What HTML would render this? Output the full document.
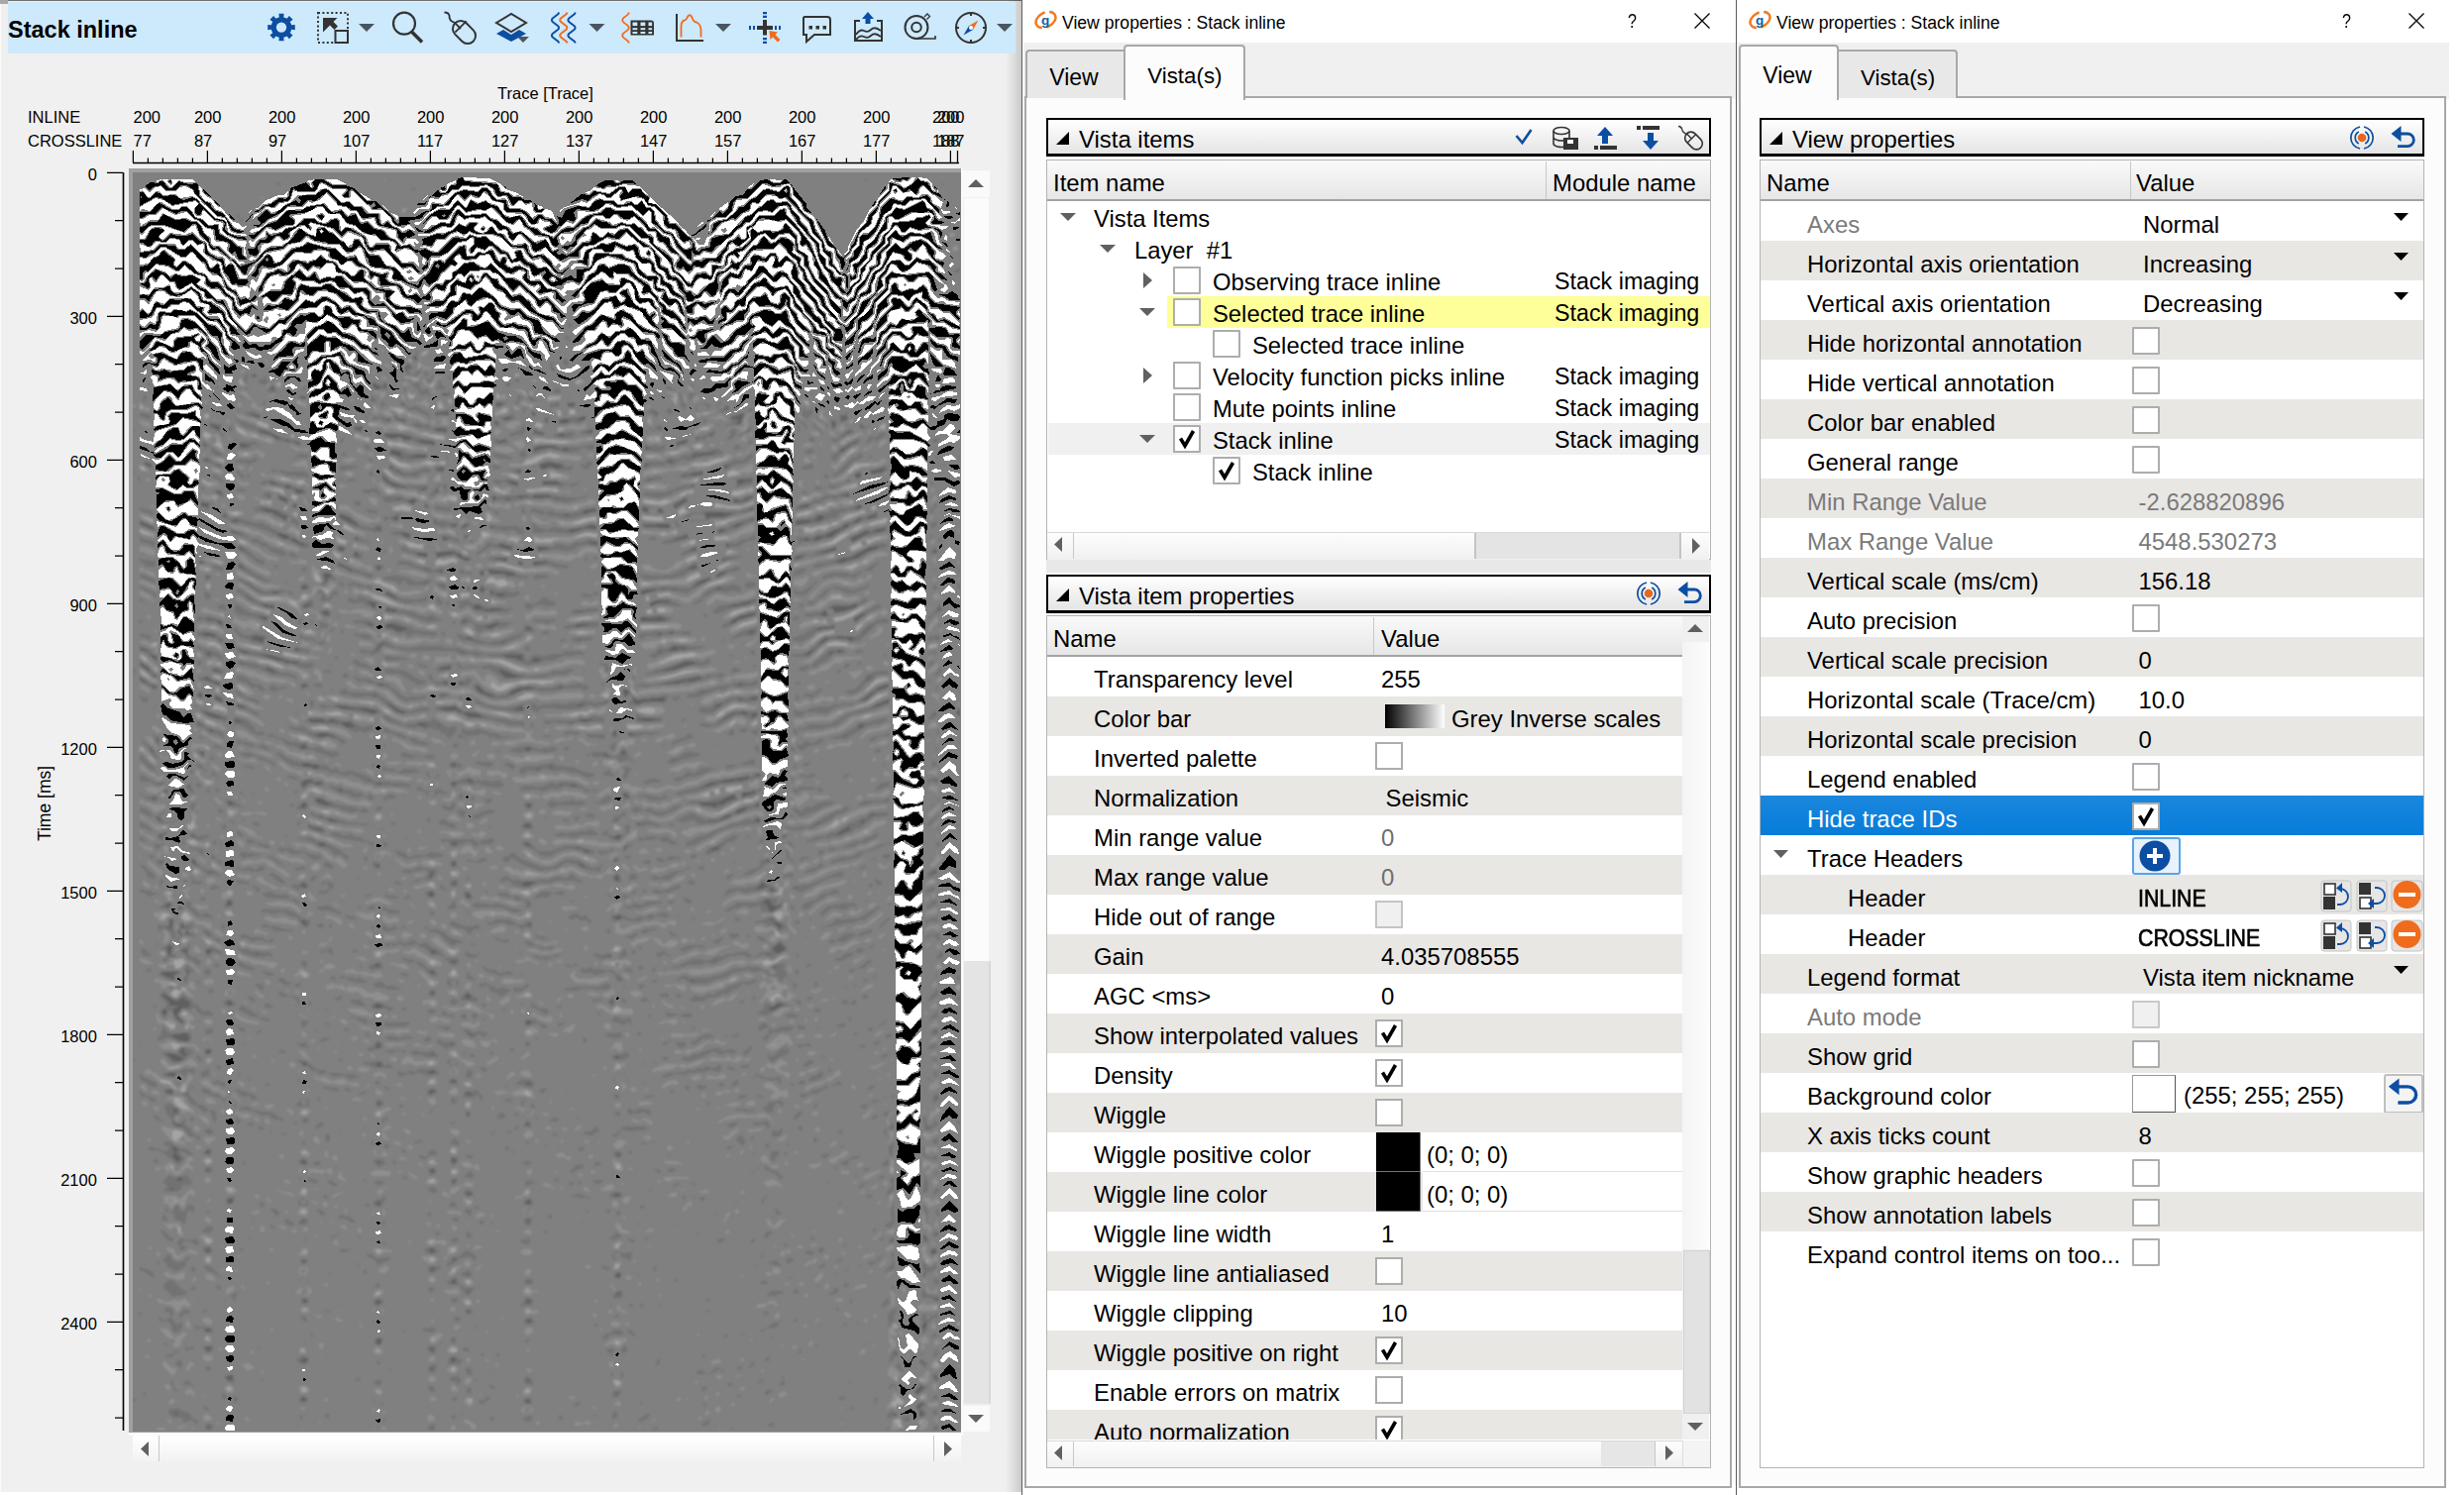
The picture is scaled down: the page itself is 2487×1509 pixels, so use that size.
<!DOCTYPE html>
<html><head><meta charset="utf-8"><title>Stack inline</title>
<style>
html,body{margin:0;padding:0;width:2487px;height:1509px;overflow:hidden;background:#fff}
body{position:relative;font-family:"Liberation Sans",sans-serif}
div{position:absolute;box-sizing:content-box}
.t{white-space:nowrap}
</style></head><body>
<div style="left:1032px;top:0px;width:720px;height:1509px;background:#ffffff"></div>
<svg style="position:absolute;left:1043px;top:10px" width="25" height="20" viewBox="0 0 25 20"><ellipse cx="12.5" cy="10" rx="10.6" ry="7.2" transform="rotate(-28 12.5 10)" fill="none" stroke="#f47a20" stroke-width="2.5" pathLength="100" stroke-dasharray="42 8" stroke-dashoffset="12"/><text x="12.2" y="15.2" font-size="13.5" font-family="Liberation Sans" font-weight="bold" fill="#0c5fa8" text-anchor="middle">g</text></svg>
<div class="t" style="left:1072px;top:13.1px;font-size:17.6px;line-height:20.2px;color:#000;font-weight:normal;">View properties : Stack inline</div>
<div class="t" style="left:1643px;top:10.1px;font-size:20px;line-height:23.0px;color:#000;font-weight:normal;transform:scaleX(0.8);transform-origin:left">?</div>
<svg style="position:absolute;left:1710px;top:13px" width="16" height="16"><path d="M0.5 0.5 L15.5 15.5 M15.5 0.5 L0.5 15.5" stroke="#000" stroke-width="1.3"/></svg>
<div style="left:1033px;top:43px;width:719px;height:57px;background:#f0f0f0"></div>
<div style="left:1034px;top:97px;width:710px;height:1401px;border:2px solid #a8a8a8;background:#fcfcfc"></div>
<div style="left:1035px;top:50px;width:100px;height:47px;border:2px solid #a8a8a8;border-bottom:none;border-right:none;border-radius:4px 0 0 0;background:#e8e8e8"></div>
<div style="left:1134px;top:45px;width:119px;height:54px;border:2px solid #a8a8a8;border-bottom:none;border-radius:4px 4px 0 0;background:#fcfcfc"></div>
<div class="t" style="left:1059.3px;top:65.0px;font-size:23px;line-height:26.4px;color:#000;font-weight:normal;">View</div>
<div class="t" style="left:1158.3px;top:63.5px;font-size:22.3px;line-height:25.6px;color:#000;font-weight:normal;">Vista(s)</div>
<div style="left:1031px;top:0px;width:1px;height:1509px;background:#5a5a5a"></div>
<div style="left:1056px;top:119px;width:667px;height:34px;border:2px solid #000;border-bottom-width:3px;background:linear-gradient(#ffffff,#e4e4e4)"></div>
<svg style="position:absolute;left:1066px;top:133px" width="13" height="13"><path d="M13 0 L13 13 L0 13 Z" fill="#000"/></svg>
<div class="t" style="left:1089px;top:127.4px;font-size:23.9px;line-height:27.5px;color:#000;font-weight:normal;">Vista items</div>
<svg style="position:absolute;left:1528px;top:126px" width="200" height="28" viewBox="0 0 200 28"><path d="M2.5 11 L8.5 18 L17.5 5" fill="none" stroke="#0b4ea2" stroke-width="2.6"/><ellipse cx="48" cy="6" rx="8" ry="3.5" fill="none" stroke="#333" stroke-width="1.6"/><path d="M40 6 V19 A8 3.5 0 0 0 52 22 M40 12.5 A8 3.5 0 0 0 52 15.5 M56 6 V13" fill="none" stroke="#333" stroke-width="1.6"/><rect x="50" y="13" width="15" height="12" fill="#333"/><rect x="54" y="15" width="6" height="4" fill="#fff"/><path d="M92 2 L100 11 H95 V19 H89 V11 H84 Z" fill="#0b4ea2"/><rect x="81" y="21" width="4" height="4" fill="#333"/><rect x="87" y="21" width="17" height="4" fill="#333"/><rect x="124" y="1" width="4" height="4" fill="#333"/><rect x="130" y="1" width="17" height="4" fill="#333"/><path d="M135 8 H141 V16 H146 L138 25 L130 16 H135 Z" fill="#0b4ea2"/><path d="M166 1.5 Q169 1.5 169.5 4 Q170 7 172 8 L175 10" fill="none" stroke="#333" stroke-width="1.4"/><rect x="175.5" y="6" width="12" height="20" rx="6" transform="rotate(-45 181.5 16)" fill="none" stroke="#333" stroke-width="1.6"/><path d="M175.2 18.1 L183.6 9.7 M174.6 9.1 L179.4 13.9" stroke="#333" stroke-width="1.4"/></svg>
<div style="left:1056px;top:161px;width:669px;height:402px;border:1px solid #b4b4b4;background:#fff"></div>
<div style="left:1057px;top:162px;width:669px;height:39px;background:linear-gradient(#fafafa,#e6e6e6);border-bottom:2px solid #a3a3a3"></div>
<div class="t" style="left:1063px;top:171.0px;font-size:23.9px;line-height:27.5px;color:#000;font-weight:normal;">Item name</div>
<div style="left:1560px;top:163px;width:1px;height:38px;background:#c8c8c8"></div>
<div class="t" style="left:1567px;top:171.0px;font-size:23.9px;line-height:27.5px;color:#000;font-weight:normal;">Module name</div>
<svg style="position:absolute;left:1070px;top:215px" width="16" height="8"><path d="M0 0 L16 0 L8.0 8 Z" fill="#606060"/></svg>
<div class="t" style="left:1104px;top:206.9px;font-size:23.8px;line-height:27.4px;color:#000;font-weight:normal;white-space:pre">Vista Items</div>
<svg style="position:absolute;left:1110px;top:247px" width="16" height="8"><path d="M0 0 L16 0 L8.0 8 Z" fill="#606060"/></svg>
<div class="t" style="left:1145px;top:238.9px;font-size:23.8px;line-height:27.4px;color:#000;font-weight:normal;white-space:pre">Layer  #1</div>
<svg style="position:absolute;left:1154px;top:275px" width="9" height="16"><path d="M0 0 L9 8.0 L0 16 Z" fill="#606060"/></svg>
<div style="left:1184px;top:269px;width:24px;height:24px;border:2px solid #adadad;background:#ffffff;border-radius:1px"></div>
<div class="t" style="left:1224px;top:270.9px;font-size:23.8px;line-height:27.4px;color:#000;font-weight:normal;white-space:pre">Observing trace inline</div>
<div class="t" style="left:1569px;top:271.3px;font-size:23.3px;line-height:26.8px;color:#000;font-weight:normal;">Stack imaging</div>
<div style="left:1178px;top:299px;width:548px;height:32px;background:#ffff99"></div>
<svg style="position:absolute;left:1150px;top:311px" width="16" height="8"><path d="M0 0 L16 0 L8.0 8 Z" fill="#606060"/></svg>
<div style="left:1184px;top:301px;width:24px;height:24px;border:2px solid #adadad;background:#ffffff;border-radius:1px"></div>
<div class="t" style="left:1224px;top:302.9px;font-size:23.8px;line-height:27.4px;color:#000;font-weight:normal;white-space:pre">Selected trace inline</div>
<div class="t" style="left:1569px;top:303.3px;font-size:23.3px;line-height:26.8px;color:#000;font-weight:normal;">Stack imaging</div>
<div style="left:1224px;top:333px;width:24px;height:24px;border:2px solid #adadad;background:#ffffff;border-radius:1px"></div>
<div class="t" style="left:1264px;top:334.9px;font-size:23.8px;line-height:27.4px;color:#000;font-weight:normal;white-space:pre">Selected trace inline</div>
<svg style="position:absolute;left:1154px;top:371px" width="9" height="16"><path d="M0 0 L9 8.0 L0 16 Z" fill="#606060"/></svg>
<div style="left:1184px;top:365px;width:24px;height:24px;border:2px solid #adadad;background:#ffffff;border-radius:1px"></div>
<div class="t" style="left:1224px;top:366.9px;font-size:23.8px;line-height:27.4px;color:#000;font-weight:normal;white-space:pre">Velocity function picks inline</div>
<div class="t" style="left:1569px;top:367.3px;font-size:23.3px;line-height:26.8px;color:#000;font-weight:normal;">Stack imaging</div>
<div style="left:1184px;top:397px;width:24px;height:24px;border:2px solid #adadad;background:#ffffff;border-radius:1px"></div>
<div class="t" style="left:1224px;top:398.9px;font-size:23.8px;line-height:27.4px;color:#000;font-weight:normal;white-space:pre">Mute points inline</div>
<div class="t" style="left:1569px;top:399.3px;font-size:23.3px;line-height:26.8px;color:#000;font-weight:normal;">Stack imaging</div>
<div style="left:1058px;top:427px;width:668px;height:32px;background:#f0f0f0"></div>
<svg style="position:absolute;left:1150px;top:439px" width="16" height="8"><path d="M0 0 L16 0 L8.0 8 Z" fill="#606060"/></svg>
<div style="left:1184px;top:429px;width:24px;height:24px;border:2px solid #adadad;background:#ffffff;border-radius:1px"></div>
<svg style="position:absolute;left:1184px;top:429px" width="28" height="28" viewBox="0 0 28 28"><path d="M7.5 13.5 L12 21 L20.5 6" fill="none" stroke="#000" stroke-width="3.6" stroke-linejoin="miter" stroke-linecap="butt"/></svg>
<div class="t" style="left:1224px;top:430.9px;font-size:23.8px;line-height:27.4px;color:#000;font-weight:normal;white-space:pre">Stack inline</div>
<div class="t" style="left:1569px;top:431.3px;font-size:23.3px;line-height:26.8px;color:#000;font-weight:normal;">Stack imaging</div>
<div style="left:1224px;top:461px;width:24px;height:24px;border:2px solid #adadad;background:#ffffff;border-radius:1px"></div>
<svg style="position:absolute;left:1224px;top:461px" width="28" height="28" viewBox="0 0 28 28"><path d="M7.5 13.5 L12 21 L20.5 6" fill="none" stroke="#000" stroke-width="3.6" stroke-linejoin="miter" stroke-linecap="butt"/></svg>
<div class="t" style="left:1264px;top:462.9px;font-size:23.8px;line-height:27.4px;color:#000;font-weight:normal;white-space:pre">Stack inline</div>
<div style="left:1057px;top:537px;width:668px;height:27px;background:linear-gradient(#fdfdfd,#f0f0f0);border-top:1px solid #d8d8d8"></div>
<div style="left:1083px;top:538px;width:1px;height:26px;background:#c8c8c8"></div>
<svg style="position:absolute;left:1064px;top:542px" width="8" height="15"><path d="M8 0 L0 7.5 L8 15 Z" fill="#606060"/></svg>
<div style="left:1488px;top:538px;width:209px;height:26px;background:#e4e4e4;border-left:2px solid #c4c4c4;border-right:2px solid #c4c4c4;box-sizing:border-box"></div>
<svg style="position:absolute;left:1708px;top:543px" width="8" height="16"><path d="M0 0 L8 8.0 L0 16 Z" fill="#606060"/></svg>
<div style="left:1056px;top:565px;width:671px;height:13px;background:#e8e8e8"></div>
<div style="left:1056px;top:580px;width:667px;height:34px;border:2px solid #000;border-bottom-width:3px;background:linear-gradient(#ffffff,#e4e4e4)"></div>
<svg style="position:absolute;left:1066px;top:594px" width="13" height="13"><path d="M13 0 L13 13 L0 13 Z" fill="#000"/></svg>
<div class="t" style="left:1089px;top:588.4px;font-size:23.9px;line-height:27.5px;color:#000;font-weight:normal;">Vista item properties</div>
<svg style="position:absolute;left:0;top:0;overflow:visible" width="1" height="1"><path d="M1662.06 587.97 A11.2 11.2 0 0 0 1662.06 610.03 M1665.94 610.03 A11.2 11.2 0 0 0 1665.94 587.97 M1660.81 593.00 A6.8 6.8 0 0 0 1660.81 605.00 M1667.19 605.00 A6.8 6.8 0 0 0 1667.19 593.00" fill="none" stroke="#0b4ea2" stroke-width="1.7"/><circle cx="1664" cy="599" r="4.3" fill="#e8671e"/><path d="M1703 595 H1710 A6.3 6.3 0 0 1 1710 607.6 H1700" fill="none" stroke="#0b4ea2" stroke-width="2.8"/><path d="M1693.5 595 L1703.5 587 L1703.5 603 Z" fill="#0b4ea2"/></svg>
<div style="left:1056px;top:621px;width:669px;height:859px;border:1px solid #b4b4b4;background:#fff"></div>
<div style="left:1057px;top:622px;width:642px;height:39px;background:linear-gradient(#fafafa,#e6e6e6);border-bottom:2px solid #a3a3a3"></div>
<div class="t" style="left:1063px;top:631.0px;font-size:23.9px;line-height:27.5px;color:#000;font-weight:normal;">Name</div>
<div style="left:1386px;top:623px;width:1px;height:38px;background:#c8c8c8"></div>
<div class="t" style="left:1394px;top:631.0px;font-size:23.9px;line-height:27.5px;color:#000;font-weight:normal;">Value</div>
<div style="left:1057px;top:663px;width:642px;height:790px;overflow:hidden">
<div class="t" style="left:47px;top:8.6px;font-size:23.9px;line-height:27.5px;color:#000">Transparency level</div>
<div class="t" style="left:337px;top:8.6px;font-size:23.9px;line-height:27.5px;color:#000">255</div>
<div style="left:0;top:40px;width:642px;height:40px;background:#e9e7e4"></div>
<div class="t" style="left:47px;top:48.6px;font-size:23.9px;line-height:27.5px;color:#000">Color bar</div>
<div style="left:341px;top:48px;width:60px;height:24px;background:linear-gradient(90deg,#000,#fff)"></div>
<div class="t" style="left:408px;top:48.6px;font-size:23.9px;line-height:27.5px;color:#000">Grey Inverse scales</div>
<div class="t" style="left:47px;top:88.6px;font-size:23.9px;line-height:27.5px;color:#000">Inverted palette</div>
<div style="left:331px;top:86px;width:24px;height:24px;border:2px solid #adadad;background:#fff"></div>
<div style="left:0;top:120px;width:642px;height:40px;background:#e9e7e4"></div>
<div class="t" style="left:47px;top:128.6px;font-size:23.9px;line-height:27.5px;color:#000">Normalization</div>
<div class="t" style="left:341.5px;top:128.6px;font-size:23.9px;line-height:27.5px;color:#000">Seismic</div>
<div class="t" style="left:47px;top:168.6px;font-size:23.9px;line-height:27.5px;color:#000">Min range value</div>
<div class="t" style="left:337px;top:168.6px;font-size:23.9px;line-height:27.5px;color:#6e6e6e">0</div>
<div style="left:0;top:200px;width:642px;height:40px;background:#e9e7e4"></div>
<div class="t" style="left:47px;top:208.6px;font-size:23.9px;line-height:27.5px;color:#000">Max range value</div>
<div class="t" style="left:337px;top:208.6px;font-size:23.9px;line-height:27.5px;color:#6e6e6e">0</div>
<div class="t" style="left:47px;top:248.6px;font-size:23.9px;line-height:27.5px;color:#000">Hide out of range</div>
<div style="left:331px;top:246px;width:24px;height:24px;border:2px solid #c4c4c4;background:#f0f0f0"></div>
<div style="left:0;top:280px;width:642px;height:40px;background:#e9e7e4"></div>
<div class="t" style="left:47px;top:288.6px;font-size:23.9px;line-height:27.5px;color:#000">Gain</div>
<div class="t" style="left:337px;top:288.6px;font-size:23.9px;line-height:27.5px;color:#000">4.035708555</div>
<div class="t" style="left:47px;top:328.6px;font-size:23.9px;line-height:27.5px;color:#000">AGC &lt;ms&gt;</div>
<div class="t" style="left:337px;top:328.6px;font-size:23.9px;line-height:27.5px;color:#000">0</div>
<div style="left:0;top:360px;width:642px;height:40px;background:#e9e7e4"></div>
<div class="t" style="left:47px;top:368.6px;font-size:23.9px;line-height:27.5px;color:#000">Show interpolated values</div>
<div style="left:331px;top:366px;width:24px;height:24px;border:2px solid #adadad;background:#fff"></div>
<svg style="position:absolute;left:331px;top:366px" width="28" height="28" viewBox="0 0 28 28"><path d="M7.5 13.5 L12 21 L20.5 6" fill="none" stroke="#000" stroke-width="3.6"/></svg>
<div class="t" style="left:47px;top:408.6px;font-size:23.9px;line-height:27.5px;color:#000">Density</div>
<div style="left:331px;top:406px;width:24px;height:24px;border:2px solid #adadad;background:#fff"></div>
<svg style="position:absolute;left:331px;top:406px" width="28" height="28" viewBox="0 0 28 28"><path d="M7.5 13.5 L12 21 L20.5 6" fill="none" stroke="#000" stroke-width="3.6"/></svg>
<div style="left:0;top:440px;width:642px;height:40px;background:#e9e7e4"></div>
<div class="t" style="left:47px;top:448.6px;font-size:23.9px;line-height:27.5px;color:#000">Wiggle</div>
<div style="left:331px;top:446px;width:24px;height:24px;border:2px solid #adadad;background:#fff"></div>
<div class="t" style="left:47px;top:488.6px;font-size:23.9px;line-height:27.5px;color:#000">Wiggle positive color</div>
<div style="left:379px;top:480px;width:262px;height:39px;background:#fff;border-bottom:1px solid #e0e0e0"></div>
<div style="left:332px;top:480px;width:44px;height:39px;background:#000;border-right:1px solid #777;border-bottom:1px solid #777"></div>
<div class="t" style="left:383px;top:488.6px;font-size:23.9px;line-height:27.5px;color:#000">(0; 0; 0)</div>
<div style="left:0;top:520px;width:642px;height:40px;background:#e9e7e4"></div>
<div class="t" style="left:47px;top:528.6px;font-size:23.9px;line-height:27.5px;color:#000">Wiggle line color</div>
<div style="left:379px;top:520px;width:262px;height:39px;background:#fff;border-bottom:1px solid #e0e0e0"></div>
<div style="left:332px;top:520px;width:44px;height:39px;background:#000;border-right:1px solid #777;border-bottom:1px solid #777"></div>
<div class="t" style="left:383px;top:528.6px;font-size:23.9px;line-height:27.5px;color:#000">(0; 0; 0)</div>
<div class="t" style="left:47px;top:568.6px;font-size:23.9px;line-height:27.5px;color:#000">Wiggle line width</div>
<div class="t" style="left:337px;top:568.6px;font-size:23.9px;line-height:27.5px;color:#000">1</div>
<div style="left:0;top:600px;width:642px;height:40px;background:#e9e7e4"></div>
<div class="t" style="left:47px;top:608.6px;font-size:23.9px;line-height:27.5px;color:#000">Wiggle line antialiased</div>
<div style="left:331px;top:606px;width:24px;height:24px;border:2px solid #adadad;background:#fff"></div>
<div class="t" style="left:47px;top:648.6px;font-size:23.9px;line-height:27.5px;color:#000">Wiggle clipping</div>
<div class="t" style="left:337px;top:648.6px;font-size:23.9px;line-height:27.5px;color:#000">10</div>
<div style="left:0;top:680px;width:642px;height:40px;background:#e9e7e4"></div>
<div class="t" style="left:47px;top:688.6px;font-size:23.9px;line-height:27.5px;color:#000">Wiggle positive on right</div>
<div style="left:331px;top:686px;width:24px;height:24px;border:2px solid #adadad;background:#fff"></div>
<svg style="position:absolute;left:331px;top:686px" width="28" height="28" viewBox="0 0 28 28"><path d="M7.5 13.5 L12 21 L20.5 6" fill="none" stroke="#000" stroke-width="3.6"/></svg>
<div class="t" style="left:47px;top:728.6px;font-size:23.9px;line-height:27.5px;color:#000">Enable errors on matrix</div>
<div style="left:331px;top:726px;width:24px;height:24px;border:2px solid #adadad;background:#fff"></div>
<div style="left:0;top:760px;width:642px;height:40px;background:#e9e7e4"></div>
<div class="t" style="left:47px;top:768.6px;font-size:23.9px;line-height:27.5px;color:#000">Auto normalization</div>
<div style="left:331px;top:766px;width:24px;height:24px;border:2px solid #adadad;background:#fff"></div>
<svg style="position:absolute;left:331px;top:766px" width="28" height="28" viewBox="0 0 28 28"><path d="M7.5 13.5 L12 21 L20.5 6" fill="none" stroke="#000" stroke-width="3.6"/></svg>
</div>
<div style="left:1698px;top:622px;width:27px;height:831px;background:#f0f0f0"></div>
<div style="left:1698px;top:648px;width:27px;height:613px;background:linear-gradient(90deg,#f4f4f4,#fcfcfc)"></div>
<div style="left:1699px;top:1262px;width:25px;height:163px;background:#e2e2e2;border:1px solid #d2d2d2"></div>
<svg style="position:absolute;left:1703px;top:630px" width="16" height="8"><path d="M0 8 L16 8 L8.0 0 Z" fill="#606060"/></svg>
<svg style="position:absolute;left:1703px;top:1436px" width="16" height="8"><path d="M0 0 L16 0 L8.0 8 Z" fill="#606060"/></svg>
<div style="left:1057px;top:1454px;width:668px;height:26px;background:linear-gradient(#fdfdfd,#f0f0f0);border-top:1px solid #d8d8d8"></div>
<div style="left:1083px;top:1455px;width:1px;height:25px;background:#c8c8c8"></div>
<svg style="position:absolute;left:1064px;top:1459px" width="8" height="15"><path d="M8 0 L0 7.5 L8 15 Z" fill="#606060"/></svg>
<div style="left:1616px;top:1455px;width:54px;height:25px;background:#e6e6e6"></div>
<div style="left:1670px;top:1455px;width:1px;height:25px;background:#c8c8c8"></div>
<svg style="position:absolute;left:1681px;top:1459px" width="8" height="15"><path d="M0 0 L8 7.5 L0 15 Z" fill="#606060"/></svg>
<div style="left:1698px;top:1454px;width:27px;height:26px;background:#f4f4f4;border-left:1px solid #ddd"></div>
<div style="left:1753px;top:0px;width:719px;height:1509px;background:#ffffff"></div>
<svg style="position:absolute;left:1764px;top:10px" width="25" height="20" viewBox="0 0 25 20"><ellipse cx="12.5" cy="10" rx="10.6" ry="7.2" transform="rotate(-28 12.5 10)" fill="none" stroke="#f47a20" stroke-width="2.5" pathLength="100" stroke-dasharray="42 8" stroke-dashoffset="12"/><text x="12.2" y="15.2" font-size="13.5" font-family="Liberation Sans" font-weight="bold" fill="#0c5fa8" text-anchor="middle">g</text></svg>
<div class="t" style="left:1793px;top:13.1px;font-size:17.6px;line-height:20.2px;color:#000;font-weight:normal;">View properties : Stack inline</div>
<div class="t" style="left:2364px;top:10.1px;font-size:20px;line-height:23.0px;color:#000;font-weight:normal;transform:scaleX(0.8);transform-origin:left">?</div>
<svg style="position:absolute;left:2431px;top:13px" width="16" height="16"><path d="M0.5 0.5 L15.5 15.5 M15.5 0.5 L0.5 15.5" stroke="#000" stroke-width="1.3"/></svg>
<div style="left:1754px;top:43px;width:718px;height:57px;background:#f0f0f0"></div>
<div style="left:1755px;top:97px;width:710px;height:1401px;border:2px solid #a8a8a8;background:#fcfcfc"></div>
<div style="left:1755px;top:45px;width:97px;height:54px;border:2px solid #a8a8a8;border-bottom:none;border-radius:4px 4px 0 0;background:#fcfcfc"></div>
<div style="left:1856px;top:50px;width:118px;height:47px;border:2px solid #a8a8a8;border-bottom:none;border-left:none;border-radius:0 4px 0 0;background:#e8e8e8"></div>
<div class="t" style="left:1779.3px;top:62.9px;font-size:23px;line-height:26.4px;color:#000;font-weight:normal;">View</div>
<div class="t" style="left:1878px;top:65.6px;font-size:22.3px;line-height:25.6px;color:#000;font-weight:normal;">Vista(s)</div>
<div style="left:1752px;top:0px;width:1px;height:1509px;background:#5a5a5a"></div>
<div style="left:1776px;top:119px;width:667px;height:34px;border:2px solid #000;border-bottom-width:3px;background:linear-gradient(#ffffff,#e4e4e4)"></div>
<svg style="position:absolute;left:1786px;top:133px" width="13" height="13"><path d="M13 0 L13 13 L0 13 Z" fill="#000"/></svg>
<div class="t" style="left:1809px;top:127.4px;font-size:23.9px;line-height:27.5px;color:#000;font-weight:normal;">View properties</div>
<svg style="position:absolute;left:0;top:0;overflow:visible" width="1" height="1"><path d="M2382.06 127.97 A11.2 11.2 0 0 0 2382.06 150.03 M2385.94 150.03 A11.2 11.2 0 0 0 2385.94 127.97 M2380.81 133.00 A6.8 6.8 0 0 0 2380.81 145.00 M2387.19 145.00 A6.8 6.8 0 0 0 2387.19 133.00" fill="none" stroke="#0b4ea2" stroke-width="1.7"/><circle cx="2384" cy="139" r="4.3" fill="#e8671e"/><path d="M2423 135 H2430 A6.3 6.3 0 0 1 2430 147.6 H2420" fill="none" stroke="#0b4ea2" stroke-width="2.8"/><path d="M2413.5 135 L2423.5 127 L2423.5 143 Z" fill="#0b4ea2"/></svg>
<div style="left:1776px;top:161px;width:669px;height:1319px;border:1px solid #b4b4b4;background:#fff"></div>
<div style="left:1777px;top:162px;width:669px;height:39px;background:linear-gradient(#fafafa,#e6e6e6);border-bottom:2px solid #a3a3a3"></div>
<div class="t" style="left:1783px;top:171.0px;font-size:23.9px;line-height:27.5px;color:#000;font-weight:normal;">Name</div>
<div style="left:2150px;top:163px;width:1px;height:38px;background:#c8c8c8"></div>
<div class="t" style="left:2156px;top:171.0px;font-size:23.9px;line-height:27.5px;color:#000;font-weight:normal;">Value</div>
<div class="t" style="left:1824px;top:212.8px;font-size:23.9px;line-height:27.5px;color:#7a7a7a;font-weight:normal;">Axes</div>
<div class="t" style="left:2163px;top:212.8px;font-size:23.9px;line-height:27.5px;color:#000;font-weight:normal;">Normal</div>
<svg style="position:absolute;left:2416px;top:215px" width="15" height="8"><path d="M0 0 L15 0 L7.5 8 Z" fill="#000"/></svg>
<div style="left:1777px;top:243px;width:669px;height:40px;background:#e9e7e4"></div>
<div class="t" style="left:1824px;top:252.8px;font-size:23.9px;line-height:27.5px;color:#000;font-weight:normal;">Horizontal axis orientation</div>
<div class="t" style="left:2163px;top:252.8px;font-size:23.9px;line-height:27.5px;color:#000;font-weight:normal;">Increasing</div>
<svg style="position:absolute;left:2416px;top:255px" width="15" height="8"><path d="M0 0 L15 0 L7.5 8 Z" fill="#000"/></svg>
<div class="t" style="left:1824px;top:292.8px;font-size:23.9px;line-height:27.5px;color:#000;font-weight:normal;">Vertical axis orientation</div>
<div class="t" style="left:2163px;top:292.8px;font-size:23.9px;line-height:27.5px;color:#000;font-weight:normal;">Decreasing</div>
<svg style="position:absolute;left:2416px;top:295px" width="15" height="8"><path d="M0 0 L15 0 L7.5 8 Z" fill="#000"/></svg>
<div style="left:1777px;top:323px;width:669px;height:40px;background:#e9e7e4"></div>
<div class="t" style="left:1824px;top:332.8px;font-size:23.9px;line-height:27.5px;color:#000;font-weight:normal;">Hide horizontal annotation</div>
<div style="left:2152px;top:330px;width:24px;height:24px;border:2px solid #adadad;background:#ffffff;border-radius:1px"></div>
<div class="t" style="left:1824px;top:372.8px;font-size:23.9px;line-height:27.5px;color:#000;font-weight:normal;">Hide vertical annotation</div>
<div style="left:2152px;top:370px;width:24px;height:24px;border:2px solid #adadad;background:#ffffff;border-radius:1px"></div>
<div style="left:1777px;top:403px;width:669px;height:40px;background:#e9e7e4"></div>
<div class="t" style="left:1824px;top:412.8px;font-size:23.9px;line-height:27.5px;color:#000;font-weight:normal;">Color bar enabled</div>
<div style="left:2152px;top:410px;width:24px;height:24px;border:2px solid #adadad;background:#ffffff;border-radius:1px"></div>
<div class="t" style="left:1824px;top:452.8px;font-size:23.9px;line-height:27.5px;color:#000;font-weight:normal;">General range</div>
<div style="left:2152px;top:450px;width:24px;height:24px;border:2px solid #adadad;background:#ffffff;border-radius:1px"></div>
<div style="left:1777px;top:483px;width:669px;height:40px;background:#e9e7e4"></div>
<div class="t" style="left:1824px;top:492.8px;font-size:23.9px;line-height:27.5px;color:#7a7a7a;font-weight:normal;">Min Range Value</div>
<div class="t" style="left:2158.5px;top:492.8px;font-size:23.9px;line-height:27.5px;color:#7a7a7a;font-weight:normal;">-2.628820896</div>
<div class="t" style="left:1824px;top:532.8px;font-size:23.9px;line-height:27.5px;color:#7a7a7a;font-weight:normal;">Max Range Value</div>
<div class="t" style="left:2158.5px;top:532.8px;font-size:23.9px;line-height:27.5px;color:#7a7a7a;font-weight:normal;">4548.530273</div>
<div style="left:1777px;top:563px;width:669px;height:40px;background:#e9e7e4"></div>
<div class="t" style="left:1824px;top:572.8px;font-size:23.9px;line-height:27.5px;color:#000;font-weight:normal;">Vertical scale (ms/cm)</div>
<div class="t" style="left:2158.5px;top:572.8px;font-size:23.9px;line-height:27.5px;color:#000;font-weight:normal;">156.18</div>
<div class="t" style="left:1824px;top:612.8px;font-size:23.9px;line-height:27.5px;color:#000;font-weight:normal;">Auto precision</div>
<div style="left:2152px;top:610px;width:24px;height:24px;border:2px solid #adadad;background:#ffffff;border-radius:1px"></div>
<div style="left:1777px;top:643px;width:669px;height:40px;background:#e9e7e4"></div>
<div class="t" style="left:1824px;top:652.8px;font-size:23.9px;line-height:27.5px;color:#000;font-weight:normal;">Vertical scale precision</div>
<div class="t" style="left:2158.5px;top:652.8px;font-size:23.9px;line-height:27.5px;color:#000;font-weight:normal;">0</div>
<div class="t" style="left:1824px;top:692.8px;font-size:23.9px;line-height:27.5px;color:#000;font-weight:normal;">Horizontal scale (Trace/cm)</div>
<div class="t" style="left:2158.5px;top:692.8px;font-size:23.9px;line-height:27.5px;color:#000;font-weight:normal;">10.0</div>
<div style="left:1777px;top:723px;width:669px;height:40px;background:#e9e7e4"></div>
<div class="t" style="left:1824px;top:732.8px;font-size:23.9px;line-height:27.5px;color:#000;font-weight:normal;">Horizontal scale precision</div>
<div class="t" style="left:2158.5px;top:732.8px;font-size:23.9px;line-height:27.5px;color:#000;font-weight:normal;">0</div>
<div class="t" style="left:1824px;top:772.8px;font-size:23.9px;line-height:27.5px;color:#000;font-weight:normal;">Legend enabled</div>
<div style="left:2152px;top:770px;width:24px;height:24px;border:2px solid #adadad;background:#ffffff;border-radius:1px"></div>
<div style="left:1777px;top:803px;width:669px;height:40px;background:linear-gradient(#1b87dd,#067cda)"></div>
<div class="t" style="left:1824px;top:812.8px;font-size:23.9px;line-height:27.5px;color:#fff;font-weight:normal;">Hide trace IDs</div>
<div style="left:2152px;top:810px;width:24px;height:24px;border:2px solid #adadad;background:#ffffff;border-radius:1px"></div>
<svg style="position:absolute;left:2152px;top:810px" width="28" height="28" viewBox="0 0 28 28"><path d="M7.5 13.5 L12 21 L20.5 6" fill="none" stroke="#000" stroke-width="3.6" stroke-linejoin="miter" stroke-linecap="butt"/></svg>
<div class="t" style="left:1824px;top:852.8px;font-size:23.9px;line-height:27.5px;color:#000;font-weight:normal;">Trace Headers</div>
<svg style="position:absolute;left:1790px;top:858px" width="15" height="8"><path d="M0 0 L15 0 L7.5 8 Z" fill="#606060"/></svg>
<div style="left:2152px;top:845px;width:45px;height:34px;border:2px solid #5aa3e6;border-radius:3px;background:#e8f2fc"></div>
<svg style="position:absolute;left:2158px;top:847px" width="34" height="34" viewBox="0 0 34 34"><circle cx="17" cy="17" r="15.5" fill="#0b4ea2"/><path d="M17 9 V25 M9 17 H25" stroke="#fff" stroke-width="4"/></svg>
<div style="left:1777px;top:883px;width:669px;height:40px;background:#e9e7e4"></div>
<div class="t" style="left:1865px;top:892.8px;font-size:23.9px;line-height:27.5px;color:#000;font-weight:normal;">Header</div>
<div class="t" style="left:2158px;top:893.3px;font-size:24.5px;line-height:28.2px;color:#000;font-weight:normal;-webkit-text-stroke:0.7px #000;transform:scaleX(0.87);transform-origin:left">INLINE</div>
<svg style="position:absolute;left:2342px;top:888px" width="104" height="34" viewBox="0 0 104 34"><rect x="1" y="1" width="30" height="31" rx="3" fill="#e6e6e6" stroke="#c4c4c4"/><rect x="4" y="4" width="11" height="11" fill="#fff" stroke="#333" stroke-width="1.6"/><rect x="3" y="17" width="12" height="13" fill="#333"/><path d="M20 9 A8 8 0 0 1 20 25 H17" fill="none" stroke="#0b4ea2" stroke-width="1.8"/><path d="M22 3 L16 8.5 L22 13 Z" fill="#0b4ea2"/><rect x="37" y="1" width="30" height="31" rx="3" fill="#e6e6e6" stroke="#c4c4c4"/><rect x="39" y="3" width="12" height="12" fill="#333"/><rect x="40" y="18" width="11" height="11" fill="#fff" stroke="#333" stroke-width="1.6"/><path d="M55 8 H57 A8 8 0 0 1 57 24 H53" fill="none" stroke="#0b4ea2" stroke-width="1.8"/><path d="M54 19 L48 24 L54 29 Z" fill="#0b4ea2"/><rect x="72" y="1" width="31" height="31" rx="3" fill="#e6e6e6" stroke="#c4c4c4"/><circle cx="87.5" cy="15" r="14" fill="#f06c1c"/><rect x="79" y="13" width="17" height="4" fill="#fff"/></svg>
<div class="t" style="left:1865px;top:932.8px;font-size:23.9px;line-height:27.5px;color:#000;font-weight:normal;">Header</div>
<div class="t" style="left:2158px;top:933.3px;font-size:24.5px;line-height:28.2px;color:#000;font-weight:normal;-webkit-text-stroke:0.7px #000;transform:scaleX(0.87);transform-origin:left">CROSSLINE</div>
<svg style="position:absolute;left:2342px;top:928px" width="104" height="34" viewBox="0 0 104 34"><rect x="1" y="1" width="30" height="31" rx="3" fill="#e6e6e6" stroke="#c4c4c4"/><rect x="4" y="4" width="11" height="11" fill="#fff" stroke="#333" stroke-width="1.6"/><rect x="3" y="17" width="12" height="13" fill="#333"/><path d="M20 9 A8 8 0 0 1 20 25 H17" fill="none" stroke="#0b4ea2" stroke-width="1.8"/><path d="M22 3 L16 8.5 L22 13 Z" fill="#0b4ea2"/><rect x="37" y="1" width="30" height="31" rx="3" fill="#e6e6e6" stroke="#c4c4c4"/><rect x="39" y="3" width="12" height="12" fill="#333"/><rect x="40" y="18" width="11" height="11" fill="#fff" stroke="#333" stroke-width="1.6"/><path d="M55 8 H57 A8 8 0 0 1 57 24 H53" fill="none" stroke="#0b4ea2" stroke-width="1.8"/><path d="M54 19 L48 24 L54 29 Z" fill="#0b4ea2"/><rect x="72" y="1" width="31" height="31" rx="3" fill="#e6e6e6" stroke="#c4c4c4"/><circle cx="87.5" cy="15" r="14" fill="#f06c1c"/><rect x="79" y="13" width="17" height="4" fill="#fff"/></svg>
<div style="left:1777px;top:963px;width:669px;height:40px;background:#e9e7e4"></div>
<div class="t" style="left:1824px;top:972.8px;font-size:23.9px;line-height:27.5px;color:#000;font-weight:normal;">Legend format</div>
<div class="t" style="left:2163px;top:972.8px;font-size:23.9px;line-height:27.5px;color:#000;font-weight:normal;">Vista item nickname</div>
<svg style="position:absolute;left:2416px;top:975px" width="15" height="8"><path d="M0 0 L15 0 L7.5 8 Z" fill="#000"/></svg>
<div class="t" style="left:1824px;top:1012.8px;font-size:23.9px;line-height:27.5px;color:#7a7a7a;font-weight:normal;">Auto mode</div>
<div style="left:2152px;top:1010px;width:24px;height:24px;border:2px solid #c8c8c8;background:#f0f0f0;border-radius:1px"></div>
<div style="left:1777px;top:1043px;width:669px;height:40px;background:#e9e7e4"></div>
<div class="t" style="left:1824px;top:1052.8px;font-size:23.9px;line-height:27.5px;color:#000;font-weight:normal;">Show grid</div>
<div style="left:2152px;top:1050px;width:24px;height:24px;border:2px solid #adadad;background:#ffffff;border-radius:1px"></div>
<div class="t" style="left:1824px;top:1092.8px;font-size:23.9px;line-height:27.5px;color:#000;font-weight:normal;">Background color</div>
<div style="left:2152px;top:1085px;width:44px;height:38px;background:#fff;border:1px solid #555;border-top-color:#999;border-left-color:#999;box-sizing:border-box"></div>
<div class="t" style="left:2204px;top:1091.8px;font-size:23.9px;line-height:27.5px;color:#000;font-weight:normal;">(255; 255; 255)</div>
<div style="left:2406px;top:1084px;width:36px;height:36px;border:2px solid #bfbfbf;border-radius:3px;background:#f4f4f4"></div>
<svg style="position:absolute;left:2408px;top:1085px" width="36" height="36" viewBox="0 0 32 32"><path d="M10 10.5 H20 A7.2 7.2 0 0 1 20 24.9 H11" fill="none" stroke="#0b4ea2" stroke-width="3"/><path d="M12 3 L2.5 10.5 L12 18 Z" fill="#0b4ea2"/></svg>
<div style="left:1777px;top:1123px;width:669px;height:40px;background:#e9e7e4"></div>
<div class="t" style="left:1824px;top:1132.8px;font-size:23.9px;line-height:27.5px;color:#000;font-weight:normal;">X axis ticks count</div>
<div class="t" style="left:2158.5px;top:1132.8px;font-size:23.9px;line-height:27.5px;color:#000;font-weight:normal;">8</div>
<div class="t" style="left:1824px;top:1172.8px;font-size:23.9px;line-height:27.5px;color:#000;font-weight:normal;">Show graphic headers</div>
<div style="left:2152px;top:1170px;width:24px;height:24px;border:2px solid #adadad;background:#ffffff;border-radius:1px"></div>
<div style="left:1777px;top:1203px;width:669px;height:40px;background:#e9e7e4"></div>
<div class="t" style="left:1824px;top:1212.8px;font-size:23.9px;line-height:27.5px;color:#000;font-weight:normal;">Show annotation labels</div>
<div style="left:2152px;top:1210px;width:24px;height:24px;border:2px solid #adadad;background:#ffffff;border-radius:1px"></div>
<div class="t" style="left:1824px;top:1252.8px;font-size:23.9px;line-height:27.5px;color:#000;font-weight:normal;">Expand control items on too...</div>
<div style="left:2152px;top:1250px;width:24px;height:24px;border:2px solid #adadad;background:#ffffff;border-radius:1px"></div>
<div style="left:0px;top:0px;width:1031px;height:1506px;background:#f0f0f0"></div>
<div style="left:0px;top:0px;width:1px;height:1506px;background:#fbfbfb"></div>
<div style="left:8px;top:0px;width:1023px;height:1px;background:#707070"></div>
<div style="left:0px;top:0px;width:8px;height:4px;background:#a8a8a8;border-radius:0"></div>
<div style="left:1015px;top:0px;width:16px;height:1506px;background:linear-gradient(90deg,rgba(0,0,0,0),rgba(0,0,0,0.16))"></div>
<div style="left:1031px;top:0px;width:1px;height:1506px;background:#606060"></div>
<div style="left:8px;top:2px;width:1017px;height:52px;background:#cde9fc"></div>
<div class="t" style="left:8px;top:17.1px;font-size:23.5px;line-height:27.0px;color:#000;font-weight:bold;">Stack inline</div>
<svg style="position:absolute;left:0;top:0" width="1031" height="56"><path d="M293.62 23.65 L294.15 25.33 L297.76 25.00 L297.76 30.20 L294.15 29.87 L293.62 31.55 L293.60 31.61 L292.78 33.17 L295.57 35.49 L291.89 39.17 L289.57 36.38 L288.01 37.20 L287.95 37.22 L286.27 37.75 L286.60 41.36 L281.40 41.36 L281.73 37.75 L280.05 37.22 L279.99 37.20 L278.43 36.38 L276.11 39.17 L272.43 35.49 L275.22 33.17 L274.40 31.61 L274.38 31.55 L273.85 29.87 L270.24 30.20 L270.24 25.00 L273.85 25.33 L274.38 23.65 L274.40 23.59 L275.22 22.03 L272.43 19.71 L276.11 16.03 L278.43 18.82 L279.99 18.00 L280.05 17.98 L281.73 17.45 L281.40 13.84 L286.60 13.84 L286.27 17.45 L287.95 17.98 L288.01 18.00 L289.57 18.82 L291.89 16.03 L295.57 19.71 L292.78 22.03 L293.60 23.59 Z M289.2 27.6 A5.2 5.2 0 1 0 278.8 27.6 A5.2 5.2 0 1 0 289.2 27.6 Z" fill="#0b4ea2" fill-rule="evenodd"/><rect x="321" y="13" width="30" height="30" fill="none" stroke="#333" stroke-width="2" stroke-dasharray="2 2.4"/><rect x="338.5" y="31" width="12.5" height="12" fill="#cde9fc" stroke="#333" stroke-width="2"/><path d="M326 18 L340.5 18 L336.5 22 L341 26.5 L337.5 30 L333 25.5 L326 32.5 Z" fill="#333"/><path d="M362 24 H378 L370 32 Z" fill="#4a5560"/><circle cx="408" cy="23.7" r="11" fill="none" stroke="#333" stroke-width="2.2"/><path d="M415.5 32 L426 42.5" stroke="#333" stroke-width="3.6"/><path d="M448.5 12.5 Q453 12.5 453.5 16 Q453.5 20 456 21.5 L460 23.5" fill="none" stroke="#333" stroke-width="1.8"/><rect x="460.5" y="19.5" width="16" height="26" rx="8" transform="rotate(-45 468.5 32.5)" fill="none" stroke="#333" stroke-width="2"/><path d="M459.3 32.7 L470.7 21.3 M459.7 23.7 L465 29" stroke="#333" stroke-width="1.8"/><path d="M501 23 L516 14 L531 23 L516 32 Z" fill="none" stroke="#333" stroke-width="2"/><path d="M501 34 L508 30 L516 35 L524 30 L531 34 L516 42 Z" fill="#0b4ea2"/><path d="M522 37 H534 L528 43 Z" fill="#4a5560"/><path d="M564.10 12.50 L563.92 13.28 L563.41 14.05 L562.62 14.82 L561.61 15.60 L560.50 16.38 L559.39 17.15 L558.38 17.93 L557.59 18.70 L557.08 19.48 L556.90 20.25 L557.08 21.02 L557.59 21.80 L558.38 22.57 L559.39 23.35 L560.50 24.12 L561.61 24.90 L562.62 25.68 L563.41 26.45 L563.92 27.23 L564.10 28.00 L563.92 28.77 L563.41 29.55 L562.62 30.32 L561.61 31.10 L560.50 31.88 L559.39 32.65 L558.38 33.42 L557.59 34.20 L557.08 34.98 L556.90 35.75 L557.08 36.52 L557.59 37.30 L558.38 38.08 L559.39 38.85 L560.50 39.62 L561.61 40.40 L562.62 41.17 L563.41 41.95 L563.92 42.73 L564.10 43.50" fill="none" stroke="#0b4ea2" stroke-width="1.9"/><path d="M572.40 12.50 L572.22 13.28 L571.71 14.05 L570.92 14.82 L569.91 15.60 L568.80 16.38 L567.69 17.15 L566.68 17.93 L565.89 18.70 L565.38 19.48 L565.20 20.25 L565.38 21.02 L565.89 21.80 L566.68 22.57 L567.69 23.35 L568.80 24.12 L569.91 24.90 L570.92 25.68 L571.71 26.45 L572.22 27.23 L572.40 28.00 L572.22 28.77 L571.71 29.55 L570.92 30.32 L569.91 31.10 L568.80 31.88 L567.69 32.65 L566.68 33.42 L565.89 34.20 L565.38 34.98 L565.20 35.75 L565.38 36.52 L565.89 37.30 L566.68 38.08 L567.69 38.85 L568.80 39.62 L569.91 40.40 L570.92 41.17 L571.71 41.95 L572.22 42.73 L572.40 43.50" fill="none" stroke="#f06c1c" stroke-width="1.9"/><path d="M580.60 12.50 L580.42 13.28 L579.91 14.05 L579.12 14.82 L578.11 15.60 L577.00 16.38 L575.89 17.15 L574.88 17.93 L574.09 18.70 L573.58 19.48 L573.40 20.25 L573.58 21.02 L574.09 21.80 L574.88 22.57 L575.89 23.35 L577.00 24.12 L578.11 24.90 L579.12 25.68 L579.91 26.45 L580.42 27.23 L580.60 28.00 L580.42 28.77 L579.91 29.55 L579.12 30.32 L578.11 31.10 L577.00 31.88 L575.89 32.65 L574.88 33.42 L574.09 34.20 L573.58 34.98 L573.40 35.75 L573.58 36.52 L574.09 37.30 L574.88 38.08 L575.89 38.85 L577.00 39.62 L578.11 40.40 L579.12 41.17 L579.91 41.95 L580.42 42.73 L580.60 43.50" fill="none" stroke="#0b4ea2" stroke-width="1.9"/><path d="M594.5 24 H610.5 L602.5 32 Z" fill="#4a5560"/><path d="M634.80 12.50 L634.64 13.28 L634.17 14.05 L633.44 14.82 L632.52 15.60 L631.50 16.38 L630.48 17.15 L629.56 17.93 L628.83 18.70 L628.36 19.48 L628.20 20.25 L628.36 21.02 L628.83 21.80 L629.56 22.57 L630.48 23.35 L631.50 24.12 L632.52 24.90 L633.44 25.68 L634.17 26.45 L634.64 27.23 L634.80 28.00 L634.64 28.77 L634.17 29.55 L633.44 30.32 L632.52 31.10 L631.50 31.88 L630.48 32.65 L629.56 33.42 L628.83 34.20 L628.36 34.98 L628.20 35.75 L628.36 36.52 L628.83 37.30 L629.56 38.08 L630.48 38.85 L631.50 39.62 L632.52 40.40 L633.44 41.17 L634.17 41.95 L634.64 42.73 L634.80 43.50" fill="none" stroke="#f06c1c" stroke-width="1.8"/><path d="M636.5 20.5 H657 Q660 20.5 660 23.5 V35.5 H636.5 Z" fill="#333"/><rect x="638.5" y="22.5" width="4.8" height="3.6" fill="#cde9fc"/><rect x="638.5" y="28.2" width="4.8" height="2.0" fill="#cde9fc"/><rect x="638.5" y="32.0" width="4.8" height="2.0" fill="#cde9fc"/><rect x="646.5" y="22.5" width="4.8" height="3.6" fill="#cde9fc"/><rect x="646.5" y="28.2" width="4.8" height="2.0" fill="#cde9fc"/><rect x="646.5" y="32.0" width="4.8" height="2.0" fill="#cde9fc"/><rect x="654.5" y="22.5" width="3.6" height="3.6" fill="#cde9fc"/><rect x="654.5" y="28.2" width="3.6" height="2.0" fill="#cde9fc"/><rect x="654.5" y="32.0" width="3.6" height="2.0" fill="#cde9fc"/><path d="M683 14 V41 H710" fill="none" stroke="#333" stroke-width="2"/><path d="M687.5 37.5 V26 Q688 21 691 20.5 Q693 20 694 17 Q695.5 14.5 697 15.5 Q698.5 17 699 19 Q700 22 703 22.5 Q707 24 707.5 30 V37.5" fill="none" stroke="#f06c1c" stroke-width="1.8"/><path d="M722 24 H738 L730 32 Z" fill="#4a5560"/><path d="M772 20 V35.5 M764 28 H780" stroke="#333" stroke-width="4"/><path d="M772 12 V14.2 M772 15.8 V18 M772 38 V40.2 M772 41.8 V44 M756 28 H758 M760 28 H762 M782 28 H784 M786 28 H788" stroke="#0b4ea2" stroke-width="4"/><path d="M776.5 31 L785 32.5 L782.5 35 L787.5 40 L785 42.5 L780 37.5 L777.5 40 Z" fill="#f06c1c"/><path d="M812 17 H835 Q838 17 838 20 V35 H822 L814 42 V35 H811 V18 Z" fill="none" stroke="#333" stroke-width="2"/><path d="M816.5 27.8 H820 M823.5 27.8 H827 M830.5 27.8 H834" stroke="#333" stroke-width="3.6"/><path d="M868 21 H863 V41 H890 V21 H885" fill="none" stroke="#333" stroke-width="2"/><path d="M864 35 Q868 29 872 31 Q876 33 879 30 Q883 26 889 31 M864 40 Q868 35 872 37 Q876 39 879 36 Q883 32 889 37" fill="none" stroke="#333" stroke-width="1.8"/><path d="M876 12 L882 19 H878.5 V24 H873.5 V19 H870 Z" fill="#0b4ea2"/><circle cx="925" cy="27.5" r="11.5" fill="none" stroke="#333" stroke-width="2"/><circle cx="925" cy="27.5" r="4.8" fill="none" stroke="#333" stroke-width="2"/><path d="M925 39 H944 V36" fill="none" stroke="#333" stroke-width="1.6"/><path d="M933 17 L936 14 L938.5 16.5 L935.5 19.5" fill="none" stroke="#333" stroke-width="1.3"/><circle cx="980" cy="28" r="15" fill="none" stroke="#333" stroke-width="2"/><path d="M980 13 V16 M980 40 V43 M965 28 H968 M992 28 H995" stroke="#333" stroke-width="2"/><path d="M987.5 20.5 L982 30 L978 26 Z" fill="#f06c1c"/><path d="M972.5 35.5 L978 26 L982 30 Z" fill="#0b4ea2"/><circle cx="980" cy="28" r="2" fill="#fff"/><path d="M1006 24 H1022 L1014 32 Z" fill="#4a5560"/></svg>
<div class="t" style="left:502px;top:85.1px;font-size:16.5px;line-height:19.0px;color:#000;font-weight:normal;">Trace [Trace]</div>
<div class="t" style="left:28px;top:109.1px;font-size:16.5px;line-height:19.0px;color:#000;font-weight:normal;">INLINE</div>
<div class="t" style="left:28px;top:133.1px;font-size:16.5px;line-height:19.0px;color:#000;font-weight:normal;">CROSSLINE</div>
<div class="t" style="left:134.5px;top:109.1px;font-size:16.5px;line-height:19.0px;color:#000;font-weight:normal;">200</div>
<div class="t" style="left:134.5px;top:133.1px;font-size:16.5px;line-height:19.0px;color:#000;font-weight:normal;">77</div>
<div class="t" style="left:195.9px;top:109.1px;font-size:16.5px;line-height:19.0px;color:#000;font-weight:normal;">200</div>
<div class="t" style="left:195.9px;top:133.1px;font-size:16.5px;line-height:19.0px;color:#000;font-weight:normal;">87</div>
<div class="t" style="left:270.9px;top:109.1px;font-size:16.5px;line-height:19.0px;color:#000;font-weight:normal;">200</div>
<div class="t" style="left:270.9px;top:133.1px;font-size:16.5px;line-height:19.0px;color:#000;font-weight:normal;">97</div>
<div class="t" style="left:345.9px;top:109.1px;font-size:16.5px;line-height:19.0px;color:#000;font-weight:normal;">200</div>
<div class="t" style="left:345.9px;top:133.1px;font-size:16.5px;line-height:19.0px;color:#000;font-weight:normal;">107</div>
<div class="t" style="left:420.9px;top:109.1px;font-size:16.5px;line-height:19.0px;color:#000;font-weight:normal;">200</div>
<div class="t" style="left:420.9px;top:133.1px;font-size:16.5px;line-height:19.0px;color:#000;font-weight:normal;">117</div>
<div class="t" style="left:495.9px;top:109.1px;font-size:16.5px;line-height:19.0px;color:#000;font-weight:normal;">200</div>
<div class="t" style="left:495.9px;top:133.1px;font-size:16.5px;line-height:19.0px;color:#000;font-weight:normal;">127</div>
<div class="t" style="left:570.9px;top:109.1px;font-size:16.5px;line-height:19.0px;color:#000;font-weight:normal;">200</div>
<div class="t" style="left:570.9px;top:133.1px;font-size:16.5px;line-height:19.0px;color:#000;font-weight:normal;">137</div>
<div class="t" style="left:645.9px;top:109.1px;font-size:16.5px;line-height:19.0px;color:#000;font-weight:normal;">200</div>
<div class="t" style="left:645.9px;top:133.1px;font-size:16.5px;line-height:19.0px;color:#000;font-weight:normal;">147</div>
<div class="t" style="left:720.9px;top:109.1px;font-size:16.5px;line-height:19.0px;color:#000;font-weight:normal;">200</div>
<div class="t" style="left:720.9px;top:133.1px;font-size:16.5px;line-height:19.0px;color:#000;font-weight:normal;">157</div>
<div class="t" style="left:795.9px;top:109.1px;font-size:16.5px;line-height:19.0px;color:#000;font-weight:normal;">200</div>
<div class="t" style="left:795.9px;top:133.1px;font-size:16.5px;line-height:19.0px;color:#000;font-weight:normal;">167</div>
<div class="t" style="left:870.9px;top:109.1px;font-size:16.5px;line-height:19.0px;color:#000;font-weight:normal;">200</div>
<div class="t" style="left:870.9px;top:133.1px;font-size:16.5px;line-height:19.0px;color:#000;font-weight:normal;">177</div>
<div class="t" style="left:945.9px;top:109.1px;font-size:16.5px;line-height:19.0px;color:#000;font-weight:normal;">200</div>
<div class="t" style="left:945.9px;top:133.1px;font-size:16.5px;line-height:19.0px;color:#000;font-weight:normal;">187</div>
<div class="t" style="left:941px;top:109.1px;font-size:16.5px;line-height:19.0px;color:#000;font-weight:normal;">200</div>
<div class="t" style="left:941px;top:133.1px;font-size:16.5px;line-height:19.0px;color:#000;font-weight:normal;">188</div>
<svg style="position:absolute;left:0;top:0" width="1031" height="1506"><path d="M134 164.5 H968" stroke="#000" stroke-width="1.6"/><path d="M134.4 152 V164 M149.4 159.5 V164 M164.4 159.5 V164 M179.4 159.5 V164 M194.4 159.5 V164 M209.4 152 V164 M224.4 159.5 V164 M239.4 159.5 V164 M254.4 159.5 V164 M269.4 159.5 V164 M284.4 152 V164 M299.4 159.5 V164 M314.4 159.5 V164 M329.4 159.5 V164 M344.4 159.5 V164 M359.4 152 V164 M374.4 159.5 V164 M389.4 159.5 V164 M404.4 159.5 V164 M419.4 159.5 V164 M434.4 152 V164 M449.4 159.5 V164 M464.4 159.5 V164 M479.4 159.5 V164 M494.4 159.5 V164 M509.4 152 V164 M524.4 159.5 V164 M539.4 159.5 V164 M554.4 159.5 V164 M569.4 159.5 V164 M584.4 152 V164 M599.4 159.5 V164 M614.4 159.5 V164 M629.4 159.5 V164 M644.4 159.5 V164 M659.4 152 V164 M674.4 159.5 V164 M689.4 159.5 V164 M704.4 159.5 V164 M719.4 159.5 V164 M734.4 152 V164 M749.4 159.5 V164 M764.4 159.5 V164 M779.4 159.5 V164 M794.4 159.5 V164 M809.4 152 V164 M824.4 159.5 V164 M839.4 159.5 V164 M854.4 159.5 V164 M869.4 159.5 V164 M884.4 152 V164 M899.4 159.5 V164 M914.4 159.5 V164 M929.4 159.5 V164 M944.4 159.5 V164 M959.4 152 V164 M966.5 152 V164" stroke="#000" stroke-width="1.25"/><path d="M124.5 174 V1444" stroke="#000" stroke-width="1.6"/><path d="M108 174.4 H124 M116 222.7 H124 M116 271.1 H124 M108 319.4 H124 M116 367.7 H124 M116 416.0 H124 M108 464.4 H124 M116 512.7 H124 M116 561.0 H124 M108 609.4 H124 M116 657.7 H124 M116 706.0 H124 M108 754.4 H124 M116 802.7 H124 M116 851.0 H124 M108 899.3 H124 M116 947.7 H124 M116 996.0 H124 M108 1044.3 H124 M116 1092.7 H124 M116 1141.0 H124 M108 1189.3 H124 M116 1237.7 H124 M116 1286.0 H124 M108 1334.3 H124 M116 1382.7 H124 M116 1431.0 H124" stroke="#000" stroke-width="1.25"/></svg>
<div class="t" style="left:88.8px;top:167.0px;font-size:16.5px;line-height:19.0px;color:#000;font-weight:normal;">0</div>
<div class="t" style="left:70.4px;top:312.0px;font-size:16.5px;line-height:19.0px;color:#000;font-weight:normal;">300</div>
<div class="t" style="left:70.4px;top:457.0px;font-size:16.5px;line-height:19.0px;color:#000;font-weight:normal;">600</div>
<div class="t" style="left:70.4px;top:602.0px;font-size:16.5px;line-height:19.0px;color:#000;font-weight:normal;">900</div>
<div class="t" style="left:61.2px;top:747.0px;font-size:16.5px;line-height:19.0px;color:#000;font-weight:normal;">1200</div>
<div class="t" style="left:61.2px;top:892.0px;font-size:16.5px;line-height:19.0px;color:#000;font-weight:normal;">1500</div>
<div class="t" style="left:61.2px;top:1037.0px;font-size:16.5px;line-height:19.0px;color:#000;font-weight:normal;">1800</div>
<div class="t" style="left:61.2px;top:1182.0px;font-size:16.5px;line-height:19.0px;color:#000;font-weight:normal;">2100</div>
<div class="t" style="left:61.2px;top:1327.0px;font-size:16.5px;line-height:19.0px;color:#000;font-weight:normal;">2400</div>
<div class="t" style="left:5px;top:801px;font-size:17.5px;line-height:20px;transform:rotate(-90deg);transform-origin:center;width:80px;text-align:center">Time [ms]</div>
<div style="left:130px;top:170px;width:842px;height:1279px;background:#fafafa"></div>
<div style="left:130px;top:170px;width:840px;height:1276px;background:#a0a0a0"></div>
<svg style="position:absolute;left:134px;top:174px" width="836" height="1271" viewBox="0 0 836 1271" shape-rendering="crispEdges"><rect width="836" height="1271" fill="#808080"/><defs><filter id="soft" x="0" y="0" width="100%" height="100%"><feGaussianBlur stdDeviation="1.3"/></filter></defs><g filter="url(#soft)"><path fill="#727272" fill-rule="evenodd" d="M607 1269l-2 -2l-3 3zM530 1266l-4 1l-2 3l6 -2zM807 1266l2 4l4 0l0 -5zM764 1265l-5 5l4 0zM298 1266l1 4l6 0l0 -6l-4 0zM73 1265l1 5l7 -1l0 -5l-5 -1zM641 1263l1 3l3 0l2 -2l0 -2zM583 1258l-9 5l0 2l5 0l3 -3zM254 1257l-1 5l2 -2zM361 1256l-1 2l3 2l2 -2l-1 -2zM785 1261l-1 -6l-8 2l3 4zM429 1255l2 4l4 -1l-2 -3zM394 1257l0 2l4 2l3 0l2 -3l0 -2l-2 -1zM169 1255l0 3l2 1l1 -4zM463 1255l3 1l2 -2zM327 1255l-5 0l0 3l4 0zM522 1253l-4 0l-4 4l-3 0l-1 3l3 1l8 -4zM192 1256l6 1l1 -3l-4 -1zM332 1252l-1 1l2 1l1 -1zM835 1251l0 4l-2 1l2 1zM489 1251l-3 0l-2 3l0 5l5 -2zM771 1252l-6 -2l-5 5l4 4l2 -3l5 0zM807 1250l1 4l6 0l-2 -1l0 -4zM36 1249l1 5l4 3l8 0l2 2l-1 3l9 -3l5 4l2 -1l0 -2l-6 -2l-3 -6l-5 -1l-6 -4zM723 1247l1 2l4 -1l-2 -2zM71 1245l1 4l5 0l-2 -3zM574 1244l5 1l1 -2l-4 -1zM798 1241l-5 1l-3 5l4 3l0 7l7 -2l-1 -5l-4 -2l1 -2l3 1l0 -4zM452 1241l-6 1l-1 3l3 1zM512 1240l0 3l3 -1zM394 1240l2 3l7 0l0 -4l-2 -2l-5 0zM2 1237l-2 0l0 4l3 -2zM322 1237l1 3l5 -1l-2 -3zM243 1237l0 5l2 2l8 -1l-1 -5l-1 6l-6 0l-1 -7l6 -1zM750 1235l-2 8l2 0l2 -5zM713 1236l0 3l6 -1l-1 -3zM361 1237l-3 -2l-4 4l-4 0l-1 3l4 2l3 -4l4 -1zM169 1235l-1 6l7 1l2 -3l-1 -3zM608 1236l5 0l2 -2l-4 0zM102 1234l0 8l4 -2l0 -3zM813 1233l-5 2l-1 3l7 1l-2 -1zM91 1233l-1 2l3 5l1 -6zM14 1232l-2 -1l-2 3l3 1zM638 1234l3 0l5 -5l2 0l-8 0l-2 2zM492 1229l-7 1l-1 6l6 0l3 -5zM338 1227l-2 5l5 1l1 -6zM574 1229l2 1l4 -4l-5 0zM298 1225l1 5l6 1l-1 -6zM357 1223l5 5l3 -1l0 -2zM803 1225l-5 0l-4 -3l0 4l-5 6l3 2l9 -6zM764 1223l-1 7l4 -5l5 4l-2 -2l0 -4zM599 1224l3 1l4 -1l1 -2l-5 0zM723 1220l0 2l3 -1zM38 1220l4 10l6 2l-7 -6l0 -5zM51 1222l1 2l7 0l2 2l2 -1l-4 -2l-3 -4zM637 1218l-5 1l-2 3l6 -2zM346 1218l0 2l3 -1zM251 1219l-6 0l-2 3l2 2l4 0l2 -2zM223 1218l3 2l4 -1l0 -2zM131 1217l-1 3l2 0zM657 1215l-2 0l1 4l-4 6l6 -1zM397 1215l-3 7l10 2l-1 -6zM320 1216l0 3l8 4l3 -3l-1 -4l-2 -1zM177 1215l1 6l-2 2l-3 0l5 -1zM835 1213l0 7l-5 1l4 2zM93 1214l0 3l3 4l7 1l-1 -8zM362 1212l3 1l-1 -2zM493 1210l0 6l-3 1l5 0l0 -4zM485 1210l-2 2l0 3l2 1zM814 1209l-3 3l-4 1l0 5l2 2l7 -1l-4 -1l0 -6zM597 1208l-8 -1l-7 5l-4 0l-4 -3l-3 0l-3 4l15 0l8 -4l5 1zM338 1206l-2 2l1 5l6 1l-2 -7zM260 1206l-1 4l2 -1zM609 1208l3 1l3 -3l2 0l-5 -1zM73 1205l2 5l4 -1l-1 -4zM307 1204l-3 -1l-5 2l-1 6l7 1zM771 1203l0 3l6 5l2 -2l-3 -1l-1 -6zM628 1200l-3 1l-1 3l-5 4l7 -3zM247 1199l-1 3l4 2l0 -3zM45 1199l-2 4l4 3l3 0l0 -6zM532 1197l-2 1l-3 7l5 -3zM318 1203l11 0l5 -4l-5 -1l-2 -3l-6 0l-2 2zM165 1198l4 5l5 0l4 -3l0 -4l-7 -1zM643 1194l-4 3l-1 3l4 0zM575 1193l-1 2l3 1l1 -2zM368 1192l-1 3l3 1l0 -4zM351 1192l0 2l2 1l3 -2zM195 1192l-1 2l2 1zM797 1190l-2 2l1 6l-2 2l3 5l4 2l1 -6l-4 -1l-2 -3l0 -3l2 -1zM471 1190l-1 1l2 1l1 -1zM48 1190l-5 -1l-3 4l-8 0l3 3l5 0l3 -5zM770 1188l-4 3l-3 10l3 -1l4 -5l2 1l0 -5zM676 1189l-1 -1l-6 5l6 -2zM812 1187l-4 6l0 3l7 -4l-3 -1zM480 1187l-2 2l7 8l-1 -6l3 -3l3 0zM332 1187l2 3l6 0l-2 -4zM126 1186l0 2l2 1l0 -2zM498 1184l-2 0l-4 5l2 1l0 5l0 -2l5 -3zM71 1185l1 4l3 2l3 0l3 -3l0 -4zM690 1182l0 4l2 -1l0 -2zM52 1182l2 8l3 -2l4 0l0 -4l-3 2l-4 0zM740 1182l-2 -1l-1 2zM31 1182l1 2l3 0l-1 -3zM314 1180l-4 1l-4 4l-7 -1l-2 2l0 3l4 3l4 0l1 -6zM174 1180l-3 1l2 1zM396 1178l1 3l3 -1l0 -2zM643 1176l1 2l3 -1zM322 1176l-2 2l0 3l6 1l0 -6zM246 1176l-2 2l0 5l6 1l3 -6l-2 -2zM596 1174l1 2l4 -1l-1 -2zM618 1172l-2 0l-1 2l1 1zM180 1172l-1 3l3 0l0 -2zM810 1170l-4 5l1 2l6 -3l-3 -2zM500 1168l-1 2l7 5l1 -1l-4 -6zM496 1171l-4 -3l-7 0l-3 4l-5 0l-4 5l5 1l4 -5l12 1zM273 1168l0 2l2 1l1 -1zM292 1167l2 3l9 1l3 -3l-1 -2zM348 1165l-2 0l-1 2l2 0zM696 1163l-4 1l3 1zM717 1162l0 2l4 0l0 -2zM466 1162l0 3l2 0l1 -2zM62 1161l0 3l3 5l5 -3l3 5l8 0l0 -3l-2 -2l-15 -1zM730 1160l1 2l2 0l-1 -2zM656 1159l-2 0l-1 2l-6 0l-8 6l-8 2l5 1l4 -3l8 -1zM671 1157l-4 1l0 2l3 0zM243 1157l-1 3l2 4zM395 1158l0 3l2 2l7 -1l1 -2l-2 -4l-6 0zM324 1156l1 4l6 -1l0 -2l-3 -2zM169 1155l4 5l3 -1l-1 -4zM834 1153l0 3l-2 1l3 1zM486 1154l0 2l5 -1l-1 -2zM812 1151l-4 3l-11 -2l0 4l-2 1l2 3l0 3l-2 1l2 1l0 8l5 -5l0 -5l6 -7l6 1l-2 -1zM802 1153l3 3l-2 2l-3 -2zM8 1150l-3 3l1 2l3 -4zM642 1150l-5 0l-1 2l4 2zM580 1148l-1 2l3 1l0 -3zM193 1148l1 2l6 1l-2 -2zM69 1149l2 2l4 -1l0 -2zM58 1150l-3 -2l-4 0l-4 5l0 3l1 1l4 -5l4 0zM335 1148l2 5l6 -2l-1 -4zM772 1146l-7 3l-3 4l1 12l2 -1l0 -3l4 -2l-1 -6l3 -2zM710 1146l-1 2l3 1l1 -2zM33 1146l-1 3l5 2l2 4l-7 4l-6 -4l0 4l12 2l2 8l2 2l3 0l5 -5l0 -4l-2 -1l-4 2l-5 -7l2 -3l-1 -6zM531 1142l1 4l1 -3zM510 1144l6 1l-3 -3zM499 1144l6 2l0 -3l-2 -1zM208 1143l3 1l0 -2zM483 1141l-3 3l3 0zM726 1137l-2 1l0 3l2 0zM579 1137l1 3l3 -1l0 -2zM243 1139l0 4l3 1l5 -1l2 -3l-2 -3l-5 0zM94 1137l-2 3l1 2zM391 1143l1 2l5 -2l6 1l1 -6l-2 -2l-6 0l-2 5zM321 1137l0 2l3 2l4 -1l0 -3l-2 -1zM169 1137l2 5l5 0l2 -2l0 -2l-3 -2zM762 1135l-7 10l3 0l6 -4zM129 1134l3 1l0 -2zM105 1130l-9 5l5 0l1 5l4 -9zM657 1129l-13 0l-4 5l9 0l2 -2l6 -1zM493 1128l-6 2l-3 5l2 2l5 0l4 -4zM673 1129l-4 -2l-4 4l7 0zM713 1126l-4 0l-7 8l9 -3zM303 1125l-3 0l-2 2l2 4l5 -3zM798 1124l0 4l-2 1l0 7l9 0l4 4l5 0l-1 -6l-11 -1l-3 -3zM60 1124l-1 4l3 0l2 -3zM768 1123l-4 3l2 0l3 3zM83 1124l2 3l4 1l0 -2l-3 -3zM694 1122l-5 3l-4 0l7 0l2 -1zM717 1125l3 0l4 -3l-5 -1zM250 1122l-3 -1l-4 4l6 0zM641 1120l-4 -2l-5 4l9 0zM31 1125l9 10l12 -2l3 -3l-5 -2l-9 -9l-3 -1l-4 1zM545 1118l2 2l3 -1l-1 -2zM395 1119l1 3l8 0l0 -3l-2 -2l-5 0zM813 1116l-5 2l0 4l6 0zM177 1116l-1 6l2 -3zM316 1120l4 3l10 0l6 10l4 0l2 -4l5 -4l7 0l-6 -1l-5 2l-7 0l-7 -4l-1 -5l-2 -2zM174 1115l-4 0l-2 2l1 5l0 -6zM661 1115l2 2l5 -2zM509 1112l1 2l2 0l-1 -2zM708 1113l4 -2l-4 0zM198 1110l-1 3l2 1zM493 1110l-5 0l-2 2l0 4l7 0zM343 1114l-2 -5l-2 -1l-9 4l6 3zM233 1108l0 4l3 0l1 -3zM717 1108l4 1l3 -2zM58 1106l2 4l4 0l-2 -5zM7 1105l0 4l5 1l9 6l1 -3l-5 -5zM526 1104l-1 4l3 1l1 -3zM473 1104l1 2l5 2l3 -3zM735 1103l-2 0l-1 2l2 0zM630 1103l-4 2l3 1zM311 1104l-11 0l-2 1l0 4l2 2l4 0l7 -5zM71 1104l3 4l8 3l5 4l1 -1l-10 -10zM225 1104l3 0l1 -2l-3 0zM700 1102l-2 -1l-7 5l4 0zM28 1100l-3 0l-1 2l2 1zM796 1114l4 1l3 -5l3 0l3 -3l4 -1l-2 -1l0 -4l-5 4l-3 0l-6 -6l1 13zM641 1100l3 2l11 2l-6 -6zM717 1097l-5 0l-3 3l6 -1zM171 1096l-2 2l0 3l6 1l2 -3l-1 -2zM659 1096l1 6l7 -3l0 -2l-3 -2zM757 1093l-2 0l-5 6l-5 0l-4 2l2 2l3 0l9 -6zM236 1092l1 3l7 2l3 6l13 -6l-1 -2l-12 1l-7 -4zM30 1099l4 2l1 4l4 1l2 3l4 0l9 -5l-1 -4l5 -5l-4 0l-2 4l-6 1l-5 -1l-3 -6l-3 -1zM637 1092l-2 -1l-1 4l2 0zM768 1090l-2 1l1 9l-9 11l8 -3l3 -3zM484 1092l0 4l2 2l9 -3l6 3l2 -2l1 -6l-8 1l-7 -2zM486 1091l6 -1l1 6l-5 1l-2 -2zM678 1091l7 2l3 -4l-8 -1zM347 1095l-2 -3l-8 -4l-5 3l-3 4l-6 -1l-5 7l-1 4l10 -5l3 -4l11 -2l3 4l2 0zM209 1090l9 -1l1 -2l-10 0zM107 1088l5 1l-1 -3l-3 0zM811 1085l-7 3l2 5l7 -3l-2 -1zM743 1085l-2 0l-2 3zM697 1085l-3 0l-3 4l3 2l4 -4zM294 1087l2 3l4 2l5 0l4 -2l0 -2l-5 -3l-7 0zM71 1086l0 3l2 2l5 0l2 -2l-1 -5l-5 0zM720 1081l-2 1l0 2l2 0zM654 1080l5 4l3 -1zM253 1077l0 6l2 -2zM625 1076l-1 4l3 0l1 -4zM516 1078l4 0l1 -2l-4 0zM498 1076l6 4l3 0l-1 -3zM389 1078l7 4l5 -1l0 -3l-2 -2zM244 1076l-2 1l1 4zM176 1077l-2 -1l-1 3l2 0zM44 1081l3 3l0 4l4 0l2 -2l0 -2l-5 -2l4 -4l8 2l4 3l3 -1l-1 -4l-3 -2l-5 2l-10 -2zM768 1075l-4 1l-1 5l5 -1zM598 1076l-6 0l-3 3l4 2zM327 1075l-5 1l-1 2l2 3l6 -3zM758 1074l-2 1l-1 4l3 -2zM689 1075l-4 -1l-3 3l5 0zM227 1074l1 2l3 -1zM119 1074l-4 1l2 1zM569 1071l2 3l1 -2zM798 1070l0 10l5 0l1 -2zM494 1074l-6 -4l-8 7l8 0zM210 1071l-2 -1l-2 2l-5 1l-2 4zM637 1074l2 2l5 -5l6 -1l-10 -1zM336 1071l1 4l6 0l-4 -6zM310 1070l-3 -1l-3 3l4 1l2 -1zM812 1068l-4 2l0 4l6 -1l-2 -1zM413 1069l2 2l4 -1l-3 -2zM27 1067l8 11l6 1l1 -6l-2 2l-3 0l-4 -6zM751 1065l-4 2l0 3l3 -1zM70 1068l1 2l7 1l3 -4l0 -3l-6 0zM548 1062l-2 1l1 2zM137 1063l7 4l0 -2l-4 -3zM512 1061l-2 -1l-1 2zM362 1059l-1 2l3 1l0 -2zM452 1058l1 2l4 1zM348 1061l6 1l1 -3l-4 -1zM252 1057l0 7l2 -1l0 -4zM123 1057l-3 2l2 1zM152 1058l6 5l3 0l2 -2l-7 -5zM397 1055l-2 2l0 4l2 2l4 0l3 -7zM321 1056l5 3l3 -1l0 -2l-2 -1zM166 1060l2 2l6 0l3 -2l0 -3l-6 -2zM647 1054l-2 0l1 3zM418 1052l2 4l3 -1l0 -3zM31 1052l-2 4l2 2l4 0l-1 -4zM205 1055l11 2l5 3l8 -1l-4 0l-6 -5l-6 0l-3 -3l-3 4zM589 1050l1 3l1 -2zM301 1049l-4 2l2 3l2 -1zM492 1048l-4 1l1 5l3 -3zM456 1048l2 2l3 -1l-4 -2zM182 1048l5 1l3 4l3 0l1 -2l-2 -3l-3 -1zM78 1048l-2 -1l-1 3l2 0zM648 1046l2 6l5 0l-5 -6zM482 1046l-6 3l4 1l2 -1zM810 1048l1 5l7 -1l-5 -1l0 -6zM139 1046l1 3l5 5l2 0l1 -5l-4 -3zM350 1044l-4 0l-3 3l-7 -1l-1 3l4 3l1 3l3 -8l5 -1zM512 1043l1 3l4 0l-1 -3zM798 1042l0 6l3 3l0 8l3 2l-2 -3l1 -9l-3 -6zM62 1050l0 -5l-2 -3l-4 0l-4 7l-3 0l-3 -6l-3 0l-1 3l-3 3l-2 0l-5 -6l2 6l5 1l3 3l0 4l5 1l4 4l2 -1l2 -12l3 -2l3 4zM234 1040l1 4l4 0l0 -2zM713 1039l0 3l2 0l1 -3zM131 1039l-3 2l0 3l4 0l1 -2zM768 1038l-3 11l2 10l-4 1l-5 4l5 1l6 -3zM611 1039l-2 -1l-1 2zM394 1039l0 2l4 2l4 0l2 -2l-1 -5l-6 0zM325 1036l-4 5l-3 1l2 2l8 0l-4 -5zM227 1036l3 1l-1 -2zM177 1039l-2 -3l-3 -1l-4 2l-2 4l3 2l6 0l2 -1zM169 1037l6 -1l1 5l-6 1zM572 1035l1 3l5 -1l0 -2l-2 -1zM94 1035l0 6l8 0l1 -7zM641 1033l-7 4l1 4l2 0l0 -3zM565 1033l1 2l2 0l-1 -2zM558 1033l-3 0l0 5l2 -1zM747 1032l-4 0l-4 3l5 0zM255 1032l-3 4l-7 1l-2 2l0 3l3 2l5 0l5 -10zM192 1032l2 4l3 -1l-2 -3zM442 1032l2 2l19 2l-12 -5zM481 1032l1 3l10 0l2 -2l0 -3l-9 -1zM334 1029l0 2l3 3l8 -1l-1 -3l-4 -3l-4 0zM521 1025l1 3l4 1zM817 1027l-3 0l-2 -3l-4 4l0 4zM298 1025l1 3l3 2l3 0l2 -2l-3 -4zM553 1021l-3 -1l-6 3l0 2zM699 1020l5 1l-2 -2zM562 1021l6 1l-1 -3zM438 1020l2 2l4 0l2 -3zM448 1019l2 2l3 -1l-1 -2zM749 1017l-13 4l-5 4l4 0l3 -3zM396 1018l1 5l11 -3l-5 -1l-2 -2zM243 1020l3 2l4 0l5 -3l-9 -2zM195 1018l7 5l6 0l-8 -6zM475 1017l-8 0l-2 1l0 2l5 1l3 -1zM233 1016l1 3l3 -1zM426 1015l-1 3l5 1l-1 -4zM327 1015l-6 1l1 6l4 -1l2 -5zM170 1015l-2 0l1 4zM768 1014l-4 2l2 8l-4 3l-2 7l8 -6zM170 1021l6 1l4 -4l3 2l4 0l0 -2l-10 -4l1 6l-2 2zM272 1014l1 2l5 0l-2 -3zM759 1012l-5 1l-3 3l5 0l3 -2zM732 1012l-2 -1l-1 3zM60 1019l-4 -4l0 -4l-9 3l-6 0l-4 -2l-7 6l5 6l-4 3l-3 0l6 2l11 0l3 -2l3 -6l6 2zM798 1010l1 6l-2 14l3 0l3 -2l0 -10zM489 1009l-5 1l1 6l0 -6zM627 1008l-4 2l3 1zM345 1013l-3 -4l-3 -1l-6 6l9 1zM811 1007l-2 4l4 1zM738 1008l3 0l4 -3l-6 0zM540 1006l0 3l9 -1l-1 -2l-4 -1zM526 1005l5 6l2 -2l-1 -2zM298 1006l1 6l7 -1l0 -4l-2 -2zM632 1004l-2 0l-1 2l2 0zM72 1005l0 3l2 2l7 -1l-1 -4l-2 -1zM711 1003l-3 1l0 3l3 -2zM637 1004l3 4l7 2l7 6l2 -2l-7 -6l-5 -1l-5 -4zM208 1004l-3 0l0 2zM456 1002l-8 0l-8 7l4 1l3 -3l8 -2zM473 1000l-4 -1l-3 2l0 2l5 -1zM393 999l0 2l6 1l3 -2l-1 -2zM262 999l1 2l4 0l-3 -3zM182 999l0 2l3 2l5 -2l-2 -3zM113 998l-3 2l1 2l3 -2zM763 998l-2 -2l-5 5l0 2l5 0l2 -2zM243 998l0 2l6 4l7 -4l-5 -4l-5 0zM20 998l2 2l6 -1l-5 -3zM167 999l1 2l6 2l3 -2l-1 -5l-6 -1zM321 994l-1 4l2 4l5 -1l2 -7zM735 992l-9 2l-4 3l-7 2l-1 2l7 2l3 -6l9 -2zM538 991l3 3l3 -2zM336 991l2 4l5 1l1 -3zM706 989l-11 3l-2 2l6 1zM652 988l-8 0l0 8l2 3l2 -1l0 -3l5 -4zM485 990l0 2l3 3l6 -1l0 -3l-3 -3l-4 0zM382 988l2 4l1 -3zM659 987l-1 5l3 0zM502 987l-2 3l4 1l0 -3zM307 990l-3 -3l-4 0l-3 6l-8 -1l0 2l6 3l4 -5l7 0zM631 986l-4 4l-4 1l4 1zM270 988l9 3l-6 -5zM80 988l-3 -3l-2 0l-5 6l9 1zM449 987l4 1l3 -2l-2 -2l-3 0zM598 985l5 1l3 -3l-5 0zM427 984l4 1l-3 -2zM375 984l0 2l5 1l-1 -4zM719 983l-2 -1l-2 1l0 2zM418 982l-2 0l-1 2l2 1zM660 980l1 4l1 -2zM643 980l-3 0l-2 5l3 0zM254 980l0 3l-2 2l6 0l1 -3zM768 979l-5 4l0 8l4 3zM397 979l0 2l4 0l0 -2zM527 980l0 -2l-5 2l-10 -1l2 2zM171 978l1 4l3 -1l-1 -3zM16 984l1 3l9 0l16 11l3 4l3 -1l4 -5l0 -2l-4 -3l1 -3l8 4l5 0l-7 -6l-7 -1l-11 -7l-6 1l0 2l6 3l-1 3l-6 1l-4 -3zM284 978l1 2l8 -1l-2 -2zM243 977l-3 2l0 2l3 2zM798 975l-1 18l6 3l9 1l0 -5l-8 2l-5 -3zM320 979l2 2l6 1l2 -2l-3 -4l-3 -1zM813 974l-6 3l1 4l7 0l-3 -1zM688 974l-1 3l1 2l2 0l1 -4zM627 973l-2 0l-2 4l3 0zM613 972l-4 3l0 2l7 5l3 -2l-2 -6zM269 972l3 3l3 0zM423 970l2 3l4 -1l-2 -2zM196 970l-2 2l1 7l2 0l2 -3l0 -3zM149 970l2 2l4 0l-1 -2zM377 970l5 0l1 -2l-4 0zM365 969l-2 -1l-1 3l2 0zM209 968l-1 2l2 2zM718 968l-4 -1l-3 3l3 1zM139 967l-1 1l2 1l1 -1zM656 965l-2 0l-2 3l-7 -1l0 6l8 0l3 -5zM72 966l0 2l3 3l7 -1l0 -2l-4 -3zM672 963l-1 2l4 3l1 -5zM483 972l2 2l4 -1l5 -7l6 2l22 -2l-6 -3l-21 0l-8 8zM471 966l-4 -3l-4 5l-5 0l-5 3l11 1l3 -3l4 -1zM390 963l-3 0l-2 3l5 -1zM232 964l3 1l-1 -2zM125 964l2 2l6 0l-3 -3zM193 960l-3 -1l-4 2l-2 5l1 1l2 -3l5 -1zM115 960l1 2l6 0l-1 -3zM768 958l-4 6l-6 3l0 3l4 5l-2 -7l2 -2l6 0zM612 959l-7 0l-6 3l3 2l4 0zM320 959l1 2l3 0l1 -3zM166 959l-2 -1l-1 3l2 0zM830 958l5 5l0 -6zM643 965l-1 -6l-2 -2l-7 2l-9 0l4 3l9 -1l4 4zM398 956l-4 7l8 1l0 -5zM430 955l-4 -1l-7 4l8 0l3 -1zM177 954l-6 1l-1 2l3 3l2 0l3 -3zM104 954l1 6l4 -1l-1 -3zM62 955l-2 -1l-4 3l5 1zM448 953l1 3l1 -2zM407 953l-1 2l3 1l1 -1zM257 953l-6 4l1 5l1 -4l5 -2zM798 952l1 15l6 0l5 -5l5 -1l-3 -1l-1 -5l-4 7l-4 0l-2 -2l0 -6zM752 952l-3 -1l-4 5l5 -1zM20 952l2 3l9 4l-6 -6l-4 -2zM385 950l1 2l4 0l-1 -3zM376 952l-2 -3l-3 0l-5 5l6 1l4 -1zM677 948l-5 0l-5 5l0 3l2 0zM484 949l6 4l2 -1l0 -4zM764 947l-6 2l0 3l2 1l4 -4zM336 947l0 6l4 1l1 -5zM303 947l-2 -1l-1 3l2 0zM607 947l20 1l1 -2l-19 -1zM499 945l1 6l17 -2l6 3l-1 -6l-11 -1l-5 3l-4 -3zM270 941l-1 3l3 0l1 -2zM101 943l4 0l4 3l11 1l11 5l5 -1l7 5l9 1l0 -2l-4 -1l-6 -5l-19 -2l-8 -4l-9 1l-3 -5zM31 942l4 10l4 4l1 6l11 3l6 8l5 0l4 4l2 0l0 -4l-6 -2l-3 -3l0 -3l-6 -3l0 -8l-6 6l-3 0l-2 -2l-1 -5l6 -3l0 -3l-3 -3l-3 -1l-3 -4zM691 938l-5 5l1 1l3 0zM582 938l-3 1l1 3l3 -2zM407 944l-4 -6l-1 5l-5 0zM657 942l-2 -5l-13 1l-2 4l-5 3l6 4l5 0l2 -8l2 -2l6 4zM400 936l-6 0l-3 3l4 3l0 -5zM253 937l-7 -1l-1 7l5 0l3 -3zM756 935l-9 2l-6 4l-6 0l0 2l4 3l5 -7l5 0zM373 936l4 2l7 -1l-1 -2zM165 941l1 2l9 0l3 -1l0 -5l-2 -2l-6 0zM170 936l5 -1l1 6l-5 1zM323 934l-2 1l0 4l4 2l3 -5zM186 934l0 3l3 1l1 -3zM758 934l4 -1l-3 -1zM769 931l-2 0l-2 3l3 0zM620 931l-5 0l-6 3l6 1l5 -2zM515 932l3 2l8 -1l0 -2zM629 930l0 2l8 3l-1 -2zM485 931l2 4l5 -1l-3 -4zM812 928l-5 5l1 7l8 -6l-4 -1zM227 929l2 2l8 -1l-3 -2zM835 927l0 5l-3 1l3 1zM333 934l11 0l3 -3l2 0l1 5l3 -1l0 -3l-3 -2l-1 -3l-14 0zM7 927l1 6l5 0l7 5l4 0l-1 -3l-9 -3zM541 927l3 2l2 -1l0 -2zM435 926l3 1l0 -2zM104 925l1 3l6 5l5 -1l4 4l3 0l2 -2l-3 -3zM69 925l1 4l17 5l6 6l0 -4l4 -2l-6 1l-6 -5l-5 0l-2 -3l-4 -2zM410 928l3 2l6 -5l-6 -1zM307 925l-8 0l-2 2l0 4l3 1l5 -2l2 -2zM212 926l9 3l-2 -4l-4 -1zM30 925l3 6l8 0l0 -4l-2 -2zM254 923l0 2l6 2l-1 -3zM191 923l0 2l7 0l2 2l9 1l-2 -4zM49 930l6 4l3 6l8 3l5 6l6 -2l2 2l2 8l2 2l1 -1l0 -8l-3 -4l-4 1l-5 -5l-5 -1l-8 -7l-3 -7l3 -3l4 1l-2 -3l-2 0l-5 7zM750 922l-2 -1l-5 2l-1 3l3 0zM569 924l4 2l4 -1l3 -3l-10 -1zM558 921l-1 3l4 3l2 -4zM376 921l1 2l3 -1zM665 919l-1 3l3 0l1 -2zM597 920l-3 -1l-4 3l5 1zM515 918l1 2l3 -1zM135 918l-1 4l4 0l0 -2zM716 919l-4 -2l-4 4l-9 1l-4 3l-8 1l-6 4l-7 0l-1 3l5 1l6 -4l6 0l14 -8l11 -1zM244 920l3 1l3 -3l-4 -1zM679 918l-5 -2l-3 4l5 1zM612 917l-2 -1l-5 3l-1 3l1 1l6 -3zM81 918l1 2l5 0l3 3l4 -1l-1 -5l-2 2l-5 -3zM386 920l16 4l3 -1l0 -4l-3 -3l-9 -1zM320 915l-1 5l7 1l2 -2l-1 -4zM169 914l-3 1l2 5zM805 914l-3 0l0 2l2 0zM115 913l2 4l3 0zM486 911l-1 5l-2 2l6 0l-3 -1zM623 916l8 -4l4 3l10 2l4 -1l7 7l-2 -3l0 -7l-2 -1l-5 2l-8 0l-9 -4zM7 910l1 7l6 2l3 4l8 0l0 -2l-3 -3l-8 -4l-3 0zM107 909l-2 2l1 1l2 -1zM698 909l-3 -1l-7 4l-3 0l-3 3l0 2l5 0l8 -3zM493 908l-5 2l4 0zM808 908l0 4l8 1l-4 -1l1 -5zM495 907l3 4l1 6l2 1zM337 906l-1 7l5 1l3 -7zM310 910l-5 -5l-16 0l-4 3l-6 -2l-3 3l-9 -2l2 6l10 -3l5 1l1 -2l7 0l5 3zM63 907l-2 -2l-10 0l-3 2l-17 2l-1 2l2 2l8 0l2 2l1 5l3 1l2 -2l-4 0l-2 -2l0 -6l2 -2l4 0l4 4l0 3l1 -6l2 -2l8 1zM762 904l-5 3l4 -1zM77 904l-6 4l-3 0l2 5l7 -1zM706 904l-3 0l-2 4l3 0zM349 904l4 3l9 -1l-3 0l-5 -3zM599 903l5 3l6 -1l-8 -3zM612 904l9 0l2 -3l-8 0zM594 903l-2 -2l-6 3l-7 -2l-3 2l-6 0l-3 2l-7 0l-4 2l-16 1l-8 4l5 1l11 -4l9 1l3 -2l17 -1l6 -2l8 2l3 -2zM85 901l-1 3l4 2l1 -4zM514 899l1 2l2 -1zM526 897l-1 1l2 2l1 -1zM232 898l2 3l5 0l5 3l17 0l3 2l-3 -5l-3 -1l-3 2l-4 -5zM688 897l-4 -1l-6 3l-2 3l2 1l7 -2zM316 898l5 4l5 0l2 -2l-1 -4l-1 6l-6 -1l0 -5l5 -1l-5 0zM0 895l0 2l4 -1zM210 894l-3 2l2 2l3 -1zM164 894l7 8l6 1l4 4l4 0l4 3l8 -1l6 4l10 -2l6 4l12 -2l-10 -3l-23 -1l-5 -3l-6 0l-12 -9l-8 -1zM812 898l-1 -5l-6 3zM534 893l1 3l8 -1l-3 -2zM699 892l-2 -1l-3 3l4 0zM64 891l0 3l3 3l3 0l0 -3zM763 889l-4 1l-6 5l-6 1l11 -2l4 -2zM340 890l0 3l6 0l-1 -3zM501 889l-5 -1l-2 2l-7 0l-5 3l5 3l6 0l6 -2l2 -2zM361 888l-1 2l3 1l1 -3zM334 888l-1 2l2 1l1 -2zM280 887l4 5l5 -2l8 3l13 0l-8 -7l-4 2l-7 0l-4 -2zM255 886l0 2l7 1l4 -2l5 0l3 2l2 -1l-1 -2zM146 888l7 1l2 -2l-7 -1zM611 886l-10 -1l-5 2l-4 -3l-5 0l-12 3l-4 3l-5 0l-4 3l-7 0l-3 3l10 1l16 -5l6 -4l4 0l6 3l5 -3l7 2zM381 884l0 3l3 1l1 -4zM72 885l0 4l2 2l6 -2l-1 -5zM62 888l-9 -5l-3 0l-3 2l-2 4l-15 -1l-1 2l3 1l6 7l7 1l7 -3l7 -7zM662 884l-4 -2l-7 5l-4 5l-3 0l-4 -3l2 7l2 2l3 0l5 -5l7 -2l4 -4zM659 883l1 3l-2 1l-1 -2zM729 882l9 2l1 -1l-1 -2zM625 881l-10 8l3 2l3 -1l4 -6zM834 880l-1 4l2 1zM209 881l3 1l-1 -2zM109 880l4 2l-1 -2zM811 879l-7 3l-1 3l9 -1zM685 882l-1 -3l-15 2l3 3l5 -2zM7 879l-1 2l2 1zM397 877l-1 5l5 0l0 -4zM252 880l-2 -3l-4 0l-4 6l-4 0l-2 2l3 2l13 -3zM177 884l-2 -7l-4 2l-7 -1l4 4zM755 876l-7 2l-1 2l4 1zM535 879l0 2l2 0l3 -3l5 -1l7 6l4 0l2 -2l0 -3l-12 0l-3 -2zM307 876l0 2l8 6l11 -2l0 -4l-2 -1l-10 1l-5 -3zM409 873l-2 1l0 2l2 -1zM189 878l12 -3l-8 -2l-3 2zM301 873l-5 0l-3 3l5 2l3 -2zM255 872l0 2l4 2l26 -1l-6 -3l-5 0l-4 2l-5 -2zM451 871l3 3l1 4l4 -1l-1 -3l-3 0zM587 871l-9 -1l-15 8l1 2l4 0l8 -6l9 -1zM767 869l-6 1l-2 4l6 -1zM612 871l-2 -2l-3 2l-12 1l1 1l3 -2l4 0l4 2zM233 869l1 2l6 1l-2 -3zM731 869l-2 -1l-3 3l5 0zM494 871l-1 -3l-17 2l1 2l9 2l6 0zM510 867l-1 4l3 0l1 -2l-1 -2zM329 866l5 1l8 7l4 -1l3 -4l3 3l4 0l3 -3l2 0l-9 -1l-2 -2l-4 2l-3 0l-5 -3zM131 866l-2 -1l-5 4l2 1zM812 864l-5 2l-2 4l3 1l6 -2l-2 -1zM213 864l1 3l4 0l-1 -3zM185 864l-2 3l2 0zM73 865l0 5l5 0l3 -3l-1 -3zM742 864l0 3l5 -1l0 -2l-2 -1zM689 863l2 2l5 0zM568 862l-6 2l4 1l2 -1zM24 874l2 3l11 -4l11 5l8 0l3 -3l0 -5l-2 -2l-20 1l-7 -7l-1 7zM306 862l10 4l5 -1l-1 -3zM670 861l2 4l9 0l-5 -4zM720 859l-10 1l0 2l6 1l3 -1zM631 862l0 4l4 0l4 -3l4 2l-2 5l-6 4l1 2l4 0l5 -8l17 -1l6 -3l-3 -2l-11 0l-5 3l-4 0l-3 -2l-2 -4l-5 0zM105 859l-1 3l3 2l1 3l3 1l3 -2l-1 -2l-7 -1zM436 858l-6 1l-1 3l6 -1zM280 858l-26 0l0 4l20 0l4 -1zM194 857l0 2l5 3l0 -2zM171 856l-2 5l5 2l3 -5l-2 -2zM762 855l-3 1l-2 3l-4 1l-1 2l4 -1zM395 858l2 4l11 -3l7 5l4 -1l-3 -3l-7 -1l-4 -4l-8 0zM66 855l1 4l1 -2zM726 853l-2 0l-2 3l3 0zM352 853l3 4l1 -2zM483 855l2 3l7 1l3 2l5 -3l4 2l-1 -5l-2 -2l-7 3l-3 -3l-4 -1zM218 852l2 2l4 0l10 5l6 -1l2 3l0 -4l-3 1l-5 -4zM520 850l1 3l3 -2zM657 850l3 3l9 0l5 -2l-10 -2zM331 851l1 3l7 1l-3 -2l0 -4l-3 0zM835 848l0 4l-2 1l2 1zM537 848l2 4l6 0l5 -2l7 3l5 0l3 -2l-2 -3l-9 2zM469 848l0 2l3 2l0 -3zM343 848l0 7l6 -3l-1 -2zM310 848l4 3l11 2l-2 -3l-4 0l-5 -3zM813 845l-11 11l13 -4l-3 -1zM377 844l-4 1l-1 2l2 0zM297 845l2 4l8 -1l-2 -3zM194 844l0 2l3 0l0 -2zM695 844l-6 0l-2 3l6 1zM270 844l2 2l4 0l0 -2l-2 -1zM427 842l0 2l6 -1l0 -2zM107 843l1 3l12 6l7 1l8 4l3 -1l0 -2l-9 -1l-18 -12zM24 841l-3 0l1 4zM352 839l1 3l4 0l-3 -3zM131 840l4 3l14 -1l-7 0l-5 -3zM241 840l0 4l14 0l4 3l4 -2l-1 -2l-12 -5l-5 0zM665 841l-12 -4l-7 4l-7 -3l-2 2l0 4l-7 5l9 2l16 -9zM394 837l-2 2l1 3zM613 839l4 -1l1 -2l-4 0zM396 843l9 0l12 7l4 -3l-4 -3l-6 0l-5 -3l-4 -5l1 6zM178 836l0 5l2 0l1 -3zM716 837l0 2l12 1l2 -2l0 -3l-2 0l-3 4l-2 0l-4 -4zM669 838l4 2l3 -2l-6 -3zM90 838l4 4l10 -1l-1 -3l-4 -3l-5 0zM462 835l2 2l10 -1l-1 -2zM219 835l2 4l13 3l2 -1l-7 -6zM521 835l-5 -2l-5 4l-4 0l13 0zM686 833l-3 -1l-4 4l6 -1zM624 834l4 1l1 -2l-3 -1zM212 832l-4 -1l-2 3l-2 -1l-1 2l6 1zM114 831l6 6l4 0l-2 -4zM735 832l2 2l5 0l0 -4l-5 0zM834 829l0 4l-2 1l3 2zM499 838l-7 -9l-2 0l4 2l0 5l-2 2l-6 0l-1 -6l-6 5l4 5l5 -4zM548 829l2 4l4 0l-2 -4zM541 833l0 -3l-3 -2l-9 3zM349 835l-11 -8l-6 4l-2 5l-7 -2l-3 2l0 2l2 2l3 0l5 -4l18 1zM146 829l5 3l9 0l6 4l1 5l3 2l-2 -1l0 -7l-3 -3l-9 -1l-6 -4zM26 831l8 8l0 3l-6 4l1 5l2 2l3 0l2 -6l2 -1l3 3l2 7l7 4l2 -1l0 -3l-4 -2l-2 -3l1 -4l3 -3l8 2l3 -3l2 0l2 4l6 4l10 0l0 -2l-4 -3l-6 1l-5 -6l-6 -3l0 -3l-4 -1l-4 -4l-2 0l-4 5l-8 -2l-5 -6l-3 0zM300 825l-2 6l7 1l1 -6zM813 824l-7 6l-4 7l11 -6zM76 825l1 4l5 -2l-1 -3zM37 822l1 3l2 -1l0 -2zM719 821l0 2l3 -1zM494 821l4 3l-1 -3zM510 822l3 2l5 -4l-8 0zM727 821l5 -1l-3 -1zM482 819l-5 0l-7 3l-25 0l-9 2l0 2l12 0l4 -2l27 1l3 -2zM400 819l-4 1l-3 3l-9 0l-1 2l2 2l7 0l3 -3l4 -1zM124 819l0 2l5 4l3 0l0 -3l-3 -3zM348 820l3 3l6 -3l6 8l3 0l4 3l4 0l7 -5l-1 -2l-9 -1l-3 2l-4 -4l-6 -1l-2 -2zM692 818l-3 -1l-2 4l4 0zM242 818l3 5l9 0l4 2l16 0l-8 -2l-2 -2l-9 0l-4 -4zM522 818l4 0l5 -3l-6 0zM163 819l1 3l11 1l-6 -1l0 -6l6 -1l-5 0l-3 4zM64 815l0 2l4 3l0 -3zM742 814l-3 0l-2 3l3 0zM630 815l-1 -1l-7 3l-6 0l-14 4l-5 4l-7 2l-4 3l-5 -1l-5 3l-10 -1l-4 4l2 2l11 0l6 -4l10 -1l4 -3l6 0l3 -3l8 -3l3 -4l8 1l5 -2zM317 815l0 3l3 4l7 0l2 -3l-1 -4zM321 816l5 -1l1 6l-5 1zM146 814l2 3l7 4l5 -2l0 -2l-5 0l-3 -4zM208 812l1 2l6 -1l4 3l8 2l12 0l-10 -5l-4 1l-13 -3zM199 812l1 3l5 1l-1 -5zM751 811l-3 -1l-2 2l2 1zM389 809l4 2l0 -2zM269 808l1 2l8 2l2 -1l-5 -3zM812 807l-2 2l0 3l2 0zM337 807l0 7l9 2zM26 810l10 5l6 1l1 -6l5 -2l-2 -2l-18 0zM834 805l0 5l-3 2l4 5zM129 805l7 6l7 0l0 -2zM671 803l-3 3l2 4l2 -3zM525 803l-1 3l3 0l1 -2zM493 805l7 1l3 2l2 -1l-4 -4zM78 803l-6 2l0 4l2 2l5 -2zM12 804l3 3l5 -1l-3 -2zM452 803l1 5l9 0l4 2l8 -1l5 -3l8 4l2 6l6 1l-2 -5l-9 -7l-19 -1l-3 -2l-5 2zM509 802l2 3l5 -1l-3 -3zM351 801l7 6l12 4l17 -2l-8 -3l-8 2l-8 -4l-3 1l-6 -4zM57 801l-3 0l-2 2l2 7l-2 2l0 6l-3 1l3 0l3 -3l2 -7l2 -2l3 0zM227 800l2 2l3 0l-1 -2zM680 799l0 3l5 -1l-2 -2zM671 822l-9 -9l-5 -10l2 -5l-5 0l-10 4l6 5l-2 3l-3 0l-5 -4l-10 -4l-23 1l-12 6l-16 4l-17 0l-3 -2l-4 0l-6 3l1 2l6 -2l5 4l4 1l14 0l12 -5l7 -1l8 -5l16 -3l3 2l11 -1l6 5l9 1l2 5l2 0l3 -5l3 0l5 6l2 6zM450 801l-2 -3l-5 3l-5 -2l-1 3zM82 800l0 2l5 0l0 -2l-3 -2zM253 803l-3 -6l-4 0l-9 5l4 3zM170 796l0 4l6 3l0 -5l-2 -2zM107 796l-1 5l14 5l4 -2zM747 796l-4 -1l-12 9l-7 0l-1 3l4 0l4 -3l7 -1zM260 792l10 1l8 5l7 -1l4 4l5 2l7 8l6 0l1 -2l-3 -5l-7 0l-7 -7l-7 -1l-2 -2zM432 790l-4 -1l-6 3l-11 0l-3 -2l-4 1l2 2l12 2zM465 789l1 3l6 2l11 -1l0 -4l-4 -1l-6 2l-5 -2zM390 788l1 2l2 -1zM728 788l-3 -1l-8 3l-3 3l-5 0l-2 2l8 1l11 -5zM669 787l2 5l2 -2zM335 790l5 3l5 0l6 -6l-5 3l-10 -3zM817 786l-4 3l-2 6l8 -4l-2 -1zM528 788l0 2l3 3l6 -4l3 2l5 -1l-5 0l-4 -4zM508 786l-3 -1l-2 4l4 0zM497 784l-5 4l-1 6l9 -4zM227 785l-3 -1l-4 3l6 0zM8 784l1 5l2 2l9 0l-8 -7zM730 788l5 0l3 -3l-2 -2l-5 0zM189 786l0 2l7 -2l7 7l-2 -10zM73 783l0 6l2 2l2 0l4 -4l9 3l-1 -4l-10 -4zM510 782l0 2l5 -1l-1 -2zM105 783l5 5l14 4l19 -1l-6 -4l-18 -1l-3 -2l-6 0l-4 -3zM749 780l-5 1l-1 2l4 0zM578 780l-18 0l-7 3l-1 3l5 1l11 -5l8 1zM47 786l2 0l1 3l2 -1l3 6l6 2l3 4l2 0l3 -3l-1 -2l-2 0l-3 -3l-4 0l-3 -3l2 -10zM38 779l-3 0l-3 3l-4 1l5 2l2 3l0 4l-5 2l1 3l3 0l1 -3l3 -2l5 0l0 -3l-2 1l-2 -2l2 -6zM341 778l2 3l2 -1l-1 -2zM22 779l4 2l-1 -3zM394 776l5 5l7 0l6 3l11 0l3 -2l-4 -1l-5 2l-9 -2l-7 -5zM242 776l-3 1l2 3zM255 778l0 4l5 -2l4 1l3 -2l4 0l2 2l14 -2l3 3l5 1l6 7l8 0l6 3l6 7l5 0l3 -3l-1 -4l-11 0l-10 -9l-6 -2l-5 -5l-8 2l-3 -4l-4 0l-4 3l-4 0l-3 -2l-6 2zM597 773l-2 -1l-6 2l-5 4l7 0zM364 774l12 4l4 -2l-1 -2l-6 1l-6 -3zM661 785l-1 -4l-7 -6l-5 5l-3 0l-9 -8l-4 -1l-2 1l3 4l6 0l5 4l0 5l-3 2l-6 0l-7 4l-3 0l-5 -4l-9 0l-5 2l-7 0l-2 2l-7 0l-8 4l-17 -1l-13 6l-17 4l21 -2l4 -2l12 0l7 -2l8 1l16 -8l14 -1l3 2l11 0l5 -2l10 3l3 -3zM620 770l0 2l2 1l1 -2zM406 770l1 2l5 2l10 -1zM107 771l3 2l5 0l4 3l9 -1l6 2l8 0l0 -3l-7 1l-5 -3l-11 0l-6 -3l-4 0zM817 774l-3 -1l0 -5l-14 2l0 4l8 -4l4 5zM612 768l-9 0l-1 3l2 2l4 0l4 -2zM511 768l-4 -1l-3 3l-8 1l8 3zM540 767l4 4l7 0l-9 -5zM746 764l-3 0l-11 5l-11 -1l-7 3l-4 4l-6 -1l-2 4l5 0l3 -2l8 1l12 -7l6 1l3 -2l7 -1zM70 765l5 6l6 1l2 3l6 3l0 -4l-7 -2l-3 -5l-6 -3zM529 765l-2 -2l-11 1l-3 2l0 2l5 0l5 -3zM482 763l-3 1l-2 3l5 1zM293 762l8 5l8 1l8 9l6 4l5 -3l5 0l0 -2l-14 -4l-3 -4l-8 -4l-10 0l-2 -3zM276 762l-3 -2l-2 3zM597 759l-6 2l-2 3zM242 759l-1 4l3 2zM129 760l1 2l7 0l7 4l18 0l-1 -2l-8 0l-7 -3l-8 0l-3 -2zM252 758l0 7l4 2l12 -3l-3 -3l-8 2zM199 758l-1 4l3 1l0 -4zM185 759l3 4l3 0l2 -3l-1 -2zM92 757l-3 3l2 4l2 -1zM318 757l3 3l7 3l5 0l6 6l2 0l3 -5l4 0l2 -2l-2 -3l-5 2l-8 0l-11 -5zM668 756l1 3l5 -1l-3 -3zM358 757l1 3l15 -3l6 3l8 0l5 4l3 -2l7 1l1 -5l-2 -2l-4 0l-4 3l-6 0l-8 -5l-13 0l-4 3zM684 753l-1 2l2 1l1 -2zM25 760l1 8l4 -5l3 0l6 5l0 3l6 4l5 -5l14 1l-1 -2l-5 -1l-2 -3l5 -5l-1 -2l-8 2l-3 -4l0 2l-2 1l1 4l-5 4l-2 -1l0 -13l-5 1l0 6zM42 768l5 -1l1 5l-5 1zM48 764l5 -1l1 5l-5 1zM765 752l-3 0l-8 9l0 2zM628 756l0 2l7 -1l6 3l5 0l7 6l4 -2l4 1l-4 -8l-6 0l-5 -5l-5 0l-3 2zM625 752l-4 2l3 0zM606 755l5 1l3 -2l-5 -2zM815 757l-3 -1l0 -5l-12 4l0 4l3 -3zM564 752l2 3l2 -1l0 -2zM214 750l2 3l10 2l-4 -4zM551 748l-1 3l2 0zM439 753l3 1l6 -2l4 3l6 0l3 3l3 -2l-4 -2l-2 -4l-7 1l-3 -3l-6 1zM541 749l-6 -2l-7 3l-6 -1l-5 3l-6 -1l-6 3l-14 -6l-4 2l-3 -1l-1 3l1 3l3 1l8 -3l7 3l10 0l5 -3l6 1l5 -3l11 1l2 -1zM339 746l-2 0l0 3l2 -1zM301 745l-2 2l1 2l4 1l1 -3zM130 744l1 4l4 -2l4 2l6 0l4 -2l11 5l5 0l8 11l3 0l3 -3l0 -3l-2 -2l-6 -1l-8 -6l-7 -3zM756 741l-3 0l-21 12l-22 1l-6 5l-8 3l-2 4l5 -4l6 0l2 -2l8 0l3 -2l9 0l6 -3l5 0zM253 740l-1 5l3 0l4 3l10 0l0 -3l-11 -1zM226 740l2 3l3 0l-1 -2zM184 741l5 4l8 0l13 4l1 -1l-13 -8zM664 739l0 4l4 2l0 -2zM245 739l-7 2l-1 3l7 0zM766 737l-4 2l4 1zM731 738l-14 0l-17 3l-8 8l5 1l8 -7l15 1l4 -3l6 0zM343 740l1 2l28 0l13 5l8 -1l-1 -2l-9 -1l-14 -5l-7 1l-17 -2zM26 743l7 0l3 2l0 -4l5 -1l-2 -1l0 -2l-7 0zM535 738l-2 -2l-13 0l-5 3l-10 -1l-2 3l-7 -1l0 2l6 2l3 -2l6 1l12 -4zM538 738l8 0l1 -2l-5 -1zM324 735l-6 7l1 2l8 -1l-1 -6zM209 735l1 2l2 0l-1 -2zM46 741l0 3l4 0l2 -2l4 1l9 8l12 1l3 2l2 -1l-7 -6l-6 2l-11 -8l1 -4l-5 -2l0 7zM812 734l-4 1l-8 7l3 1l4 -3l6 0l-2 -1zM738 737l6 -3l-4 0zM447 734l-7 2l3 1zM92 740l1 2l8 -1l1 -6l-6 -1zM660 734l-6 2l-3 4l-2 -1l2 -6l-15 0l-3 3l-5 1l-18 0l-5 4l-4 1l-3 4l5 0l4 -3l4 0l6 -3l7 2l9 -2l2 6l10 1l10 -6l1 -5zM555 732l0 2l4 4l3 0l2 -2l-1 -2zM72 731l-3 1l-1 3l6 0zM281 731l-3 -1l-6 3l6 0zM44 730l-2 0l-1 2l2 0zM254 729l1 2l5 2l8 0l0 -2zM477 728l6 4l0 -3zM241 728l-6 1l-1 2l7 -1zM766 728l0 -2l-3 1zM366 727l6 4l11 1l5 3l6 -1l3 4l-1 4l6 0l0 -7l-7 -1l-7 -4l-6 1l-5 -4zM334 726l0 5l2 2l5 1l2 -2l-3 -6zM131 727l1 4l11 2l15 0l10 6l0 -4l-8 -2l-5 -4l-10 0l-5 -3zM510 726l-4 -1l-5 5l-7 -1l1 5zM437 727l-5 -2l-4 2l-15 -1l-7 4l-1 4l6 -2l7 0l5 -4l10 2zM354 725l2 2l5 -1zM295 726l1 4l3 2l7 -1l0 -3l-4 -3zM714 725l-6 -1l-6 3l-7 1l-6 6l-9 3l-6 4l5 3l3 -1l6 -6l9 -4l4 -4l11 -1zM514 726l3 1l2 -2l-4 -1zM7 724l1 3l3 0l6 4l10 -4l-7 0l-3 -2zM809 720l-8 4l-1 4l9 -3zM78 722l0 2l10 -1l-3 -3l-4 0zM553 720l-2 -1l-15 6l-11 -1l-1 2l4 2l13 -1l6 -3l4 0zM310 719l0 3l8 4l-5 -6zM747 719l-3 -1l-2 3l3 1zM199 716l-6 0l-3 2l1 3l3 -4l2 0l2 4l-2 4l-8 0l1 3l7 0l2 -4l5 -2l0 -2zM178 722l-1 -4l-3 -2l-4 0l-3 3l-7 0l2 3l4 2zM264 715l2 4l5 0l-1 -3zM560 716l1 3l7 0l-1 -3l-5 -2zM322 714l-2 3l1 4l5 0l3 -3l0 -2l-2 -2zM105 714l0 3l13 2l8 7l3 -1l-3 -4l-6 -1l-5 -4zM29 714l-2 1l0 3l3 4l-1 -5l4 -1zM749 713l1 5l2 2l4 -1l0 -3zM54 713l-4 3l4 0zM223 713l5 1l1 -2zM649 724l-5 -5l-7 -1l0 -5l2 -2l-6 7l-6 3l-25 2l-3 2l-1 4l-6 4l18 -8l7 2l12 -1l11 -3l2 3l5 1l2 -1zM56 711l4 1l0 4l-4 1l10 2l5 -2l-1 -2l-6 1l-5 -6zM454 715l-7 -3l-3 -3l-3 0l-3 3l-11 -1l-10 3l-18 1l-16 -1l-6 -4l-6 3l1 3l8 -1l3 4l12 3l4 0l11 -5l12 0l5 -2l18 0l8 2zM339 709l-3 6l4 -1zM187 710l-6 0l-2 5l2 1zM608 708l-3 0l-6 3l-1 2l3 1zM501 710l0 5l9 -2l-2 -5l-4 0zM489 708l-5 3l2 5l5 1l2 -1l0 -3l-2 -5zM667 708l-4 -1l-6 2l0 4l4 -2l5 1zM136 710l5 0l3 4l7 4l3 -1l-4 -5l-9 -5l-2 0zM719 707l-6 -1l-31 13l-15 1l-2 3l9 4l30 -15l11 -1zM811 702l-8 4l-2 6l6 -1l5 -3zM564 702l-5 0l-3 2l-11 2l-13 6l-5 -2l-3 0l-2 2l4 2l15 0l10 -7zM308 704l-19 -3l-7 3l-10 0l-1 2l8 2l7 -3l9 -1l4 3l-4 6l-9 1l-7 3l-1 2l5 -3l6 0l3 -2l9 0l3 -2zM162 702l3 3l10 -2l-1 -2zM577 701l-3 -1l-6 3l8 1zM105 700l0 3l4 2l18 1l7 -2l-2 -4l-3 0l-5 4l-4 -2l-12 1zM835 699l0 4l-2 2l-3 0l5 6zM8 699l0 2l6 5l1 6l8 1l-2 -5l-6 -4l-3 -5zM740 698l-10 7l9 -3zM699 699l-4 -2l-5 4l-10 3l-2 4l9 -2zM242 696l1 5l2 2l5 0l0 -6zM193 696l0 5l7 2l3 -3l-6 -4zM606 695l1 2l4 -1zM513 695l5 3l3 0l2 -2l-1 -2zM320 695l1 6l7 0l-1 -7zM23 694l2 4l5 2l1 -6zM256 693l8 8l0 -2zM751 692l-3 0l-5 4zM647 696l-4 0l-1 -4l-4 2l-5 0l0 5l-2 3l-7 1l-8 6l-2 0l3 1l9 -2l5 -5l3 0l4 -5l6 -2l3 2zM358 693l-5 -1l-7 4l-8 -3l-1 3l13 1l4 -2l3 1zM491 693l-3 -2l-5 5l6 0l2 -1zM234 691l-1 3l4 1l1 -3zM60 691l-1 6l3 3l6 1l7 8l8 0l5 2l0 -2l-6 -4l-9 -2l-5 -3zM683 691l-8 0l-2 4l1 1l4 -3l4 0zM553 691l-12 -1l-4 4l-4 -2l-4 0l-1 2l3 2l5 0l3 -2l13 -1zM497 690l1 3l5 -1l-1 -2zM136 690l1 2l6 2l2 3l11 4l-14 -10zM16 689l1 3l4 1l0 -3zM755 691l7 2l3 -2l0 -3l-6 0zM570 689l-5 -1l-4 4l6 0zM372 693l3 3l3 0l4 -4l2 0l10 7l17 6l16 -2l10 -6l10 1l3 3l8 3l14 2l0 -5l5 -4l-4 1l-2 3l-8 1l-13 -8l-12 -1l-15 8l-11 0l-21 -9l-6 -5l-3 0l-3 3l-5 1zM74 692l9 1l7 6l0 -4l-4 -1l-6 -7l-1 5zM108 687l0 3l3 2l21 -3l-21 -3zM264 684l2 4l10 5l13 -1l5 -2l8 2l12 -2l-1 -2l-12 -2l-5 3l-11 0l-6 3l-6 -6zM659 683l2 10l7 4l0 -2l-5 -3l-2 -7zM145 682l5 4l6 -1l4 3l8 0l4 -2l10 8l9 -1l0 -2l-3 -2l-8 -1l-7 -3l-8 0l-6 -3zM57 680l0 3l7 1l7 6l0 -4l2 -2l3 0l-16 -2zM505 678l-7 0l-3 4l0 4l2 0l3 -5l4 -1zM253 676l1 5l3 -1l0 -3zM90 676l-2 1l2 5zM392 677l2 3l10 3l5 5l5 2l8 0l9 -5l9 -2l13 2l5 3l6 0l4 -3l4 4l16 -5l-6 -1l-2 2l-13 0l-16 -5l-16 0l-13 5l-11 0l-4 -1l-2 -4l-6 -5l-4 0zM814 674l-3 3l1 4l5 -2l-3 -1zM765 674l-4 4l-5 0l-17 8l-5 0l-9 5l-8 0l-11 3l-4 4l29 -6l9 -6l3 0l22 -9zM660 675l3 5l5 1l-5 -6zM81 674l0 4l2 1l2 -3zM115 673l0 3l2 2l4 -1l13 5l5 0l-4 -4l-10 -1l-5 -4zM309 673l4 3l5 -1l3 6l5 0l11 -5l4 0l3 4l3 0l2 -2l14 0l2 -3l-2 -3l-11 2l-3 3l-6 -4zM50 672l0 7l4 -1l-3 -2l0 -2l4 -2zM510 675l21 -2l4 3l5 0l5 3l4 -1l0 -2l-6 -2l-3 -4l-6 0l-2 2l-3 0l-2 -2l-8 0l-3 2l-5 -1zM275 670l0 2l4 2zM165 670l3 3l11 2l10 6l7 1l8 7l7 0l4 5l3 -1l-1 -4l-3 0l-3 -4l-18 -9l-7 -1l-6 -4l-9 1zM7 670l0 4l4 2l3 -1zM637 669l0 2l-5 4l1 2l8 0l-5 -1zM612 671l-6 -2l-16 10l-9 3l-4 6l5 1l4 -3l4 0l10 -10l6 0zM627 668l-10 3l3 1zM753 668l-4 -1l-3 3l-5 1l-6 4l-4 0l-17 7l-11 0l-3 3l-7 -1l-2 4l4 1l5 -4l7 0l7 -3l13 -1l7 -4l5 0l12 -6zM665 667l-10 2l1 4l2 0l4 -5zM155 667l-1 3l2 0zM58 667l0 4l10 3l9 -3l-1 -3l-10 2l-4 -3zM197 667l7 4l35 6l4 5l0 -6l-8 -1l-5 -4l-5 0l-4 -3l-9 1l-6 -3zM33 666l-8 2l0 3l5 5l0 2l-8 0l-1 2l3 3l2 0l4 -5l3 0l-3 -2l0 -7l5 -1zM105 665l0 3l2 2l5 1l-4 -6zM813 660l-2 5l3 -2zM359 660l0 2l3 0l0 -2zM502 658l-7 2l2 2l0 4l-2 2l-15 1l-1 -7l-6 7l-3 0l-2 -3l-6 -3l-4 2l-16 1l-4 2l-4 -2l-10 2l4 2l21 1l4 -2l26 0l3 4l8 2l4 -3l3 -5l4 -1zM252 658l0 5l-6 1l7 0zM834 657l-1 2l2 2zM538 658l9 3l-2 -4zM244 657l-2 2l2 3zM177 657l1 6l12 4l5 -1l-4 -5l-8 -1zM94 657l-5 4l1 2l4 0zM392 659l0 2l3 2l9 0l0 -4l-3 -3l-6 0zM259 657l2 2l6 -1l-5 -2zM507 656l2 4l15 -1l7 2l3 -2l-13 -4zM171 655l-6 1l0 2l3 3l0 -4zM120 656l2 3l6 1l-1 -4zM7 655l0 5l14 6l-5 -6zM97 654l-1 1l6 1l0 5l1 -6zM432 653l2 2l7 1l-3 -3zM309 655l1 4l3 -1l9 4l4 -1l0 -3l-7 -1l-5 -4zM109 654l4 1l-2 -2zM634 652l-5 -1l-4 3l-5 -1l-10 4l-4 0l-16 7l-3 0l-8 5l-4 0l-16 7l-1 4l9 -1l24 -13l17 -6l25 -3zM415 652l5 1l-3 -2zM300 651l-3 1l0 4l3 -1zM445 654l4 0l3 -4l-5 0zM664 647l0 4l3 0zM467 649l-6 -2l-6 3l10 2zM498 646l-3 0l-5 4l-7 -3l4 3l-4 4l0 2l7 0l1 -3l7 -5zM179 647l2 3l12 3l8 4l38 2l-2 -2l-21 -1l-10 -4l-12 -1l-4 -3l-5 1l-4 -3zM814 645l-2 4l-11 9l1 2l2 0l10 -11zM764 646l-19 0l-6 5l-3 0l-8 5l-3 0l-16 10l-4 0l-6 4l-8 0l-8 4l-8 1l10 1l12 -4l16 -1l12 -5l5 -5l4 1l14 -11l12 -1zM833 644l0 2l2 1l0 -2zM366 645l-5 -2l-8 2l-5 3l-4 0l0 4l-4 2l10 -2l6 -4l7 -1zM327 644l1 3l7 5l0 -5l4 -1l-8 -3zM84 643l5 4l3 0l-2 -4zM7 641l0 4l10 5l3 0l7 7l17 -1l-1 -2l-10 2l-4 -3l-1 -4l5 -4l0 -2l-6 5l-6 2l-6 -7zM724 641l-4 -1l-5 4l-6 1l-27 15l-19 1l-5 -2l0 3l8 2l9 0l4 -2l6 1l19 -9l5 -5l11 -3zM244 644l7 0l1 -2l-1 -2l-4 0zM554 638l-6 1l-10 6l-10 0l-6 -3l-7 2l-4 -3l-5 -1l-2 4l1 2l10 -1l7 1l6 3l6 0l15 -6zM809 637l-2 0l-1 3zM326 639l-1 -3l-2 0l-4 4l-7 -1l-1 2l8 4l6 -2zM63 636l-2 0l-3 3l1 5l3 -1zM632 635l-7 4l-5 0l-9 3l-5 4l-17 7l-10 0l-7 -2l-6 -4l-4 0l-13 7l5 2l12 -2l4 4l17 -1l12 -4l9 -5l7 -1l7 -4l11 -2zM404 636l-9 0l0 4l4 3l4 -1zM177 640l0 -3l-3 -2l-4 1l-4 5l-2 0l-3 -4l-4 1l2 2l4 0l3 3l9 0zM712 633l-4 2l-9 0l-8 2l-7 4l-3 -1l-7 5l-6 -4l-2 3l7 6l3 0l16 -6l6 -4l6 -1zM93 633l1 4l3 3l11 0l2 2l3 -1l-12 -7zM353 633l6 4l4 -3l0 -2zM764 631l-9 3l-16 0l-9 5l9 0l8 -3l14 0l3 -1zM182 631l3 6l7 3l15 1l5 3l8 2l7 -1l7 2l4 -2l-3 -3l-7 1l-3 -2l-20 -3l-5 -3l-4 0l-5 -4zM813 630l-2 4l4 1l-2 -1zM483 630l-5 0l-7 5l-12 1l-7 -2l-5 1l-3 -2l-14 3l-8 -2l-3 2l-1 3l3 2l4 0l3 -2l25 0l7 -3l17 1l6 -3zM272 631l3 1l-2 -2zM345 632l-3 -3l0 4l-2 1l4 0zM510 629l1 2l5 -1l7 4l8 0l9 -3l-2 -3l-2 0l-3 3l-16 -3zM266 630l-3 -2l-4 0l-6 3l-1 2l3 1l2 -2l7 0zM335 627l-4 0l-2 2l0 3l4 1l0 -5zM123 628l-2 -1l-1 2zM7 626l1 3l12 6l3 0l3 -3l-1 -3l-14 1zM493 627l3 2l-1 6l3 -3l5 1l-2 -6l-4 -2zM108 625l1 3l3 0l-1 -3zM162 625l1 2l4 -1l0 -2zM74 623l1 3l3 -1l0 -2zM635 623l-3 -1l-2 2l-4 -1l-4 2l-12 1l5 1l-1 5l-5 0l-1 -5l-30 8l-12 -1l-10 3l13 0l8 4l15 1l17 -9l18 -4l3 -3l3 0zM37 622l-6 1l-2 2l6 2zM85 621l-2 3l3 2l2 -3zM666 621l0 4l2 2l3 0l2 -3l4 -1l13 0l4 3l3 -2l-2 -3l-7 1l-2 -2l-13 0l-2 3zM286 621l2 3l5 0l5 6l7 0l3 -3l10 0l-1 -2l-3 0l-4 -3l-5 2l-11 0l-4 -4zM298 625l6 -1l1 5l-6 1zM196 619l13 8l6 0l8 4l12 -1l5 4l4 -2l-3 -4l-7 1l-4 -3l-6 0l-4 -3l-5 0l-5 -3zM764 615l-9 1l-7 7l3 1l13 -5zM470 622l-8 2l-16 -8l-12 -1l-5 2l-7 -1l-10 4l-16 -1l-5 2l1 3l17 -1l5 2l8 -3l5 1l8 -3l18 2l4 3l10 0zM65 615l-1 5l4 2l1 -4zM59 615l-4 5l1 4l4 3l3 -2l-4 -3zM515 617l3 1l4 -2l8 0l5 -3l-12 -1l-7 3zM802 613l0 3l6 -1l5 2l0 -6l-6 0zM320 615l2 6l4 0l3 -4l17 1l2 -3l3 4l18 2l6 -2l-6 -6l-6 2l-8 -2l-3 2l-3 -2l-4 1l-4 -3l-5 0l-7 3zM664 610l0 4l3 0l0 -2zM155 609l3 3l9 1l2 2l1 7l4 0l5 -5l7 2l8 0l-3 -5l-7 0l-3 -2l-6 0l-5 2l-6 -4l-8 -2zM7 608l0 5l3 2l7 0l7 4l5 0l4 -3l-1 -2l-3 2l-6 0l-11 -7zM689 607l-4 0l-3 2l-7 -1l-3 2l11 1l6 -2zM724 606l-6 2l-3 3l4 0zM635 608l-6 -2l-4 3l-6 -1l-9 3l-26 3l-12 6l-20 5l-6 3l7 1l4 -2l10 -1l28 -9l5 1l7 -2l8 0l18 -6zM296 605l2 6l2 1l7 0l2 -2l-1 -4l-3 -2zM299 605l6 -1l2 2l0 5l-7 1zM75 610l7 -1l4 2l0 -2l-6 -5l0 5zM475 606l0 2l2 1l7 0l1 2l1 -2l-6 -6zM62 603l-3 0l-3 3l2 0l1 3zM590 601l-15 0l-9 6l-3 -2l-4 0l-4 5l-10 1l3 4l3 0l7 -4l13 -2zM503 601l-8 -1l2 4l-2 6l1 4l3 -4l0 -3l4 -3zM252 604l15 1l3 2l21 -1l-6 -4l-11 0l-3 2l-5 0l-3 -2l-7 0l-3 -3zM112 598l0 2l12 3l-2 -3zM755 597l2 2l5 -1zM668 597l-1 4l2 1l1 -3zM390 602l1 5l4 0l4 -3l11 1l6 -3l9 3l9 -2l8 3l6 0l11 5l6 -1l2 -3l-12 -2l-12 -5l-14 -1l-5 -3l-16 3l-11 0zM373 597l2 2l3 0l4 4l4 -1l-1 -4l-4 -2zM244 596l-3 2l2 4zM65 596l-2 2l3 3l6 2l1 6l0 -5l5 -1l-5 0l-4 -5zM684 595l-7 1l-3 3l6 0l4 -2zM344 595l4 3l12 2l4 -1l1 -2l-5 -2zM319 597l2 4l9 0l3 -3l-7 -3l-4 0zM811 594l-5 2l1 4l6 -1l-2 -1zM628 593l-2 -1l-15 6l-12 0l-1 2l5 2l8 -4l15 0l2 -1zM693 592l3 1l0 -2zM7 588l0 5l11 10l5 1l2 3l2 0l-4 -3l0 -3l-11 -9l-1 -3zM74 592l9 1l-4 -6l0 4zM108 586l1 2l6 2l9 -1l5 4l6 1l9 6l0 -2l-4 -4l-21 -8zM572 586l-13 -1l-9 5l-7 1l-5 5l7 1l9 -4l18 -4zM270 586l0 2l4 3l19 -1l5 2l7 0l-2 -4l-12 1l-9 -1l-7 -3zM145 585l0 2l4 4l12 8l18 2l5 2l14 1l1 3l5 -1l9 3l4 0l3 -2l3 3l5 1l8 5l5 0l4 3l36 1l0 -2l-7 -2l-29 -1l-11 -7l-14 -4l-11 1l-4 -4l-6 2l-1 -3l-4 -2l-31 -4l-9 -4l-4 -4zM366 583l2 2l5 -2zM65 583l1 3l6 5l0 -5l2 -1zM755 582l-4 0l-3 4l7 -1zM508 597l-7 -7l-2 -5l-4 -4l-6 8l-6 0l-6 -4l-12 0l-3 2l-6 0l3 2l3 -1l4 2l21 1l5 4l9 -3zM435 580l1 4l4 -1l0 -3zM812 579l-2 2l0 3l3 -2zM664 579l1 5l5 1zM632 578l-6 3l6 6zM378 583l11 3l17 -2l10 2l12 -2l1 -2l-4 -2l-16 2l-10 -4zM351 578l-2 3l2 -1zM592 577l-3 1l2 1zM533 579l7 -1l-4 -1zM81 578l1 3l10 1l0 -2l-3 1l-3 -3zM323 577l0 4l6 -1l-1 -4zM253 576l1 7l1 -4zM487 575l-7 5l4 4l3 -3zM833 574l0 3l2 2l0 -4zM105 573l0 4l5 -1l9 4l6 -1l9 4l6 0l-8 -5l-8 1l-2 -2zM7 573l8 7l7 10l5 3l-6 -11l-10 -8zM698 573l-5 -1l-8 5l-4 -3l-3 0l-3 4l-4 -1l-1 4l6 3l4 -4l14 -3zM66 570l6 3l-4 -4zM406 569l14 1l3 -2zM565 569l-2 -2l-3 0l-3 4l-4 0l-8 4l-2 3l22 -7zM20 567l4 9l3 3l0 -11l-3 1zM456 567l4 4l17 1l0 -3l-2 -2zM803 565l-1 4l2 -2zM764 565l-11 4l-8 1l-4 4l6 0l9 -5l8 0zM434 566l3 3l5 -3l5 2l4 -1l-2 -2l-10 -1zM483 568l2 3l10 -2l14 1l8 -3l6 2l3 -2l5 0l1 -2l-32 0l-1 4l-9 0l-3 -6l-3 2zM607 562l-4 1l-3 4l2 2l5 -1zM813 561l-2 6l3 -1zM611 562l3 4l8 -3l5 5l4 -1l1 -6l-4 2l-6 0l-3 -2zM328 568l1 3l4 0l3 2l3 -1l-5 -1l-3 -3l1 -1l7 2l14 -2l6 1l0 3l4 -1l6 2l20 -3l-16 0l-6 -3l-5 0l-14 -5l-4 2l-7 0l-5 -2l0 6zM254 560l-1 5l10 2l11 5l4 0l3 3l8 3l10 0l-3 -3l-7 -1l-4 -3l-7 0l-8 -5l-7 -1zM156 558l2 3l4 2l12 2l4 3l9 3l11 -1l8 3l5 4l5 -1l-2 -3l-12 -6l-8 -2l-11 1l-6 -2l-4 -5l-9 1zM402 555l0 6l3 -3zM62 558l10 3l5 5l8 1l6 4l1 -1l0 -3l-2 -2l-15 -5l-10 -7l0 4zM764 552l-8 -1l-15 4l-7 0l-7 6l-11 6l-14 5l18 0l21 -13l6 -2l7 0zM555 551l-1 3l3 0l1 -2zM173 555l37 3l14 7l6 -1l5 2l4 -3l3 1l0 -6l-11 2l-12 -7l-5 1l-12 -3l-8 1l-4 -2l-11 0zM476 550l-13 -1l-4 2l-9 0l-4 2l-30 0l-3 3l7 1l4 -2l20 2l4 -2l28 0zM252 548l1 3l4 3l25 7l7 -1l7 2l6 -2l2 3l4 -1l4 5l4 0l3 5l7 -6l1 -7l-5 0l-3 2l-16 -10l-3 3l-11 0l-4 2l-12 1l-16 -8zM508 547l0 8l24 0l3 -3l-2 -2l-15 0zM163 545l2 3l2 0l-2 -3zM631 544l-24 0l-7 3l-13 10l-13 -1l-2 1l0 2l10 1l9 -2l18 -10l6 0l8 4l3 0l5 -3zM68 541l0 2l9 7l13 3l3 3l0 -3l2 -2l6 0l2 2l-1 6l2 -2l6 1l15 10l9 0l2 2l5 0l9 3l5 5l10 2l4 3l14 0l4 3l6 1l8 4l7 -3l-3 -3l-10 -1l-6 -4l-10 1l-5 -5l-14 -1l-20 -8l-6 1l-3 -4l-7 1l-1 -4l-8 -8l-9 -3l-8 1zM833 540l0 4l-3 1l5 5l0 -8zM812 539l-10 13l5 0l7 -5l-4 -1l0 -5zM304 542l14 3l8 -1l2 2l7 2l3 3l22 1l21 6l11 0l3 2l0 -5l-2 -1l-10 0l-9 -3l-7 0l-12 -3l-10 -4l-10 0l-10 -6l-18 1zM187 538l3 3l12 -1l38 7l10 -1l-1 -3l-4 -2l-6 0l-4 -2l-14 0l-7 -2l-11 0l-2 2l-10 -2zM63 537l0 3l2 0l0 -2zM105 536l1 5l10 2l8 5l4 0l-1 -3l-7 -2l-7 -5zM25 536l-5 5l0 3l2 -4l3 -2zM176 533l3 2l0 5l4 -1l0 -4l-2 -2zM345 531l1 5l15 5l27 4l12 -1l-4 0l-2 -2l0 -4l2 -2l6 0l0 7l3 0l2 2l3 -1l2 -3l32 1l12 -2l3 -2l9 1l12 -3l0 -3l-15 2l-10 -2l-6 2l-8 0l-3 2l-11 -1l-19 2l-4 -3l-7 0l-14 5l-10 0l-15 -2zM764 530l-20 10l-22 6l-18 11l-20 0l-9 5l-3 -1l-1 3l-4 -3l0 5l3 2l2 -5l3 1l5 -2l15 0l16 -4l13 -10l26 -6l14 -6zM631 528l-6 0l-3 2l-12 -1l-10 2l-4 3l-7 1l-6 5l-9 0l-3 2l0 2l2 2l12 0l11 -8l11 -5l15 2l9 -2zM552 528l-9 2l4 4l5 -3zM334 528l-6 2l4 3l0 -4zM670 527l-2 4l3 3l2 -4zM83 527l0 4l-2 1l10 4l0 -5zM309 526l0 4l11 -1l-3 -3zM7 526l1 6l3 3l4 0l1 -5l-6 0zM67 524l-2 2l0 3l5 2l0 -6zM832 524l3 3l0 -4zM198 523l5 1l-2 -2zM103 524l3 4l7 2l4 3l10 3l1 -1l-2 -3l-10 -2l-12 -8zM697 522l-3 -1l-7 5l-9 0l-2 3l5 0l4 2zM494 522l3 8l2 0l1 -3l4 2l0 4l-3 1l-1 4l-2 0l12 0l5 -2l15 -1l7 1l4 -6l-2 -2l-31 3l-5 -4l-2 -4l-6 -2zM208 524l2 3l6 0l9 3l13 -1l10 2l16 13l7 3l31 -4l-5 -3l-6 0l-11 4l-9 -2l-26 -17l-26 0l-5 -4zM812 518l-2 3l6 3l-3 -2zM137 523l7 1l3 -2l9 -1l-2 -2l-8 1l-3 -2l-4 0zM763 516l-5 0l-6 3l-22 16l-22 2l-3 2l-12 0l-9 2l-5 3l-8 0l-3 -2l-1 3l2 4l6 0l5 -4l21 1l7 -5l8 -3l9 0l6 -3l8 -1l13 -10l10 -3zM343 518l5 7l14 6l15 0l18 -8l30 1l11 -3l14 0l6 2l4 -1l0 -3l-2 -2l-10 -1l-10 2l-8 -1l-7 3l-32 -1l-10 4l-5 4l-8 1l-15 -7l-5 -5zM181 518l8 2l3 -1l-1 -3l-8 0zM169 516l1 6l9 -3l-4 -4zM667 516l8 1l-4 -3zM473 515l1 4l4 -1l-3 -1l0 -3zM631 512l-7 3l-10 -1l-7 1l-3 2l-11 1l-8 3l-11 1l-7 4l-7 0l-1 4l11 0l20 -8l6 1l9 -5l5 2l14 -1l7 -2zM806 511l-3 1l0 5zM342 511l-4 -1l-4 3l-5 0l0 5l9 0l4 -4zM503 509l5 4l-2 -5zM222 509l5 5l8 0l4 2l5 0l5 3l10 1l9 10l8 4l20 -3l0 -3l-21 2l-18 -14l-13 -2l-5 -3l-10 0l-5 -3zM66 510l2 3l9 1l11 5l0 -5l-6 -1l-6 -5zM7 508l0 5l10 6l4 4l4 -2l0 -3l-7 -2zM104 510l2 3l9 3l5 4l5 0l4 4l5 -1l-3 -5l-10 -2l-5 -5l-9 -4zM599 506l-6 -1l-4 2l-9 0l-3 2l-9 -1l-45 9l-10 -1l-4 2l-1 3l3 -2l8 1l5 -2l36 -2l15 -3l10 -4l9 1zM219 508l-5 -3l-3 5l5 0zM763 503l-11 0l-12 4l-3 6l-9 9l-10 1l6 4l9 -3l6 -8l6 -3l6 -6l12 0zM711 502l1 3l3 -1l0 -2zM454 503l3 1l-1 -2zM192 503l1 3l3 -3l4 5l0 -3l-3 -3zM254 501l1 5l14 0l18 11l7 0l4 -5l2 0l7 5l11 1l0 -5l-13 1l-2 -2l-1 -6l-2 0l-2 6l-3 1l-8 -2l-8 -6l-7 -3zM0 501l1 5l2 -1l0 -3zM603 504l4 1l6 -2l1 -2l-8 -1zM79 501l0 2l4 2l7 1l2 -2l-1 -2l-7 -2zM815 499l-6 10l4 -1l4 -5zM626 497l0 2l5 -1zM197 497l4 2l-1 -2zM717 500l4 0l5 -3l-6 -1zM306 501l0 2l2 1l32 -4l11 0l4 2l4 -1l17 11l17 -2l22 0l11 -3l11 0l8 -4l-1 -2l-5 0l-5 2l-9 0l-5 3l-20 2l-14 -2l-13 -6l-13 -3l-11 2l-10 -1l-5 2l-6 -5l-19 3zM321 497l7 -1l1 5l-7 1zM731 495l1 2l3 0l0 -3zM287 494l0 2l3 3l8 1l-1 -3l-4 0zM810 493l-6 1l-1 6zM107 493l0 4l20 4l14 6l16 1l9 4l-1 -4l-8 -3l-7 0l-12 -6l-8 0l-5 -3zM7 493l1 6l8 5l5 6l4 0l0 -3l-2 0l-7 -8zM220 493l8 6l9 1l4 3l0 -4l-3 0l-3 -3l-5 -1l-4 -3zM65 492l0 5l4 0l1 -3zM584 492l-3 -1l-5 3l-16 -2l-25 9l-7 1l-5 3l-7 1l4 2l5 -2l18 -2l18 -6l14 0l7 -2zM473 490l-1 6l5 3l0 5l2 1l1 -9l-5 0l-2 -2zM254 489l0 2l3 2l20 -1l-1 -2l-20 -2zM203 489l0 2l4 0l0 -3zM761 486l-2 0l-1 3l2 0zM602 486l2 3l3 -1zM803 484l0 3l4 -2l4 1l0 -3zM622 483l2 3l5 2l-2 -6zM740 483l-8 -1l-4 2l-8 0l-3 -3l-13 0l-20 17l-10 1l-3 3l6 2l7 -5l5 1l5 -5l5 -1l9 -8l10 0l3 -2l14 1zM105 483l10 4l13 1l23 6l3 2l7 0l13 5l6 -1l4 -3l-1 -2l-13 0l-3 -2l-9 -1l-8 -3l-18 -4l-13 -1l-13 -4zM161 483l18 2l-1 -3l-13 -3l-1 3zM7 478l0 5l6 2l12 10l-1 -8l-4 -1l-2 -4zM521 489l6 2l3 -3l9 -3l33 -4l8 -3l-36 -1l-4 3l-9 0l-5 5l-4 1zM400 477l-4 2l0 4l5 -1zM65 476l0 5l6 2l3 6l2 1l7 -2l8 5l0 -3l-4 -5l-7 -3l-9 -1zM228 482l2 3l8 0l4 2l7 -3l3 -6l25 5l47 0l8 4l10 -1l3 2l13 -1l4 2l12 0l25 8l10 -1l8 -3l7 0l11 -5l21 -1l-3 -4l-17 0l-3 3l-11 0l-4 2l-14 -1l-6 6l-2 -2l-1 -6l-14 -1l-8 2l-15 0l-13 -3l-5 1l-12 -4l-13 0l-3 -2l-21 0l-12 2l-13 -1l-11 -6l-8 2l-2 5l-4 3zM596 471l-1 2l2 1l1 -2zM431 474l5 -1l2 -2l-7 0zM441 471l5 3l19 -2l-3 -3l-13 0zM24 468l-2 2l1 1zM803 468l0 6l4 -2l7 0l0 -5zM169 466l-1 5l3 -1l4 2l6 0l8 5l5 -1l-1 -4l-6 3l-3 -4l-11 -2zM7 466l0 3l5 0l3 2l4 -1l-3 -3zM223 465l2 3l9 3l8 0l-2 -3l-6 -2l-6 1l-2 -2zM312 464l-1 2l4 2l1 -3zM411 464l2 2l9 0l-4 -3zM65 464l0 4l18 2l6 5l3 -3l-9 -7l-8 -2zM564 465l-3 -2l-12 1l-4 -2l-8 2l-9 -1l-7 2l-8 0l-2 1l-1 4l4 1l5 -3l13 1l4 -2l13 -1l14 1zM209 462l2 3l3 0l-2 -3zM630 459l-14 4l-11 6l-2 3l13 -4l10 0l4 -4zM205 460l-3 -1l-5 5l4 0l2 -4l2 2zM103 459l-1 4l7 7l4 0l8 4l11 2l0 -5l5 -1l-8 -4l-18 1zM406 462l-6 -5l-4 0l-2 6l-4 3l-21 7l-13 1l-18 -6l-11 -2l0 2l6 5l7 0l8 3l25 1l19 -8l2 -5l12 0zM708 456l-5 2l-15 1l-9 6l-9 4l-4 0l0 4l9 1l8 -4l6 -6l10 -3l9 0zM815 455l-2 3l3 1zM470 454l-16 0l-19 4l-2 2l6 1l14 -2l17 0zM253 455l2 1l0 5l6 1l7 4l7 -1l3 4l6 -3l21 2l2 -2l-1 -2l-21 -2l-4 -3l-14 -5zM184 461l4 1l3 -2l4 0l3 -3l-6 -3l-4 0l1 6zM322 454l1 2l3 -1l0 -2zM179 459l3 -6l4 0l-8 -1l2 2zM7 452l-1 3l3 1l1 -3zM221 452l3 3l6 0l13 5l1 -5l-5 -3zM762 450l-11 1l-3 3l-7 3l-11 11l-31 1l-17 14l-7 3l-9 0l-1 3l17 0l10 -10l12 -8l17 1l3 2l9 -1l10 -10l4 -2l4 -6l12 0zM405 451l1 3l8 0l3 2l10 -3l-2 -2zM330 454l0 2l2 1l9 -3l5 5l0 3l3 3l5 -3l8 0l5 -3l6 1l11 -5l-18 -2l-7 3l-12 0l-4 -2l-4 -5l-6 1zM171 451l-2 -2l0 4l-5 1l5 2l0 -3zM666 450l0 2l6 -1l0 -3l-4 0zM545 450l-12 -3l-20 1l-1 6l26 0zM205 447l2 3l3 0zM65 447l0 6l7 -1l4 2l7 0l8 5l0 -5l2 -1l-16 -5l-7 1zM576 446l0 2l2 1l3 -2zM630 444l-2 -1l-15 4l-17 9l-2 3l4 1l15 -8l17 -5zM189 443l0 2l6 4l5 -2l0 -2l-4 -4zM442 444l3 2l25 -3l1 -3l-26 1zM756 437l-4 -1l-27 15l3 0l1 4l14 -11l10 -4zM513 435l-2 1l1 4zM103 435l0 6l-2 1l5 5l15 1l14 6l0 -4l3 -1l-8 -3l-10 -1zM94 442l-1 -7l-9 3l3 3zM815 434l-6 10l-6 4l0 5l6 -7l10 -5l-4 -1zM321 433l-4 0l-2 2l4 4l0 -5zM326 433l4 2l-1 5l4 0l4 -3l3 0l4 5l9 2l25 0l6 -4l-2 -1l-4 2l-4 -2l-16 0l-9 -4l-7 0l-3 -3zM519 434l3 1l0 4l8 -3l31 3l-5 -1l-14 -7l-12 0l-7 3zM182 431l-11 5l0 4l11 -1zM742 430l-4 0l-5 4l-8 2l-18 0l-13 8l-14 1l-2 1l0 2l26 0l5 -3l9 -1l11 -4l5 -4l6 -2zM700 441l7 -1l1 5l-2 2l-5 0zM629 429l-6 3l-9 1l-4 2l-18 2l-8 7l6 2l15 -6l16 -3l8 -3zM427 434l-7 -2l-2 -3l-3 0l-10 7l-7 -1l-2 1l0 2l2 3l3 0l5 -4l5 -1l5 2l7 0l4 -2zM7 429l0 4l5 2zM307 428l-1 6l4 3l3 -3zM216 431l1 2l5 2l10 -1l4 4l3 0l8 5l26 2l24 9l16 -1l-11 -7l-6 2l-7 -1l-8 -4l-11 -1l-13 -4l-3 5l-7 0l-2 -2l0 -5l5 -1l-19 -7l-3 0l-3 3l-3 0l-2 -2zM72 424l1 6l3 1l3 -3l0 -3zM470 423l-4 0l-3 3l-8 -1l-4 3l12 1l2 -3l5 1zM252 426l5 1l8 5l11 3l23 -2l-2 -1l1 -7l-4 4l-8 2l-15 -1l-14 -8l-2 4zM186 425l0 3l3 -4l2 1l-2 8l11 -1l3 -6l4 2l0 -5l-4 -1l-5 7l-3 0l-4 -7l-3 0zM105 419l0 5l4 1l8 7l18 8l5 0l3 2l0 -6l7 0l14 8l-13 -8l-13 0l-10 -2zM349 423l6 4l7 0l8 3l14 -1l7 -3l-1 -4l-6 2l-7 -2l-9 1l-3 -2l-8 -1l-4 -3l-2 0l0 4zM354 422l6 -1l1 5l-6 1zM338 417l0 5l2 0l0 -4zM7 417l0 3l12 5l3 4l2 0l0 -4zM614 419l-6 -3l-19 2l-12 6l-3 6l-9 5l2 1l7 -2l2 -5l4 -1l7 -5l14 1l5 -2l6 2l2 -2zM814 420l-3 -1l0 -4l-4 3l0 2l2 1zM745 415l-18 7l-9 -3l-10 -1l-10 4l-11 11l-3 0l-5 3l-6 0l-2 2l4 1l4 -3l7 0l5 -5l5 -2l9 -9l7 1l9 4l8 0l14 -7zM169 417l1 5l8 -1l0 -4l-2 -2l-5 0zM306 415l3 4l7 2l0 -5l-7 -2zM216 415l2 3l6 -2l5 3l7 0l6 3l-1 -5l-6 0l-11 -3zM833 413l0 4l-2 1l4 4l0 -6zM618 415l1 5l10 -2l0 -4l-7 -1zM692 412l-4 1l-5 6l-4 1l-3 3l-6 0l-3 -2l0 4l8 2l5 -1zM208 412l1 5l3 1l2 -2zM155 412l-1 1l2 1l1 -1zM106 409l1 3l23 14l17 0l5 -2l4 0l3 2l3 -1l-1 -2l-7 0l-3 -2l-18 2l-9 -4l-6 -5zM584 412l-2 -4l-13 5l-7 6l-26 -1l-24 3l1 6l17 -5l14 0l15 3l22 -13zM253 408l1 3l11 2l4 4l4 -5l2 0l3 5l17 0l7 -4l-1 -2l-15 2l-8 -4l-11 -2zM403 408l4 3l12 -2l0 -2l-3 -1l-9 0zM72 407l1 4l2 1l5 -3l-2 -3zM7 406l1 3l15 6l0 -4l-12 -5zM184 416l10 1l4 -6l7 1l0 -2l-7 -6l-6 0l-1 2l2 7l-4 3zM681 400l-7 0l-6 2l-1 6l3 -2l7 -1zM350 402l1 5l7 0l-4 -1l0 -4l5 -1l1 5l12 0l6 3l20 1l2 -2l-11 -2l-5 -3l-8 -2l-19 -1zM328 405l8 0l6 2l0 -4l-8 0l-2 -3l-2 0l0 4zM834 399l0 2l-2 1l3 2zM810 399l-1 4l2 0zM613 400l-2 -2l-3 0l-3 2l-10 2l-7 4l1 4l12 -6l10 -2zM178 399l-7 0l-1 3l3 1zM244 398l1 3l3 2l5 -4l0 -3l-8 0zM144 396l-1 2l3 2l1 -3zM80 397l2 3l9 3l0 -4l-9 -3zM573 401l-4 -2l0 -4l2 -1l-3 0l-24 12l-18 1l-10 -1l-4 -2l0 3l4 4l28 -1l12 -3l7 -5zM755 393l-3 0l-15 9l-12 4l-6 -2l-13 0l-9 3l-2 3l10 -1l4 -2l9 2l6 -1l4 2l10 -8l7 0zM207 393l-1 5l3 0l11 6l9 1l9 4l5 -1l0 -2l-17 -5zM107 393l-1 6l21 12l7 2l9 -1l-7 -1l-14 -7zM389 392l-1 4l6 1l0 -4zM267 394l0 2l8 0l24 8l20 1l-6 -1l0 -4l3 -1l-14 2l-3 -2l-12 -2l-8 -4l-9 -1zM404 393l0 4l17 -1l7 3l12 1l0 -2l-3 -2l-6 0l-14 -5zM67 391l0 4l7 0l-1 -2zM7 389l0 3l7 6l9 0l0 -6l-12 -1zM464 388l1 2l4 1l0 -3zM459 388l-3 1l0 4l4 -2zM359 391l19 2l0 -3l2 -1l-19 -1zM616 387l-19 1l-2 1l-1 5l6 -3l7 0zM222 381l2 1l0 4l-4 1l7 3l3 0l2 -2l0 -3zM254 379l-1 6l2 -2zM270 378l1 4l13 3l5 3l8 1l1 -5l8 0l1 5l17 -3l10 6l4 1l4 -2l0 -2l-8 -1l-4 -4l-7 -3l-27 3l-15 -2l-7 -4zM713 381l-2 0l-2 -4l-3 2l-17 4l-3 3l-12 -1l-6 2l0 5l8 -2l4 -3l15 -1zM574 382l-4 0l-2 -5l-16 8l3 2l10 -4zM205 379l2 3l6 2l0 -4l4 -1l-7 -2l-4 0zM811 376l-6 7l2 3l7 -3l-4 -2zM107 376l-1 5l8 4l13 10l6 1l0 -3l-2 -2l-7 -2l-9 -9zM762 375l-7 -1l-8 2l-25 12l-4 0l-19 6l-6 0l-5 2l-2 3l6 0l13 -4l11 0l18 -5l10 -7l18 -5zM343 385l5 1l14 -8l21 4l0 -4l5 -1l-10 -1l-3 -2l-12 1l-2 -2l-3 0l-4 6l-8 6zM469 372l-8 -2l-8 3l-6 0l-7 4l-8 -2l-5 0l-4 3l-16 -1l2 2l0 4l16 -2l14 1l5 -1l9 -5l16 1zM343 370l-3 1l1 3l3 -1zM520 369l0 2l9 0l-3 -3zM7 368l0 5l10 2l5 3l0 -6l-8 -1zM815 367l-2 6l3 -1zM221 371l18 3l0 -2l-6 -1l-8 -4l-1 3zM306 367l6 0l1 5l7 -1l10 3l-1 -4l-15 -4zM809 366l-4 0l-1 4zM334 373l5 -6l3 -1l-8 -1zM628 364l-2 3l-6 3l-5 0l-6 4l-17 0l6 0l1 5l12 -1l9 -6l8 -1zM564 369l-4 -1l0 -4l-26 9l1 2l6 0zM259 363l3 3l8 0l10 5l0 -6l8 0l-18 -3zM99 360l0 4l19 6l3 4l5 0l5 4l5 0l4 6l7 1l2 2l7 -1l8 3l3 -1l-5 -4l-7 1l-4 -4l-13 -3l-3 -4l-6 -1l-3 -3l-7 0l-8 -6zM761 357l-16 4l-6 0l-18 9l4 0l2 4l10 -6l24 -6zM400 355l4 2l-1 6l2 1l17 -1l21 2l12 -4l13 0l0 -6l-7 0l-8 3l-15 2l-13 -2l-7 3l-9 -3l-4 -3zM358 359l17 3l10 -1l5 4l8 -1l-4 -2l0 -5l-3 3l-3 -3l-19 0l-8 -2l0 3zM514 354l1 5l31 0l-4 -1l0 -4zM341 356l-2 -2l-4 0l-6 6l5 1zM812 353l-7 1l0 4l6 0zM831 352l4 4l0 -2zM544 353l4 0l1 5l6 -2l-5 0l-1 -5zM7 351l1 6l12 5l3 -1l-2 -4zM300 349l4 1l0 4l-2 1l9 3l8 -1l3 2l4 0l3 -5l-12 0l-2 -2l-7 0l-4 -3zM627 348l-22 7l-5 4l-8 0l-2 1l1 5l9 -2l2 -2l8 -1l10 -6l7 -2zM340 347l-4 1l3 1zM281 345l-13 -1l-9 4l-5 -1l-1 4l2 1l4 -3l3 3l6 0l1 -7zM208 344l1 6l15 8l20 5l6 0l2 -2l-1 -5l-5 0l-4 3l-7 -1l-5 -2l-11 -9l-6 -3zM751 342l-13 6l-5 0l-4 3l-10 3l-5 4l-16 7l-6 0l-6 3l-18 0l4 2l0 5l-4 2l4 -1l3 -3l16 0l7 -3l8 -1l20 -13l9 -4l18 -4l-2 -1zM88 347l9 4l3 3l8 0l16 4l14 5l14 8l4 0l15 8l7 0l0 -5l-8 -1l-11 -7l-11 -3l-17 -9l-7 0l-17 -5l-10 0l-5 -8l0 5zM233 339l5 5l8 0l2 -2zM356 339l6 2l5 5l3 0l-1 -4l-6 -1l-3 -3zM7 338l1 4l8 2l5 3l0 -5zM627 337l-14 5l-38 0l-4 2l-5 -1l-13 6l10 -2l1 -2l14 0l0 6l-14 0l-1 3l3 -2l11 0l8 -3l11 0l15 -5l6 0l10 -3zM514 337l0 6l7 2l18 -1l-4 -1l0 -4l-5 0l-1 6l-8 0l-1 -6l8 -1zM392 344l14 -1l7 3l4 -2l4 3l7 0l5 2l11 0l19 -5l5 0l-1 -6l-9 1l-13 5l-18 0l-4 -3l-7 2l-3 -2l-10 -2l-2 4l-5 0l-1 -5l3 -1l-5 1zM122 338l2 4l15 2l5 4l5 1l6 4l7 1l5 4l1 -5l-8 -6l-12 -6l-17 -4zM155 348l5 -1l1 5l-5 1zM304 339l2 2l15 1l0 -5l4 -1l-4 0l-3 2l-12 -2zM738 338l-2 0l-1 -3l-13 4l-17 1l-4 4l-10 1l-6 4l-16 2l-1 6l24 -3l6 -3l4 0l2 -2l5 0l3 -2l2 -4l5 0l3 -2l9 0zM811 333l-2 2l0 3l-4 2l0 4l3 -1l0 -3l4 -3zM294 333l1 5l-3 1l7 0l1 -2zM163 333l0 3l-4 1l6 3l1 -5zM69 332l0 6l3 0l5 3l0 -6l7 0zM223 332l1 4l6 1l0 -5zM180 329l-3 1l1 2l0 -2zM559 327l-16 9l4 1l0 4l10 -7l6 -2l-4 -1zM627 325l-8 2l-5 3l-8 -1l0 5l8 0l7 -2l6 -4zM147 325l0 4l-2 1l5 1l6 4l0 -4l3 -1zM362 324l1 9l5 -2l13 1l16 -3l23 0l7 3l12 1l19 -5l0 -2l-5 2l-13 0l-18 -2l-4 -2l-9 0l-5 2l-9 -1l-25 2l-7 -1zM727 328l-4 -1l0 -4l-9 1l-2 2l-13 0l-6 4l-5 0l-2 3l-14 3l-3 2l0 3l12 -2l7 -5l6 0l3 -3l6 -2l7 1l2 -2zM131 325l2 3l6 1l0 -4l3 -1l-7 -1zM670 323l11 1l-1 -2zM79 321l12 7l1 -1l-2 -6zM232 320l0 2l3 2l9 -1l9 6l1 4l20 -1l10 4l1 -4l5 0l-5 -3l-9 1l-5 -3l-20 0l-4 -8zM105 322l7 0l4 -2l-10 -1zM688 320l4 1l8 -3l-11 -1zM69 317l0 4l3 0l0 -3zM567 315l-15 2l-15 6l-22 0l0 3l15 3l12 -3l4 -3l11 -4l10 -1zM321 314l-13 1l-8 10l0 2l3 0l3 -3l14 -2l-4 -2l0 -4l2 -2zM308 317l6 -1l1 5l-2 2l-4 0zM409 311l4 0l1 5l15 0l3 2l4 -2l9 1l4 -2l3 -4l-3 2l-10 2l-11 -4zM129 312l1 3l7 -1l3 2l11 1l4 3l5 0l6 5l7 0l2 -2l-2 -4l-6 0l-9 -4l-6 0l-13 -5zM806 309l-1 7l5 -2l-4 -1zM364 310l0 4l7 1l2 -2l3 0l5 3l8 1l0 -5l-10 -3l-5 2zM727 312l-3 0l-1 -4l-5 5l-9 3l-6 -1l-1 3l6 1l9 -5zM208 308l0 3l15 1l4 -2l-6 -1l-6 2zM626 307l-27 3l9 0l2 2l-1 6l-9 0l9 0l17 -4zM536 309l-4 -2l-12 1l-4 2l0 3zM698 305l-1 2l3 3l2 -3l-1 -2zM7 305l-2 3l2 6zM81 304l0 5l5 1l5 5l-1 -6zM252 303l-1 4l2 5l8 5l7 2l18 0l2 3l10 -1l0 -5l-25 0l-12 -4zM73 302l-3 0l1 5l0 -4zM735 301l-8 4l3 1l0 4l5 -2zM576 306l-1 -5l-21 3l-4 4l-3 -2l-3 1l16 1zM0 301l1 4l1 -3zM242 300l-4 4l0 2l6 0l-2 -2zM105 300l0 4l5 4l6 0l4 -3l-3 0l-4 3zM379 300l9 4l4 0l1 -5zM140 299l1 3l6 0l9 4l18 1l4 2l-1 -5l-4 -2l-18 0l-4 -2l-5 1zM304 300l2 2l5 1l3 -1l0 -4l2 -1l-10 0zM761 296l-11 4l-11 0l5 0l1 5l10 -1l6 -3zM363 296l0 2l3 2l6 -1l-1 -2l-6 -2zM227 296l-18 0l0 5l11 -1l4 -2l3 1zM687 295l-3 -1l-9 4l0 2l9 0l3 -3zM257 298l9 6l9 3l12 0l4 -4l10 0l-1 -4l-7 0l-11 4l-8 0l-10 -5l-4 -4l0 3zM813 292l0 3l4 0l3 2l0 -3l-5 1zM465 294l-3 -2l-4 0l-1 5l-3 -3l-3 2l7 4zM403 297l2 2l0 4l4 -1l-4 -1l1 -5l5 0l1 5l9 -3l9 3l11 0l4 -3l-1 -2l-6 1l-5 -4l-7 0l-6 -2zM12 291l-1 4l9 4l-1 -5zM237 289l2 3l4 0l-1 -3zM126 289l-3 -1l-3 2l-15 0l-1 3l7 0l6 2l9 -4zM70 289l0 3l10 2l9 5l1 -4l-8 -2l-6 -5zM809 287l3 3l2 -2zM316 286l0 3l2 1l0 -4zM835 285l-2 1l2 6zM745 284l-2 5l2 0l1 -2zM177 285l-9 -1l-9 7l6 -3l12 0zM737 285l-3 -2l-3 3l-7 3l-14 15l-4 0l0 2l3 1l7 -4l12 -12l3 0l6 -4zM364 283l1 5l18 2l0 -2l-4 -2zM209 286l5 0l2 -2l-4 -1zM626 282l-10 8l-8 0l-8 4l-7 1l4 1l0 5l9 -5l13 -3l7 -5zM678 281l1 3l5 0l4 -2l-3 -3zM596 282l-2 0l-3 -3l-5 0l-7 3l-14 0l-3 3l-4 0l-8 4l-9 -1l-5 4l-19 0l-1 7l9 -3l11 0l2 -2l8 1l8 -5l6 1l7 -1l3 -2l24 -3zM257 284l8 2l6 4l9 1l17 -3l0 -4l-20 0l-7 -4l-9 -1l-1 4zM692 278l0 2l4 3zM402 285l-4 0l-2 -2l0 -5l-1 3l-5 3l0 3l5 1l3 -3zM606 280l9 -1l-3 -4l-3 0zM465 274l-13 3l-22 0l-5 -2l-16 0l-5 2l0 7l17 -5l17 4l11 -1l5 -5l6 3l5 0zM232 274l3 5l5 2l0 -5zM538 273l-5 4l-5 -2l-8 1l-3 -2l0 7l15 1l2 -2l5 -1l-2 -1zM71 271l1 9l3 -3l2 0l2 2l0 4l6 3l6 0l-3 -4l-2 0zM735 270l-4 -1l-17 9l-4 6l-5 1l1 6l4 0l4 -7l2 0l11 -9l5 -1zM625 269l-3 2l0 4l4 -3zM560 269l-13 3l2 1l0 5l4 -3l7 -1zM816 268l-8 1l-1 3l1 1zM364 268l1 6l14 0l-1 -6l-7 2zM214 269l-4 -1l-2 8zM101 270l4 0l3 3l0 5l-2 1l11 0l5 -4l8 1l-7 -4l-13 0l-7 -4zM681 269l4 3l4 -1l0 -2l-4 -2zM761 265l-1 -2l-6 0l-4 4l-6 -1l-5 8l4 -1l5 -4l3 2zM253 267l7 2l10 -1l4 3l8 0l7 3l16 2l0 -5l-17 -3l-9 -4l-25 -1zM19 263l-1 3l-4 0l5 1zM447 264l-5 -2l-17 2l0 3l16 1zM589 261l-2 -1l-12 6l-7 1l1 5l4 -3l5 2l1 -4l7 0zM518 260l0 3l4 0zM0 260l1 3l1 -2zM608 259l-5 1l-1 2l2 3l-5 3l2 2l5 -1l0 -2l4 -3zM464 259l-7 1l-7 4l14 0zM241 259l-1 5l-4 1l5 0zM726 258l-11 6l-4 5l-7 -1l1 2l5 3l4 -5l3 0l3 -3l7 -2zM402 264l13 2l0 -4l-7 -1l-3 -3l0 3zM223 260l8 3l0 -5l4 -1l-11 -1zM95 257l3 2l1 5l2 -6l-1 -2zM671 255l0 8l2 -2l0 -4zM625 255l-6 7l-7 2l0 3l3 -3l7 -2l3 -4zM534 255l-6 1l-1 5l-6 -4l-1 1l6 4l2 -2l5 1zM702 254l-2 0l0 3l2 -1zM396 254l-3 2l-2 4l-7 3l-4 0l0 3l3 1l4 -2l6 0l3 -2zM733 255l2 5l11 -4l-9 1l-1 -4zM686 253l1 4l6 3l5 8l-3 -8zM592 253l-2 1l1 3zM282 253l0 2l7 3l12 1l3 3l13 1l0 -5l2 -1l-18 1l-3 -3l-5 0l-5 -3zM77 252l1 6l-4 1l5 -1l8 4l4 5l3 -2l-3 0l-3 -4l0 -5l3 -1zM710 250l-6 0l2 10l2 -1l3 -6zM573 249l3 1l0 4l4 -3l-2 -2zM365 249l0 7l5 0l1 -4zM671 248l0 2l6 5l3 5l1 -2l-2 -4zM414 252l6 2l-1 -5l6 -1l-9 -1l0 4zM104 247l1 4l6 5l9 4l4 0l5 4l11 2l5 5l16 2l8 3l0 -4l-25 -7l-12 -6l-7 -1l-3 -3l-13 -4zM457 246l-27 3l0 5l9 0l4 -2l8 1l6 -3zM239 250l7 0l2 -2l6 4l6 0l1 -4l-7 0l-1 -2l-6 1l-4 -2l0 4zM264 244l0 4l2 3l5 0l4 3l2 -3l3 1l-6 -4l-5 0zM618 244l-4 -1l-11 4l-1 2l5 3l-7 2l-2 4l5 -3l10 0zM386 248l-2 -2l0 -3l-6 3l-7 1l0 2l4 2l8 -1zM7 243l0 3l11 4l0 -6zM724 241l-4 1l-2 3l-6 -2l2 2l-1 5l2 3l8 -4l-2 -2l0 -4zM403 241l0 2l-3 1l2 0l4 4l0 -3l2 -1zM238 241l0 3l-2 2l-4 0l5 3l0 -4l3 -1zM622 239l0 2l3 0l0 -2zM519 243l0 2l1 -2l2 0l6 4l3 -2l0 -2l-6 -4l-3 0zM105 241l5 0l8 5l9 3l1 -4l2 -1l-6 -1l-2 -2l-10 1l-6 -3zM399 238l-5 0l0 5l2 0l0 -4zM322 245l-4 -2l1 -5l-4 3l-10 1l1 5l3 -2zM168 237l1 2l2 0zM676 237l1 3l-2 5l3 3l3 0l3 -3l2 0l7 7l5 0l-4 -1l-3 -4l-3 0l-2 -2l0 -7l-6 3l-3 -5zM538 240l1 3l7 1l-3 -3l0 -5l-2 3zM76 236l-2 4l2 0zM602 237l-3 -3l-3 5l-5 0l0 2l5 1l6 -3zM568 241l2 0l-1 -5l2 -2l9 1l0 6l-2 0l3 -1l0 -4l4 -2l-13 -1l-4 2zM216 234l4 1l1 -2l3 0zM439 232l0 5l7 0l1 -5zM430 232l-9 1l0 6l2 -2l7 0zM270 231l0 4l4 1l4 4l8 0l10 5l4 4l3 0l-3 0l-1 -6l-12 -7l-9 1l-4 -5zM253 231l-3 1l1 5l4 -2zM596 230l-7 5l0 2l3 -1zM134 230l-4 4l1 1l3 -1zM411 229l1 4l1 -3zM379 229l-2 3l-10 -1l-1 7l12 -5zM760 228l-2 6l2 0zM399 228l3 3l5 0l2 -2l-5 0l-4 -4zM394 227l-5 -2l-3 9l3 0l0 -3zM241 225l0 5l-2 1l8 1l-4 -7zM167 227l2 2l6 0l0 -3l-7 -1zM106 224l3 4l3 0zM11 224l0 4l-2 2l3 3l1 -5l3 -1zM551 223l2 6l0 7l3 3l0 5l3 -9l-4 -3l-1 -8zM689 222l-4 1l0 4l0 -2zM320 219l-3 4l-5 0l0 3l1 -1l5 2l3 -3zM274 217l-1 4l2 2l1 -4zM108 218l0 2l3 -2l6 1l-1 -2zM537 217l2 2l9 2l-1 -2l-6 -3zM426 216l2 2l-3 1l-1 4l8 0l0 -4zM174 216l-5 4l5 0zM86 215l-2 2l3 2zM136 219l1 3l13 -1l-4 0l-3 -3l-1 -4zM580 211l-3 2l2 0zM243 211l-1 5l2 3l13 0l-1 -8l-5 3l-4 0zM16 211l-1 2l3 4zM309 210l0 4l-3 5l8 0l2 -2l-5 -3l0 -4zM278 210l2 0l3 6l5 3l3 6l6 -1l2 2l0 4l1 -6l-2 -6l-6 2l-2 -3l0 -5l-6 1zM272 209l0 2l4 -1zM559 208l2 5l8 8l-2 2l-6 0l0 5l2 3l2 -5l4 -3l0 -3l-2 -1l0 -3l-8 -6zM390 209l-2 -1l-8 6l-7 0l6 2l6 -5l3 0l1 4zM135 208l-2 -2l-3 3l-3 0l0 4l7 1l2 -2zM320 204l-2 2l0 3l2 0zM108 204l-1 3l-3 1l2 0zM807 203l0 4l2 -3zM119 204l1 3l6 0l-2 -4zM116 202l-2 1l-2 6l2 3l2 0zM295 201l-1 3l3 3l0 4l4 1l3 -6l-3 -1l0 -3l0 7l-2 1l-2 -2l1 -6zM255 198l0 4l0 -2l2 -1zM379 195l2 0l1 3l2 -1l0 -2zM421 192l1 7l3 3l-2 -7l2 -3zM277 191l0 3l-3 3l2 3l0 4l10 2l5 -5l0 -2l-6 3l-1 2l-4 0l-1 -5l4 -1zM432 192l2 0l2 3l5 -1l-3 -2l0 -4l-2 0l0 2zM296 186l2 0l3 3l0 -3zM437 182l3 0l1 2l-1 -2zM286 180l-1 5l-4 2l6 4l0 -7l2 -3zM436 165l0 3l3 1l2 3l0 -4l-3 -3zM442 149l-3 3l1 5l5 -3l-4 -2zM835 95l-1 2l-5 2l2 3l4 -2zM579 44l-4 3l2 0zM104 44l7 7l0 -3l-4 -2l1 -4zM283 15l-1 3l3 0l0 -2zM817 11l0 2l3 -1zM145 11l1 2l5 -1l-4 -2zM739 6l0 2l3 -1z"/><path fill="#5e5e5e" fill-rule="evenodd" d="M76 1265l-1 2l2 1l1 -2zM768 1253l1 2l2 0l0 -2zM41 1252l2 2l3 0l-3 -3zM797 1242l-4 1l-2 4l3 3l0 6l5 -2l-5 -5l1 -4l3 -1zM396 1240l1 2l4 0l-1 -4zM171 1236l-1 4l3 1l2 -3zM490 1232l-2 0l-1 2l2 0zM795 1224l-6 7l2 2l3 -1l4 -5zM398 1218l0 3l2 1l1 -3zM809 1215l2 4l3 0l-2 -1l0 -4zM95 1215l0 3l4 2l2 -4l-2 -2zM303 1206l-2 0l-1 3l2 1zM794 1199l6 6l-4 -7zM322 1196l-1 4l4 1l1 -4zM176 1197l-5 0l-1 4l5 0zM769 1190l0 2l3 3l0 -3zM301 1186l-1 3l4 1l0 -2zM75 1185l-2 2l3 3l3 -3zM322 1179l3 1l0 -2zM250 1177l-4 1l0 4l2 1l3 -2zM74 1167l0 3l5 0l-1 -3zM801 1161l-2 0l-2 4l0 5l4 -6zM399 1157l-1 4l4 0l1 -2zM338 1148l-1 2l3 1l0 -2zM245 1139l0 3l5 0l-1 -4zM398 1137l-1 4l4 1l1 -3zM172 1137l0 3l2 1l2 -2zM813 1135l-4 2l4 1zM492 1130l-2 0l-2 4l2 0zM339 1128l-1 3l2 -2zM398 1119l1 2l2 -1zM325 1117l-3 1l0 3l2 1l2 -1zM492 1111l-3 0l-2 3l2 2l3 -1zM340 1112l-2 -1l-1 2zM798 1109l0 3l-2 2l2 0l1 -2zM304 1105l-2 0l-2 4l4 0zM171 1098l0 2l2 1l1 -3zM323 1096l0 2l2 1l1 -3zM811 1087l-4 1l-1 3l2 1l3 -2zM298 1088l3 3l4 -2l-3 -3zM73 1087l2 3l3 -1l0 -3zM768 1076l-2 1l0 2l2 0zM798 1073l0 3l3 2l0 -2zM812 1069l-2 4l3 0zM171 1058l1 2l2 -1zM398 1057l0 3l2 0l1 -3zM247 1039l-1 3l3 1l1 -2l-1 -2zM397 1038l0 3l5 0l-1 -4zM100 1035l-4 1l0 4l2 1l3 -2zM486 1031l0 2l2 1l4 -1l-1 -3zM336 1030l2 3l4 -1l-1 -3zM38 1027l6 -1l-5 -1zM325 1016l-3 2l1 2l2 0zM767 1015l-1 2l2 2zM50 1015l-2 -1l-5 3l4 1l3 -1zM301 1006l-1 3l4 1l0 -3zM75 1006l0 2l3 -1zM247 998l0 2l2 1l1 -3zM171 997l-1 3l4 1l1 -3zM322 995l0 4l3 1l2 -4zM488 990l1 3l3 0l-1 -3zM75 987l-2 3l4 1l1 -3zM40 983l2 6l-2 5l5 4l3 -1l1 -2l-6 -5l3 -4zM812 976l-2 2l1 2zM75 968l3 1l-1 -2zM800 964l4 1l-3 -2zM398 959l-1 2l2 1l1 -2zM41 959l3 4l6 0l0 -2l-6 0zM337 949l0 2l2 1l0 -3zM41 944l0 5l4 0l1 -2zM249 938l-2 1l1 3l2 -2zM488 931l-1 2l2 1zM812 930l-2 5l4 -1l-2 -1zM336 931l5 1l1 -2l-4 -2zM34 926l0 3l7 1l-2 -4zM305 926l-5 0l-1 4l3 0zM396 919l1 2l5 0l-1 -3zM322 916l0 3l4 -1l-1 -2zM33 911l9 2l2 -4l3 0l-10 0zM299 907l1 3l5 -1l-1 -3zM247 898l-1 4l4 1l1 -4zM171 899l1 2l4 0l-3 -3zM491 893l-3 -1l-2 2l3 1zM300 890l4 1l-1 -2zM33 889l8 8l7 0l3 -3l-9 -4zM77 885l-3 1l0 3l2 1l3 -3zM49 884l-1 5l5 3l1 -2l-3 -3l1 -3zM324 880l-2 -1l-1 2zM249 878l-3 1l0 5l4 -1zM57 875l-1 -5l-2 -1l-16 2l8 5l9 1zM338 868l2 3l4 0zM812 865l-3 2l1 2l2 -1zM639 861l-2 -1l-2 2zM397 860l4 0l2 -3l-5 -1zM335 850l-1 2l2 1zM32 845l-2 1l0 2l3 4l1 -5zM658 840l-7 -1l-4 3l-5 1l0 2l4 1zM244 840l0 3l2 1l6 -1l0 -2l-4 -2zM94 838l3 3l4 -1l-4 -4zM485 834l-3 4l1 1l2 -1zM834 831l-1 3l2 1zM335 831l1 3l5 0l0 -3l-2 -2zM31 829l-1 2l7 7l1 3l8 0l-2 3l-3 0l0 4l2 5l5 5l3 0l-6 -6l0 -2l5 -7l7 0l1 -5l-8 -5l-6 4zM302 826l-1 4l3 0l0 -3zM563 815l1 2l6 -1zM490 813l0 2l2 1l0 -2zM54 813l-2 1l0 2zM29 809l13 6l0 -2l-3 -3l8 -1l-2 -2l-15 0zM299 806l2 3l3 0l0 -3zM54 805l1 6l1 -5zM646 803l6 -1l-5 -1zM244 802l5 0l0 -3l-3 0zM588 796l-1 -1l-2 2zM321 796l1 2l4 0l1 -2zM483 792l0 -2l-6 1zM639 789l4 1l-2 -2zM122 789l5 1l-1 -2zM817 787l-2 4l2 0zM301 784l0 4l4 1l1 -3zM79 784l-5 1l1 4l3 -1l2 -3zM50 784l-2 2l4 0l5 7l-2 -2l0 -5l-2 -2zM36 780l-3 3l2 2l1 5l7 2l0 -2l-3 1l-2 -2l2 -8zM653 778l-7 5l0 2l4 3l3 0l6 -4zM322 776l1 2l2 -1zM41 770l2 3l3 0l-3 0l-1 -4zM74 767l3 3l0 -2zM45 767l3 1l0 3l2 -2l7 0l-3 -4l-1 4l-4 0l-1 -4zM399 758l-1 1l3 2l1 -2zM49 757l0 6l4 0zM170 755l3 5l3 -1l-2 -4zM641 754l3 1l9 9l2 -2l-1 -4l-7 -1l-2 -4zM41 754l-3 0l-1 8l-8 0l10 2zM486 751l1 3l4 0l2 -2l-1 -2zM46 741l0 3l2 0l1 -2zM39 737l-7 3l4 3zM100 736l-3 -1l-2 2l0 3l4 0zM636 737l1 2l1 -1l3 2l1 6l4 0l8 -5l0 -2l-3 2l-4 0l-3 -3l0 -3l-5 -1zM337 727l0 5l2 1l2 -2l-2 -4zM299 726l-1 3l2 2l3 0l1 -3l-2 -2zM644 722l-1 3l4 1l1 -1zM171 717l-1 4l5 1l0 -3zM642 719l-4 0l-1 -3l-9 8l7 -1zM392 718l2 2l6 0l7 -4l-10 0zM325 716l-2 0l1 4l2 -2zM54 714l-4 2l4 0zM490 709l-4 2l2 4l3 -1zM303 705l-2 1l-2 6l3 -1zM75 706l5 1l-2 -2zM811 704l-7 5l7 -2zM245 699l1 2l3 0l-1 -3zM450 697l2 3l4 1l-2 -3zM323 696l-1 3l3 2l1 -5zM26 696l4 1l1 -2zM643 696l-1 -3l-6 2zM489 693l-2 0l-1 2l2 0zM60 693l0 4l3 2l0 -4zM444 682l9 1l4 3l4 0l-2 -2l-7 -1l-3 -2zM592 680l-7 2l-3 3l8 -1zM499 680l-2 0l-1 3zM396 677l2 3l3 0l-1 -3zM322 676l1 4l4 -2l0 -2zM186 677l4 3l5 0l-2 -3zM486 671l1 2l5 0l1 -3l-5 -1zM660 668l-3 1l-1 3zM58 668l0 2l6 1zM33 667l-6 2l0 2l3 3l0 -5l4 -1zM724 660l-14 8l2 1l10 -4l2 -2zM177 659l0 2l15 4l-2 -3l-9 -1zM510 657l1 2l2 -1zM396 658l0 3l6 0l-1 -3zM695 656l-3 0l-5 4zM739 654l-3 0l-2 3l3 0zM486 654l3 1l0 -2zM627 655l6 1l0 -3l-3 -1zM197 653l1 2l9 0l-7 -3zM25 651l0 3l3 1l0 -2zM188 650l3 2l1 -1zM743 651l7 -3l-5 0zM605 648l-4 0l-10 6l-20 1l19 0l11 -4zM622 641l-5 0l-7 3l-3 3l5 0zM397 638l2 3l2 0l1 -2l-1 -2zM171 637l-1 4l4 1l1 -5zM632 636l-5 4l5 0zM97 634l-1 4l4 1l1 -3zM185 633l0 2l10 4l6 -1l-12 -6zM20 631l0 2l3 0l0 -2zM611 632l-3 -1l0 -3l-7 2l-11 6l-20 0l6 3l7 0l4 2l4 -3l5 0l4 -3zM495 627l1 4l5 0l-3 -4zM628 624l-5 2l-6 0l-2 1l0 3l7 -1l3 -2l2 1zM31 624l4 3l0 -3zM207 623l2 2l3 -1l-3 -2zM441 618l3 2l4 0l-1 -2zM430 619l5 -1l-3 -1zM246 616l1 2l8 -1zM58 616l-3 4l1 4zM31 616l-5 2l3 0zM323 615l-1 3l3 1l1 -3zM171 616l1 4l5 -4l5 0l4 2l5 -1l-1 -2l-7 1l-4 -3l-6 1zM811 612l-1 2l2 1zM343 616l0 -2l-3 -2l-4 2zM236 613l4 1l-3 -2zM622 610l-24 3l-7 3l-8 0l-11 6l21 -6l28 -3zM629 609l2 1l4 -2l-5 -1zM406 602l3 1l2 -2zM419 599l2 2l3 0l-1 -2zM322 597l1 3l3 -1l-1 -2zM171 597l1 3l8 0l3 2l5 -1l-1 -3l-7 0l-4 -2zM548 593l-2 -1l-1 2zM474 587l2 2l6 1l-4 -3zM68 584l-1 1l5 4l0 -3zM496 583l-3 1l1 4l3 -1zM665 581l0 2l3 1zM17 581l1 3l3 2l0 -2zM396 581l1 3l5 -1l-1 -3zM168 579l4 3l3 -1l-1 -4zM25 570l-1 4l3 3zM721 567l-4 2l2 1zM500 566l0 2l7 0l-3 -2zM182 567l6 3l11 -1l7 2l-4 -3l-8 -2zM488 563l-3 2l0 4l3 -2zM76 562l3 3l4 0l-4 -3zM738 558l-4 -1l-2 4l3 0zM308 557l1 2l3 0zM285 558l12 1l1 -2l-9 -1zM65 555l0 2l7 2zM440 555l2 1l3 -2zM449 554l9 1l7 -3l8 0l-22 0zM178 552l0 2l2 1l29 0l7 5l8 0l-4 -5l-11 0l-8 -3l-4 2l-3 0l-2 -2zM102 552l1 3l9 0l-6 -3zM509 551l0 2l1 -1l7 2l14 -1l-6 -2zM631 546l-4 0l-3 2l-7 -4l-12 2l-13 9l17 -9l13 1l3 3l4 -1zM72 544l2 3l10 4l7 0l2 2l3 -2l-5 0l-2 -2zM810 543l-1 4l3 0l-2 -1zM833 542l0 2l-3 1l5 4l0 -5zM308 541l7 2l12 0l2 2l4 0l7 5l12 0l0 -2l-5 -2l-14 -1l-8 -6zM395 543l-1 -5l-7 3l-8 1zM205 538l2 2l7 2l14 0l14 4l5 -1l-2 -2l-8 -2l-11 0zM105 537l1 3l8 1l-4 -3zM595 536l-5 1l-6 6l10 -5zM455 536l-9 2l6 1zM257 536l9 8l6 2l4 -1l-9 -3l-8 -6zM480 533l-6 3l6 -1zM764 532l-13 5l-6 4l18 -6zM610 531l3 2l5 -1zM622 532l9 0l0 -2l-7 0zM505 530l0 4l4 3l8 -3l18 0l2 -2l-2 -2l-26 3zM83 528l0 4l8 3l-1 -4zM317 528l-4 -1l-4 2zM241 528l5 1l0 -2zM67 526l-1 3l4 1l0 -4zM572 526l6 -2l-4 0zM495 522l0 4l3 4l0 -3l4 -2l-4 -3zM429 521l3 0l2 -2l-4 0zM408 521l-7 -2l-10 1l-8 3l-4 4l4 0l11 -5zM346 519l0 2l3 3l11 5l6 0l-10 -4l-8 -7zM763 517l-8 2l-21 15l7 -2l10 -9l12 -4zM171 517l0 3l4 -1l0 -2zM610 518l9 -1l-6 -1zM247 516l3 2l4 0l-3 -2zM329 514l0 3l6 0zM311 515l7 2l0 -3zM7 510l1 3l9 4l4 4l4 -2l-6 -1zM574 511l-2 -2l-39 8l18 -1l7 -3l6 1zM71 511l17 7l0 -3l-9 -2l-5 -4zM746 509l-4 0l-1 4zM21 507l0 2l4 -1zM368 502l9 8l18 -1l-10 -2l-12 -5zM81 502l3 2l6 0l-7 -3zM480 500l-2 1l1 3zM133 501l8 4l5 0l-9 -5zM321 498l-11 2l0 2l11 -1zM691 495l-3 3l2 0zM7 495l1 3l9 6l0 -2l-3 -3zM107 494l2 2l4 0zM567 494l-11 0l-10 5l-17 5l17 -2l21 -6zM403 494l6 0l3 -3l-7 -1zM18 487l2 3l5 2l-1 -4zM372 487l6 3l8 0l6 3l2 -1l-1 -5zM701 486l3 1l3 -3l-4 0zM78 484l-3 1l1 3l3 -2zM329 483l3 2l5 0zM709 483l5 2l2 -1l-1 -2zM534 483l-2 -1l-1 3zM106 482l6 3l13 1l22 7l5 0l3 2l13 1l-3 -2l-5 0l-22 -7l-17 -1l-6 -3zM689 480l-11 7l5 0zM163 483l7 -1l-6 -2zM7 479l0 2l8 3l-1 -2zM540 483l7 0l5 -2l4 1l5 -2l-16 -2zM255 475l-3 -1l-6 6l0 3l6 -7zM376 473l-7 2l5 0zM448 471l2 2l4 -1zM89 471l1 3l1 -2zM334 470l12 3l-7 -4zM814 468l-3 3l3 0zM691 478l13 -8l15 0l6 3l5 -3l-16 -2l-15 2l-5 3zM119 470l2 2l4 0l7 3l0 -4l3 -1l-12 -2zM526 466l7 1l1 -2zM70 467l13 2l0 -2l-5 -2l-7 0zM538 465l7 1l1 -2zM627 463l-2 -1l-5 3l5 1zM397 459l0 3l6 0l-3 -3zM745 458l-9 8l2 0zM708 457l-6 2l-8 0l-5 3l19 -2zM446 459l12 -1l3 -2l-10 0l-4 1zM373 456l-6 -1l-14 4l10 1l6 -4zM255 457l0 3l6 0l6 3l10 -1l2 2l-3 -4l-16 -5zM237 455l1 2l5 1l-2 -3zM336 451l-3 2l1 2l3 -2zM170 452l-1 -1l0 2l-3 1l3 1zM75 450l1 2l7 0l8 6l-1 -5zM303 449l-2 0l-2 3zM539 451l-7 -3l-7 2l-12 -1l-1 4l23 0zM127 448l8 5l1 -4zM685 446l-3 1l2 1zM740 445l-3 0l-10 6l2 1l0 2zM630 444l-15 3l-10 5l-2 3l4 0l3 -3l15 -4zM703 447l-3 -1l0 -4l-6 4l2 2zM456 442l-10 2l6 0zM191 443l1 3l6 1l-1 -4zM255 442l8 2l5 -1l-3 -2l-6 0l-2 -2zM815 437l-3 6l5 -2l-2 -1zM732 436l-5 0l-3 2l-17 0l-4 2l4 0l1 4l9 -1l12 -4zM344 438l1 3l8 0l4 2l16 -1l-3 -2l-17 1l-1 -3l-4 -2zM129 436l6 3l7 1l0 -3zM180 435l-1 -1l-2 2l-3 0l-2 3l4 0zM238 433l1 3l6 4l1 -5zM522 438l10 -4l11 0l-3 -2l-10 0l-7 2zM629 431l-18 5l-5 0l-5 3l20 -3l5 -3l3 0zM114 426l3 4l6 3zM256 423l-1 3l12 5l-1 -2zM140 425l5 0l2 -2l-4 0zM361 422l0 4l4 -1l5 3l6 -1l-1 -2l-10 0zM513 426l22 -6l12 2l1 -1l-29 0l-6 2zM588 421l12 -1l-10 -1zM338 419l0 3l2 0l0 -2zM351 418l-1 4l2 0l2 3l0 -3l2 -1zM171 417l1 4l4 -1l-1 -3zM310 416l6 3l0 -2zM114 414l11 8l6 2zM294 415l4 -2l-3 0zM583 409l-12 4l-5 6l17 -8zM75 407l0 3l2 0l0 -3zM237 406l3 2l-1 -2zM200 406l-5 -2l-2 1l1 8l-3 3l4 -2l3 -6l3 0zM599 403l-6 1l-4 3l0 2l9 -4zM354 402l-3 1l0 4l3 -1zM358 401l2 1l0 3l16 0l2 2l8 0l-2 -3zM834 400l-1 2l2 1zM313 404l0 -4l-6 2zM294 400l4 2l1 -1zM247 397l-1 3l3 1l2 -3zM569 396l-4 1l-5 4l10 -1zM107 395l0 3l6 3zM207 394l0 2l13 6l3 0zM389 393l0 2l5 1l0 -2zM404 396l12 -1l2 -2l-14 0zM67 392l0 2l2 1l3 -1zM595 392l9 -3l-9 1zM362 390l16 2l0 -2l-2 -1zM676 387l-8 1l0 3l7 -2zM285 384l5 3l7 1l0 -3l-2 -1zM306 384l1 4l19 -3l2 3l8 4l4 -1l-1 -2l-6 0l-4 -4l-3 0l-2 -2zM224 383l-1 4l5 1l-1 -4zM810 380l-2 3l1 1l3 -1zM710 378l-18 6l7 0l11 -3zM569 378l-9 5l9 -2zM408 378l1 4l11 -2l-2 -2zM207 378l1 3l5 2l1 -4zM107 378l0 2l6 2l-2 -3zM753 377l-9 1l-20 11l-6 0l-10 4l7 1l11 -4l4 0l11 -7l9 -3zM599 375l0 3l2 0l1 -2zM368 377l15 4l0 -3l-11 -3zM457 373l12 3l0 -3zM160 370l1 2l12 5l0 -2l-6 -2l-3 -3zM676 370l3 2l4 -1l-2 -2zM313 368l0 3l8 -1zM224 368l0 2l4 1zM335 369l4 -2l-3 0zM560 365l-5 3l-7 1l-2 2l14 -2zM271 364l1 2l7 3l1 -4zM145 365l8 5l5 0l-1 -3l-9 -3zM99 361l1 3l10 2zM597 360l-6 1l0 3l6 -2zM761 359l-10 1l-6 3l-5 -1l-17 8l2 0l1 3l19 -10l10 0zM247 358l-1 3l3 1l1 -4zM468 357l-7 -1l-6 3l-12 1l-5 2l6 1l13 -4l11 1zM361 356l0 3l3 -1zM723 355l-3 0l-5 4l-7 2l-10 6l-8 0l-4 4l6 0l6 -3l7 0l9 -7l8 -3zM514 356l5 2l23 1l0 -4zM339 356l-4 -1l-3 4zM327 354l-6 2l4 2zM618 353l-11 3l-1 2l4 0zM549 352l-2 1l2 1l0 3l2 -1l-2 -1zM7 352l0 3l16 6l-2 -3zM304 350l0 4l3 0zM100 351l1 2l6 -1l-1 -2zM737 350l-4 -1l-7 5l4 0zM627 349l-4 3l4 -1zM263 349l1 2l4 0l0 -4l-3 0zM699 349l-4 -3l-3 0l-3 5l-18 0l-2 1l0 3l13 -1l2 -2l10 0zM208 346l0 2l19 9l0 -2l-8 -6l-7 -3zM432 346l10 1l-4 -2zM751 343l-3 3l-6 1l-1 2l3 1l7 -3zM560 347l3 0l1 -2l14 0l1 5l3 -2l13 0l13 -4l-26 -1l-8 2l-10 0zM92 343l0 3l-2 1l3 1l1 -1zM530 340l0 3l7 1l-2 -1l0 -3zM468 340l-12 1l-2 3l3 1l7 -3l4 0zM130 340l6 3l5 0l14 8l1 -4l-5 -1l-7 -5l-12 -2zM627 338l-6 3l6 -1zM514 338l0 3l6 2l0 -4zM735 335l-5 2l-1 2l3 1l4 -2zM683 335l-8 1l-3 3l8 -1zM295 335l0 3l3 -1zM163 334l-1 3l3 2l0 -3zM69 333l0 4l4 0l3 2l1 -4l4 0zM288 332l-3 -2l-9 1l6 4l2 0l1 -3zM559 329l-13 7l1 3l12 -7zM266 331l6 -1l-5 -1zM375 329l3 2l4 -2zM626 327l-6 1l-4 3l-10 -1l0 3l12 -1zM368 329l-3 -2l-2 1l0 3zM387 327l4 2l11 -2l4 2l18 -1l6 2l-2 -2l-5 0l-3 -2zM147 326l1 4l8 3l0 -3zM135 327l4 1l0 -2zM723 324l-9 2l9 1zM84 321l1 2l6 3l-2 -4zM163 319l3 5l6 -1l0 -2zM308 318l-2 4l-4 3l6 -3zM296 319l-3 -1l-3 3l5 0zM310 316l4 0l2 5l0 -5zM152 316l3 3l5 0l-3 -3zM567 315l-6 2l6 0zM414 312l0 3l19 0l-6 -3zM138 313l4 2l6 0l-8 -3zM378 311l5 4l6 1l0 -3zM626 310l-16 0l0 6l9 -4l6 0zM521 311l4 -1l-3 -1zM253 307l0 3l3 3l8 4l14 1l-18 -5zM555 305l0 2l3 0l-1 -2zM283 304l1 2l2 -1zM734 303l-5 2l1 4l5 -2zM575 302l-12 2l0 2l12 -1zM388 301l1 2l3 0l0 -2zM265 300l7 5l5 0l-6 -1l-4 -4zM761 298l-16 3l0 3l10 -1zM306 299l1 2l7 0l0 -3zM258 298l5 2l-2 -4zM602 295l-5 1l0 3l2 0zM84 295l5 2l-2 -2zM521 295l-4 -2l-1 5zM409 296l2 0l1 3l5 0l3 -2l8 2l6 -1l-2 -3l-8 -2l-8 0zM12 292l1 3l7 3l-1 -3zM539 291l3 3l3 -2l-1 -2zM70 290l7 2l-2 -3zM278 288l18 0l1 -3l-11 0zM83 282l1 2l5 1zM589 281l-7 2l-15 1l-4 4l3 0l2 -2l16 -1zM260 280l0 4l12 4l-2 -6zM517 276l0 4l7 -1l-5 -1zM462 277l3 1l0 -2zM405 278l0 4l7 -3l8 -1l12 1l3 2l6 -1l-3 -2l-6 1l-7 -3l-14 0zM108 277l8 0l1 -2l-9 -1zM71 273l1 5l0 -2l2 -1zM162 272l7 3l0 -3zM732 271l-9 3l-4 4l-4 1l-1 3l2 0l10 -8l5 -1zM560 270l-11 3l0 3l3 -2l7 -1zM378 271l-4 -1l-8 2l4 1zM287 270l5 3l13 2l0 -2l-4 -2zM153 270l2 2l5 -1zM814 269l-6 2l2 1zM571 267l-2 1l0 3zM429 265l1 2l7 -1l-2 -2zM254 264l0 2l6 2l6 0l2 -2l7 4l4 0l3 -2l-12 -4zM586 263l-5 3l4 0zM726 260l-6 2l0 2l4 -1zM127 260l3 3l8 1l7 5l6 0l-13 -7zM623 259l-5 4l3 -1zM464 259l-7 4l7 0zM405 259l0 4l10 2l0 -2l-7 -1zM304 260l13 2l0 -3l-10 -1zM99 258l-2 0l1 4zM532 256l-2 2l3 2zM224 256l0 4l7 1l1 -4l-3 -1l-2 2zM733 255l3 3l6 -1l-5 0l-1 -3zM287 254l1 2l3 0zM78 257l2 -1l5 4l3 0l0 -4l2 -1l-4 1l-8 -2zM708 251l-2 0l0 7l3 -3zM365 251l0 3l3 1l1 -2zM430 253l7 0l5 -3l-7 -1l-5 2zM416 248l0 3l3 1l0 -2zM260 249l-2 -1l-1 3l2 0zM373 248l2 2l7 -1l-1 -2zM457 246l-7 2l-1 3l8 -2zM265 246l2 4l8 2l-1 -2l-5 -1zM720 244l-2 4l-3 -3l1 6l5 -2zM118 244l10 4l0 -3zM617 244l-3 -1l-2 2l-7 1l-1 3l5 0l2 2l-2 3l-3 0l7 0zM527 241l-1 1l3 3l1 -2zM403 241l0 3l3 3l1 -3zM541 241l3 2l-1 -3zM318 240l-3 2l-7 0l-2 1l0 3l2 -2l11 1zM622 239l0 2l3 -1zM599 236l-1 4l4 -1zM579 235l2 1l0 4l1 -5zM439 233l0 3l7 0l0 -3zM430 233l-2 1l2 2zM367 236l4 0l3 -3l-7 0zM270 233l4 2l-1 -2zM400 227l2 3l5 -1l-4 0zM241 227l-1 4l3 0zM169 226l1 2l5 0l-2 -2zM312 223l0 2l6 0l-2 -2zM141 215l-2 4l4 1zM381 213l-7 1l5 1zM256 213l-4 3l4 1zM243 212l-1 4l4 3l3 0l1 -2zM16 212l0 2l2 1zM135 210l-3 3l-2 -1l4 1zM121 204l0 2l2 1l1 -3zM422 196l0 2l3 3l0 -2zM278 193l-3 3l1 7l2 -7l4 2zM437 188l1 6l1 -1zM284 186l-1 2l3 3l1 -4z"/><path fill="#8f8f8f" fill-rule="evenodd" d="M168 1269l4 1l-1 -2zM10 1269l3 1l0 -2zM591 1267l-1 1l2 1l1 -1zM60 1267l2 3l0 -3zM24 1267l1 3l9 0l-2 -3zM510 1268l4 -1l-3 -1zM243 1268l1 2l1 -4l6 0l1 4l4 0l-2 -4l-9 0zM43 1266l2 2l4 0l7 -3zM325 1264l-3 1l-1 5l5 -1zM719 1263l-2 -1l-3 2zM489 1262l-4 3l1 4l4 -5zM407 1261l1 3l3 -1l0 -2zM85 1261l0 3l2 0l0 -3zM463 1262l-4 -2l-6 2l-6 -1l-1 4l5 0l4 -2l7 1zM186 1261l4 1l-1 -2zM334 1259l0 2l2 2l3 0l5 7l2 -1l1 -4l-9 -6zM801 1258l-6 0l-3 4l3 1l-1 7l7 -2l2 -6zM766 1270l4 -2l2 2l1 -3l4 0l2 -2l-1 1l-2 -2l0 -4l-2 -2l-7 1zM528 1259l-1 -1l-7 6zM35 1258l0 3l4 2l0 -3zM812 1256l-3 2l2 4l2 0zM575 1256l-3 0l-3 3l3 0zM113 1257l1 3l3 0l0 -3zM297 1256l1 4l2 1l5 -2l-1 -4l-5 -1zM71 1255l1 5l9 -1l-5 -6zM513 1251l-3 1l2 1zM582 1250l-3 0l-2 4l4 0zM253 1248l-1 6l3 -2zM244 1247l-2 2l1 4zM714 1246l0 2l3 -1zM589 1246l-2 3l3 3l2 0l2 -6zM464 1246l0 2l4 0l-1 -2zM392 1250l2 2l8 0l2 -3l-3 -3l-7 0zM395 1247l6 -1l1 5l-6 1zM170 1246l-1 2l4 2l1 -3zM57 1244l-2 0l-1 2zM605 1242l-1 3l3 1l1 -3zM487 1241l-1 3l5 1l2 -2l-2 -3zM43 1239l-4 -1l-3 3l1 2l4 0zM648 1237l-3 0l-3 5l3 -1zM557 1238l4 1l0 -2zM549 1240l6 -2l-4 -1l-2 1zM194 1237l-1 3l3 1l2 -3zM336 1237l-1 5l4 3l4 0l1 -8zM575 1236l3 2l4 -1l-1 -2zM440 1236l1 2l6 -1l-2 -2zM299 1236l2 4l6 -1l-2 -3zM70 1235l1 2l2 -1zM390 1234l-2 -1l-1 3l2 0zM794 1235l1 4l6 0l2 2l0 5l10 0l0 -5l-8 1l-3 -2l-1 -8zM350 1232l-1 1l2 1l1 -1zM768 1231l-2 8l-6 9l7 -1l3 3l0 -6l6 0l3 -4l-3 -1l-6 -8zM652 1232l0 3l2 2l5 -3l4 0l-5 -3zM593 1232l-3 -1l-2 3l3 1zM54 1229l-1 3l2 2l3 -3l1 3l3 1l1 -3l-5 -4zM244 1228l0 3l2 2l4 1l2 -2l-1 -4zM618 1227l-3 -1l-4 2l5 1zM393 1230l2 4l7 -1l1 -5l-6 -2zM135 1226l-1 2l2 2zM168 1225l1 7l9 0l0 -4l-3 -3zM321 1225l2 6l6 -2l-5 -5zM93 1226l0 3l4 3l6 -2l-1 -3l-4 -3l-3 0zM46 1224l-1 2l3 1zM32 1224l0 2l5 4l1 -4l-2 -2zM808 1223l-1 3l2 4l6 1l-4 -1l1 -7zM567 1222l6 -1l-5 -1zM484 1220l3 6l4 0l3 -2l0 -3l-3 -2l-5 -1zM336 1217l-1 6l6 -1l1 -3l-2 -2zM501 1215l-1 2l2 1zM298 1217l2 4l6 -1l-1 -4l-5 -1zM589 1215l1 3l5 -1l0 -2l-2 -1zM616 1214l-6 0l-1 2zM536 1212l-1 4l2 0zM804 1210l-4 0l-1 4l-2 2l-3 0l-1 4l3 2l5 0l2 -2zM634 1209l0 2l3 0l0 -2zM128 1210l3 3l1 -2l-1 -2zM396 1209l6 3l0 -6zM765 1205l-3 5l0 4l9 7l1 -5l3 -2l-8 -9zM171 1205l6 1l0 6l1 -6zM831 1204l4 3l0 -3zM329 1209l-5 -5l-7 4l3 4l5 0zM794 1202l0 3l-4 1l4 0zM367 1202l-1 3l2 1l1 -3zM109 1203l7 6l6 -2l0 -2l-5 -3zM62 1202l-5 -1l-4 8l5 0l0 -4l4 0zM480 1201l1 4l4 2l0 -7zM31 1199l-1 6l11 10l4 -7l-7 -2zM818 1204l-4 0l-2 -2l0 -4l-5 3l-1 5l2 2l4 0zM594 1201l-3 -3l-7 2l0 3zM356 1198l0 2l3 0l0 -2zM675 1197l0 2l4 0zM613 1198l1 2l4 -1l-1 -2zM497 1197l5 5l0 -2zM337 1196l0 5l3 1l1 -5zM298 1196l2 5l6 -3l-3 -3zM784 1194l-3 1l1 2zM70 1194l3 6l8 -1l-1 -5zM17 1194l-4 0l0 3l4 -1zM741 1188l-5 0l-3 5l5 0zM120 1188l-1 4l4 1zM400 1187l-3 1l1 3l3 -2zM243 1188l0 3l3 2l4 0l2 -2l-1 -4l-5 -1zM169 1186l-1 6l7 0l0 -5zM90 1186l-5 3l5 0zM317 1188l2 4l9 -1l0 -4l-2 -2l-5 0zM665 1187l2 1l4 -4l-4 0zM744 1184l3 1l2 -2zM654 1183l-1 1l2 1l1 -1zM189 1181l-1 6l3 1l2 -4l-2 -3zM686 1179l-4 3l1 3l3 -2zM622 1178l2 1l2 -2zM475 1184l10 -1l6 3l5 -6l3 -1l-2 -2l-11 0zM17 1177l-2 1l0 3l3 -1zM813 1176l-4 5l0 4l8 -4l-4 -1zM801 1174l-4 1l-3 4l2 2l0 7l4 -1l-3 -4l1 -1l6 0zM74 1174l-2 2l0 3l5 2l2 -2l0 -4zM570 1172l0 3l2 0l0 -2zM313 1173l-4 -1l-8 3l-2 2l1 4l4 1zM357 1169l-1 2l3 2zM139 1167l0 3l2 0l1 -3zM27 1167l9 10l5 0l2 2l0 2l-2 1l0 4l7 -1l1 -7l6 -6l-5 -1l-4 4l-4 1l-7 -9zM474 1167l-1 -1l-2 3l2 0zM403 1166l-4 0l-3 2l0 4l2 2l6 -3zM251 1166l2 2l-1 5l2 -4zM324 1166l1 2l2 0l5 -4l-7 0zM676 1164l3 2l2 -1l-2 -2zM228 1163l1 2l3 0l-1 -3zM810 1161l-4 2l0 3l2 2l4 -2l-2 -1zM769 1161l-6 8l0 10l3 6l-4 5l0 3l2 -4l6 -4l0 -6l-2 0l-4 -5l2 -1l3 3l2 -4l4 0l1 4l1 -1l0 -5l-3 0l-1 2l-5 -1l2 -4l3 0zM496 1162l2 2l4 -1l-2 -2zM833 1160l0 2l-2 1l4 2l0 -5zM482 1164l6 1l3 -1l2 -3l-8 -1l-3 2zM301 1158l0 2l3 1l0 -3zM54 1158l0 8l4 1l0 -6zM791 1157l-1 1l2 3l2 0zM739 1157l-1 2l1 2l2 0l1 -2zM688 1158l1 2l3 -1l0 -2zM69 1157l4 5l5 1l2 -2l0 -2l-4 -3zM372 1155l-1 2l2 2l1 -3zM205 1155l1 5l7 0zM183 1153l4 3l7 -1zM750 1152l-2 1l0 3l2 0zM465 1152l-1 2l3 2l2 -3zM653 1152l-3 -1l-3 6l3 0l3 -3zM718 1151l0 2l4 3l4 -2l-6 -4zM485 1149l-3 -1l-2 1l1 3zM834 1146l0 3l-2 1l3 1zM395 1149l1 4l14 -2l-1 -3l-4 1l-5 -3l-4 1zM242 1148l1 5l0 -5l2 -2l5 0l2 2l0 6l2 -5l-3 -3l-6 0zM321 1145l-1 4l5 1l1 -4zM169 1147l2 4l7 0l0 -5l-7 -1zM488 1147l8 4l5 -1l-8 -2l-2 -2l0 -3l-2 0zM793 1144l1 5l18 0l0 -7l-11 1l-4 -3l0 3zM651 1143l-4 -4l-4 0l-4 3l-7 0l-3 2l0 2l7 0l7 -4l3 0l3 3zM469 1138l-2 0l-1 3l3 -1zM755 1137l-2 1l1 2zM708 1139l7 1l2 -1l0 -2l-8 0zM349 1137l-2 1l0 3l3 -1zM334 1137l-1 2l3 5l7 -1l-3 -6zM60 1136l1 4l1 -1zM303 1135l-2 2l1 3l2 -1zM682 1132l-3 0l-2 3l4 0zM532 1132l-2 1l0 2l2 1zM17 1132l0 3l5 0l5 7l4 -1l3 2l4 0l5 4l1 3l2 0l4 -6l7 1l2 -2l-4 -3l0 -2l-3 -1l-5 2l-6 -1l-4 2l-5 0l-2 -2l-6 -1zM765 1129l-1 2l2 3l0 9l-4 5l7 -5l0 -10l3 -1l-3 0zM253 1130l-2 -2l-3 0l-5 3l0 4l7 -1zM312 1129l8 3l9 0l0 -3l-2 -2zM7 1127l1 3l1 -1zM394 1128l0 3l3 2l4 0l3 -3l5 0l0 -2l-5 1l-5 -4l-2 0zM164 1132l6 0l1 -7l6 1l0 6l-5 1l4 1l6 -5l-5 -4l-6 0l-5 3zM777 1124l-1 2l3 6l1 -4zM102 1124l-7 1l-1 7l5 -1l3 -4zM801 1123l0 6l2 2l9 0l0 -6l-5 5l-2 0zM110 1123l-1 2l4 4l-1 -5zM742 1123l-4 -1l-7 2l-8 7l7 -4l8 -1zM703 1123l-3 -1l-2 5l4 0zM672 1123l4 1l2 -3l-5 0zM482 1123l0 2l3 3l5 -1l-6 -1l1 -5zM192 1122l2 2l3 -1l0 -2zM658 1120l1 3l6 0zM510 1120l0 3l2 1l1 -2l-1 -2zM488 1119l5 1l0 5l1 -5zM135 1119l0 3l2 1l0 -3zM798 1118l0 3l3 0l1 -2zM529 1117l-1 2l3 1l1 -3zM332 1118l5 5l5 0l2 -3l-4 -3zM61 1115l-1 4l4 0l0 -3zM300 1114l-2 2l1 4l5 1l2 -3l-1 -3zM616 1113l-2 0l-1 2l2 0zM498 1114l0 3l2 1l4 -2l-2 -2zM73 1113l2 5l9 1l-3 -5l-4 -2zM697 1111l-3 0l-7 7l2 2l3 -1l4 -4zM30 1111l5 4l7 1l3 2l7 -1l1 -5l-2 -2l-8 3l-5 0l-3 -3zM808 1113l6 1l-2 -1l0 -4zM768 1109l-7 5l1 3l1 -3l3 -3l2 0zM743 1108l0 2l2 1l3 -2zM402 1107l-6 1l-1 4l6 1zM654 1109l-3 -3l-5 0l0 4l-3 1l-3 -2l-1 4l3 1l2 -2l9 0zM104 1106l0 5l2 -2zM169 1105l-2 6l4 2l5 0l1 -6l-2 -2zM169 1107l6 -1l1 5l-6 1zM91 1105l-2 2l2 4zM707 1106l4 0l1 -2l-4 0zM259 1105l-5 -1l-7 5l3 2l4 0l3 -2zM457 1106l4 0l3 -2l-7 -1zM352 1103l-7 4l2 2l5 -4zM235 1101l3 3l0 -2zM493 1100l-7 1l-1 7l6 -1zM341 1101l-3 -3l-6 5l-9 2l-6 9l9 -2l1 -4l6 -6l3 3l4 0zM761 1097l-6 5l-2 4l7 -4zM691 1097l-2 -1l-4 3l-3 0l-3 4l-3 1l3 1l4 -4l6 0zM507 1096l-2 5l3 -1zM292 1094l0 2l7 5l5 0l4 -3l-4 -4zM74 1094l-2 2l0 3l2 2l5 0l1 -5l-2 -2zM106 1093l0 2l4 0zM699 1092l-2 4l5 1l1 -3zM749 1091l-1 -1l-3 2l-5 0l-5 4l3 1l6 -3l4 0zM715 1090l1 2l3 0l0 -2zM24 1090l0 3l3 1l1 -4zM665 1088l-10 1l-2 4l2 1l4 -4l4 1zM392 1088l0 3l2 2l6 0l4 -3l-1 -2l-5 -2zM243 1086l0 3l5 4l7 -3l7 0l0 -2zM177 1088l-2 -2l-4 0l-4 7l8 0l2 -2zM138 1086l1 3l4 -1l-1 -2zM329 1084l-9 0l-2 2l0 7l-6 4l4 0l3 -5l7 -1zM34 1084l0 3l7 5l0 3l3 2l5 -1l2 -3l6 -3l4 2l3 0l2 -2l-9 -3l-3 3l-9 4l-3 -4l0 -3zM16 1084l-1 2l3 1l1 -2zM796 1085l1 10l5 7l3 0l3 -3l5 -1l-1 -5l-5 4l-7 -6l1 -6l-2 -2zM735 1083l-2 0l-1 3l3 -1zM669 1085l6 1l3 -2l-6 -1zM646 1084l4 1l-2 -2zM518 1084l4 1l1 -2zM344 1088l7 -2l2 -2l-7 -1zM91 1083l-2 1l1 3zM768 1082l-4 1l-5 4l4 3l2 -3l3 0zM337 1082l0 2l2 1l1 -2zM691 1081l-9 2l6 1zM495 1080l-5 -1l-4 2l-2 5l6 1zM808 1078l-1 5l5 0l-3 -1zM280 1078l-3 1l2 2l2 -2zM203 1079l0 3l4 1l0 -3l-2 -2zM296 1079l1 3l4 1l7 -2l6 2l3 -1l0 -2l-3 -2l-7 0l-4 -2l-3 0zM715 1074l-3 5l1 2l3 -4zM68 1074l6 8l4 0l3 -2l0 -3l-2 -2l-7 -2zM664 1071l2 3l2 0l-2 -3zM187 1071l-4 3l3 0zM755 1069l-4 5l-4 1l1 3l8 -8zM686 1068l0 2l4 0zM598 1069l0 2l5 -1l-1 -2zM395 1068l0 3l7 1l1 -2l-2 -3zM369 1067l-2 1l0 2l2 0zM167 1068l-4 -1l-4 2l4 1zM769 1066l-9 3l0 2l8 1zM525 1066l-6 1l-1 3l7 -1zM228 1065l-2 3l2 2l3 0l0 -4zM173 1065l-1 3l4 1l1 -4zM120 1064l-1 1l2 1l1 -1zM322 1063l1 5l2 0l3 -3zM148 1063l1 3l6 1l-2 -3zM130 1063l-2 6l5 0l0 -3zM209 1063l0 2l7 2l-1 -4zM336 1062l3 1l0 -2zM309 1061l-3 2l1 2l3 -1zM31 1061l7 6l3 -3l2 0l2 3l0 4l2 2l11 0l-6 0l-2 -2l-2 -8l-3 -2zM487 1060l1 6l6 5l8 0l0 -2l-8 -2l-2 -5zM300 1059l-3 1l1 4l3 -2zM189 1059l1 3l1 -2zM200 1058l-1 3l2 0zM813 1056l-4 6l1 3l5 -2l-3 -1zM639 1056l2 7l6 3l5 -1l5 -7l4 -1l-7 0l-8 7l-3 -6zM75 1054l-2 1l0 3l3 3l3 -2l0 -2zM493 1055l5 1l-2 -3zM797 1052l1 15l3 -2l2 2l0 5l4 -7l-8 -5l0 -6zM362 1052l-1 2l2 1l1 -2zM602 1050l-4 2l1 2l-4 5l3 0l5 -8zM355 1052l-2 -2l-3 0l-3 2l-1 3l8 -1zM316 1048l3 3l7 0l6 2l-1 -4zM154 1048l-1 2l3 1l1 -2zM119 1050l2 2l8 -2l-3 -2zM711 1049l1 2l6 0l-1 -4l-4 0zM254 1047l-2 0l1 7l2 -3zM611 1046l-3 1l0 3l2 1l2 -2zM248 1046l-5 1l-1 5l2 2l-1 -6l2 -2zM214 1046l0 3l2 1l1 -3zM27 1046l1 2l2 -1zM394 1046l1 6l7 0l2 -2l0 -3l-3 -2zM395 1047l2 -2l4 0l2 2l0 4l-7 1zM167 1048l0 4l7 1l3 -2l0 -3l-3 -3l-3 0zM207 1043l-3 0l0 4zM835 1041l0 -2l-4 1zM564 1039l-3 0l-6 6l1 4l2 -1l2 -5l5 -1zM193 1039l-2 3l4 2l2 -2l-2 -3zM486 1038l-2 1l0 3l2 3l4 -1l0 -5zM181 1038l0 2l6 1l-1 -2zM754 1037l-2 2l1 3l2 -2zM302 1037l-2 0l-1 2l2 1zM333 1036l4 7l3 0l3 -4l0 -2zM134 1035l3 4l3 0l-3 -4zM77 1035l-2 2l1 3l2 -3zM818 1039l-5 0l-1 -5l-3 4l-3 0l-2 -3l-6 0l0 4l3 1l3 5zM502 1034l-5 0l-3 4l1 2l4 1l4 -6zM123 1032l2 4l3 -2l-2 -2zM768 1031l-4 2l0 7l-2 5l3 -3zM540 1034l8 0l2 -4l-7 0zM216 1030l-4 -1l-10 3l-1 2l3 0l7 -4zM615 1028l-1 3l3 0l1 -2zM572 1028l1 2l9 0l-1 -3zM143 1027l20 7l0 -2l-4 -2zM742 1026l-10 5l4 0zM553 1028l5 -1l-3 -1zM402 1027l-4 -1l-3 2l-2 5l-10 2l4 1l5 -1l2 -2l6 0zM63 1030l-3 -4l-3 1l-9 9l-2 0l-3 -3l-13 0l2 3l-1 4l4 1l3 3l0 2l6 -6l3 1l3 4l2 0l3 -12l3 -2l4 4zM36 1037l2 -1l1 2l-2 1zM187 1025l-2 0l-1 2l2 0zM170 1025l-2 7l6 1l2 -2l1 -5zM428 1025l8 1l-3 -2zM259 1025l-4 -1l-2 2l-6 1l0 4l3 1l4 -6zM455 1025l1 3l6 1l-4 -4l0 -2zM93 1024l1 5l4 2l6 -1l1 -2l-3 -4zM486 1026l-1 -5l-7 1l-3 3l-4 0l4 3l6 0zM496 1020l-2 0l1 4zM414 1020l0 2l3 2l9 1l-8 -5zM727 1021l3 0l1 -2l-3 0zM344 1020l-8 -1l-4 4l-10 2l-3 7l-4 -3l-2 0l-1 3l7 3l1 -4l5 0l7 -8l11 1zM762 1020l-2 -2l-4 3l-9 2l-2 3l5 0l3 -5l4 0l4 4zM533 1017l-3 0l0 3zM153 1017l1 3l5 1l0 -3zM636 1020l6 4l9 -2l5 4l-2 -5l-8 -5l-8 2zM811 1015l-4 2l2 6l5 -3l-3 -1zM296 1018l0 2l2 1l9 0l1 -2l-3 -4l-6 0zM73 1014l0 6l6 -1l-1 -5zM562 1014l-25 0l-2 2l6 3l5 -3l15 0zM451 1010l-1 3l3 1l1 -3zM278 1009l6 7l5 -1zM209 1009l-2 6l8 4l1 -1l-5 -4l0 -4zM462 1008l1 3l4 -1l-1 -2zM425 1008l0 2l3 0l-1 -2zM756 1008l-2 -1l-15 5l-3 4l5 0zM715 1007l0 4l7 0l2 -2zM268 1007l1 3l2 -2zM240 1010l0 2l2 1l16 0l2 -2l0 -3l-15 -1zM397 1007l1 4l4 2l1 -7zM321 1006l0 6l5 0l3 -3l-1 -4zM201 1008l-2 -3l-4 2l-17 -1l-1 6l4 -3l10 2l3 -3l2 0l2 3l3 0zM170 1005l-3 1l2 5zM507 1004l-9 2l5 1zM695 1000l-14 2l4 3l5 0l5 -3zM288 1000l2 3l3 0l-3 -3zM737 999l-5 1l-1 4l3 0l3 -3zM658 999l0 3l3 1l0 -4zM536 998l2 3l18 0l-8 -3zM332 999l0 3l5 3l6 -1l3 3l4 0l-1 -6l-5 2l-5 -4zM798 997l0 9l4 -4l3 1l0 3l-4 2l1 4l2 1l1 -5l4 -4l4 0l-1 -5l-2 2l-3 0l-4 -3zM484 997l2 9l8 2l1 -3l-2 -5zM766 996l-3 14l5 2l0 -16zM580 995l-2 2l3 1zM298 998l1 4l9 0l-4 -7zM70 997l3 4l3 1l5 -3l-1 -4l-8 0zM61 996l-2 -2l-3 0l-2 5l-9 11l-3 -3l0 -5l-4 -3l-7 5l-7 0l-2 3l4 0l5 -3l3 4l0 2l-3 3l3 -1l3 -5l5 5l4 0l7 -7l4 0l5 5l-2 -6l-4 -3l2 -4l3 2zM267 994l5 3l4 0l-2 -3zM634 994l0 4l8 3l5 4l5 0l0 -3l-8 0l-5 -10l-3 0zM203 992l-2 2l3 4l2 0l1 -3l-2 -3zM603 991l-3 0l-1 2l2 2zM461 991l-1 4l3 1l2 -3zM149 991l-1 4l4 1l0 -4zM427 991l1 3l7 0l4 3l4 -1l-1 -3l-4 1l-5 -5zM723 989l-5 -1l-6 5l-8 2l-2 4l6 1l4 -4l8 -3zM668 988l-1 2l3 1l1 -2zM617 987l-3 0l-1 3l2 1zM243 987l2 6l11 0l3 -2l-4 -1l-3 -3l0 5l-6 1l-1 -6l5 -1zM196 986l-2 2l0 4l3 4zM169 987l1 5l7 1l3 -2l-6 -5zM800 986l1 4l3 0l1 -4l3 3l6 0l-2 -1l0 -4l-11 0zM322 984l-2 2l0 4l7 1l1 -4l-3 -3zM626 983l-3 0l-2 2l3 1zM538 985l3 2l4 -1l0 -2l-3 -2zM64 982l0 4l6 -1l-1 -2zM277 982l2 4l4 0l-2 -4zM124 981l-3 2l2 0zM559 979l1 2l2 0l0 -2zM711 978l-4 0l-4 5l4 0l3 -2zM263 978l2 3l6 1l-1 -3zM454 979l7 0l-2 -2l-3 0zM432 977l-1 2l3 1l1 -3zM336 977l1 2l5 1l-1 -2zM499 979l-6 -3l-6 3l-2 4l2 2l5 0zM471 976l-1 3l2 1zM407 976l-1 3l2 1l1 -3zM15 976l1 2l3 0l-2 -3zM72 974l2 7l3 0l2 -3l4 -2l0 -2zM184 973l-2 2l1 3l4 3l2 -1l-2 -6zM660 972l-4 1l-5 4l-10 0l14 1l5 -4zM515 973l0 2l6 1l2 -2l-1 -2zM237 972l-3 -2l-4 3zM768 968l-4 1l1 6l-7 7l8 -5l2 -4zM395 970l0 4l2 1l7 -2l0 -3l-3 -3l-3 0zM172 967l-4 2l1 3l3 0zM320 966l2 5l6 1l2 -2l-2 -4zM812 965l-4 5l-10 -1l0 4l3 2l1 3l5 -6l6 -1zM620 966l2 3l14 -2l0 -2zM613 966l-2 -1l-8 4l-2 4l-5 -1l0 3l4 2zM273 965l2 4l5 2l1 -1l-1 -3zM687 965l3 3l4 0l0 -2l-3 -2zM432 965l3 2l4 -1l-1 -2zM417 966l4 0l3 -2l-7 -1zM28 964l6 8l9 8l5 0l4 2l2 -4l7 0l-1 -2l-3 0l-7 -9l-14 -2l-4 -2zM50 973l4 2l-1 4l-5 -1l0 -3zM454 963l-2 -1l-5 2l-1 2l2 1zM256 962l-4 5l0 8l7 2l-5 -5l-1 -4l2 -2l8 -2zM63 961l-1 5l2 2l3 0l1 -3zM677 955l-3 1l2 1zM655 955l-3 3l-6 1l0 2l4 -3l3 0zM502 958l10 1l2 -2l3 0l4 4l4 0l-1 -3l-6 -3l-3 0l-2 3l-7 -3zM133 956l2 4l4 0l-3 -5zM231 955l4 2l1 -1l-2 -2zM122 954l3 4l3 -1l-2 -3zM189 953l-3 1l2 1zM44 953l-1 2l1 2l2 0l1 -4zM645 954l-8 -4l-5 0l-3 2l-21 -1l-8 2l-10 6l2 1l5 -3l16 -3l27 0l5 3zM292 950l-1 1l3 2l0 -2zM413 949l2 3l7 -1zM271 950l2 2l3 0l-2 -3zM685 951l6 1l1 -4l-5 0zM798 950l4 -3l-4 0zM767 947l-6 8l0 6l3 -1l-2 -6l4 -3zM104 947l0 4l3 0l5 4l8 -1l-4 -4l-8 0zM748 945l-4 1l-4 5l-3 0l-1 4l4 0zM652 945l-1 4l3 1l1 -3zM180 949l-2 -3l-5 -1l-4 2l-1 4l7 1zM153 946l4 1l3 5l2 -1l0 -3l-4 -3zM592 944l-2 0l-1 2l2 0zM568 944l3 4l1 -3zM444 944l-2 0l0 3l2 -1zM261 946l-2 -2l-4 0l-2 2l-7 1l-2 2l0 4l6 1l5 -6zM92 944l-3 4l3 4zM384 944l6 1l8 8l4 -1l3 -3l-2 -3l0 5l-6 1l-2 -2l0 -4l5 -1l-7 0l-4 -2zM365 944l-2 -1l-1 3l2 0zM194 943l1 3l1 -1zM20 943l3 4l3 0l0 -4zM812 941l-2 5l-2 2l-3 0l-1 9l13 -11l-4 0zM668 943l3 1l2 -2l-4 -1zM757 941l4 1l-2 -2zM132 942l3 3l8 -1l-2 -4zM615 940l-9 -1l-10 3l11 1zM486 940l2 4l3 0l2 -3l-1 -2zM119 940l1 2l9 -1l-4 -2zM511 938l0 3l2 1l13 -2l-4 -2zM618 940l4 2l5 0l2 -4l-6 -1zM421 937l-1 2l3 1l0 -3zM337 937l-3 5l4 3l3 0l1 -7zM9 938l2 4l5 0l-4 -5zM734 935l3 1l-1 -2zM686 934l-8 4l-1 2l8 -2zM297 936l4 5l3 0l2 -2l0 -3l-3 -2zM220 935l3 2l11 0l-7 -3zM73 934l2 6l9 0l0 -2l-6 -4zM268 933l3 3l7 0zM32 936l7 0l3 5l7 5l1 3l7 -1l7 3l8 8l4 2l1 -1l-1 -6l-12 -3l-4 -6l-6 -5l-3 -7l-13 0zM291 932l-2 1l0 2l2 -1zM743 931l0 2l4 -1l0 -2zM572 931l3 3l3 -1l0 -3zM604 929l-2 -2l-13 1l-1 3l4 1l3 -3zM101 927l0 4l-2 2l3 0l6 6l1 -1l-6 -6zM245 926l1 5l7 0l-4 -5zM19 927l1 3l7 1l-2 -4zM514 926l4 1l2 -2zM406 935l-2 -6l-3 -3l-9 -1l-9 4l-12 -2l-6 1l2 3l14 -2l5 3l9 0zM612 924l-2 0l-3 4l3 1l2 -2zM319 928l0 2l6 1l3 -1l0 -5l-5 -1zM168 926l0 6l0 -6l2 -2l6 0l1 7l1 -5l-2 -2l-6 0zM501 925l3 3l5 -1l-2 -4zM119 924l0 2l6 1l-3 -3zM725 921l2 4l3 0l-2 -4zM236 923l4 -1l-3 -1zM7 921l0 2l4 4l4 0l-3 -6zM491 919l3 2l0 7l4 -5l-4 -4zM266 920l1 2l5 1l-2 -4zM637 920l0 3l2 2l8 1l0 4l-4 3l1 2l6 0l5 -3l4 2l3 -1l-1 -7l-7 1l-9 -8l-4 -1zM333 918l0 2l3 3l7 0l-1 -5zM106 917l1 4l4 2l2 -1l-1 -3zM551 918l-5 -2l-5 1l-6 4l-1 3l2 1l3 -3l7 -2l4 1zM68 917l2 4l7 2l4 4l7 1l4 4l2 0l-1 -6l-3 1l-5 -4l-4 0l-5 -7zM814 915l-10 7l0 4l5 0l6 -3l-2 -2zM755 914l-4 2l3 1zM307 916l-3 -2l-4 1l-3 3l0 3l8 0l2 -2zM183 912l0 2l14 6l5 -1l5 2l11 -1l7 3l4 -1l-3 -3l-8 0l-6 -4l-11 2l-7 -4l-7 1zM574 914l-3 -3l-7 2l-1 2l4 2zM760 912l4 0l1 -2l-3 0zM599 911l-4 -1l-6 3l-8 -2l-3 4l18 0l3 -2zM468 910l-3 0l-1 3zM347 910l0 3l5 0l-2 -3zM619 910l-2 -1l-3 2l3 1zM81 909l0 2l2 1l1 -2zM243 909l1 4l6 -2l5 3l1 -1l-1 -3l-5 -2zM391 909l1 2l5 2l4 0l3 -2l-5 -4l-5 0zM385 908l-2 -1l-7 7l3 1l3 -3l4 0zM715 907l-4 -1l-5 7l-3 0l-5 4l-17 5l-4 3l4 1l7 -4l7 -1l5 -4l5 0l3 -4l6 -2zM169 905l-2 1l1 4zM11 908l3 3l3 -1l5 3l6 7l8 1l6 5l10 2l2 -2l2 -8l4 -3l0 -3l-4 -1l-1 6l-4 2l-5 7l-5 -5l-2 -5l-10 -1l-6 -6l-4 -1l-3 -3zM319 905l1 6l8 0l0 -6zM320 905l6 -1l1 6l-6 1zM227 904l0 2l3 2l9 -1l-1 -2l-6 -2zM695 902l-14 4l-2 2l-4 0l-3 2l0 2l4 0l4 -4l7 0zM476 902l-2 3l4 1l0 -3zM216 903l2 3l4 -1l-2 -3zM807 901l0 2l6 2l-1 -5zM762 898l-7 1l-5 3l-6 0l0 2l5 1zM497 899l-4 1l-5 -2l-3 9l6 -1l6 -5zM158 899l1 4l5 0l0 -2l-3 -3zM663 913l0 -3l-2 -2l-6 0l-3 -3l3 -4l6 0l-1 -3l-5 -2l-3 0l-5 5l-7 -2l-2 4l-3 0l-2 2l1 3l3 0l2 -6l3 2l5 0l3 4l6 2l4 4zM669 895l1 2l2 0l0 -2zM140 895l0 3l2 1l0 -3zM27 897l8 9l11 -1l7 -4l14 2l-8 -8l-9 5l-10 2l-4 -1l-4 -6l-3 0zM708 895l-3 -1l-1 3zM768 893l-4 4l3 0zM258 894l6 4l3 -3l-1 -2zM81 894l-7 0l0 6l5 -1zM369 892l-13 7l4 2l3 -3l2 0l4 -4zM271 899l1 2l8 -2l6 3l9 -2l2 2l11 -1l-1 -3l-3 -2l-19 1l-6 -5l-5 2zM624 894l-9 1l-4 -4l-5 5l-4 -3l-3 0l-2 2l-12 -2l-4 3l-7 0l-13 5l-8 -1l-3 2l-2 -2l-10 0l-13 5l-1 3l21 -3l5 -3l4 2l14 -2l10 -5l26 0l6 2l4 -3l8 1zM121 894l7 -2l-6 -1zM252 889l0 5l-6 1l7 -1zM243 889l-4 2l3 3l2 0zM226 889l4 3l3 -1l-1 -2zM401 889l-3 -1l-3 4l-3 1l0 2l2 1l7 -5zM834 887l-1 5l2 1zM805 889l0 2l7 0l-1 -4zM747 888l2 2l4 -1l-1 -2zM681 891l6 0l3 -3l-7 -1l-2 1zM204 887l-1 2l3 1l0 -2zM319 888l1 4l9 2l9 8l8 -1l-2 -3l-13 -3l-5 -9l-4 0zM167 887l5 6l8 3l-7 -9zM307 884l3 3l0 -2zM761 884l-2 -1l-3 3l3 0zM187 883l2 4l0 -4zM512 882l-1 2l2 5l1 -2l-2 -2zM283 880l1 2l6 0l5 2l9 -2l-1 -2l-9 3l-6 -4zM255 879l3 4l6 -2l12 0l-1 -2zM494 878l-7 0l-3 6l-4 3l2 0l2 -3l3 0l3 3l2 0l2 -2zM25 881l7 4l6 0l6 2l4 -5l14 0l3 5l3 1l-2 -5l-4 -3l-15 0l-5 -3l-6 0l-5 3zM601 877l-7 1l-4 -3l-4 3l-6 -1l-14 8l-5 0l-4 2l-10 -1l-1 2l3 2l6 -2l6 2l3 -3l8 -1l8 -7l11 0l5 2zM368 878l0 -2l-2 -1l-5 2l-11 0l4 6l5 0l3 -6zM331 877l3 4l12 3l-1 -6l-7 -3l-5 0zM233 875l0 3l6 1l-1 -2zM181 875l-1 3l3 1l1 -3zM530 874l3 1l3 -2zM114 874l5 1l-1 -2zM71 874l1 5l1 -4l6 0l1 6l0 -7zM812 872l-5 2l-3 4l8 -1zM227 873l-3 -1l-4 2l1 2l6 -1zM688 871l0 2l8 0l0 -2l-3 -1zM669 871l2 3l8 -1l-3 -3zM666 879l-4 -8l-8 -1l-16 12l1 2l7 2l6 -2l8 -6l5 5zM651 876l2 -1l1 2l-2 1zM418 869l7 3l4 0l0 -3zM711 869l-2 -1l-6 4l4 0zM571 868l-8 2l-19 -1l-2 2l3 2l22 -1zM500 868l-3 1l1 4l4 -2zM307 869l1 2l7 2l10 0l-1 -4zM170 867l1 6l5 -2l-2 -3zM758 866l-7 2l-4 4l6 -1zM286 868l8 2l3 -1l2 -3l-5 2l-6 -2zM573 867l14 -2l-12 0zM253 866l0 4l2 -2l9 0l3 2l6 -2l8 0l-2 -3zM411 867l-7 -4l-7 2l-2 3l2 4l5 0l3 -3zM23 862l-2 2l1 2l2 -2zM227 861l6 4l7 0l2 3l0 -4zM447 860l-3 0l-11 7l10 1zM645 859l1 3l3 -1l-1 -2zM475 860l3 5l3 0l2 -2l-2 -4zM835 857l0 3l-3 1l2 1zM554 857l2 2l3 -1zM350 858l-2 -1l-3 3l-3 0l-2 -2l-8 0l-1 2l3 2l11 2l5 -3zM815 861l-3 -1l-1 -4l-9 8zM678 855l-1 1l3 2l1 -3zM662 856l2 3l3 0l0 -3zM550 857l-2 -2l-12 1l-6 3l3 1l2 -2l3 0l9 3zM209 855l0 2l5 3l4 -1l-5 -4zM72 855l0 3l2 2l5 0l2 -2l-3 -3zM689 853l-2 2l4 2l1 -3zM631 854l0 2l10 0l-6 -3zM299 855l2 3l4 0l2 -2l4 0l2 2l8 0l-3 -3l-9 -1l-3 -2l-5 1zM201 852l1 2l4 -1zM292 852l3 1l-1 -2zM260 853l6 1l1 -3l-4 -1zM184 851l4 1l-1 -2zM434 850l-2 -1l-1 4l2 0zM254 849l0 5l3 -1zM23 850l3 9l5 0l7 7l5 -1l0 -5l2 -1l-4 -1l-3 -4l-3 2l-5 0l-3 -2l-2 -5zM104 847l-1 5l6 4l8 3l11 1l-3 -3l-7 -1l-11 -5zM799 846l0 4l2 0l1 -2zM51 846l-3 4l7 7l-2 4l0 5l5 -2l4 1l1 -4l-4 0l-2 -2l0 -3l4 0l1 -3l-9 -7zM392 845l0 2l3 3l1 -5l6 0l2 2l-1 5l3 -1l5 4l8 3l5 -1l-1 -5l-9 1l-5 -2l-7 -6zM384 845l-3 2l0 3l4 -2zM169 848l0 3l3 2l3 0l4 -3l-1 -5l-6 0l6 1l0 4l-2 2l-5 0l-1 -5zM128 845l4 4l5 -1zM93 850l1 -5l-6 1zM668 843l0 3l6 0l-1 -2zM663 845l-2 -2l-5 1l-9 5l-2 3l8 0l4 -5zM215 844l6 4l9 3l7 0l5 3l1 -7l-5 2l-3 -3l-6 -2zM553 842l1 2l5 -1zM573 841l1 3l3 -1l0 -2zM119 841l5 3l-1 -2zM527 840l-2 0l-1 3l2 0zM467 841l1 2l6 1l4 4l2 -1l2 3l24 0l-2 -6l-9 0l-5 -3l-3 0l-5 5l-4 -4l-6 -2zM688 839l-7 2l0 2l4 0zM312 841l11 6l6 -2l12 0l10 3l6 0l5 6l3 -1l0 -2l-13 -5l-11 -8l-4 1l-4 4l-16 0l-2 -2zM158 838l3 1l-1 -2zM533 837l5 5l9 2l-3 -4l-4 0l-5 -4zM111 836l5 3l-2 -3zM407 835l5 5l3 0l-1 -2zM292 836l1 4l5 -1l4 3l5 -1l0 -3l-3 -3zM813 834l-8 8l1 2l7 -1l-2 -2l0 -6zM703 834l-4 0l-8 4l10 -2zM710 832l-5 2l4 1zM381 833l-2 -1l-9 5l-1 2l5 1l6 -3zM357 831l0 5l4 1l0 -3zM266 832l2 4l4 0l2 -2l-4 -3zM611 829l-6 1l-4 5l-5 -2l-6 2l-5 4l-3 -1l3 3l2 0l11 -5l7 0zM445 830l-4 -1l-4 3l-7 1l-4 4l3 0l7 -5l7 1l2 -1zM471 829l-10 -1l-10 2l7 -1l5 2l6 0zM403 830l-2 -3l-4 0l-6 4l-4 0l-1 2l17 0zM502 827l0 2l6 4l6 -3l0 -2l-6 -2zM162 826l4 2l2 3l0 -5zM123 827l5 6l5 0l0 -2l-4 -1l-4 -4zM623 826l-3 0l0 2zM318 826l1 4l9 1l0 -3l-3 -3zM154 825l2 2l4 -1zM95 824l-3 7l9 1l2 -3l0 -4zM95 825l6 -1l1 5l-2 2l-4 0zM697 824l-2 -1l-6 3l-5 -1l-1 2l7 1zM488 828l-3 -1l0 -5l-2 4l-10 4l6 3zM145 821l1 2l2 -1zM287 820l1 2l2 0l0 -2zM748 819l-6 1l-9 7l13 -4zM536 820l1 2l10 -1l9 6l3 -4l-2 -3zM195 821l0 3l2 1l8 -2l15 5l6 -1l4 2l3 4l8 0l3 3l12 0l4 -3l-12 -6l-9 1l-9 -5l-12 -2l-3 3l-4 -5l-3 2l-8 -2zM833 818l0 3l-4 1l6 5l0 -7zM336 818l-1 6l6 0l1 -6zM811 816l-5 4l1 3l5 -2zM268 815l2 3l4 -1l-1 -2zM133 815l3 5l3 -1l0 -3zM371 817l4 2l19 -1l2 -3l-22 -1zM72 815l0 4l2 1l6 -1l2 -2l-2 -3zM20 815l2 2l5 1l2 2l0 4l4 -1l3 -3l6 1l1 3l-6 4l4 5l4 0l5 -6l2 0l4 5l5 0l1 -2l-3 0l-3 -3l-1 -4l1 -1l5 3l3 0l-4 -9l-2 1l-3 6l-5 -2l-1 5l-5 0l-1 -5l4 -1l-4 -2l-19 -4zM630 839l4 -1l5 -5l5 5l3 0l3 -4l6 2l8 0l1 -3l4 -2l0 -2l-4 1l-5 -10l-7 0l-5 -7l-5 0l4 2l-2 4l-5 1l-2 -4l-5 3l-1 3l3 2l4 -4l1 6l-3 6zM657 824l3 0l2 2l-2 8l-2 0l-3 -3l0 -5zM646 820l4 2l-2 4l-5 -1l0 -2zM727 812l-3 -1l-2 3l4 0zM519 811l-3 0l-3 3l-5 0l3 2l6 -2zM634 810l3 3l2 -1l-2 -3zM627 810l-8 -1l-4 3l-8 -1l-11 6l-4 0l-11 5l-18 0l0 2l3 3l10 1l3 -2l15 -3l5 -4l9 -2l7 -5l9 1zM494 809l5 6l3 0l-1 -5zM349 809l0 3l2 1l6 -1l4 4l4 -1l-1 -3l-6 0l-5 -3zM703 806l-1 1l2 1l1 -1zM644 806l1 2l2 -1zM441 810l1 3l6 5l22 1l11 -5l-1 -3l-4 2l-25 1l-5 -3l1 -5l-2 0zM287 806l10 9l1 5l2 2l5 0l4 -5l-11 -4l-7 -7zM106 805l-1 5l15 2l-1 -2zM5 805l2 2l0 3l1 -2zM213 806l1 2l17 1l3 2l6 0l4 2l9 -1l-3 -5l-11 2l-4 -2l-8 0l-5 -3zM163 810l0 2l2 1l2 -3l5 3l5 0l2 -3l-1 -2l-8 -4l-2 0l-2 4zM154 804l-4 0l-1 2l3 2zM741 807l6 -1l2 -2l-5 -1zM324 803l-5 5l0 3l2 1l6 0l2 -2l-3 -6zM708 804l3 0l3 -3l-5 0zM369 801l1 2l3 0zM664 799l-2 3l0 4l3 2zM817 802l-3 -1l0 -3l-4 3l0 3l4 0zM338 798l-1 3l4 3l0 -6zM258 798l16 6l5 0l-5 -5zM206 802l-8 -4l-4 2l-2 5l-4 0l0 2l3 1l2 -4l7 0zM466 797l0 3l3 0l0 -2zM534 798l3 1l2 -2l-3 -1zM525 797l3 1l-1 -2zM503 800l0 -2l-3 -3l-24 1l-2 2l1 2l9 1l4 3l5 -1l2 -4zM486 798l5 -1l1 5l-5 1zM345 797l5 -1l-3 -1zM192 796l-2 -1l-1 3l2 0zM434 794l-17 6l4 1l5 -4l6 1zM79 794l-4 0l-2 5l4 1l2 -2zM7 793l0 3l5 3l8 0l-1 -2zM385 797l6 1l8 -3l8 4l4 0l-9 -4l-3 -3l-2 0l-3 3l-7 0zM223 792l10 4l3 -1l-2 -3zM68 809l0 -2l-9 -9l-5 -2l-3 -4l-4 2l-7 0l-4 5l-10 0l1 3l5 2l2 -4l8 0l1 4l5 0l4 -5l4 -1zM741 790l-13 5l-2 3l4 0zM82 791l0 2l6 1l-2 -3zM662 792l-2 -3l-3 0l-11 7l-5 -2l-7 0l-11 3l-4 0l-2 -2l-13 1l-8 4l-13 3l-28 2l-3 2l-11 0l-4 2l-6 -2l-1 3l21 -1l4 -2l5 0l5 3l17 -1l12 -3l13 -7l9 1l4 -2l13 1l6 4l17 -9l6 0zM106 793l7 3l4 0l5 3l5 0l12 4l5 -1l3 -4l-23 -3l-13 -4l-4 -3zM33 788l-3 -2l-3 1l0 3l5 1zM171 789l4 0l2 -2l-5 -2zM398 786l18 3l16 -3l3 -2l-7 0l-6 3l-10 0l-6 -3l-8 0zM270 784l-27 2l1 7l6 0l6 -6l7 1l6 -2zM760 783l-6 3l6 -1zM272 786l4 3l8 0l4 3l6 1l6 8l10 0l3 -2l-5 -4l-5 -1l-19 -11l-5 3zM47 783l-4 0l0 3l1 1zM389 781l-2 0l-4 4zM602 780l-21 5l-4 3l-11 -2l-9 5l-6 1l-8 5l6 0l5 -3l18 -5l14 1l10 -7l5 -1zM494 781l-7 -1l-5 6l8 1l3 -2zM457 780l-2 5l4 0l0 -3zM233 780l1 3l4 0l-3 -3zM63 780l-2 6l7 3l1 -3zM636 779l-1 3l2 2l3 0l1 -4zM814 778l-3 2l0 3l2 2l4 -2l-3 -2zM807 778l-6 0l-1 5zM681 778l-2 -1l-1 2zM604 779l7 1l5 3l6 -1l-1 -4l-7 1l-2 -3l-4 0zM107 776l1 4l3 2l6 -1l3 2l10 1l15 -1l-2 -2l-25 -2l-5 -3zM405 775l3 3l5 0l3 2l11 -2l2 -2l-4 0l-3 2l-9 0zM7 774l0 4l4 1l0 -2zM746 773l-4 0l-6 4l-8 -2l-11 6l-12 1l-2 2l0 4l4 0l5 -4l8 1l7 -5l8 -3l9 0zM553 777l4 1l3 -2l7 0l0 -2l-7 1l-2 -2l-3 0zM575 772l-1 3l3 0l1 -2zM502 777l3 5l4 -4l8 -1l5 -4l2 0l7 7l9 2l6 0l5 -5l-4 -2l-6 0l-4 4l-2 0l-3 -5l-9 -2l-8 0l-8 3l-1 2zM301 773l0 2l4 4l9 5l4 5l4 2l5 -1l3 -4l-1 -3l-6 1l-8 -4l-8 -8zM47 776l3 0l2 4l3 -4l4 -2l-8 -2zM201 772l-2 -1l0 3l-3 4l-7 0l-2 3l6 0l8 -6zM155 773l5 1l2 -2l-4 -1zM69 771l6 9l7 0l8 5l0 -4l-18 -10zM254 775l6 0l5 -2l1 -2l-12 -1zM28 770l-4 3l2 0zM584 769l0 2l3 -1zM355 770l3 1l1 -2zM347 769l1 2l3 -1zM760 769l-2 -1l-6 3l0 2l3 0zM297 771l-4 -3l-5 4l7 1zM271 772l5 1l8 -4l-10 -2l-3 2zM706 767l-7 0l-5 5l0 3l5 -1zM410 766l2 2l4 -1zM393 769l3 4l7 0l-2 -7l-4 0zM234 767l2 3l6 3l0 -5l-4 -2zM385 766l1 2l4 0l-3 -3zM170 765l2 4l3 -2l-2 -2zM31 765l-1 2l3 1l-2 10l5 -1l0 -3l2 -1l-2 -2l0 -3l-3 -3zM319 764l4 6l11 1l-3 -4l-6 -3zM122 765l0 2l2 1l7 0l3 2l4 -1l-12 -5zM82 764l3 5l6 3l0 -4l-2 0l-4 -4zM601 763l-7 2l-1 3l4 0zM61 765l2 2l3 0l-2 -4zM720 763l-1 -1l-7 2l0 2l2 1zM437 762l0 3l2 0l0 -2zM683 763l5 1l1 -3l-4 0zM626 764l4 3l9 0l6 -3l3 3l0 2l-6 4l3 4l2 0l4 -4l8 1l3 -3l-2 -3l-7 1l-7 -7l-4 0l-3 2l-4 -3l-5 0zM451 762l5 4l4 -1l0 -3l-2 -1zM377 763l-3 -2l-4 0l-8 4l-1 3l12 -1l4 -2zM814 759l-8 1l-6 3l0 4l5 -3l10 1zM311 759l1 4l5 1l0 -2l-3 -3zM45 759l-2 1l1 4l2 -2zM217 759l2 3l6 1l-5 -5zM549 757l-3 -2l-3 0l-5 3l-5 0l-3 -2l-14 1l-3 2l-9 1l-8 4l-5 -2l1 -4l-8 1l3 2l0 7l6 1l7 -1l5 -4l6 -1l5 -3l14 -1l4 3l3 0l4 -3l6 1l2 -1zM420 755l0 2l2 1l1 -3zM277 756l1 2l3 0l3 -3zM340 755l-2 -1l-1 2zM300 755l0 2l4 3l3 -2l-3 -4zM598 752l-10 5l-13 0l-1 2l10 1l13 -6zM132 753l9 4l15 1l10 3l0 -4l-2 -2l-4 0l-6 -3l-13 1l-3 -2l-4 0zM193 752l9 2l6 5l4 -1l-2 -4l-14 -5zM88 749l-2 0l0 3l2 -1zM253 748l-1 7l5 3l10 -1l2 -2l-3 -3l-9 1zM758 747l-4 0l-3 4l-6 3l-5 5l-12 2l-1 3l13 -2l12 -8zM717 748l-11 -1l-8 9l10 -5l6 0zM319 750l3 3l5 -1l0 -3l-2 -2l-3 0zM678 748l-4 -2l-2 2l0 3l3 0zM223 746l9 7l12 2l0 -8l-7 2zM579 747l3 1l2 -3l-4 0zM343 747l0 3l2 2l6 2l3 -1l2 -3l7 2l4 -2l14 1l9 4l13 -3l0 -4l-2 -2l-4 0l-5 5l-9 -1l-6 -4l-25 -1zM183 748l-6 -3l0 5l-4 1l4 0zM21 747l0 2l6 7l5 0l4 -5l5 0l8 2l3 4l9 -2l5 4l4 0l7 4l3 0l0 -3l-3 -3l-13 -2l-10 -10l-3 1l-3 6l-6 0l-9 -6zM609 748l11 1l2 -3l-3 -2l-4 0l-5 2zM91 747l5 4l7 0l-4 -7l-6 1zM737 744l-2 -1l-4 3l-6 -1l-5 4l8 1l8 -4zM812 742l-12 5l0 3l12 -2zM563 742l-1 1l4 3l1 -3zM532 743l-9 -1l-10 5l-4 -1l-2 2l11 0l12 -3zM538 743l3 2l4 -1l-2 -3l-3 0zM63 738l0 3l4 3l10 -2l-2 -2l-7 0zM752 737l-9 2l-1 4l4 -1zM633 751l13 -1l5 5l3 0l5 -5l2 0l2 2l-1 9l3 5l5 3l0 -2l-7 -7l1 -6l-1 -6l-2 -2l-1 -9l-3 1l-1 6l-5 1l-6 4l-9 0zM495 737l-10 1l-7 6l1 3l6 -5l2 1l-2 3l4 1zM278 737l6 6l1 -1l-2 -3zM432 736l2 9l15 -2l-1 -2l-14 0zM201 736l3 4l7 2zM133 737l6 3l20 1l10 7l1 -4l4 0l-4 0l-9 -6l-9 -2zM297 737l2 4l8 2l-3 -7l-5 -1zM497 736l4 2l2 -3l-3 -1zM330 736l0 2l3 0l5 4l2 -1l0 -2l-7 -5zM20 735l7 3l-2 -4zM715 733l-11 -1l-14 8l-4 5l-2 0l-3 3l4 1l4 -5l10 -7l5 0zM233 736l2 2l14 -2l7 3l7 0l-6 -4l-9 -3l-3 0l-8 4zM766 731l-3 0l-2 4l4 0zM506 734l22 0l4 -2l-5 -2l-9 0l-6 3l-5 -1zM456 730l0 2l3 0l-1 -2zM351 731l1 3l19 1l12 5l10 -1l-11 -4l-9 0l-6 -4l-5 2l-8 -3zM723 729l-2 4l4 1l2 -4zM210 729l0 2l5 0l-2 -2zM549 729l-8 0l-3 3l5 1zM810 727l-6 5l-4 0l0 4l5 -4l5 0zM663 727l0 3l3 5l3 -4zM746 727l-3 -1l-3 3l4 0zM177 726l1 7l-2 1l9 2l0 -3zM752 727l4 -2l-3 0zM115 725l1 5l5 -1l0 -2zM31 727l0 2l3 2l2 4l8 -1l-6 -2l3 -6l-8 -1zM326 724l-3 0l-2 2l0 6l3 0l2 -2zM273 725l1 2l3 -1l-2 -2zM102 725l-6 -1l-6 4l0 6l11 -4zM69 723l-1 4l4 0l0 -3zM257 723l4 3l4 -1l-5 -3zM762 721l4 1l-1 -2zM56 719l0 3l-2 2l-4 0l0 2l3 1l0 5l5 1l-4 -7l3 -3zM513 719l-9 -1l-9 5l-4 -4l-5 0l-7 6l5 1l0 -5l2 -2l5 0l2 3l0 4l9 0l4 -5zM447 723l0 -2l-3 -2l-8 1l-3 -2l-6 0l-4 2l-13 0l-9 4l-23 -1l-4 -3l-7 0l3 3l8 0l6 5l7 0l6 3l4 0l3 -4l3 0l6 -4l10 -2l14 1l4 2zM334 719l3 4l5 -1l0 -4l-2 -1zM353 717l1 3l3 -1l0 -2zM306 719l-2 -3l-4 0l-11 4l-4 0l-3 3l7 0l5 -2l12 2zM663 715l-8 0l3 1l-1 6l-5 0l-1 -5l-4 2l5 5l-2 4l-6 1l-5 -3l-17 4l-12 -1l-15 9l0 3l12 -7l21 0l5 -3l16 -1l7 1l0 -7l3 -3l3 1zM727 714l2 3l1 -3zM721 714l-32 8l-4 4l-6 2l-2 2l0 3l11 -3l10 -7l16 -3l6 -3zM10 714l0 4l2 3l4 1l4 -2l3 3l3 0l-1 -3l-6 0zM811 717l-3 -4l-7 3l-1 4zM74 713l2 6l7 -3l7 1l-1 -2l-3 1l-6 -4zM272 711l0 2l2 1l3 -2zM558 710l-7 1l-8 6l-7 0l-3 2l-12 -2l-2 2l20 2l7 -4l9 -2zM308 710l0 3l4 2l0 -4zM124 713l3 4l10 3l4 3l16 1l3 5l3 0l4 3l0 -4l-13 -6l-4 1l-14 -6l-4 -3l-2 -4zM562 708l3 3l3 -1l-1 -2zM494 708l2 4l1 -2zM283 711l9 -1l2 -2l-7 0zM247 707l-1 2l4 1l0 -3zM201 711l-5 -4l-6 7l4 -2l7 1zM175 708l-5 0l-3 2l-1 4l8 -1zM106 707l0 4l9 2l5 -1l-2 -3l-8 0zM741 706l-3 0l-2 5l4 0zM639 705l-17 8l-14 1l-6 4l14 1l5 -2l8 0l10 -8zM320 705l1 6l6 0l3 -2l0 -3l-2 -1zM602 704l-3 -1l-4 4l4 0zM70 709l-2 -4l-5 -3l-3 6l-6 0l-4 -2l0 4l2 1l0 2l4 -5l4 0l2 2zM617 700l-8 3l4 0zM486 708l-3 -3l0 -5l-8 9l-13 1l-18 -9l-10 1l-7 4l-5 0l-4 2l-10 -1l-7 -3l-6 0l-3 2l-3 -2l-4 0l-4 -3l-5 0l-2 2l0 2l3 0l6 4l5 0l5 3l26 -1l9 -3l9 0l4 -3l3 0l8 5l7 0l3 2l4 -1l6 3l5 -6zM359 703l11 0l-4 -3l-4 0zM333 700l0 4l4 1l1 -3zM232 701l1 2l5 1l-2 -3zM640 703l2 -2l6 1l0 -2l-5 -1zM504 700l7 6l9 -2l-2 -2l-7 1l-4 -4zM667 701l-6 -3l-3 4l-1 5l10 -3zM492 698l2 1l0 4l2 -1l3 3l2 0l0 -2l-5 -5zM751 699l5 4l4 0l5 -6l-2 0l-2 3l-4 0l-3 -3zM684 697l-6 0l-6 3l0 3l3 1l3 -3l4 -1zM180 699l0 4l3 2l3 0l3 -3l0 -4l-2 -1zM558 696l-3 0l-2 2l-7 -1l-6 4l-8 2l-6 -2l-4 4l3 2l10 -1l6 -4l7 0l3 -3l6 0zM75 701l4 0l11 5l0 -3l-10 -8l0 5zM15 695l0 3l14 14l0 -4l2 -2l-9 -6l-3 -4zM574 695l-3 -1l-6 3zM693 693l-4 0l-3 4l4 0zM108 697l3 2l22 -3l4 4l7 3l11 8l3 0l1 -2l-7 -5l-6 -2l-5 -6l-9 -3l-9 2l-7 -1zM588 692l-3 0l-3 3l4 1zM264 692l2 3l4 2l1 3l7 1l7 -1l4 -3l12 4l13 -3l-11 -4l-7 0l-6 3l-7 -1l-5 3zM741 691l-16 7l-17 2l-12 4l-7 5l-19 5l3 2l8 0l25 -12l4 0l3 -2l8 0l3 -3l5 1zM65 691l8 8l0 -4l4 -1l-6 0l-3 -4zM7 690l1 3l1 -2zM657 690l-2 -1l-2 2zM144 688l5 5l7 1l2 2l19 1l-9 -5l-11 0l-3 -3zM643 690l-3 -3l-4 3zM491 689l-2 -2l-4 0l-5 5l2 1l4 -4zM595 686l-1 3l3 0l1 -2zM813 685l-3 8l-5 5l0 3l3 0l10 -10l-5 -1zM261 689l-2 -3l-6 -1l-7 1l-2 2l1 5l5 1l4 -6zM245 688l5 -1l1 5l-5 1zM392 685l7 7l18 7l5 -1l15 -8l10 0l17 8l5 -2l-1 -3l-22 -7l-11 1l-13 7l-11 0l-13 -10zM83 684l1 2l2 0l-1 -2zM765 682l-3 2l2 0zM527 685l5 1l3 -3l-6 -1zM511 684l1 4l9 -1l-4 -5zM233 682l-1 4l4 0l1 -4zM608 681l-4 0l-1 3l3 1zM355 682l2 5l4 0l2 -2l-5 -4zM288 683l2 1l10 -3l-11 0zM278 681l-1 4l3 2l1 -4zM117 682l2 2l20 2l-9 -3l-5 0l-3 -2zM366 682l1 2l8 0l-4 -4l-3 0zM349 685l-4 0l-5 -5l-4 0l-5 4l-1 3l-2 -1l1 -3l-9 2l0 4l4 3l6 -5l3 1l6 -2l5 5l2 0zM309 681l3 3l4 -1l-4 -3zM636 679l-5 2l0 3l4 -2zM35 679l-5 3l2 3l-1 1l-7 1l2 5l2 -5l10 1l-3 -4zM659 677l0 2l-2 1l6 4l3 6l0 -5zM158 677l4 1l3 3l8 -1l6 4l12 2l5 7l9 3l7 6l5 -2l-8 -8l-7 1l-6 -7l-7 -2l-9 -6zM7 677l0 2l5 4l8 3l0 -3l-2 -2l-8 -1zM149 676l1 2l5 -1zM137 676l4 3l2 -1l0 -3l-2 -1zM757 673l-11 3l-7 4l-4 0l-7 4l-28 5l-5 4l5 1l4 -3l9 -3l10 0l8 -4l15 -4zM409 673l3 5l5 1l0 -3l-3 -3zM54 675l1 2l6 3l9 0l4 2l5 -1l-2 -6l-6 3l-10 -5l-4 0zM104 671l3 9l5 1l0 -5l-7 -3zM671 668l-2 0l0 4l2 -1zM253 668l1 5l1 -2zM813 667l-2 5l4 -1l-2 -1zM91 667l-3 3l2 3l2 0zM393 669l0 3l12 0l-2 -4l-5 -3l-3 1zM356 666l-4 -1l-4 3l-5 -1l-1 2l11 2l3 -2zM308 667l8 0l7 4l6 0l7 -3l-6 -3l-19 0zM662 665l-5 -1l-1 3l-4 0l2 1zM510 664l-4 0l-14 13l-22 -1l-3 -2l-9 0l-4 -2l-6 2l-19 -1l-5 2l-1 2l4 2l8 -2l10 0l29 4l12 -1l6 2l6 -7l8 -2l3 -4zM168 665l0 2l3 2l7 -1l7 4l10 2l15 7l12 0l3 2l-6 -5l-5 0l-15 -7l-8 -1l-5 -3l-11 -3zM518 665l11 2l12 -1l5 5l3 -1l-1 -4l-7 -3l-21 0zM7 663l0 4l4 1l8 6l4 0l-1 -3l-11 -4zM290 662l-3 3l1 2l2 0l1 -2zM625 662l-5 -1l-4 2l-11 1l-10 3l-30 17l-6 0l-4 2l6 1l4 -3l7 1l8 -6l7 -1l5 -5l14 -8l17 -1zM633 659l-3 3l2 7l3 -1zM106 659l0 2l5 2l7 6l13 4l-1 -2l-4 0l-5 -7zM485 658l0 6l8 0l0 -2l-3 -3zM75 658l0 3l2 0l0 -3zM337 657l0 4l2 2l6 -3l-2 -3zM471 655l-13 1l-4 3l-7 -1l-8 3l-5 -2l-6 0l-3 2l2 2l19 0l14 -4l10 2zM813 654l-6 8l4 -2l3 -5zM761 654l-12 1l-7 6l-17 9l-4 0l-7 4l-6 0l-5 3l-11 0l-4 3l12 0l2 -2l9 1l18 -7l4 0l12 -5l0 -2l3 -3l11 -4zM493 655l3 1l0 -2zM359 653l-2 -1l-5 2l-2 3l3 1l2 -3l3 0zM177 654l4 3l11 2l8 5l20 0l6 3l8 -1l-2 -3l-3 -1l-16 0l-4 -2l-10 -1l-21 -8zM82 652l7 3l2 -1l-6 -3zM503 648l0 4l2 1l8 0l4 -2l-2 -2l-9 1zM318 650l1 3l10 2l3 -1l-3 -1l-4 -5zM7 648l0 4l10 4l7 8l9 -1l2 2l-1 -5l3 -1l-13 0zM263 648l-2 -1l-2 2l3 1zM243 650l0 3l2 1l7 -1l0 -4l-2 -2l-4 0zM308 647l3 1l-2 -2zM169 646l-3 4l2 2zM61 646l-4 1l3 1l0 6l-3 4l-2 0l0 4l3 3l9 -4l-4 -3l1 -8zM637 647l-3 -2l-6 0l-21 6l-2 2l-20 7l-22 1l-4 3l-4 0l-1 4l8 3l9 -5l8 0l26 -11l7 -1l8 -4l4 0l3 -3l10 4zM405 647l-3 -2l-8 2l0 3l3 3l7 0zM422 646l4 3l15 0l3 -4l-16 -1zM410 644l0 3l2 1l5 -2l-3 -3zM451 644l5 0l4 -2l-8 0zM95 642l0 5l2 4l4 -1l4 -4l3 0l4 3l6 0l3 -2l14 2l0 -2l-2 -1l-25 0l-4 -3zM179 642l17 7l5 -1l17 5l11 -2l-5 -3l-5 1l-17 -6l-11 0l-8 -3l-3 0zM762 640l-5 -1l-23 3l-20 10l-4 0l-7 6l-14 7l-10 0l-5 4l9 1l6 -3l10 -1l11 -4l14 -9l10 -5l3 0l8 -5l15 -1zM68 638l-2 2l2 4zM815 637l-11 9l-2 5l6 -2l7 -8zM716 637l-18 6l-15 9l-8 2l-3 -1l-2 2l-8 -2l-2 3l2 2l5 0l3 -2l13 1l15 -10l16 -6zM487 637l-5 0l-3 3l-7 0l-2 2l6 3l5 -3l3 2l0 -6zM353 637l-8 0l0 6l-2 2l-3 0l5 0l4 -5l4 0zM502 637l-3 -1l-3 4l-2 0l0 3l2 -2l5 1zM329 636l0 3l5 2l0 -4l2 -1zM124 634l4 3l5 -1zM299 634l0 3l3 3l5 -3l-1 -4zM109 633l3 3l3 -1zM554 632l-8 0l-4 4l-6 0l-5 3l-4 -2l-7 0l-3 -2l-6 1l-4 -3l-1 4l7 0l3 3l7 -1l3 2l12 0l6 -4l9 -3zM7 632l0 5l9 3l7 6l10 -4l0 -4l-13 0l-3 -2l-4 0zM159 632l3 1l-2 -2zM82 631l0 2l5 5l4 0l-7 -7zM737 630l-4 -1l-5 4l7 0zM686 632l7 1l12 -2l-3 -2l-14 0zM633 629l-4 0l-4 3l-6 0l-9 3l-18 10l-11 0l-11 -5l-12 0l-13 9l-11 4l-11 -3l-4 1l11 4l13 -1l5 -5l14 -6l17 7l8 1l18 -7l10 -6l13 -3l5 -3zM288 630l1 3l3 -1l-2 -3zM58 632l1 3l7 -5l-6 -1zM393 629l3 4l8 -2l5 1l2 -2l-9 -3l-7 0zM104 627l-1 5l2 0zM29 627l-1 2l3 3l1 -5zM363 625l2 3l7 0l1 -2zM413 631l5 2l4 -3l8 1l4 -2l10 0l4 2l9 1l3 -3l-3 0l-5 -3l-17 -2l-3 2l-10 0l-8 3zM327 626l-3 -2l-2 1l-1 5l-2 2l-6 0l-1 2l7 1l6 -3zM765 623l-3 0l-9 5l-11 -1l-1 3l16 0l6 -2zM133 621l1 4l4 -1l-2 -3zM169 629l0 4l7 -1l2 -6l5 0l3 2l7 0l5 4l5 2l4 -1l8 4l24 3l4 -2l-8 -4l-11 1l-40 -15l-6 1zM802 622l11 5l-1 -5l2 -2l-8 -1zM483 619l-16 11l6 0l5 -5l7 3l-3 -2zM331 621l4 3l17 5l3 -1l2 -3l-1 -2l-11 1l-6 -5zM32 619l-6 3l-6 -2l-9 1l5 5l8 1l8 -6zM621 623l-5 0l-1 -5l-22 2l-26 9l-6 0l-4 3l21 0l22 -6l6 0l3 -2zM582 625l5 -1l1 5l-5 1zM592 621l6 -1l1 6l-6 1zM664 617l-1 12l4 1l2 4l-5 0l0 7l-2 2l6 -6l4 3l12 -9l-3 -5l-3 0l-6 5l-6 -2l-3 -3l2 -7zM306 615l0 5l2 -2l0 -2zM153 615l1 4l2 1l1 -3zM687 615l8 2l-4 -3zM669 619l8 -4l-7 -2zM632 613l-3 0l-4 3l-8 1l6 0l1 5l2 -2l5 1zM724 612l-1 3l3 0l0 -3zM286 613l1 2l7 0l3 5l0 -5l5 -1l-8 1l-3 -3zM743 613l5 3l3 -4l-6 -1zM145 611l1 3l4 0l-1 -3zM254 608l0 4l24 2l4 -1l-1 -3zM382 612l6 4l28 -1l5 -2l25 0l10 5l4 0l3 -2l3 2l5 -1l0 -3l-10 2l-12 -6l-6 0l-7 -3l-5 0l-3 2l-17 -2l-3 2l-10 0l-3 2l-10 -1zM506 606l0 2l4 2zM106 605l1 6l1 -4zM758 604l0 5l6 1l0 -4zM356 607l5 2l9 -1l4 3l5 -1l-2 -4l-4 0l-3 -2l-11 0zM664 607l4 2l2 -3l11 -2l-9 -1l-3 3l-4 -2zM64 603l-1 5l7 6l3 5l6 0l3 -3l0 -3l-7 0l-5 -2l-2 -2l0 -4zM814 608l-2 -1l0 -5l-10 3l0 2zM632 602l-19 0l-9 3l-5 0l-4 -2l-4 3l-12 2l-8 5l-11 2l-9 5l-12 -1l-8 3l-11 -1l-4 2l-3 -2l-9 -1l-4 -3l-6 0l1 5l7 2l3 4l7 -4l5 0l4 2l11 0l7 -4l9 1l12 -4l9 -1l6 -4l9 -3l8 0l3 -2l9 0l14 -4l14 -1zM229 602l5 1l9 7l0 -5l-6 -3zM351 610l0 -7l-9 -1l-3 -3l-5 5l-4 1l-14 -1l5 7l7 0l10 -5l5 3l5 -1zM321 605l6 -1l1 6l-6 1zM133 598l0 3l7 5l-3 -6zM7 597l1 7l7 2l2 3l6 2l2 3l6 -2l0 -4l-3 2l-4 0l-4 -4l-3 0l-4 -5zM202 597l8 3l0 -2l-4 -2zM76 601l5 0l4 3l4 -1l-3 -4l-3 0l-3 -3l0 4zM582 597l-8 -2l-15 1l-18 6l0 2l10 1l7 -5l9 2l6 -5zM470 596l-3 -1l-5 4l5 0zM256 595l0 2l5 1l12 -1l18 2l3 -2l5 4l8 0l-3 -6l-27 0l-4 2l-3 -2zM147 594l1 4l6 5l11 3l8 5l5 -2l14 2l3 4l7 0l3 2l6 -1l4 3l14 3l6 3l5 -1l4 3l11 0l5 -3l7 2l12 0l-10 -4l-25 0l-4 -3l-6 0l-5 -3l-5 0l-10 -4l-8 0l-3 -2l-6 1l-6 -4l-7 0l-3 -3l-16 0l-7 -3l-7 -6zM171 605l5 -1l1 5l-5 1zM474 595l2 4l8 1l2 6l1 -4l5 0l1 5l-4 1l5 0l0 -4l-3 -3l1 -3l11 -1l-13 0l-4 -4l-10 0zM452 594l-4 -1l-2 2l2 2zM194 592l0 2l2 1l1 -2zM750 590l-4 2l2 3l3 -2zM106 590l0 2l4 2l16 2l-3 -4l-10 1l-5 -1zM430 589l0 3l2 2l3 0l0 -3l-2 -2zM372 590l7 1l10 6l5 -2l14 0l18 -4l-1 -3l-28 0l-4 3l-17 -3zM26 588l3 3l6 1l0 -2l-4 1l-2 -3zM810 587l-2 3l1 2zM764 587l-5 4l1 2l4 0zM667 588l0 5l3 2l7 -4l-1 -3zM357 590l5 2l4 -1l0 -2l-3 -2l-4 0zM323 586l-3 4l2 2l4 0l3 -4zM257 587l-4 -1l-1 8l5 -4zM83 586l7 4l0 -4zM515 586l-4 -1l-6 4l2 2zM351 583l-10 5l5 2l0 -2zM119 583l23 8l-2 -4l-10 -3zM687 585l3 1l4 -3l-5 -1zM105 581l4 2l5 -1l-7 -3zM7 579l-2 7l1 1l1 -3l4 2l8 10l5 2l0 -3l-9 -9l-5 -7zM569 577l-4 -1l-7 3l-6 0l-14 7l8 2l5 -2l7 -6l9 0zM60 575l-1 8l2 2l0 4l5 5l4 1l2 3l0 -3l4 -1l-8 -3l-7 -7l0 -3l9 -1l8 4l0 -4l-5 -3l-9 0zM728 575l-5 -1l-2 2l-8 0l-4 2l-6 -1l-5 5l7 0l5 -3l13 0zM764 574l-7 -1l-6 4l-7 1l-1 2l1 1l6 -3l9 0zM804 572l-2 1l0 2l2 -1zM513 574l3 1l4 -2l-6 -1zM507 574l-2 -2l-12 1l-2 2l-2 8l-4 4l3 0l5 -8l6 1l2 -2l5 0zM345 572l-4 3l0 3l5 -1zM449 572l1 2l5 1l3 5l4 -2l10 0l-14 -2l-5 -5zM301 571l0 2l3 3l6 0l6 3l-7 -7zM260 572l2 2l7 1l4 5l6 3l9 0l4 2l7 -1l-4 -3l-16 -2l-3 -3l-12 -5zM813 570l-2 6l3 -2zM631 570l-2 2l0 3l2 -1zM666 569l-2 2l0 4l3 3l3 -7zM13 569l4 7l6 4l1 4l1 -4l-4 -3l0 -3l-4 -4zM253 567l0 5l4 -1zM547 567l-2 -1l-9 4l-7 1l-2 2l1 2l4 0l4 -4l7 1l4 -2zM243 566l-4 2l0 2l3 2zM156 566l5 5l4 0l4 3l7 0l3 3l5 -1l12 5l10 0l0 -3l-8 -5l-12 1l-12 -6zM69 564l2 4l4 1l4 4l10 4l2 -1l0 -2l-3 -2l-11 -3l-5 -5zM414 563l3 2l3 -3zM148 562l0 3l6 1l-2 -4zM104 562l1 7l5 2l5 0l4 3l5 1l8 -1l4 3l6 0l2 3l8 3l4 5l4 0l12 5l15 0l-5 -6l-7 1l-3 -2l-12 -1l-10 -7l-7 0l-3 -3l-14 -2l-5 -4l-4 -1l-4 -4zM62 560l1 6l2 -3zM484 559l-2 2l0 3l2 -1zM177 559l4 4l14 0l10 2l15 7l1 -1l-4 -6l-8 -4l-11 -1l-4 -2zM18 560l7 6l5 -2l-8 -6zM764 557l-6 1l-5 3l-12 1l-3 3l0 2l-6 5l3 0l5 -5l21 -5l3 -2zM560 557l-5 2l2 1zM475 559l-3 -2l-7 0l-5 2l-14 -1l-3 2l-15 -1l-3 2l5 2l10 -2l21 3l13 -1zM494 556l4 0l1 6l2 1l24 -1l12 -3l0 -2l-22 1l-9 -2zM814 558l-4 -1l0 -4l-6 4l-2 4l7 0zM631 552l-7 3l-1 3l3 2l5 -3zM619 553l-4 -2l-7 0l-18 11l-14 3l10 -1l6 2l3 -3l9 -3l6 -4l6 2l3 -2zM250 550l0 6l8 4l15 4l6 4l6 0l7 3l6 -1l-2 -4l-23 -4l-17 -6zM158 549l0 3l3 3l5 2l2 -1l-1 -3zM397 546l7 1l-1 6l5 -3l-5 -4zM306 546l1 4l10 5l11 0l4 1l5 4l6 0l5 -3l4 3l10 1l6 3l28 1l1 4l-3 3l-8 2l-9 0l-4 3l-4 -2l-6 0l-2 2l2 2l9 -2l9 2l9 -4l12 0l16 3l5 -3l6 1l2 -2l13 -1l0 -2l-2 -1l-3 2l-9 -1l-8 4l-16 -1l-5 -5l0 -2l3 -3l-6 1l-6 -4l-13 0l-6 -3l-5 1l-5 -3l-11 -2l-13 0l-15 -8zM25 546l-1 5l2 2l1 -5zM170 544l1 7l3 0l1 -1l-5 -1zM63 544l0 3l3 5l3 0l6 5l7 3l4 0l7 4l1 -2l-4 -5l-14 -5zM174 543l3 1l0 5l29 0l15 2l5 3l17 1l1 -5l-21 -4l0 4l-5 1l-1 -5l3 -1l-6 1l-8 -3l-15 2l-6 -2zM104 542l0 5l12 3l14 9l3 -1l-5 -5l-10 -6zM763 540l-10 4l-29 7l-6 6l-8 5l-10 1l-4 2l-17 1l-4 4l14 0l26 -6l16 -11l7 0l11 -4l15 -3zM507 541l0 3l14 4l13 -2l3 -3l-3 -4l-19 0zM485 548l-5 0l-2 -2l0 -6l4 -1l-2 -1l-9 4l-9 -1l-4 2l-23 2l-3 2l-17 0l1 2l32 1l3 -2l7 1l7 -3l7 1l5 -2l4 4zM345 538l0 4l5 2l31 7l13 1l1 -5l-11 0l-12 -3l-14 -1zM631 536l-2 3l-11 -3l-13 0l-14 8l-5 5l-10 1l4 4l6 0l9 -5l4 -4l10 -4l18 1l4 -3zM562 537l4 1l1 -2zM75 541l14 3l6 3l0 -6l-6 -4l-9 -3l2 2l0 4zM304 533l2 1l0 3l13 0l6 -2l6 5l2 -5l-9 -3zM155 531l0 2l7 2l-1 -4zM64 531l0 4l7 3l0 -5l-4 0zM834 530l0 5l-3 1l4 3zM105 530l0 4l9 2l9 5l9 1l-1 -2l-6 -1l-4 -3l-6 -1zM708 532l-3 -3l-6 1l-4 -2l-3 3l-4 1l-3 4l-4 -3l-3 0l-4 3l-7 -1l1 3l3 3l14 -5l7 0l4 -3l10 1zM186 529l0 3l2 2l7 0l1 -4l6 4l43 4l3 1l5 6l20 9l23 -3l2 -2l-4 -3l-8 3l-14 1l-8 -3l-5 -5l-15 -9l-25 -1l-15 -4l-8 0l-1 3l-5 -3zM152 530l-2 -2l-5 4zM130 530l6 2l4 -3l-6 -2zM805 528l5 2l3 5l4 0l-4 -2l1 -6l-7 -1zM177 524l-6 1l-2 5l2 2l3 0l-4 -1l1 -6l5 0l2 5l1 -3zM763 523l-12 4l-12 9l-16 5l-9 1l-14 8l-11 -1l-9 1l-3 2l-10 0l2 8l2 -3l4 0l4 -3l26 -1l15 -9l23 -6l15 -9l5 -1zM631 521l-6 2l-20 -1l-10 4l-7 0l-12 5l-4 4l6 2l4 -1l5 -4l8 -1l10 -4l26 -1zM482 523l-2 -3l-11 9l-6 -2l-4 1l2 2l11 -1l8 2zM84 519l0 4l-4 1l7 2l0 -3l2 -1zM689 517l-8 1l-1 2l2 2l5 0zM282 522l1 3l13 0l7 -2l16 1l4 3l19 -1l18 10l16 2l29 -7l4 0l3 2l41 -2l4 -3l-5 -3l-17 0l-16 3l-7 0l-6 -3l-9 0l-16 8l-18 1l-12 -4l-12 -9l-18 1l-3 -2l-11 0l-5 -3l-3 0l-9 6l-4 -2zM104 516l0 3l6 5l6 3l8 0l-8 -7l-8 -4zM7 516l1 6l3 0l3 3l4 0l-1 -3zM65 514l0 4l4 4l0 -5l2 -1l-4 0zM214 515l8 6l11 0l4 2l8 -1l8 4l13 11l11 4l4 0l9 -4l7 1l0 -4l-7 2l-16 1l-8 -5l-9 -9l-8 -1l-9 -4l-7 0l-5 2l-9 -7zM704 512l-6 3l2 1zM500 515l3 2l0 7l3 4l3 1l2 -2l54 -4l5 -3l18 -3l4 -3l-7 -2l-10 4l-10 1l-4 2l-37 2l-12 2l-3 2l-4 -3l0 -8l-4 -3zM763 509l-9 0l-4 2l-14 14l-10 5l-5 0l-4 -2l-5 2l0 2l19 0l20 -15l12 -4zM815 508l-5 7l3 0l5 -3l-3 -1zM255 508l-1 5l8 1l6 4l5 6l2 0l0 -4l-3 -2l-1 -6l-6 -3zM80 507l1 3l8 3l0 -5zM631 504l-21 3l-5 3l-3 -1l-4 2l-1 3l4 0l4 -3l19 0l5 -2l2 -2zM319 504l-11 4l0 2l10 0zM331 505l0 5l6 -3l6 0l10 10l14 8l9 -1l13 -7l17 -1l8 2l9 -1l7 -3l8 1l6 -3l9 2l2 -2l0 -2l-12 -2l-5 2l-12 0l-6 2l-25 0l-8 2l-17 1l-5 -6l-4 -2l-4 0l-2 2l1 3l-2 2l-3 -3l0 -2l-7 -6zM288 503l2 4l3 1l2 -2l-2 -3zM227 503l4 4l5 0l6 3l1 -4l-3 0l-4 -3zM736 502l-14 3l3 2l2 4l3 0l6 -7zM185 501l-3 5l5 2l0 5l4 0l0 -6l-3 -5zM7 501l1 6l12 8l6 0l-2 -3l-3 0l-11 -10zM473 500l-3 2l0 2l3 3l0 3l3 1l3 -3l0 -2l-3 0l-1 -5zM64 506l10 -4l-3 1l-6 -3zM590 501l-7 -2l-6 2l-12 -1l-24 7l-28 5l8 2l17 -2l31 -7l7 1l4 -2l9 -1zM104 502l1 3l7 0l4 3l9 2l9 5l10 -1l8 2l4 -2l5 5l4 0l-1 -3l-12 -5l-13 -1l-8 -4l-4 0l-5 -3l-11 -2l-3 -2l-2 0zM739 500l5 3l4 -4l-6 -1zM217 499l2 3l4 0l-2 -4zM276 497l4 3l5 0l-4 -3zM507 496l0 4l-2 2l1 4l3 3zM758 493l-1 4l6 2l0 -5zM613 492l-9 3l8 0zM74 494l1 5l4 -2l12 2l-1 -4l-7 -3l-7 0zM814 489l0 6l-7 4l-4 5l0 3l9 -6l2 -6l2 -1l-2 -1zM803 492l5 -3l-5 0zM621 490l-2 -1l-1 2zM469 489l-2 1l0 3zM232 490l8 6l10 0l4 3l10 0l7 -2l-4 -2l-11 0l-4 -3l-1 4l-7 0l-1 -6zM737 489l-27 0l-8 7l-7 2l-3 4l-8 1l-2 4l6 0l4 -3l9 -2l8 -7l5 1l5 -4l14 -1zM292 488l1 4l7 0l0 -2l-3 -3zM107 487l0 4l17 2l5 3l7 0l14 6l5 -1l12 3l5 8l5 -1l2 -3l-1 -2l-16 -7l-7 0l-14 -6zM303 498l3 -3l24 -2l2 2l4 -2l6 2l16 -1l14 3l16 7l17 1l14 -2l6 -3l5 0l14 -4l11 1l2 -2l-4 -3l-15 0l-5 3l-6 0l-4 2l-26 3l-25 -9l-26 0l-3 -2l-10 1l-6 -3l0 5l-6 1l0 -7l4 0l-4 0l-4 3l-12 0l0 5zM220 486l0 2l5 0l-1 -2zM7 485l0 5l4 4l5 2l6 8l3 1l1 -5l-6 -4l-8 -9zM151 488l18 3l4 2l6 -2l12 0l-4 -2l-19 -2l-16 -4zM65 483l0 6l4 1l1 -2zM590 483l-7 -1l-8 3l-13 -1l-16 2l-11 5l-3 0l-6 4l-5 0l-2 2l0 3l4 1l36 -11l16 0l11 -4zM252 483l3 3l21 0l7 4l4 -2l-1 -2l-9 1l-20 -6l-4 0zM201 480l-2 0l-2 6l3 -1zM599 479l8 2l0 -4l-6 0zM444 478l1 2l11 1l3 -2l-2 -2zM432 480l7 -1l1 -2l-5 0zM812 475l-5 0l-4 2l0 4l9 -1zM763 474l-2 3l1 3zM612 475l-2 -1l-1 2zM740 474l-5 3l-12 -1l-3 -2l-8 -1l-10 1l-9 7l-8 9l-6 3l-10 2l14 0l9 -6l8 -9l5 -2l11 0l11 3l7 -3l4 0zM227 475l2 3l13 0l0 -2l-5 -2l-7 -1zM167 478l13 0l2 4l12 0l-8 -4l-5 1l-2 -3l-9 -3l0 4zM25 485l0 -13l-2 2l-6 1l-4 -2l-6 0l1 2l7 2l4 3l4 0l0 4zM66 471l-1 3l11 5l6 0l8 5l1 -2l-1 -4l-7 -5zM414 470l1 2l4 -1zM323 472l-4 -2l-4 2l0 3l6 1l2 -1zM578 470l-2 -1l-4 3l4 1l2 -1zM570 472l-3 -2l-13 -1l-19 1l-3 2l-19 3l0 3l5 4l3 -2l4 1l6 -5l6 1l5 -3l22 1zM104 469l0 4l3 5l23 5l0 -4l3 -1l-8 0l-8 -3l-10 -1l-3 -3zM630 468l-3 5l-5 1l-5 4l5 1l8 -7zM197 467l-2 4l1 2l3 0l0 -5zM405 468l-6 -2l-6 8l-6 0l-16 6l-28 -1l-4 -2l-6 0l-3 -3l-2 0l-1 2l12 5l9 -1l8 3l21 0l13 -2l5 -6l6 -1l4 -4zM194 463l-4 2l1 6zM708 462l-9 1l-8 3l-16 13l-7 -2l-2 1l0 3l14 0l15 -12l4 -2l9 -1zM439 466l16 1l10 -1l3 -2l-3 -2l-16 0l-6 1zM18 463l7 1l-1 -2zM718 461l1 5l2 0l-2 -1zM385 461l-19 2l-4 2l-3 -1l-7 3l-1 2l18 1l16 -7zM817 460l-3 2l0 2l3 0zM169 463l7 4l8 0l2 -2l-6 -4l-7 1l-3 -2zM757 459l-4 0l-2 6l-5 1l-4 6l13 -6l3 -5zM332 461l0 2l4 3l6 2l4 -1l-2 -5l-5 -4zM406 458l6 3l7 -1l7 2l2 -2l-4 -3l-5 2l-6 -2zM213 457l3 3l10 0l4 3l5 0l7 3l4 6l11 -2l4 4l6 2l18 0l8 -3l12 1l5 -2l-1 -2l-5 2l-17 -2l-11 2l-3 -3l-3 1l-9 -3l-4 -3l-12 1l-6 -4l-11 0l-4 -3l-4 0l-3 -2zM245 466l6 -1l1 5l-6 1zM65 456l1 5l7 -1l13 3l5 5l1 -5l-8 -6zM554 457l-5 -2l-37 1l0 6l28 -2l11 1l3 -2zM207 455l-3 -1l-4 4l7 0zM196 453l3 1l3 -2l-4 -1zM704 456l-4 -1l0 -4l-6 1l-6 -2l-3 2l-8 1l-4 4l0 4l15 -5zM630 449l-18 6l-8 5l-2 4l3 1l10 -5l15 -4zM812 448l-9 10l0 6l3 -1l1 -4l7 -6l-2 -1zM98 453l9 4l4 4l7 -2l3 3l7 0l6 4l-7 -5l0 -4l2 -2l4 0l-4 0l-7 -3l-11 1l-6 -2l-3 -4l0 5zM15 447l-1 3l4 1l0 -4zM471 450l-1 -4l-28 3l-5 4l9 1l6 -2l14 0zM252 446l2 1l0 6l6 -2l8 0l6 3l10 2l3 3l7 0l7 3l8 -2l-4 -4l-11 1l-19 -9l-15 -1l-7 -2zM667 445l7 -2l-7 0zM175 442l11 3l0 4l-2 2l-4 0l11 0l0 -2l-4 -3l-1 -3zM762 444l-3 -3l-5 3l-8 1l-18 14l-3 0l5 1l0 5l10 -11l7 -3l6 -5l6 1zM396 451l4 1l4 -5l23 0l2 -3l-3 -2l-10 1l-9 -2l-6 4l-5 1zM318 443l5 7l6 0l3 -3l7 -2l8 8l13 0l4 -3l20 -1l-1 -3l-4 2l-20 -1l0 4l-5 1l-1 -5l4 -1l-9 1l-5 -2l-4 -4l-9 3zM208 441l0 2l3 2l18 0l4 4l7 0l3 3l-1 -5l2 -2l5 0l-16 -4l-8 0l-6 2zM806 439l-2 0l-1 2l2 0zM69 440l0 3l2 2l6 0l11 3l5 3l-1 -7l-6 0l-10 -3l-2 -2zM546 443l-2 -3l-9 -2l-12 3l-9 0l4 0l1 5l9 0l-4 -1l1 -5l4 0l1 5l11 0zM629 437l-25 6l-8 6l0 2l9 -2l17 -7l4 0l3 -2zM190 439l7 0l4 2l0 -4l-2 -2l-5 0zM750 433l-2 -1l-28 14l-17 4l4 0l1 4l8 -1l10 -4zM470 433l-3 -1l-5 3l-3 -2l-4 0l-4 3l-8 0l22 1l5 -1zM667 430l0 3l10 -1zM357 436l22 -1l-3 -2l-10 -1l-4 -2l0 5zM81 432l8 0l-4 -2zM521 427l-5 1l2 1l0 4l5 -1l-2 -1zM395 429l1 2l4 0l0 -4l-3 0zM105 427l-1 5l8 3l9 7l11 2l5 3l2 -4l3 0l-21 -6zM734 428l-14 1l-6 -4l-9 0l-7 7l-4 1l-7 6l-6 0l-4 3l16 -1l4 -2l4 -5l7 -2l18 1l6 -2zM429 424l-2 0l-1 3l2 0zM330 424l1 6l9 -1l0 -5zM813 423l-6 4l3 5l8 -3l-5 -1zM744 424l-3 -1l-4 3l5 0zM629 422l-4 0l-10 5l-15 1l-5 -2l-7 0l-8 6l-1 4l2 1l8 -6l12 2l20 -3l7 -3zM7 422l0 4l12 6l1 2l3 0l-4 -3l-2 -4zM214 421l-1 4l3 1l2 -3zM222 421l0 3l2 2l6 -1l8 2l6 4l15 6l19 4l7 0l8 4l6 -3l10 4l4 -1l0 -2l-10 -8l-5 1l-3 4l-6 -2l-15 -1l-37 -15l-8 0l-3 -2zM416 416l-5 1l3 3zM205 418l-2 -4l-4 1l-3 4l-13 -1l-3 8l-9 -1l-3 6l-3 1l-10 -4l-27 0l-19 -13l-3 0l1 3l5 2l13 10l7 3l22 1l13 8l3 5l1 -4l-3 -2l0 -5l2 -3l5 -1l5 -5l2 1l5 -8l4 0l6 7l3 -5zM76 414l-3 2l0 3l2 2l3 0l2 -6zM389 415l1 3l6 -1l-2 -4l-3 0zM470 412l-4 3l1 2l3 -2zM7 411l0 4l3 0l14 7l0 -3l-2 -2zM353 414l4 2l6 0l6 4l8 -2l7 1l2 -2l-1 -3l-3 -2l-4 0l-3 -2l-8 0l-3 -2l-6 1l0 4zM342 409l-10 0l-1 5l5 -1l4 2l0 -5zM810 407l-3 6l6 -1l-3 -1zM682 408l-1 -1l-5 3l-9 1l0 6l8 1l6 -5zM608 408l-7 -1l-19 7l-21 15l-7 0l-12 -5l-16 1l3 0l1 4l8 -1l14 3l5 3l4 0l4 -4l5 -2l7 -7l15 -6l8 -1l8 -4zM305 408l0 2l3 2l9 1l-1 -5zM174 407l-6 2l-1 3l6 0zM834 406l0 3l-2 1l3 2zM746 407l-3 -1l-4 5l-5 -1l-5 4l-17 -4l-12 3l-5 3l-14 14l5 0l7 -9l7 -5l6 -2l7 0l6 3l9 0l9 -3l3 -3l6 -1zM619 405l1 4l9 -1l0 -2l-4 1l-4 -3zM143 406l4 -1l-3 -1zM84 405l0 2l4 0l-1 -2zM577 408l-4 0l-2 -5l-7 2l-9 6l-40 2l-3 -2l0 8l18 -3l29 0l15 -8zM104 402l1 4l28 14l13 -1l5 -2l-18 -1l-26 -14zM575 402l4 0l2 5l-1 -6zM268 402l1 2l7 0l7 3l10 2l5 -1l-1 -2l-12 -4zM755 400l3 1l0 -2zM261 401l-2 -2l-3 4l4 0zM201 404l6 3l5 0l21 7l16 2l15 8l9 3l15 -1l7 -4l3 0l1 -5l5 0l1 5l-5 1l6 1l4 4l7 2l1 -6l-9 -2l-5 -5l-5 0l-6 5l-23 1l-6 -7l-12 -3l-4 -6l-4 4l-5 1l-10 -4l-10 -1l-10 -4l-5 -4l0 4zM7 398l0 5l5 0l4 3l7 2l-1 -4l-8 -2zM67 397l0 4l5 2l7 0l0 -3l-2 -2zM345 396l2 3l8 -1l-4 -3zM183 395l-2 2l0 11l3 5l5 1l2 -2l-3 -7l1 -3l-6 -3zM469 394l-7 3l-1 2l2 1l6 -2zM357 395l3 3l12 0l21 6l29 -1l5 3l4 -1l-1 -2l-11 -4l-23 1l-22 -6zM336 394l-1 6l6 1l1 -3l-5 0zM588 398l2 0l2 4l15 -7l9 -1l-15 -1zM176 395l0 -2l-3 -2l-4 0l-3 2l-12 -1l3 0l4 3zM834 390l-3 3l4 4zM331 392l-6 -3l-16 1l-4 2l0 6l-5 0l16 -1l7 -3l4 2l0 -3zM216 394l11 4l6 0l6 4l3 -1l-2 -4l-6 0l-3 -3l-11 -5l-1 4zM72 391l15 5l4 0l1 -2l-2 -2l-17 -3zM808 389l-1 2l2 4l4 0l-3 -1l1 -6zM253 388l1 4l1 -3zM576 391l-6 0l-1 -6l-11 4l-3 3l-6 1l-5 6l-7 3l-9 -1l-7 -5l-7 0l0 2l3 4l23 2l6 -4l5 0l5 -6l6 1l4 -3zM357 385l-3 0l-4 4l6 -1zM270 387l2 2l8 1l9 5l6 1l0 -4l3 -1l-10 -1l-14 -5zM711 389l-3 -1l0 -4l-10 4l-30 6l-1 5l16 -4l9 -4zM108 384l-1 6l9 7l19 10l5 -1l-2 -4l-8 -2l-10 -5zM762 384l-9 -1l-9 3l-10 7l-4 0l-6 3l-20 2l-3 2l-14 3l-2 3l4 2l8 -5l10 -2l20 1l8 -5l6 -1l10 -8l11 -1zM360 384l2 2l8 -1l11 3l-1 -5l-18 -1zM599 386l10 -1l2 -3l-10 -1l-2 1zM201 385l8 6l0 -4l5 -1l-8 -2l-3 -3zM620 379l-1 2l2 1l1 -2zM469 380l-8 -2l-8 2l-6 6l-6 -1l-3 2l-8 -2l-22 0l2 1l0 3l11 0l5 2l16 1l6 -4l3 1l4 -4l5 -2l9 2zM7 377l0 6l4 0l5 3l6 1l1 -5l-6 -3zM259 376l0 8l3 0l0 -4zM628 375l-1 4l2 1zM301 375l6 1l0 4l-2 1l10 -1l-6 0l-1 -5zM318 374l1 5l11 1l3 5l6 1l0 -2l-4 -3l-3 0l-1 -3zM219 378l16 4l4 -1l-1 -3l-10 -2l-5 -3l0 4zM824 372l-1 3l2 0zM810 371l-3 0l-3 4l5 0zM568 370l-15 5l0 4l17 -4l-2 -1zM267 371l1 2l8 3l3 3l15 2l-1 -5l6 -1l-11 0l-17 -5zM107 369l-1 5l11 4l18 11l1 2l13 1l-5 -4l-6 -1l-8 -4l-4 -5l-6 -1l-5 -5zM342 367l-4 3l4 -1zM244 367l-1 5l1 -5l6 -1l2 2l0 6l-4 1l3 0l2 -2l-1 -7zM205 366l1 8l9 2l1 -4l4 0l-11 -3zM762 365l-24 5l-18 9l4 0l1 4l2 0l24 -11l11 -2zM735 372l5 -1l1 5l-5 1zM469 364l-12 -1l-14 5l-34 0l-5 -2l2 3l-1 6l17 0l5 -3l15 1l6 -3l10 -2l6 0l5 2zM333 378l7 3l6 0l3 -6l4 0l2 -4l8 -3l7 3l6 0l2 2l6 0l9 4l3 -2l-7 0l0 -4l4 -3l-8 -2l-7 1l-4 -2l-8 0l-7 -3l-7 0l0 4l-4 4l1 1l-3 4l-12 1zM552 365l-3 -1l0 -4l-8 3l-13 0l-14 -2l-1 4l15 0l6 3zM308 359l-1 6l10 -1l9 3l-1 -5l-5 -2l-9 1zM7 359l1 6l14 4l0 -5zM834 358l0 2l-2 1l3 5zM627 354l-24 12l-16 1l0 5l14 0l9 -3l5 -4l9 -1l4 -4zM275 354l-8 2l-7 -1l-1 2l5 0l8 3l0 -5zM210 359l8 4l17 4l-2 -4l-8 -2l-12 -7l0 4zM97 354l0 3l6 3l7 1l11 5l7 0l4 4l16 8l4 0l4 3l6 0l3 2l4 -1l-2 -3l-17 -6l-6 -4l-5 0l-13 -7l-4 0l-8 -4l-15 -2zM337 351l-3 -2l-2 3l-2 0l1 3zM762 349l-3 -1l-10 4l-15 3l-18 9l-12 8l-19 5l-17 2l2 1l0 4l-2 1l7 -3l18 -2l15 -4l16 -11l7 -2l8 -5l21 -3zM342 348l0 5l4 4l3 -4l-6 0zM805 346l-1 4l2 1l2 -4zM514 345l0 6l15 2l13 -1l-6 0l-1 -5l-16 0zM393 347l0 4l2 2l10 -1l6 3l8 0l3 -3l4 0l4 4l4 1l11 0l15 -4l8 0l0 -7l-25 6l-21 -1l-2 2l-5 0l-14 -8zM396 346l5 -1l2 2l0 5l-6 1zM120 348l4 2l7 0l12 7l5 1l3 3l0 -5l6 -1l2 2l0 4l-6 1l9 2l6 5l0 -5l3 -1l-14 -8l-11 -3l-10 -6l-10 -1zM7 344l1 5l13 6l-1 -6zM627 343l-30 8l-14 1l4 0l2 6l9 -2l4 -3l15 -5l10 -2zM355 347l2 2l0 4l24 0l-8 0l-9 -5l-5 -6l-2 0zM301 341l1 5l6 3l9 0l8 2l-2 -1l0 -5l-6 1l-12 -2zM163 341l0 3l-4 1l7 4l1 -5zM742 344l-2 0l-2 -4l-21 6l-5 5l-9 3l-5 0l-3 2l-11 2l-13 0l-2 1l-1 7l6 0l-3 0l-2 -2l1 -5l7 0l1 5l-2 1l10 0l5 -3l8 0l6 -4l7 -2l5 -4l6 -1l12 -6zM816 337l-4 4l3 -1zM563 342l-5 0l-1 -5l-9 5l3 1l0 5zM742 338l3 0l1 4l8 -2l-3 0l-1 -4zM208 336l0 5l8 0l6 3l4 5l11 5l13 -2l-1 -5l-6 4l-18 -8l-9 -7zM261 336l2 6l18 1l0 -4l3 -1l-9 -3zM154 335l0 4l-4 1l5 2l0 -3l3 -1zM19 335l-1 2l3 2l0 -4zM627 331l-12 5l-15 0l-12 -3l0 4l-2 2l26 1l15 -5zM360 331l1 7l11 0l7 2l3 -3l-2 -2l-7 1l-4 -2l-6 2zM88 336l6 3l3 6l3 2l12 -1l-1 -4l-12 0l-4 -2l-2 -4l0 -5l-1 4zM727 330l-9 0l-6 3l-10 -1l-5 4l-6 0l-5 4l-17 4l0 4l16 -2l5 -4l10 -1l5 -4l4 1l5 -5l5 3l9 -1zM467 331l-5 -1l-5 3l-17 3l-14 -1l-5 -3l-13 1l-10 -2l-12 3l-2 2l4 1l3 -3l9 2l21 1l6 3l21 1l6 -4l13 -2zM236 329l7 7l4 0l0 -6l-6 -2zM119 329l7 1l2 2l0 3l12 2l0 -5l3 -1l-10 0l-8 -3zM105 325l0 4l5 2l4 -1l-2 -4zM811 324l-6 9l0 4l1 -3l6 -4zM158 328l7 4l1 -4l7 0l0 6l3 1l2 3l0 -3l-3 -2l-1 -6l-5 1l-8 -4l0 3zM70 324l0 5l10 1l5 4l-1 -5l4 -1l-5 -3l-8 2zM697 324l-10 -1l-5 4l-8 0l0 2l-5 5l14 -3l4 -4l6 0zM568 324l-2 -1l0 -3l-8 1l-15 8l-5 0l-4 2l-19 -2l-1 5l20 3l7 -2l18 -10zM805 323l4 -1l1 -2l-4 -1zM458 319l-1 -1l-2 3l2 0zM397 320l0 3l47 0l-4 -2l-7 1l-6 -4l-17 0zM626 317l-21 4l-1 6l10 0l6 -3l4 0l3 -2zM127 319l10 1l3 2l8 1l5 3l0 -5l-3 -2l-13 -2zM363 322l10 3l6 0l2 -2l1 -5l5 0l-10 0l-4 2l-10 -4zM208 319l9 -3l-8 -1zM515 319l21 1l7 -6l-3 0l-2 2l-7 -2l-13 1l-3 2zM731 312l-14 5l-6 4l-9 0l-1 2l9 1l2 -2l16 -2l4 -2zM692 310l-2 1l1 4l2 -2zM676 310l-5 3l0 2l3 3l3 0l-2 -4zM241 310l2 3l6 3l7 9l13 -1l8 3l8 0l7 4l7 0l3 4l4 -3l9 2l3 -2l9 1l1 -2l0 -6l-10 0l-3 2l-7 -1l-3 4l-5 2l-5 -7l-7 0l-4 -3l-18 -1l-12 -5l-3 -5l-1 3l-5 0l-1 -5zM105 312l4 4l6 0l3 -3l-9 0l-3 -4zM70 309l0 5l7 4l6 -2l6 1l-6 -5l-7 0zM13 309l1 3l4 -1l-2 -2zM571 308l-11 3l-6 0l-2 2l16 0l3 -1zM303 309l1 3l12 0l-4 0l-2 -2l1 -5l-4 0zM761 303l-2 1l1 4zM370 304l2 2l5 0l5 3l8 1l0 -4l-9 -3zM128 303l3 4l10 0l6 4l13 2l7 3l8 -1l3 4l0 -3l-5 -6l-9 0l-16 -4l-14 0l-3 -3zM213 305l7 2l4 -4l-6 -1l-4 1zM414 302l7 1l0 5l-2 1l19 1l3 -2l-1 -2l-17 -5zM252 299l2 4l7 6l10 4l24 1l3 -2l-1 -5l-2 -1l-7 4l-13 0l-11 -4l-8 -7zM122 297l-3 1l-2 3l3 0zM80 297l-1 4l11 4l1 -2l-2 -2zM106 296l2 4l4 0l0 -3zM7 295l1 6l8 1l-4 -5zM233 298l5 1l5 -4l-7 -1zM626 293l-14 7l-5 -1l-7 3l0 6l12 -2l4 -3l5 1l5 -2zM159 296l14 1l4 4l-1 -10l-6 0zM364 290l0 2l4 2l4 -2zM761 288l-2 2l-2 -2l-3 4l-7 1l-1 -2l-3 2l-14 0l-12 13l-8 4l-5 0l0 2l4 1l3 -2l7 -1l5 -5l13 -7l18 -2l7 -4zM226 290l-3 -2l-10 1l-1 3l7 1zM677 289l0 3l2 1l8 -1l3 2l0 -2l-5 0l-4 -5zM256 291l3 0l6 5l9 4l6 0l14 -4l8 1l3 -2l10 0l1 -4l-11 1l-7 -2l-4 2l-14 2l-11 -2l-8 -5l-2 0l0 3zM80 287l2 3l9 4l1 -1l0 -4zM685 286l1 3l4 0l-1 -3zM465 283l-8 3l8 2zM453 288l-2 -2l-16 -1l-15 -3l-21 6l-7 6l-14 0l4 3l12 0l13 -3l8 -5l36 2zM72 282l-1 4l2 -1zM134 285l-8 -5l-4 2l-16 0l1 5l11 0l4 -4l5 1l3 4l2 0zM226 282l6 2l3 -1l8 4l-1 -4l-7 0l-6 -5l-2 0zM562 279l-3 -2l-4 0l-7 4l-7 0l-4 2l-2 4l-5 -3l-13 0l0 5l18 0l1 -3l11 0l9 -4l6 -1zM364 280l12 3l10 -1l-3 -4l-4 -1l-14 0zM734 276l-9 3l-10 8l-4 8l-6 0l0 2l3 3l3 0l1 -3l10 -10l11 -7zM626 277l-1 -1l-8 8l-5 -1l-5 3l-7 -2l-6 4l-11 1l-6 3l-6 -1l-7 2l-4 3l-7 0l-7 3l-22 0l-8 3l-1 4l2 1l3 -2l14 -1l7 -3l18 0l3 -3l13 1l25 -8l7 -5l7 0l5 -2zM156 277l3 0l6 4l7 -1l5 2l0 -4l-7 1l-10 -3zM706 275l-2 5l5 1l2 -2l0 -3zM747 274l-5 4l-4 0l-1 3l3 0l6 -4zM581 276l4 1l3 -3l-5 0zM676 275l0 2l13 -1l-7 -3zM564 275l0 2l5 3l8 -2l0 -2l-3 -3zM694 272l-1 2l2 2l1 -3zM595 272l-2 1l1 2l2 -2zM255 276l18 2l8 3l9 -1l7 2l0 -5l-9 0l-8 -3l-5 0l-5 -3l-5 1l-8 -2l0 5zM761 269l-7 3l-2 5l2 1l7 -5zM396 275l-2 -2l0 -5l-1 2l-10 2l2 3l7 4zM403 274l46 0l4 -2l11 -1l0 -4l-14 1l-4 2l-16 0l-26 -3l1 6zM96 267l0 2l2 1l1 -2zM518 266l0 5l3 2l12 0l0 -8l4 -1l-5 0l-3 2l-4 -2l-1 2zM157 267l6 1l0 -3l-3 -1l0 2zM625 263l-9 3l-3 4l-6 3l7 -2l5 1l1 -2l-2 -3l2 -2l5 1zM224 263l0 4l-2 1l17 5l0 -6l-5 0zM740 266l-3 0l-1 -4l-3 0l-6 4l-6 1l-6 4l-2 4l4 0l17 -10l4 2zM684 262l3 4l7 0l-2 -4zM703 260l0 4l2 2l4 0l0 -2zM71 260l0 8l22 15l-5 -16l-3 -3l-4 1zM77 267l5 -1l3 3l0 4l-6 1l-2 -2zM741 259l2 1l-1 5l2 -2l4 0l-3 0l-1 -4zM365 265l3 1l5 -6l-8 -1zM721 259l-3 -1l0 -4l-4 2l-3 4l5 1l2 -2zM103 254l2 8l9 6l7 0l18 6l3 -1l0 -2l-3 -3l-9 -1l-6 -4l-7 -1zM586 253l-15 5l-1 2l-6 1l3 1l0 3l8 -4l5 0l6 -5zM457 253l-6 3l-9 -1l-4 2l-9 0l0 5l11 -3l11 1l6 -2zM760 252l-7 4l-1 6l3 -2l5 0zM236 256l14 1l5 4l4 -3l11 3l10 0l14 6l9 1l3 2l9 1l0 -4l2 -1l-15 -2l-3 -2l-8 0l-9 -5l-5 0l-8 -4l-6 0l-7 3l-8 -4l-10 0l0 3zM403 255l4 3l5 1l1 -3l3 -1l-8 -4l-2 4zM391 251l-7 0l-9 4l5 4l4 0l7 -5zM172 250l1 7l3 1zM7 250l0 3l3 3l8 2l0 -5zM728 249l-5 2l2 1l0 4l1 -5zM686 249l12 11l-2 -5l-8 -6zM97 249l-2 0l0 5l3 -2zM307 249l5 1l-1 5l12 0l-4 0l-1 -6l-2 -1zM671 246l6 4l-3 -4zM534 246l-2 3l1 3zM521 246l-2 3l0 4l5 3l0 -8zM600 249l-3 -1l-1 -3l-5 0l-2 2l-8 0l6 2l7 0l4 2zM625 243l-3 0l-5 7l0 5l-2 2l-12 0l-5 6l6 -6l7 1l3 3l5 -1l2 -4l-1 -8zM71 244l1 6l6 -2l7 3l-1 -2l-5 0l-2 -2l0 -4zM102 241l5 7l15 4l5 4l10 3l1 -5l-18 -6l-4 0l-5 -3l-4 0zM695 240l-2 8l10 4l-7 -6l1 -6zM588 240l-4 2l-18 1l3 1l1 4l3 -3l5 0l9 -3zM424 240l5 3l0 4l6 -2l16 0l-4 -1l0 -5l-13 0l6 0l0 6l-7 0l-1 -5zM379 236l-13 5l0 5l12 -3l2 -2zM383 235l3 5l5 0l-1 -3zM241 241l2 2l8 -1l4 3l7 1l0 -2l-5 -3l4 -1l4 1l3 4l7 -1l4 4l9 1l5 3l7 0l3 3l2 0l0 -5l-6 2l-10 -7l-12 -3l-4 -4l-13 -2l-4 4l-7 1l-3 -5l-3 -1l0 5zM522 234l-3 1l0 4l3 -2zM0 234l0 4l2 0l1 -4zM606 233l-3 1l2 1zM106 232l0 4l4 0l0 -3zM7 232l0 8l11 1l-2 -5l-3 1zM391 233l1 2l7 1l4 3l1 -4l6 0l-11 -2l-3 -2l-3 0zM306 232l2 1l0 6l8 -1l-3 -1l0 -4l-2 -3zM298 239l1 -5l-3 -5l-5 3l-7 0l12 4zM166 229l-1 4l2 2l7 1l0 6l0 -3l2 -1l-1 -6l-4 0zM72 229l1 6l0 -2l3 0l0 -2zM676 228l0 3l4 5l5 -1l-3 -2l0 -3l-4 0zM223 228l-5 3l5 0zM321 227l-5 4l3 0l1 4l2 -1zM571 225l-2 0l-3 3l0 4l2 0l3 -3l1 1zM446 225l1 5l5 1l-4 -1zM418 231l14 -2l0 -4l-13 0zM558 223l-2 2l1 6l2 1zM143 223l-8 4l8 -1zM592 222l-5 2l3 1zM367 222l0 7l10 -1l-1 -4l-5 1zM272 222l-1 6l4 2l0 -3zM539 221l0 2l3 0l4 3l-5 3l4 0l2 2l0 4l3 0l0 -11l-3 -2zM277 223l2 6l3 0l4 -3l-1 -3l-4 1l-3 -3zM243 223l5 0l2 2l-1 2l2 1l3 -1l1 -5l3 0l-14 -1zM106 221l15 10l-1 7l4 0l6 4l1 -5l-4 1l-13 -17zM402 219l-1 6l2 2l1 -5zM380 220l8 0l1 2l4 0l4 5l1 -1l-2 -5l-6 -2zM559 213l2 6l2 2l3 0zM139 213l-2 0l-2 3l-5 0l5 1zM272 212l0 3l6 0l-1 -3zM174 212l-4 2l0 3zM86 212l1 2l3 0zM456 210l-5 -1l-7 3l3 0l2 3l7 -2zM408 211l-1 -2l-6 1l4 2zM150 209l-1 3l-5 0l1 5l3 0l2 -2zM107 209l-1 3l2 3l7 0l-4 -3l-1 -5zM293 209l1 6l7 2l2 5l14 -2l-11 2l-4 -4l3 -3l2 -7l7 -1l-2 -1l-6 0l-5 8l-4 0l-3 -6zM250 205l2 1l0 4l4 -1l0 -2zM291 203l-5 5l-5 -2l-7 0l0 2l6 0l7 3l2 -1zM390 202l-6 2l2 1l0 2l5 -2zM418 200l4 2l-1 -2zM113 200l-3 -1l-3 3l5 0zM243 197l-1 10l-2 1l2 0l0 -4l2 -1zM254 192l0 3l6 3l-1 -3zM285 198l3 1l4 -4l2 4l7 0l0 -3l-3 1l-6 -3l-2 -4l-2 3l0 4zM279 188l-1 2l2 2l2 -2zM133 188l3 5l-1 5l2 -6zM299 180l-7 1l-2 5l6 -2zM251 178l0 2l2 1l0 -2zM831 73l-5 4l2 1l0 3l6 -4l-3 -1zM824 61l1 4l4 -1l0 -3zM276 36l-6 4l5 1zM131 23l-2 4l3 -1zM254 6l-1 3l2 0z"/><path fill="#a4a4a4" fill-rule="evenodd" d="M796 1260l-3 2l2 1l0 4zM769 1259l-1 5l2 -3l3 6l3 0l-1 -7l-3 -2zM74 1257l3 1l-1 -2zM338 1238l1 4l3 -1l0 -3zM796 1235l-1 3l3 0l1 -3zM771 1234l0 5l-6 4l5 5l1 -5l5 1l2 -2zM247 1229l0 3l3 -1zM397 1228l-1 3l4 1l1 -3zM171 1226l0 5l4 0l0 -4zM96 1226l-1 3l4 1l1 -3zM487 1219l-1 3l2 2l3 0l1 -3zM794 1217l1 3l5 0zM771 1213l-2 5l3 2zM326 1207l-3 -1l-3 3l5 1zM812 1201l-3 2l1 2l4 -1zM246 1188l-1 1l3 2l1 -2zM171 1187l-1 3l3 1l0 -3zM322 1186l-2 3l2 2l3 0l2 -2l-1 -2zM488 1179l-1 3l3 2l2 -3zM813 1178l0 2l2 1l-2 -1zM305 1176l-2 0l-2 3l2 1zM76 1175l-2 1l1 3l2 -1zM776 1171l-1 1l2 2zM769 1162l-1 3l4 1l0 -2zM833 1160l-1 3l3 1l0 -3zM398 1148l-1 2l3 1l1 -2zM172 1147l0 2l2 1l1 -3zM812 1144l-4 1l0 2l4 0zM796 1144l-3 1l1 2zM336 1139l1 4l4 -1l-1 -3zM250 1131l-3 -1l-2 3l3 0zM398 1127l-1 3l3 1l0 -3zM777 1124l0 2l2 1zM337 1118l-1 3l4 1l1 -3zM302 1116l-1 3l2 0zM325 1106l-3 2l0 3l4 -2zM490 1101l-3 1l0 4l4 -1zM801 1096l0 4l2 1l0 -4zM299 1096l2 4l4 -2l-2 -3zM76 1095l-2 1l1 4l3 -1l0 -3zM175 1089l-2 -1l-1 3l2 0zM246 1087l1 4l4 -1l-1 -3zM325 1085l-4 2l1 3l4 -1zM491 1081l-4 2l1 3l3 -2zM299 1079l0 2l5 -1l-1 -2zM73 1076l1 4l3 1l2 -2l-2 -3zM768 1068l-2 1l1 2zM46 1064l0 5l2 1l0 -4zM171 1047l-1 3l4 1l1 -3zM338 1038l-1 2l3 1l1 -2zM42 1037l0 2l4 0zM812 1036l0 4l4 -1l-3 0zM768 1032l-3 2l0 4zM400 1029l-2 -1l-1 3l2 0zM172 1026l-1 5l3 0l1 -4zM96 1025l1 4l4 -1l-1 -3zM811 1017l-1 3l3 0l-2 -1zM299 1017l1 3l5 -1l-1 -3zM323 1007l-1 3l3 1l2 -3zM765 1004l0 4l3 2l0 -3zM39 1002l-1 2l3 3l0 -3zM800 1000l-2 0l0 4zM488 1000l0 6l4 0l0 -4zM300 998l0 2l4 0l-1 -3zM74 996l0 4l5 -1l-1 -3zM171 989l1 2l4 -1l-2 -2zM323 985l-2 3l1 2l4 0l0 -3zM798 970l0 2l4 1zM42 966l-2 2l0 8l4 2l0 -2l3 -1l4 -5l-2 -2zM247 948l-1 4l3 1l1 -4zM170 950l3 1l3 -3l-4 -1zM812 944l0 4l4 -2l-3 0zM340 939l-3 1l0 3l3 -1zM42 934l1 7l7 4l7 1l-10 -10l0 -2zM394 929l5 3l3 -1l-3 -4l-3 0zM325 926l-2 1l1 2zM53 921l-2 0l-1 4l-4 2l5 1l2 -2zM336 919l1 3l4 0l-1 -3zM301 916l-2 3l4 1l1 -4zM28 916l0 2l9 2l7 6l-7 -9zM489 901l-1 3l3 0l1 -2zM48 901l-10 2l-1 2l8 -1zM304 898l-3 -1l-3 2l1 2l4 0zM78 895l-2 0l-1 2l2 1zM321 889l3 3l3 -1l-1 -3zM644 881l4 1l-1 -2zM39 879l0 3l4 3l6 -4l7 0zM402 867l-2 -1l-2 1l0 2l3 0zM56 861l-3 1l0 3l3 -2zM32 857l6 7l5 -1l0 -3l-5 0zM74 857l3 1l-1 -2zM49 849l1 2l5 -1l-2 -3zM485 845l0 3l8 -1l-1 -3l-3 -2zM338 840l-1 3l3 1l1 -4zM302 837l-1 2l3 1l0 -2zM654 830l-5 -1l-2 3l-3 0l0 4l2 1l3 -5l5 0zM401 830l-3 -2l-3 3l5 1zM322 827l0 2l2 1l1 -3zM95 827l0 3l3 1l-3 -1zM53 824l-3 -2l-1 4l-6 -1l-4 3l0 2l5 3l4 -6l3 -2l2 1zM830 822l5 3l0 -4l-2 -1l-1 2zM595 819l-4 2l3 0zM33 819l10 2l2 -1l-4 -2zM301 816l-1 3l3 2l1 -3zM608 813l-4 1l-1 2l5 -1zM170 807l3 5l3 0l-1 -4zM323 805l-2 5l4 1l1 -4zM816 802l-2 -2l-1 3zM492 800l0 2l-3 1l2 0zM30 801l3 2l0 -2l2 -1zM483 799l3 2l0 -3l4 -1l-6 0zM300 795l0 4l3 1l3 -2l-2 -3zM53 797l-4 -3l-7 1l0 4l-2 1l3 1l0 3l4 -1zM658 791l-3 0l-9 6l-6 -2l-5 3l2 2l5 0l8 -3zM107 790l0 2l5 1zM30 787l-1 2l2 1l1 -1zM250 786l-3 0l-2 2l2 4l4 -3zM318 784l1 3l3 2l3 0l2 -3zM485 786l5 0l2 -3l-5 -1zM637 781l3 1l-1 -2zM109 778l1 2l4 -1l-3 -2zM73 775l3 4l4 -1l-3 -3zM55 774l-4 0l-3 2l2 0l1 3zM397 768l-1 3l4 1l1 -3zM323 766l4 3l0 -2zM648 765l1 6l8 0l-4 -1zM28 752l1 2l2 0l4 -4l6 1l-5 -3l-6 0zM401 748l-2 -1l-3 4l4 1zM362 747l1 2l4 -1zM645 749l3 1l3 4l3 0l2 -6l-3 -2zM94 747l2 3l4 0l-1 -4zM59 753l-6 -7l-5 6l-4 0l6 0l2 3l4 0zM658 738l0 3l2 0l0 -3zM492 739l-1 -1l-5 2zM301 738l0 2l2 1l0 -3zM36 732l0 2l8 0l-5 0zM34 728l3 1l3 -2l-5 -1zM401 728l-1 -3l-10 1l8 4zM324 725l-2 2l1 3l2 -1zM99 725l-3 1l1 4l3 -2zM405 725l4 -2l-3 0zM503 722l-1 -1l-4 3l3 0zM337 719l0 2l2 1l2 -2zM656 722l-4 0l-1 -4l-2 1l5 5l-3 4l-9 1l-5 -2l-4 2l21 0zM298 719l6 3l-1 -5l-3 0zM809 714l-5 3l5 -1zM173 710l-2 0l-1 2l2 0zM639 706l-11 8l4 -1l4 -5l3 0zM396 709l23 0l-8 0l-13 -3zM322 706l1 4l4 -1l-1 -3zM431 706l5 -1l-3 -1zM62 703l-1 4l4 0l1 -2zM185 699l-2 2l1 1l2 -1zM80 697l0 3l6 2zM298 696l4 4l4 -2l-4 -3zM454 691l3 3l4 0l-4 -3zM398 687l0 2l5 2l-3 -4zM247 687l3 0l1 3l-1 -3zM324 686l-2 2l1 2l3 -2zM32 682l3 1l0 -2zM76 676l-2 1l0 3l3 0zM588 674l-5 2l2 1zM455 676l-1 -2l-11 1zM56 675l2 3l8 0l-5 -4zM196 673l5 2l-1 -2zM719 674l6 -2l-4 0zM182 668l10 4l-7 -4zM507 667l-2 3l2 -1zM396 668l0 3l5 0l-1 -4zM322 667l1 2l3 -1zM170 666l2 2l5 -1l-4 -2zM738 665l1 2l3 -1l-1 -2zM486 660l2 4l3 -1l0 -2zM196 660l2 2l5 0l-2 -2zM26 661l8 1l0 -2zM184 655l4 3l3 0l-1 -2zM714 656l-4 -2l-4 5l-8 4l11 -3zM61 653l-2 6l-4 -1l1 5l3 0l3 -3zM722 651l-4 0l-2 3l2 1zM249 648l-3 1l1 4l3 -1zM399 647l-2 3l4 2l1 -4zM204 647l6 2l-4 -3zM190 644l4 3l6 -1l-3 -2zM97 644l0 4l4 0l1 -2zM567 642l4 3l5 1l-5 -4zM664 635l1 3l1 -2zM303 634l-1 3l2 -1zM61 631l-3 1l1 2zM632 631l-3 -1l-3 3l-7 0l-4 3l-4 0l-7 3l-13 8l-9 1l11 0l22 -12l8 0zM396 630l2 2l3 -1l-1 -3zM325 627l-2 0l0 3zM175 628l-2 -1l-2 4l3 0zM30 627l-1 2l3 1l0 -2zM582 625l-9 4l7 1l2 -1zM247 624l8 1l-1 -2zM592 626l0 -4l-8 2l3 0l1 4zM181 622l0 2l8 3l2 -1l-6 -4zM336 622l5 1l-1 -2zM615 619l-16 2l0 4l6 0l3 -2l7 -1zM73 616l5 1l1 -2l-5 -1zM411 610l0 2l6 -1l-2 -2zM177 605l0 3l2 0l1 -2zM299 597l0 2l5 1l-1 -4zM485 594l-7 2l6 1zM397 591l1 2l3 -1l-1 -2zM669 589l-1 2l3 2l0 -3zM16 589l0 2l7 5zM169 588l3 3l9 0l0 -2l-6 2zM62 587l0 3l3 2l0 -3zM551 582l-5 3l4 -1zM7 581l2 3l3 0l-2 -3zM73 580l1 2l3 0l-1 -2zM492 577l6 -1l-5 -1zM188 576l5 2l3 -1l-1 -2zM668 572l-2 1l0 3zM167 569l3 4l7 0l3 2l2 -1l-9 -5zM277 564l2 2l3 0zM519 560l3 1l4 -2zM180 560l2 2l16 1l0 -2l-4 -2zM473 561l-3 -3l-10 3l-7 -2l-6 1l5 2zM499 558l0 3l7 1l9 -2l-2 -2zM351 556l2 3l6 -1zM810 555l-1 3l2 0zM631 554l-4 1l-1 3l2 0zM609 554l-3 -1l-5 5l3 0zM73 552l1 3l3 2l7 1l-2 -3zM273 552l2 1l3 -2zM237 552l6 2l0 -3zM294 548l-4 1l3 1zM748 547l-6 0l-7 3l5 1zM316 550l3 3l14 0l5 6l4 0l3 -3l-9 -1l-13 -8l-5 1zM223 547l0 4l9 0zM64 546l0 2l4 3l1 -3zM193 546l6 2l14 0l-4 -3zM717 544l-3 0l-5 4zM362 545l16 4l8 0l-15 -4zM177 544l0 3l7 -1zM104 544l0 2l2 -1l9 3l-2 -2zM466 544l-5 -1l-2 2l-12 0l-3 2l-8 1l10 1l6 -3l5 2l4 -3zM253 541l1 3l7 3l-3 -4zM510 542l0 2l7 2l8 0l2 -2l0 -2l-6 -2zM277 539l3 1l3 -2zM624 539l-18 -2l-10 7l-4 1l-3 3l0 2l4 -1l5 -5l11 -4zM77 541l15 2l3 2l0 -2l-3 -3l-10 -3l-1 4zM329 536l3 3l0 -3zM306 534l0 2l13 -1zM223 534l13 1l4 2l5 -1l-8 -2zM64 532l0 2l7 3l0 -2zM105 531l0 2l6 1zM188 530l1 2l3 0l-1 -2zM199 530l6 4l4 -1l-4 -3zM762 526l-9 1l-11 9l-12 3l-2 2l14 -4zM405 528l-3 -2l-4 0l-9 4l-1 2l14 -1zM475 527l0 2l2 1l4 -1l-1 -4zM615 525l-6 -2l-4 2l-5 0l-4 3l-5 -1l-3 2l7 0l10 -4zM331 523l2 2l4 -1zM631 522l-3 2l3 1zM237 520l2 2l3 -1zM84 520l0 3l3 2l1 -3zM298 521l4 2l11 -1l-7 -1l-3 -2l-4 0zM105 518l6 5l5 1l-8 -6zM503 517l0 5l2 4l3 1l-4 -5zM586 514l-4 2l3 0zM426 513l-32 0l-10 3l-8 0l-5 3l-4 -1l-4 -4l-2 5l7 4l6 0l14 -7l19 -1l6 2l4 -2l6 0zM20 512l1 2l2 0zM763 511l-12 1l-11 10l0 2l10 -8zM814 512l3 0l-2 -2zM82 508l1 2l6 2l0 -3zM479 507l-3 2l2 0zM172 507l0 2l2 1l1 -3zM318 506l-6 3l6 0zM576 503l-20 0l-10 4l-20 4l11 0l23 -6zM7 502l1 4l10 5l-3 -4zM104 503l5 -1l-4 -1zM404 502l4 1l3 -2l-4 -1zM22 499l1 4l2 1l0 -3zM84 495l2 2l3 0l-2 -2zM252 494l2 4l10 -2l-6 1zM77 494l0 2l3 -1zM125 492l5 3l7 0l7 4l8 1l-1 -2l-10 -4zM351 492l17 2l22 9l9 0l-27 -11zM341 491l1 2l3 0l-1 -2zM107 488l0 2l9 1zM7 488l3 4l5 2l-2 -5zM569 486l-4 -1l-18 2l-17 9l4 0l9 -4l23 -3zM152 484l0 3l13 3l4 -1l3 2l5 -1zM65 484l0 4l2 0zM697 481l-2 0l-5 7zM112 477l10 4l8 1l0 -3zM812 476l-9 2l0 2l9 -1zM388 476l-14 5l-20 0l26 0l6 -2zM701 476l0 2l29 0l-7 0l-4 -3l-13 -1zM74 475l2 2l7 0l8 5l-3 -4l-7 -4zM25 474l-5 2l-1 2l5 0zM544 472l8 2l10 -1l-4 -2zM538 472l-4 0l-1 2l3 1l2 -1zM262 471l3 2l4 0l-4 -3zM401 468l-3 1l0 4l4 -3zM252 466l0 3l3 -1l0 -2zM373 466l-7 -1l-7 2l6 2zM708 463l-14 3l-10 9l2 0l4 -4l9 -5l9 -1zM447 465l5 1l9 -2l-11 -1zM173 463l1 2l8 0l-3 -3zM334 462l3 3l5 2l2 -1l-4 -6zM75 459l10 2l-2 -3zM512 461l25 -1l6 -2l-29 -1l-2 1zM298 458l0 2l7 -1l-2 -2zM124 456l3 4l1 -4zM736 455l-6 4l0 4l6 -6zM700 452l-4 2l4 1zM686 453l1 2l6 -1l-2 -2zM630 451l-4 2l-9 1l-10 7l23 -7zM273 450l4 3l3 0l-1 -2zM812 449l-2 4l2 -1zM463 449l-10 0l-8 3l16 -1zM361 449l-2 -1l0 3l-2 1zM353 448l-7 2l2 2l5 -1zM747 447l-5 2l-2 3l4 -1zM254 447l0 4l11 -2zM87 446l5 2l0 -2zM322 446l1 2l6 -1l-4 -3zM524 441l-5 1l0 3l5 0zM529 440l1 4l6 0l3 -2l-3 -2zM739 439l-3 0l-18 9l-12 2l2 1l0 2l5 0l13 -5zM628 439l-3 -1l-3 2l-6 0l-11 4l-3 3l2 1l17 -7l5 0zM118 437l5 4l7 1l8 4l1 -3l-5 0zM299 437l1 4l6 1l-3 -6zM192 438l7 1l-2 -3l-3 0zM696 436l-1 -1l-3 3zM362 431l0 4l5 -1zM157 431l2 4l7 4l-1 -5zM127 429l5 3l19 -1l-4 -2zM521 428l-3 1l0 3l3 -1zM705 428l0 2l11 0l-2 -3zM175 426l-4 1l-1 3l4 1l2 -3zM813 425l0 3l2 1l-2 -1zM530 426l0 2l14 -1l-3 -2zM331 429l9 -2l0 -2l-7 0l-2 1zM312 425l5 3l0 -2zM230 424l10 2l3 3l17 7l20 3l-14 -3l-12 -7l-13 -3l-5 -3zM201 418l-4 4l-6 -3l-4 0l5 1l4 6zM78 417l-2 -1l-1 3l2 0zM512 414l3 3l11 -2zM717 414l4 1l-1 -2zM544 414l-4 -1l-11 2zM243 413l2 2l4 0l4 3l6 1l6 4l1 -1l-2 -4l-10 -3l-6 -4zM600 410l-18 5l-8 6l8 -4l14 -3zM337 410l0 2l3 2l0 -4zM357 414l9 0l2 3l3 1l5 -1l2 -2l-4 -4l-7 1l-5 -3l-4 1zM308 409l2 2l6 1l0 -3zM112 407l16 9l-8 -6zM572 404l-10 4l-3 4l2 1l12 -5zM184 404l0 7l2 2l3 0l0 -4zM72 400l2 2l3 0l-1 -3zM732 396l-3 -1l-11 4l-9 0l11 0l5 2zM667 398l4 -1l1 -2l-4 0zM361 396l12 1l18 5l20 -1l-8 -1l-5 2l-25 -7zM603 395l-2 -1l-10 4l0 3zM742 391l-4 1l-1 3l2 0zM286 391l4 3l5 1l0 -3zM77 391l13 4l-1 -2l-6 -2zM327 392l-3 -2l-11 2l-3 -1l-4 1l0 4l8 0l8 -3l3 0l2 2zM219 390l0 3l3 0zM569 386l-9 4l-1 3l10 -3zM410 386l0 2l6 -1zM708 385l-8 4l8 -1zM371 383l2 2l8 2l0 -3zM607 383l-4 -1l-4 1l0 2zM333 382l1 2l4 1l-1 -2zM202 382l2 5l5 3l0 -3l2 -1l-6 -1zM337 378l5 2l-2 -2zM319 375l0 3l3 -1zM223 375l0 3l4 -1zM735 373l-12 6l2 1l0 2l12 -5l-2 -1zM274 373l6 5l13 1l0 -4l-5 1l-4 -2zM144 372l5 4l4 0l-2 -2zM568 371l-3 0l-5 3l6 1l2 -1zM107 370l1 4l6 1l0 -2zM379 371l5 0l5 3l0 -3l3 -1l-10 -1zM757 369l-5 -1l-7 3l-7 0l2 0l2 4l7 -4zM405 368l1 5l16 0l4 -3l6 0l-4 -1l-17 2zM206 368l0 4l3 2l6 1l0 -2l2 -1l-6 -1zM601 368l-14 0l0 3l14 -1zM469 365l-11 -1l-10 3l-2 2l10 -2l13 1zM533 364l1 2l4 0l0 -2l-2 -1zM352 362l0 5l2 2l7 -3zM316 362l9 3l0 -2l-2 1l-3 -2zM165 362l3 5l0 -3zM549 361l-5 3l5 0zM112 360l6 2l-2 -2zM7 360l0 3l4 2l11 2zM160 361l-1 -2l-1 3l-3 0zM737 357l-2 -1l-7 3l-4 4l-11 4l-8 6l-16 5l19 -3l10 -6l6 -6l6 -1zM271 356l-1 2l2 1zM213 355l-1 4l12 4l-2 -3zM148 355l3 4l0 -4zM712 353l-5 0l-3 3l-17 2l-2 2l-4 -2l-6 1l3 1l0 3l8 0l7 -4l5 2l6 -5l5 0zM433 353l-1 1l2 1l1 -1zM138 351l4 2l-1 -2zM762 349l-18 5l-2 2l3 1l7 -3l7 0l2 -1zM611 349l-9 1l-11 4l-3 -1l0 4l3 -2l6 0l4 -3zM468 348l-12 1l-6 3l-10 2l11 1l12 -4l5 1zM10 348l11 6l0 -3l-7 -3zM514 347l0 3l5 1l16 0l0 -3zM308 346l2 2l2 -1zM358 344l-1 8l4 0l1 -4zM163 343l-1 2l4 2l0 -2zM99 343l0 2l5 1l6 -1l-5 -3zM739 341l-10 4l-5 0l-7 4l0 2l22 -8zM687 342l-9 0l-2 2l-6 1l-1 2l11 -1zM557 338l-6 4l0 4l9 -4l-3 -1zM442 338l6 1l1 -2zM154 337l-1 3l2 1l1 -3zM750 336l-6 2l2 1l0 2l4 -2zM264 338l1 3l7 -1l9 2l0 -3l-7 -3zM708 334l-6 0l-4 4l-6 -1l-2 3l6 1l6 -5l5 0zM627 332l-11 5l-15 0l-13 -3l-1 4l24 1l16 -5zM395 333l8 1l-2 -2zM727 331l-5 3l5 0zM515 331l1 2l6 2l15 0l6 -3l-7 -1l-7 2l-5 -2zM360 331l0 5l2 1zM130 332l0 2l4 -1l6 2l0 -3zM676 328l1 3l6 -2zM327 327l-8 0l-2 2l-6 1l4 1l4 -2l6 3l2 -2zM80 327l4 4l0 -2l2 -1zM291 327l1 2l3 0l0 -2zM161 325l-1 3l5 3l0 -2l2 -1zM281 324l6 2l-2 -2zM566 321l-10 2l-5 4l3 0l7 -4l5 0zM626 319l-3 0l-2 2l-16 1l0 4l6 0l9 -4l6 0zM255 319l2 5l8 -1l-3 -3zM140 320l8 2l5 3l-1 -4l-9 -2zM429 321l-3 -2l-3 1l-6 -2l-8 2l-12 0l0 2l5 1l5 -2l14 0l6 2zM363 319l4 3l8 2l3 -1l-5 -1l-6 -4zM519 318l6 1l4 -2l-8 -1zM731 314l-16 6l16 -3zM164 312l5 3l4 -2l-2 -2zM70 310l0 2l8 4l3 -2l-4 0zM571 309l-8 2l6 1l2 -1zM148 309l3 2l9 0l-9 -3zM306 308l4 2l0 -3zM379 305l3 3l8 1l-1 -2l-5 -2zM218 304l1 2l2 -1zM421 303l0 5l12 -1l-2 -2zM612 303l-7 -2l-5 3l0 3l10 -2zM523 302l6 1l-1 -2zM254 300l1 3l11 7l4 0l-6 -2l-3 -4zM82 300l5 3l0 -2zM554 299l3 1l0 -2zM7 296l0 3l4 2l2 -1l-1 -2zM748 296l4 -2l-3 0zM744 294l-16 1l-6 7l0 2l3 -1l4 -5l2 1l5 -3l7 0zM290 294l14 1l4 -2l7 2l0 -3l-10 1l-7 -2zM84 289l8 4l0 -3zM259 288l1 3l10 6l10 0l-1 -2l-8 -1l-7 -5zM719 287l-3 2l0 2l3 -2zM601 287l-5 2l-6 0l-9 4l-15 1l-2 2l18 0l16 -6zM528 286l-11 0l5 2zM432 286l-12 -3l-3 2l-8 1l-6 4l-4 0l-4 3l0 2l5 0l8 -3l8 -5l13 1zM110 284l2 2l5 -1l-1 -2zM731 279l-4 0l-6 5l0 2zM557 279l-7 3l-7 0l-1 2l6 0zM294 279l3 2l0 -3zM574 275l-3 -1l-5 3l6 2l2 -1zM719 271l-4 2l2 1zM257 271l1 5l7 -1l5 2l13 1l-12 -5l-8 0zM405 269l0 4l6 -2l23 3l6 -1l-2 -2zM133 269l7 2l-3 -2zM721 270l4 -2l-3 0zM521 268l1 2l3 0l-1 -2zM464 268l-5 2l5 0zM533 266l-1 2l-5 -1l0 3l4 1zM85 266l0 7l-3 1l8 5l0 -3l-4 -5zM119 265l3 2l4 0l-2 -2zM732 264l-2 0l-2 3zM224 264l0 3l5 0l10 5l0 -4l-8 0l-3 -3zM160 264l0 3l3 0l0 -2zM290 263l16 6l9 0l0 -2l-8 -2l-9 0l-2 -2zM72 261l-1 6l3 0l3 3l0 -3l3 -1zM429 261l5 -1l1 -2l-6 0zM105 257l0 3l3 3l7 2l-2 -3zM582 257l-7 0l-2 1l0 2l6 0zM265 256l5 4l10 -2l-9 -3zM760 254l-5 1l-2 5l3 -2l3 2zM238 253l1 3l8 -1zM405 255l8 3l1 -3l-6 -3zM125 252l2 3l10 3l0 -3l-5 -1l-2 -2zM727 250l-3 1l1 3zM521 249l-1 3l2 1zM671 246l3 2l-1 -2zM278 244l1 2l3 -1zM72 245l0 2l5 0l0 -3zM256 243l5 2l-2 -2zM695 242l-2 5l4 2l-2 -2zM585 242l-13 1l6 1zM427 241l2 2l0 3l3 -1l0 -4zM441 240l0 4l6 -1l-1 -3zM378 239l-3 -1l-6 5l-3 0l0 2l3 -2l7 0zM259 239l7 1l2 3l6 -1l-1 -2l-6 -2zM385 236l2 3l2 0zM243 236l1 4l1 -3zM400 235l3 3l0 -2l2 -1zM7 233l0 5l2 1l1 -2zM308 232l0 6l7 0zM678 231l1 3l4 0l-1 -3zM165 232l4 1l-2 -2zM321 229l-3 2l2 2l2 0zM419 230l11 -1l2 -2l-13 0zM375 225l-1 2l2 1zM278 224l1 4l3 0l2 -2zM367 223l0 5l2 0l1 -2zM255 222l-3 1l1 2zM539 221l6 2l3 3l-2 3l-3 0l2 0l3 5l1 -10zM402 221l-1 2l2 3zM391 220l6 5l-2 -4zM561 216l1 3l3 1zM146 212l0 3l2 1l1 -4zM305 210l-3 4l-5 1l6 1zM454 210l-3 -1l-5 3l3 2l3 -4zM108 209l0 5l4 0l-2 -2l0 -3zM290 205l-3 3l-11 -2l-2 1l6 0l4 3l3 0zM391 204l-5 0l0 2zM290 192l-2 2l0 3l-2 1l4 -2zM279 188l-1 2l2 1l1 -1zM298 180l-3 0l-3 4l2 0zM833 77l-2 -2l-2 2zM829 62l-4 2l4 0zM276 36l-5 3l5 -1z"/></g><path fill="#000000" fill-rule="evenodd" d="M816 1266l1 3l7 -2l4 3l4 0l-8 -7zM245 1259l2 3l3 -1l0 -3zM96 1254l-2 2l0 4l7 1l1 -5l-2 -2zM815 1251l10 0l7 2l-7 -5l-5 0zM791 1256l0 -4l-6 -4l-11 6l12 -2l2 2l0 5zM97 1236l-1 3l3 1l1 -3zM815 1236l9 0l5 3l4 0l-2 -3l-7 -4zM775 1233l3 2l4 -6l6 -1l3 -5l-2 0l0 2l-4 3l-4 0l-7 -5l-1 2l2 2zM172 1217l0 3l2 0l1 -2zM815 1214l0 2l9 -3l4 4l4 1l-2 -9l-6 -6zM775 1195l3 4l1 7l6 0l2 -8l2 -2l4 0l-5 -1l-3 6l-3 1zM94 1195l1 5l4 1l3 -2l0 -3l-2 -2zM491 1192l-2 -1l-2 2l1 2l2 0zM815 1189l9 -5l6 4l4 0l0 -3l-10 -5zM93 1176l0 3l2 2l6 0l2 -2l0 -3l-2 -2l-6 0zM835 1169l-11 -6l-11 7l2 1l8 -4l8 3zM248 1158l-2 1l1 3l3 -1zM102 1156l-3 -2l-4 1l-1 5l7 1zM815 1152l0 2l9 -2l7 2l-6 -5zM774 1149l2 8l-4 2l3 3l1 4l12 3l4 4l2 -2l0 -4l-7 -7l0 -4l7 -3l-4 -1l-7 5l1 5l-2 2l-3 0l-2 -2l1 -9l-1 -3zM816 1136l1 2l7 -1l9 4l-9 -8zM771 1120l1 8l4 -8l8 6l11 0l-1 -2l-9 -1l-7 -5l-5 -1zM96 1115l1 3l3 -1l-1 -2zM816 1118l1 2l8 -1l4 3l4 0l0 -2l-9 -7zM833 1103l-4 -5l-4 -2l-6 2l-5 4l4 1l8 -2zM772 1094l1 9l4 1l8 -2l9 9l1 -1l-1 -9l-3 1l-11 -3zM94 1095l0 5l8 0l0 -4l-2 -2zM834 1084l-10 -5l-10 8l3 0l7 -4l5 3l4 0zM246 1079l1 2l3 0l-1 -3zM94 1075l-1 2l2 4l6 0l2 -2l-1 -4l-2 -1zM771 1078l2 3l12 0l8 2l2 -3l0 -9l-5 0l-8 -5l2 6l-1 3l-5 3zM832 1067l-8 -5l-5 2l-4 4l0 2l8 -3l8 2zM246 1059l1 3l3 -1l-1 -2zM95 1055l0 5l6 0l0 -5zM795 1043l-2 -1l-5 4l-6 0l-5 3l-5 -3l0 14l5 -1l12 2l5 -9zM816 1046l0 3l7 -2l6 3l4 -1l0 -2l-9 -9zM816 1024l8 -3l5 3l4 0l-7 -6l-4 0zM173 1017l-1 1l2 1l1 -1zM95 1015l2 4l3 -1l-1 -3zM488 1012l0 3l4 0l-2 -3zM775 1007l0 6l-4 2l0 12l6 -2l7 7l7 -12l3 2l1 4l0 -14l-8 3l-2 6l-3 2l-8 -8l7 -5zM815 1008l3 1l7 -2l8 2l-8 -5zM95 994l-2 5l2 2l5 0l2 -2l0 -3l-2 -2zM815 993l9 0l3 2l5 -1l-8 -5zM245 980l1 2l5 -1l-2 -3zM795 975l-2 1l-1 6l-12 -1l-9 -5l2 8l-2 11l3 0l6 5l6 -1l4 -4l-2 -5l7 0zM94 975l1 6l6 0l2 -2l0 -3l-2 -2zM815 977l5 1l4 -2l4 3l5 0l-9 -9zM247 959l1 3l1 -2zM94 956l0 3l2 2l4 0l2 -2l-2 -4zM795 954l-3 4l-2 0l-3 -3l-1 -4l-2 0l-8 9l-5 -1l0 8l9 -3l4 -5l10 5zM792 947l-2 0l-1 2l2 0zM773 947l-2 0l0 4l2 -1zM833 951l-9 -8l-7 9l-2 6l9 -6l4 3l4 0zM97 937l-1 1l3 2l1 -1zM815 929l1 2l8 -4l8 3l0 -2l-7 -5l-5 1zM795 920l-6 13l-9 5l-9 -2l0 5l6 -1l6 2l12 -5zM172 916l-1 4l4 0l1 -3zM100 916l-3 0l-1 3l2 1zM46 912l-1 3l3 1l1 -1zM815 910l9 0l7 4l3 0l0 -2l-10 -6zM795 906l-3 3l-6 1l-5 7l-10 0l0 4l12 0l7 -8l5 -1zM793 899l2 5l0 -5zM94 896l1 5l7 -1l-1 -6zM814 895l10 0l3 2l5 0l-7 -6zM796 878l-2 -1l1 9l-3 4l-2 0l-5 -6l-9 -2l-1 4l-5 3l3 7l6 4l4 0l3 -7l8 0l2 -3zM814 881l17 0l-6 -5l-6 1zM94 875l1 6l6 0l2 -2l0 -3l-2 -2zM815 866l9 -2l9 4l2 -1l-10 -7l-6 2zM245 858l1 4l5 -1l0 -3zM796 855l-3 1l-8 10l-7 -7l-8 -1l0 3l5 0l3 3l-1 4l-7 1l0 5l6 -1l8 5l12 -16zM94 857l2 4l4 0l2 -2l-2 -4l-5 0zM815 848l6 1l3 -2l8 3l0 -2l-7 -5l-5 1zM171 837l0 3l4 0l-1 -3zM491 833l-2 -1l-1 3l2 0zM796 830l-5 5l-9 -2l-6 -5l-6 4l0 4l6 3l4 10l4 0l3 -5l9 -8zM815 827l2 3l8 -1l6 2l0 -2l-7 -7zM796 819l-3 3l2 4zM96 815l0 4l4 1l1 -5zM46 812l-1 3l4 1zM831 805l-7 -3l-7 4l-2 4l8 -2l7 1zM770 797l0 6l5 -2l3 1l-3 4l0 5l3 3l8 0l2 2l3 0l1 -4l5 -4l-1 -5l-7 -4zM782 805l4 2l-2 4l-5 -1zM94 795l0 4l2 2l4 0l4 -3l-2 -4l-5 -1zM820 786l0 2l4 -2l5 4l6 -1l-2 -3l-8 -3zM244 779l2 3l6 -1l0 -2l-2 -1zM92 777l3 4l8 -1l-1 -4l-4 -2zM769 773l0 10l5 4l2 6l3 -1l0 -3l3 -4l10 3l5 -6l-1 -3l-7 5l-5 -4l2 -5l-4 4l-8 0zM817 770l8 0l3 2l6 -1l-9 -5zM247 759l-1 3l3 1l1 -2l-1 -2zM797 756l-18 4l-9 -2l-1 5l4 0l5 7l13 -1l2 -6l4 -3zM99 755l-3 1l0 5l5 -2zM815 753l3 2l7 -1l3 2l5 0l-9 -7zM39 743l1 4l4 2l3 -1l-6 -2l2 -3zM248 741l-1 1l2 1l1 -1zM797 738l-5 5l-7 -2l-11 1l-5 -2l0 10l4 1l5 -2l5 3l3 -4l11 -3zM171 737l2 4l3 -1l-2 -3zM52 739l-3 -3l-7 1zM814 737l10 0l10 4l-10 -8zM486 731l2 3l4 -2l-2 -2zM32 719l4 3l9 1l0 -3l-8 1zM812 721l13 0l3 3l7 2l0 -3l-8 -3l-3 -3l-7 1zM96 714l-1 3l2 3l2 0l3 -5zM654 711l-3 0l-4 3l-6 0l-1 2l8 -1zM798 705l-1 -1l-2 2l-1 6l-6 4l-1 8l-4 0l-5 -9l-3 0l-3 6l-3 2l0 5l9 1l3 5l4 1l12 -12zM33 698l2 5l8 5l4 -1l0 -6l-10 -1l-3 -3zM650 696l1 2l4 0l0 -2zM93 696l0 4l9 1l0 -5l-2 -2zM831 696l-7 -7l-10 13l0 2l5 0l5 -4l7 2zM49 690l0 3l3 2l3 0l2 -2l-5 -4zM74 688l3 1l-2 -2zM777 686l1 3l1 -2zM656 684l-3 0l-8 9zM798 682l-4 2l0 3l-3 3l-4 1l1 6l-3 5l-3 -7l-7 -2l-6 -7l-1 17l6 -8l4 0l3 4l-2 6l1 2l9 0l2 -4l7 -5l0 -3l-4 -3l4 -4zM246 681l4 0l1 -2l-5 -1zM93 677l1 4l8 -1l0 -4l-3 -2zM817 674l0 2l8 -5l9 4l-9 -8zM798 666l-4 0l-7 4l-10 -1l-9 5l0 4l11 -4l11 7l8 -4zM55 668l-3 -4l-2 0l-4 6l-8 2l-5 -1l0 3l7 0l7 3l1 -2l-2 -5zM640 664l-1 2l2 5l-2 3l14 -2l-6 -3l-1 -5zM831 655l-8 -2l-5 3l-2 4l8 -4l6 1zM338 649l2 2l1 -1zM798 652l-4 -3l-1 -3l-5 0l-6 4l-14 2l0 2l6 0l3 3l-3 6l6 1l2 -1l-2 -6l2 -2l2 0l2 4l5 1l7 -4zM661 647l-3 -1l-1 4l-3 2l-10 -1l-8 4l4 1l8 -3l8 0l5 -4zM36 643l6 1l3 4l1 5l4 1l2 -3l0 -6l4 -3l-16 -1zM830 644l-6 -4l-6 3l-1 3l7 -3zM767 632l4 6l6 4l21 -4l0 -3l-6 3l-8 -1l-8 2l-4 -8zM493 631l-6 0l-1 2l6 1zM816 632l18 2l-9 -5l-7 1zM338 629l-2 1l1 2l2 -1zM660 632l-12 -4l-12 7l-1 3l5 7l4 0l3 -2l0 -8l2 -2l8 1zM640 640l4 -1l1 2l-3 2zM56 628l-3 -2l-1 -4l-10 1l-3 2l0 3l-3 2l0 2l2 0l4 -7l6 0l3 6l3 0zM655 622l5 0l-1 -2zM94 616l2 4l6 -1l0 -3l-2 -2l-4 0zM488 612l1 2l4 0l-3 -3zM815 614l2 3l7 0l2 2l6 1l0 -2l-8 -9zM34 610l3 3l3 -4l4 0l8 5l4 -5l-4 2l-9 -4l-7 0zM768 605l0 17l3 -7l17 6l7 -1l4 -3l0 -4l-4 -3l0 -4l-2 -2l-7 1l-2 3l2 3l5 0l3 2l-3 5l-3 0l-12 -6l-7 -8zM661 604l-4 -1l-5 8l-7 -2l-6 7l-3 1l10 3l3 -4l12 -2l0 -3l-3 -2zM247 598l-1 3l3 1l1 -3zM60 599l-3 -1l-2 4zM93 595l0 4l3 2l5 0l2 -2l0 -3l-2 -2zM833 589l-9 -4l-10 9l0 2l9 -6l9 2zM62 595l-7 -6l2 -3l-5 -1l0 7l-3 3l-9 2l-6 -2l-5 1l7 5l5 0l9 -3l6 -5l4 0zM245 578l1 4l4 0l0 -4zM97 574l-2 2l0 4l5 1l2 -7zM768 575l-1 19l8 -3l3 2l-3 6l2 6l7 -5l7 1l4 -7l4 0l-1 -5l-4 -3l-5 1l-4 4l-2 0l-13 -18zM770 581l4 2l0 4l-3 3l-4 -4zM635 574l0 14l5 1l5 7l4 0l5 -4l7 -2l1 -2l-3 -8l-3 4l-9 0l-4 -3l0 -8l-4 -1zM830 574l-4 -3l-3 0l-8 8l9 -5zM30 579l8 0l3 3l1 4l3 1l2 -6l7 -2l2 -2l0 -3l5 -3l-4 -1l-6 7l-6 -8l-15 -2l6 5l0 4zM41 573l3 -1l2 4l-3 2l-2 -2zM491 564l1 2l5 0zM661 575l-2 -3l2 -3l-1 -7l-6 2l-20 0l0 2l16 1l3 3l-1 8l4 -3zM245 560l0 2l2 1l4 -1l-2 -3zM767 564l0 4l5 -1l6 6l6 -1l2 2l-1 6l2 2l5 -1l2 -8l2 -2l3 0l-1 -5l-4 1l-3 3l-12 -1l-3 -5l8 -4l0 -2l-7 -1l-5 6zM816 561l1 2l9 -3l7 3l-8 -8l-4 1zM97 554l0 3l2 0l1 -2zM506 551l-9 -3l-3 3l-8 0l-1 3l5 0l9 -4l6 2zM634 544l0 3l6 1l3 3l0 4l-5 3l1 2l5 -5l3 0l2 -5l3 -2l3 1l4 5l3 0l-2 -8l-7 0l-5 -3l-7 3zM767 547l0 2l6 0l2 -6l4 -2l4 4l0 3l-2 2l-5 0l0 2l2 1l6 -2l10 6l3 0l2 -3l0 -6l-8 2l-3 -7l-9 -4l-5 1l-3 7zM400 539l-3 1l2 1zM176 537l-2 -1l-2 2l2 1zM28 538l2 9l5 2l3 4l14 3l10 -1l-3 -9l-3 0l-5 4l-3 -5l-14 -5l-4 -4zM830 540l-6 -5l-7 4l-4 5l5 0l6 -3l6 1zM94 534l2 4l6 0l0 -2zM483 532l3 5l12 -2l0 -2l-6 1l-4 -4l-3 0zM335 531l2 2l5 0l-3 -3zM299 529l6 1l1 -2l-5 -1zM73 527l0 2l3 1l4 -1l-1 -2zM635 524l-1 7l6 -2l6 6l2 -2l8 0l2 4l4 2l-1 -14l-10 4l-5 0zM766 525l4 2l0 4l7 0l7 4l13 -1l2 3l1 -1l-2 -7l-6 -2l-8 1l-4 -3l-1 -4l-12 0zM28 519l4 2l3 5l8 1l6 5l3 0l4 -6l2 0l3 4l0 -5l-4 -7l-9 3l-2 3l-5 2l-4 -1l-4 -5l-4 -2zM784 516l-2 0l0 4l3 -2zM321 515l0 2l2 1l3 -1l0 -2zM91 517l0 2l5 3l5 -1l0 -4l-2 -2zM816 519l2 2l6 -4l3 3l5 1l1 -4l-9 -7zM497 509l-5 -5l-4 4l-7 3l-3 4l5 -3l12 1zM493 502l6 -1l4 5l-2 -5zM28 505l2 -1l10 4l5 5l12 -3l5 5l-2 -14l-2 0l-6 7l-3 1l-13 -3l-5 -5l-2 0zM244 501l1 2l6 0l-3 -4zM831 498l4 3l-1 -3zM662 499l-6 0l-5 4l-12 -1l-5 9l0 3l6 -6l2 0l3 3l9 1l5 6l3 0zM657 500l5 1l0 6l-2 3l-2 0l-4 -5zM766 500l11 11l11 -1l4 8l5 2l3 -1l0 -4l-9 -10l-4 -2l-9 1l-2 -2l1 -4l-2 -2zM94 494l0 3l3 4l4 -1l3 -5l-4 -2zM828 495l-5 -3l-5 5l0 2zM504 490l-10 -5l-7 5l-10 -2l-1 4l11 0l7 4l6 -5zM43 485l-1 4l3 1l1 -3l-1 -2zM62 496l0 -4l-4 -1l-3 -3l-2 -6l-3 0l0 8l-5 4l-8 -4l-9 -1l0 3l3 2l6 -2l7 3l5 0l2 2l-1 4l1 -3l4 -3zM795 480l-1 5l3 3l2 -4l-1 -4zM829 481l-5 -4l-10 7zM663 477l-5 -1l-7 6l-5 2l-7 -4l-3 0l-2 2l0 10l5 -2l9 5l0 -6l6 -4l6 1l2 3zM767 475l-1 14l13 3l4 6l2 0l1 -3l5 -3l4 2l5 6l0 -5l-2 -3l-18 -6l-2 -4l-5 -3l-1 -4zM773 479l1 4l-4 3l-3 -4l3 -3zM93 475l3 6l7 -1l-2 -5zM135 473l2 2l13 4l11 1zM817 468l2 1l6 -2l10 5l-1 -3l-5 -1l-4 -3zM507 475l-6 -10l-7 7l-8 -1l-4 6l-7 2l7 1l3 -2l0 -3l2 -2l9 1l4 4l7 -1zM28 470l0 7l3 -6l3 7l9 2l6 -3l13 2l-1 -5l-3 -2l-2 2l-6 0l-3 -6l-8 -3l3 9l-2 2l-4 -1l-2 -8l-4 0zM766 460l0 10l6 1l5 4l3 0l4 -4l3 2l1 4l-4 4l1 1l5 -3l6 -10l4 5l0 -6l-3 -3l-5 2l-9 -1l-6 4l-6 0l-3 -2l2 -8zM663 469l-7 -10l-4 0l-12 10l-3 0l-4 -4l0 10l3 -2l6 0l4 3l1 -2l-4 -2l0 -3l2 -2l4 1l0 4l6 0l4 -2l4 1zM246 458l1 3l5 -1l0 -2l-2 -1zM183 457l3 1l-1 -2zM94 456l1 4l5 0l-1 -3zM172 455l1 2l4 -1l-2 -2zM508 465l0 -2l-8 -10l-3 0l-4 3l-20 -1l0 2l3 2l0 3l-2 2l5 0l6 -4l3 0l5 4l4 -4l4 -1zM138 452l12 12l11 4l5 0l-13 -6l-8 -7zM818 455l1 1l5 -2l5 3l5 -1l0 -2l-9 -3zM62 455l-8 -6l-3 0l-6 10l-6 -3l-8 3l-3 -3l0 6l11 -4l12 8l6 -3l3 0l2 2zM766 446l-1 5l4 0l6 3l6 0l6 -4l3 0l4 4l1 4l5 3l0 -6l-9 -9l-5 0l-4 4l-5 2l-3 -1l-5 -6zM663 444l-5 0l-7 6l-18 -5l0 12l1 -3l4 -3l3 2l1 7l3 0l4 -4l7 -2l2 -6l3 -1l0 8l2 3zM145 439l9 5l6 6l6 1l-6 -6l-12 -6zM248 438l1 2l4 -1zM322 436l1 2l4 -1zM96 436l1 4l3 -1l0 -3zM509 439l-9 -2l-5 -3l-8 5l-7 -1l-2 2l2 6l-6 4l12 -1l8 -9l9 0l3 2l-1 7l4 4l-2 -6zM801 432l-6 -2l-8 0l-4 5l-16 -4l-2 2l0 4l7 -1l8 4l9 0l5 -5l7 2zM664 439l-6 -9l-7 2l-4 4l-8 -5l-7 0l0 4l6 -1l2 2l0 4l4 0l6 3l6 -2l3 -3zM818 435l0 3l6 -3l5 5l6 -1l0 -2l-6 -2l-5 -7zM301 427l-1 3l3 1l1 -3zM27 434l0 4l4 -2l3 6l6 1l2 2l2 6l6 -8l6 -2l-1 -5l2 -4l4 4l1 11l1 -3l-1 -17l-3 0l-8 6l-11 -2l-4 -5zM45 435l1 3l-2 2l-2 -3zM245 420l1 2l7 1l-4 -3zM348 419l-3 -1l-2 1l0 2l3 0zM319 418l2 3l6 0l3 -2l5 1l-1 -2l-4 1l-5 -3zM664 430l0 -9l-4 -6l-5 4l-10 -1l-4 7l-4 0l-5 -3l1 3l10 4l4 0l6 -2l4 -4l4 0zM96 414l-3 4l1 2l7 1l1 -5l-2 -2zM765 413l0 4l9 7l8 -3l9 1l5 -5l5 4l0 -3l-2 -2l-8 -3l-6 5l-4 -1l-4 -5l-6 2l-4 -2zM830 413l-3 -3l-4 -1l-9 8l4 0l5 -3l7 1zM26 412l1 9l9 -2l4 3l1 4l3 3l6 -3l9 -15l4 2l-2 5l2 4l1 -10l-3 -3l-5 1l-6 8l-3 0l-6 -7l-4 -2zM45 421l2 2l-2 4l-2 -2zM473 416l0 3l7 1l0 8l3 5l4 0l6 -10l3 2l3 6l5 0l2 -5l4 0l-1 -3l-7 0l-2 4l0 -7l-4 -3l-6 -1l-3 -4l0 -4l-3 -3l-5 1l0 2l5 3l1 3l-2 2zM632 408l0 2l10 -1l7 5l5 0l6 -7l4 6l0 -4l-4 -6l-3 1l-5 8l-4 -3l-4 -8l-6 5zM327 401l-4 -2l-7 3l8 1zM473 398l0 12l5 -8l10 0l6 7l11 2l4 4l0 -5l-5 -12l-12 -2l-10 5l-4 0l-4 -4zM664 395l-1 5l2 3zM584 394l-12 3l4 1zM831 399l-7 -6l-11 7l4 1l7 -3zM104 395l-3 -2l-5 1l-2 7l6 0zM801 396l-4 -5l-1 7l-3 4l-4 -1l-3 -3l-4 0l-3 5l-4 2l-3 -7l-2 -1l-5 7l3 0l4 4l8 0l2 -6l3 -1l9 5l5 5zM587 393l5 -2l-3 0zM26 391l0 6l4 -2l5 8l6 0l1 -5l3 -1l3 7l16 2l-3 -14l-2 -2l-4 1l0 6l-3 4l-3 -2l-1 -4l-8 -6l-10 0zM34 392l3 -1l1 2l-3 1zM184 391l12 1l8 3l-1 -3l-8 -4zM71 383l7 4l10 1l-2 -2zM509 395l0 -5l-8 -9l-8 3l-5 -1l-8 4l-7 -2l-1 2l1 2l20 -1l7 6l7 -1zM632 378l0 3l3 2l0 3l-4 5l1 4l7 -5l15 2l7 -3l4 2l-1 -4l-20 0l-10 -9zM406 381l-6 -3l-6 3l-8 -1l10 3zM247 378l-2 2l1 2l4 1l1 -3zM817 375l-3 2l0 3l3 -2zM589 376l-10 0l-7 3l14 -1zM830 371l0 4l4 1l1 -3zM181 374l0 4l2 1l17 0l3 -3l-4 -2l-8 1l-6 -4zM25 375l0 4l5 -4l3 4l1 5l17 2l3 -3l4 -1l6 8l-2 -5l0 -7l-2 -2l-9 0l0 2l-4 4l-5 1l-6 -4l-5 -8zM801 380l-4 -3l-1 -8l-7 0l-7 8l-5 2l-6 0l-4 -2l-2 1l0 4l2 -1l11 6l5 6l4 0l0 -3l-6 -3l0 -3l3 -3l17 1zM282 368l17 4l11 -2zM472 368l0 9l2 0l4 -5l10 5l3 0l6 -4l5 1l8 7l0 -3l-13 -10l-8 2l-13 -3zM568 366l9 -2l-7 0zM588 363l-2 -1l-2 2zM829 363l-3 -2l-4 1l-4 4l0 3l2 1l4 -3l5 2zM397 358l1 3l3 -1l-1 -2zM25 364l0 4l6 -4l3 1l3 7l2 0l3 -5l16 3l0 -3l3 -2l4 4l1 -1l8 5l15 3l7 4l6 0l2 -2l-5 -4l-13 0l-20 -8l-5 -5l-6 1l-3 3l-7 0l-14 -8l-3 0zM631 356l0 11l3 1l-3 5l17 2l2 -4l7 -5l4 1l2 8l2 1l1 -3l3 0l-3 -1l-1 2l-2 -2l0 -9l-2 -5l-3 0l-4 5l-3 -4l-12 0l-3 -3zM642 364l4 -2l2 4l-4 1zM358 356l-5 0l-5 4zM170 356l0 3l2 1l5 -1l-2 -3zM182 358l1 7l9 -3l2 -5l2 -1l3 4l6 1l4 4l4 1l-2 -3l-9 -4l-4 -5l-14 2zM764 357l1 14l2 -1l-1 -8l2 -2l12 7l5 0l7 -3l3 -7l4 0l2 10l1 -11l-5 -3l-3 0l-9 10l-6 -1l-10 -10zM658 352l-3 1l-1 4l4 -3zM561 350l-9 3l7 -1zM511 359l-5 0l-11 -9l-3 0l-9 5l-7 0l-5 5l7 0l2 3l5 0l9 -3l16 2zM828 350l-4 -2l-6 3l-3 4l7 -3l6 0zM271 348l0 2l13 0l4 3l6 1l7 -2l-14 -3l-3 1l-3 -2zM24 345l0 4l2 2l13 5l6 0l5 -7l4 0l5 7l6 1l0 -5l2 -1l18 11l6 2l5 -2l-9 -2l-20 -11l-1 2l-3 -3l-7 -1l-4 -3l-13 8l-6 -1l-7 -7zM818 342l7 -1l3 2l7 0l-1 -2l-10 -2zM168 338l2 4l6 0l-2 -3zM79 338l10 6l-3 -5zM35 338l0 3l2 0l0 -3zM205 344l-4 -3l-1 -4l-5 -1l-6 7l-7 2l-1 3l7 -2l17 0zM802 342l-4 0l-2 -6l-2 -1l-14 7l-2 4l-4 0l-7 -5l-3 1l-1 -2l-9 5l9 -4l2 7l2 -2l3 0l9 9l4 1l4 -3l3 -6l5 0l6 3zM630 335l0 17l9 -4l7 4l1 -6l3 -3l8 -1l3 3l2 7l3 2l-7 -18l-22 8l-2 -3l1 -4l-3 -3zM98 334l0 3l4 -1l0 -2zM511 353l0 -12l-4 -8l-6 1l-6 5l-21 -1l-3 4l0 5l5 2l3 -6l8 1l6 -3l6 0zM357 331l-2 -1l-6 7l-25 2l0 2l7 -1l5 5l4 -3l9 3l4 -2l-2 -6l3 -3l2 0l1 2zM493 328l-1 2l2 1l1 -2zM205 329l-2 -1l-6 4l-5 1l-11 -1l0 4l4 1l8 -4l12 -1zM831 329l-7 -3l-8 4l-2 4l10 -4l7 1zM570 327l10 0l23 5l-1 -2l-15 -4zM349 325l-4 2l0 3l3 1l2 -2zM191 323l-1 5l3 0l1 -2zM802 327l-3 -6l-3 0l-5 7l-4 0l-4 -6l-1 6l-2 2l-15 -1l0 3l13 1l3 3l3 0l14 -9l4 7zM23 320l1 3l3 0l-1 2l-2 0l0 14l10 -8l8 0l3 5l9 -3l4 -4l8 8l0 -4l-5 -11l-8 0l-4 3l-7 0l-12 -6zM630 320l0 3l4 0l1 5l3 4l3 0l5 -6l16 3l2 2l2 9l0 -12l-10 -8l-3 -1l-9 5l-3 0l-5 -6zM360 321l-2 -6l-4 0l-5 5l-15 0l-3 -3l-6 2l-2 -2l-4 1l5 4l6 -1l1 8l2 2l3 0l2 -2l0 -6l3 -3l10 2l5 -4l1 3zM94 314l0 4l3 3l5 -1l1 -4l-2 -2zM607 314l-18 -1l-19 3l26 0l4 -2zM205 322l-4 -2l-6 -7l-14 6l6 0l3 2l3 -4l2 0l4 4zM763 312l-19 4l-18 9l30 -9zM204 312l-2 4l3 1zM513 311l-3 3l1 3zM809 308l0 3l10 0l10 6l6 -3l0 -2l-2 -1l-5 1l-8 -4zM802 314l-6 -1l-5 -5l-6 5l-9 1l-4 3l-3 0l-4 -4l-2 11l-25 11l10 -2l14 -7l5 -6l8 -1l6 -4l5 1l3 5l2 0l5 -5l6 2zM507 308l-6 3l-8 -1l-5 3l-6 0l-2 3l-10 -1l0 4l6 2l-5 6l-1 4l2 0l6 -6l8 0l8 -3l1 -6l3 -3l5 3l9 14l0 -7l-7 -6zM74 305l4 2l0 -2zM180 305l9 5l16 -3l-8 -2l-8 1l-3 -2zM737 304l3 1l2 -2zM630 306l0 9l4 -5l2 0l8 9l3 0l7 -8l6 3l4 4l2 5l0 -8l-19 -14l-3 1l-3 4zM645 307l3 3l-2 6l-3 -2l0 -5zM395 303l5 0l2 -2l-4 -1zM317 300l7 2l0 -2zM247 300l-2 2l4 2l0 -3zM23 307l0 5l0 -2l4 -4l10 1l1 5l-2 3l3 3l6 2l5 -5l5 3l5 0l7 -4l-1 -3l-4 0l-1 3l-4 2l-2 -2l1 -6l-10 -8l-4 1l-4 4l-13 0zM594 298l-16 5l7 0l6 -2zM327 304l1 4l4 3l5 0l6 -6l6 0l3 6l9 0l-6 -1l-2 -2l3 -7l-15 2l-4 -5l-4 -1zM333 300l3 1l-2 3l-3 -2zM823 295l7 5l5 -1l-2 -4zM92 298l5 4l5 -1l-1 -7l-4 0zM804 292l1 2l5 0l-2 -3zM513 298l-13 -8l-6 0l-5 2l-5 5l-12 2l-2 4l4 5l-5 3l6 0l2 -6l10 -4l6 -8l3 0l3 4l13 6zM765 289l1 9l-2 9l3 -4l3 -1l5 7l5 1l4 -3l0 -6l9 2l4 3l5 0l0 -2l-7 -6l-9 -2l-8 2l-8 -10l-3 -1zM300 286l4 2l9 -1zM180 288l1 9l14 -4l4 3l0 5l6 2l0 -10l-15 -2l-7 -5zM667 307l-1 -7l-5 -5l1 -6l-2 -4l-3 0l-5 7l-3 -5l-7 -1l-5 6l-4 1l-4 4l21 0l9 2zM329 280l0 9l-2 5l3 -2l3 -6l2 0l10 11l7 -1l4 -4l5 1l0 -3l-4 -5l-15 4l-3 -5l-6 -1zM353 290l2 -1l1 2l-1 1zM64 281l-4 -1l-11 12l-6 0l-6 -7l-6 7l-8 4l0 4l10 2l9 -7l10 0l7 -6l8 4l-4 -7zM399 279l0 2l2 1l1 -2zM764 282l0 2l2 -2l4 0l9 7l18 -4l5 7l0 -10l-4 -4l-12 7l-6 0l-5 -5l-8 -2zM243 278l4 4l10 -1l-7 -4zM829 277l-6 -1l-8 4l-3 5l12 -4l1 1zM468 293l1 2l3 -1l9 -11l5 2l8 -2l9 1l4 2l4 5l3 1l0 -2l-8 -8l-11 -5l-8 -1l-8 3zM473 276l-5 1l0 6l3 0l3 -3zM540 276l4 1l2 -2zM105 275l-2 -2l-6 1l-1 5l3 1zM629 276l0 5l4 -3l7 0l10 5l9 -2l5 4l1 7l2 2l-4 -14l-11 -1l-5 -8l-3 0l-4 4zM308 274l17 4l5 -5l5 -1l11 10l15 -2l-1 -2l-10 -3l-7 2l-7 -7l-6 1l-5 5zM68 275l-6 -5l-4 -1l-8 6l-12 0l-2 3l-14 7l-1 -3l-3 0l-5 -4l-6 -2l0 3l13 4l3 5l6 0l5 -6l7 0l4 5l2 0l10 -15l4 0l7 5zM172 274l7 1l2 7l4 0l4 -5l8 0l2 2l0 8l2 2l5 -1l0 -3l-2 -2l0 -10l-10 -1l-4 -5l-10 4l-2 3zM668 263l-2 2l1 3zM468 271l0 2l9 1l6 -4l13 -2l3 2l8 1l7 8l0 -5l-6 -6l-13 -7l-4 0l-4 4l-9 -1l-4 5zM244 262l5 3l2 -1l-2 -3zM10 262l6 1l-3 -2zM835 260l-4 3l4 0zM763 262l2 3l-1 7l4 -3l19 0l11 3l5 5l2 -1l-3 -4l-18 -10l-12 1l-5 -3l-3 0zM234 260l1 2l2 0l-1 -2zM91 258l1 3l3 1zM537 257l-1 2l3 2l1 -1zM398 257l0 3l2 1l2 -3zM320 260l3 1l3 5l17 -2l3 4l4 0l12 -5l-1 -2l-3 2l-5 0l-3 -4l-14 2l-6 -4l-2 0l-3 4zM68 258l-2 -2l-6 0l-8 10l-4 -1l-2 -7l-5 0l-8 5l-3 6l-7 5l-1 4l10 -4l5 -6l8 2l7 -1l8 -9l3 0l1 5l4 3zM71 254l4 2l-1 -2zM628 261l0 7l8 1l6 -3l14 -1l1 -4l3 -3l2 4l-7 11l2 1l3 -2l8 0l-6 -4l2 -6l0 -4l-2 -2l-4 0l-3 5l-5 3l-11 -1l-2 -4l3 -3l0 -3l-2 0l-4 6l-4 0zM645 252l0 5l4 1l-1 -6zM573 252l-13 5l-8 -1l-8 3l14 1l3 -3l10 -2zM422 251l5 2l0 -2zM189 251l-1 3l3 1l1 -3zM746 250l0 3l2 0l1 -2zM138 249l14 7l3 0l9 6l19 2l3 -3l9 -3l4 0l6 3l2 -1l0 -3l-2 -2l-6 -2l-7 5l-6 0l-4 -7l-3 2l-1 10l-5 -3l-9 -1l-7 -6l-8 -4zM759 246l-7 3l-1 2l7 -2zM136 246l-5 2l3 0zM764 256l7 1l7 -4l10 5l4 0l4 -5l2 0l7 7l4 0l3 -3l7 -2l3 -6l4 2l7 0l2 -4l-3 -3l-9 -1l-4 2l0 3l-2 2l-5 1l0 3l-2 2l-6 1l-6 -8l-12 4l-5 -2l-7 -6l-8 -2l-2 4l4 5l-4 2zM326 244l0 6l2 -4l3 0l4 8l19 2l2 -5l6 0l0 -3l-2 -2l-11 -3l-1 4l2 4l-2 2l-6 -6l-6 -3zM467 255l1 8l0 -3l11 -2l10 -8l8 0l5 3l1 6l10 8l2 -2l0 -6l-2 -2l-3 0l-8 -10l-11 0l-4 -5l-9 2l-3 3l-1 5zM197 241l-8 4l-1 2l7 1zM69 251l-6 -5l0 -5l-8 3l-15 -1l-4 3l2 5l-1 3l-13 2l-3 4l1 1l23 -8l5 -6l14 3l5 3zM736 239l-8 3l0 2l2 1zM546 239l1 2l5 1l-1 -2zM322 239l-1 2l3 1l0 -3zM628 243l1 12l3 0l5 -6l5 -1l0 -5l3 -4l5 4l1 4l3 3l10 2l4 3l-1 -4l-13 -5l-5 -8l-6 0l-2 2l0 5l-3 3l-4 -2l-2 -5zM79 238l2 3l6 1l4 3l2 -1l0 -2l-9 -1zM689 237l1 7l2 -5zM561 238l4 1l-3 -2zM223 236l3 5l6 2l3 -1l-7 -5zM449 235l8 2l5 -1l0 -2zM692 233l2 3l5 1l-1 -2zM94 235l4 4l5 -1l-5 -5zM179 235l0 12l5 -5l7 -1l4 -5l5 0l3 3l-1 8l14 10l5 -1l-1 -4l-4 1l-9 -6l2 -9l6 2l4 0l-1 -2l-13 -4l-21 -2zM190 233l1 5l-2 2l-3 -3zM756 230l-5 3l-2 -2l-10 7l0 2l4 -1l7 -6l1 2l2 0zM701 230l-1 2l3 2l0 -3zM763 232l0 4l8 -3l2 2l-2 2l1 2l8 1l4 -2l6 0l6 6l7 -1l-6 -5l-2 -6l-5 0l-5 4l-3 0l-5 -6l-10 -1zM137 232l5 -1l11 4l4 -1l1 4l7 4l0 3l6 -1l-4 -2l-6 -8l-3 1l-2 -4l-12 -2zM832 229l-10 -1l-11 8l-5 -1l-1 3l5 1l2 -3l10 -4l8 1zM521 227l1 2l4 1l-2 -3zM21 243l4 0l5 7l2 -2l1 -6l6 -3l15 0l8 -4l4 0l3 4l2 -1l-5 -5l-23 3l-7 -9l-8 6l0 5l-3 3l-4 -1zM709 226l-1 3l2 3l2 0l2 -4zM533 226l3 2l1 -1zM724 226l-3 -1l-3 3l5 1zM516 243l-2 -2l-4 0l-4 -4l-1 -4l-8 -8l-2 0l-6 8l-6 0l-4 -2l-6 6l-7 0l0 10l-6 1l6 0l6 -8l22 -6l7 1l7 10l6 0l2 2zM309 225l-6 2l-1 3zM76 226l3 1l-1 -2zM678 224l2 3l2 0l-2 -3zM622 224l-5 0l-3 9l-9 6l8 -4l6 -7l3 0zM364 226l-1 -3l-3 0l-5 6l-7 -1l-2 5l-3 2l-3 0l-4 -6l-8 -3l-3 4l0 6l4 2l3 -6l2 0l3 5l7 0l6 -4l5 3l3 -3l3 0l2 2zM197 223l-4 2l0 4l2 1l4 -3l0 -3zM81 223l5 6l4 2zM737 222l-9 3l-1 2l2 2zM631 223l-3 8l0 5l3 -3l5 3l11 -2l3 -3l0 -5l3 -1l3 5l8 6l0 7l4 5l-1 -15l-3 -4l-6 -1l-3 -6l-7 1l-1 7l-5 4l-4 0l-2 -3l6 -6zM746 220l-5 2l-3 4l8 -4zM449 219l-1 1l2 1l1 -1zM154 220l7 5l4 -1l0 -2l-4 1l-4 -4zM701 216l0 2l2 1l0 -2zM694 216l0 3l4 2l0 -2zM413 218l8 3l1 -1l-4 -4l-3 0zM831 216l-10 -1l-5 2l-1 3l-5 0l-1 2l-5 2l27 -6zM404 215l2 3l2 0zM259 214l1 4l3 2l8 -2l-7 0zM90 218l6 4l2 -2l5 2l-2 -4l4 -1l-2 -3l-2 2l-7 -2l0 3zM21 217l-1 15l11 -12l8 1l7 8l4 -8l4 -3l4 0l5 8l6 4l0 -3l-7 -6l-2 -6l-9 1l-6 5l-7 -7zM705 212l1 4l2 1l8 -1l0 -2l-2 -1l-5 1zM523 212l-1 3l3 3l1 -6zM763 221l0 3l13 1l-2 -7l2 -5l2 2l0 6l8 1l5 5l12 2l-3 -5l0 -7l-8 -2l-3 6l-6 0l-3 -2l-1 -6l-2 -2l-4 2l0 3l-3 4l-5 -1zM323 218l6 -3l6 8l7 -7l22 1l4 -2l-7 -4l-6 0l-5 2l-9 0l-4 3l-3 0l-6 -5l-4 3zM465 218l4 3l0 5l-3 5l5 -1l0 -5l2 -2l6 0l7 6l8 -10l8 1l10 15l3 1l1 -4l3 -1l-1 -2l-3 0l-1 -7l-6 -7l-9 0l-4 -5l-5 0l-3 2l-10 -1l-1 3l2 2l3 0l2 2l-1 2l-8 0l-5 -3zM727 209l-1 -1l-3 4l-4 -1l-1 2l2 2l6 -2zM535 208l1 5l2 1l0 -3zM13 207l-3 2l0 3l2 -1zM604 223l6 -2l4 -4l12 -6l1 1l4 -4l3 0l2 2l0 7l2 2l3 0l2 -6l3 -3l3 0l3 5l8 0l9 12l1 4l4 3l-10 -18l-4 -4l-9 -4l-8 0l-4 3l-3 -4l-4 -1l-7 6l-15 -2l-3 3l2 6zM153 210l0 2l7 -5l3 0l4 4l3 0l-1 -3l-5 -2l-8 0zM178 227l8 -2l12 -7l6 2l5 4l5 0l3 3l4 -2l-4 -8l-7 5l-3 -3l-1 -5l-8 -9l-2 0l-3 4l-1 7l-3 3l-4 0l-6 4zM196 208l4 3l-1 5l-3 0l-2 -3zM813 204l-3 7l4 0l2 -2zM747 204l-8 5l-2 4l1 1l3 -4l6 -2zM739 204l-4 1l-3 3l-1 5zM73 203l0 7l6 1l4 3l-1 -4zM804 216l-6 -13l-12 -1l-5 4l-8 0l-5 -2l-5 8l-12 9l3 1l7 -7l8 -2l6 -6l5 2l4 9l3 -2l1 -6l3 -3l3 0zM784 208l2 2l-1 4l-3 -2zM304 203l11 0l0 -2l-9 0zM572 198l-3 2l-4 -2l-3 5l1 2zM379 198l-7 1l2 2l3 0zM820 197l-2 7l1 1l13 0l-3 -5l-5 -3zM520 216l-7 -5l-1 -4l-3 -1l-5 -7l-12 -3l-11 9l-5 0l-3 -4l-4 5l-4 2l-4 6l-7 5l2 2l12 -12l13 -2l6 -4l8 3l4 -4l2 0l16 16l3 0zM387 196l5 3l4 6l8 0l-1 -2zM246 196l1 6l5 -2l-4 -4zM461 195l-4 1l-10 10l-6 2l-13 -5l2 4l11 3l9 -4l11 -8zM400 195l1 3l19 7l-10 -6l-5 0zM323 209l5 -3l4 -6l6 0l4 4l4 -5l2 0l6 6l11 0l1 -5l-4 -5l-2 0l-4 6l-7 -6l-7 0l-5 3l-9 -2l-5 7zM262 195l2 3l-1 3l-5 1l6 5l1 5l4 -1l-3 -2l0 -10zM70 219l-2 -9l-3 -4l-10 -1l1 -3l7 -2l0 -3l-2 -2l-5 1l-5 4l-9 0l-4 2l-6 -3l-5 2l-8 -2l1 5l5 0l2 2l-1 4l8 -3l7 0l5 5l5 -2l6 1l8 -2l2 3l-1 7zM687 194l5 10l7 5l0 -2l-9 -7l0 -4zM675 216l-6 -3l-2 -6l0 -8l-2 -3l-13 4l-14 -7l-6 0l-4 4l-10 -3l-9 7l-3 6l-5 2l-4 4l-8 0l-6 5l-6 0l-5 4l8 1l6 -2l3 -3l10 -1l2 -2l0 -4l17 -14l7 0l2 2l0 7l10 -10l6 2l4 5l3 1l13 -5l2 2l0 5l4 11l6 2zM126 192l3 5l3 0l1 -2l-2 -3zM727 191l-4 5l-3 0l0 3l7 -4zM115 192l8 1l-1 -3l-6 0zM181 201l-1 4l2 5l-5 2l0 6l11 -5l7 -15l0 -6l3 -1l5 11l6 1l1 3l3 -3l5 1l1 8l11 15l8 1l0 -2l-5 -3l0 -7l-4 -2l-4 4l-5 -7l-1 -8l-2 -2l-7 2l-2 -7l-9 -7l-4 0l-2 2l-1 7l-3 3l-5 -2zM100 187l4 3l1 3l-8 4l-5 -3l1 9l8 0l3 2l-4 -3l0 -2l5 -1l-1 -5l3 -4zM752 210l9 -7l2 -9l2 -2l2 1l0 4l8 5l5 -1l11 -8l5 6l8 5l-1 -6l-4 0l-2 -2l4 -6l-3 -2l-4 2l-10 1l-8 -5l-10 0l-3 3l-2 9l-9 7zM110 186l0 5l3 1l0 -5zM316 187l-1 -2l-8 1l-3 2l0 3l9 0zM432 184l-1 5l2 -1zM168 184l-7 7l-11 0l-4 7l-8 2l-1 2l5 0l3 3l4 1l4 -7l12 0l2 -3l-1 -7zM160 191l5 4l0 3l-2 2l-4 0l-4 -3l1 -3zM628 184l-1 9l4 -5l6 0l6 4l4 0l3 -5l5 -1l5 5l8 4l4 13l6 0l3 3l0 3l6 -1l-1 -2l-2 1l-6 -4l-4 0l-3 -3l-1 -7l-8 -10l-2 -5l-13 1l-2 3zM687 182l2 4l5 1l3 3l0 5l3 0l-3 -8zM320 190l0 3l2 1l5 -3l10 2l4 -3l19 -2l6 4l0 -3l-10 -5l-21 4l-4 -6l-7 1zM258 182l5 7l7 4l0 7l3 2l-2 -7l3 -3l0 -3l-8 -2l-4 -4zM562 181l4 3l-1 -3zM176 195l0 4l2 -3l8 -2l6 -7l17 -2l4 9l7 2l4 4l1 4l7 0l4 8l3 2l1 -1l-4 -4l-2 -8l-18 -8l-7 -12l-9 4l-11 1l-3 4zM71 189l-8 -2l-4 -5l-3 -1l-7 1l-4 7l-17 -7l-8 2l5 3l0 4l-2 2l-11 -1l-2 2l0 3l6 -4l9 3l3 -7l4 -2l11 7l9 -3l12 -1l3 2l1 6l3 3zM622 180l-2 5l-4 2l-5 6l-7 1l-5 5l-5 2l-13 -2l-2 3l15 1l8 -2l4 -6l5 -1l5 -5l5 -2zM518 204l0 -3l-4 -2l-11 -11l0 -4l-3 -4l-2 1l-1 5l-3 3l-9 3l-4 4l-4 -2l-8 0l-5 7l2 1l6 -7l4 1l4 5l9 -8l7 -2l10 3l5 6zM747 178l-15 12l0 7l1 -5l3 -3l5 0l3 -2l3 -5zM533 177l4 10l13 8l7 10l-5 -11l-8 -5zM244 177l1 2l3 -1zM730 175l-1 3l-10 8l2 4zM754 196l2 -2l2 -7l9 -8l8 3l6 0l5 4l6 0l9 -7l3 2l4 13l2 2l8 0l-15 -16l0 -5l-2 -3l-3 0l-7 10l-2 -1l0 -6l-2 -2l-5 0l-4 7l-3 0l-7 -8l-2 0l-3 8l-5 4zM785 175l1 4l-3 2l-1 -4zM321 180l6 -2l9 0l5 -3l5 7l4 0l7 -6l7 0l2 2l11 -2l2 3l-4 4l1 2l6 3l9 -3l4 3l-3 -10l-3 0l-7 6l-4 -8l-16 -2l-6 -3l-2 5l-4 4l-3 0l-6 -9l-6 4l-6 -1zM174 171l-5 3l-8 -3l-4 1l-3 5l-11 9l-1 4l6 -4l14 -1l-1 -7l2 -2l9 0l2 -2zM452 190l8 0l4 -3l8 2l1 -6l5 -3l5 1l4 4l3 0l3 -3l0 -6l2 -2l4 0l5 4l3 7l8 9l5 -1l9 8l-2 -6l-9 -7l-3 -8l-7 2l-4 -7l-8 -5l-7 1l-5 8l-10 0l-14 4zM805 168l1 5l4 4l7 0l5 9l11 5l0 -5l-8 -2l-5 -9l-7 -1zM622 168l-6 3l-4 7l-9 2l-6 7l-11 0l-16 3l3 2l5 0l3 -2l17 1l6 -5l2 -4l8 -2l2 -5zM686 167l5 4l2 8l9 6l0 5l4 5l1 7l3 3l4 -1l0 -2l-6 -4l1 -7l-4 -1l-3 -3l-1 -4l-5 -4l-3 -10zM626 172l0 5l10 -6l17 8l9 -1l3 3l1 5l8 15l5 1l4 -3l-6 0l-8 -8l-2 -14l-3 -3l-3 -8l-3 0l-7 7l-9 -2l-5 -3l-6 0zM750 165l-2 3l-7 -1l-5 2l-4 13l2 0l2 -8l2 -2l10 -1l2 -2zM173 186l2 4l6 -10l12 1l0 -9l2 -2l3 0l2 2l0 8l9 -5l5 1l4 4l6 0l3 3l0 8l16 3l-9 -5l-11 -12l-5 -3l-6 -1l-6 -6l-10 0l-6 -3l-14 11l0 10zM88 203l-1 -4l-9 -9l-3 -7l-6 -6l0 -4l3 -4l-2 -2l-3 5l-4 -2l-1 -4l4 -2l-1 -1l-6 3l-14 1l-3 3l0 5l-2 2l-10 -5l-7 -1l-1 4l-12 11l7 -6l5 -1l5 -4l5 0l4 5l5 1l15 -6l0 -4l3 -1l9 6l1 5l3 0l3 3l2 8l10 12zM534 162l6 12l6 4l1 5l3 3l6 0l8 8l-7 -11l0 -8l-6 -3l-8 0l-3 -4l0 -3zM587 158l-16 2l-4 6l-6 0l4 2l5 -1l4 5l2 0l2 -2l-1 -7zM441 190l3 1l5 -6l4 -2l3 -5l12 -5l5 -5l3 2l1 4l3 1l7 -9l6 -4l3 0l4 4l5 0l3 3l1 5l11 -1l3 4l0 5l6 5l3 9l3 3l12 2l4 5l-1 7l3 3l3 0l-5 -5l1 -6l-5 -6l-4 -2l-6 1l-3 -2l-11 -26l-10 -1l-4 -6l-7 -6l-6 3l-8 1l-7 6l-6 -4l-3 0l-5 8l-9 4l-4 6l-9 4zM804 157l0 3l8 6l14 0l2 2l-1 8l8 2l0 -2l-4 -4l0 -4l4 -3l-1 -2l-10 1l-3 -6l-5 -2zM803 162l-7 -6l-9 0l1 7l-3 4l-4 0l-6 -6l-8 0l-4 3l-5 10l-6 6l-2 7l10 -11l1 -7l7 -6l6 1l7 5l4 0l7 -7l5 3l6 0zM624 165l9 -2l5 -3l8 7l6 -2l5 -4l3 0l5 4l1 4l7 7l0 10l10 1l-6 -4l-1 -7l-15 -17l-9 -2l-5 6l-2 0l-4 -6l-5 -1l-5 5l-5 1zM299 156l-5 4l4 3l2 0l1 -2zM296 152l-3 4l2 0zM176 165l1 3l11 -10l4 0l5 4l8 -1l7 5l10 3l9 9l6 0l5 5l6 2l-1 -3l-5 -1l-5 -6l-6 -1l-6 -7l-9 -4l-4 0l-8 -9l-7 -4l-8 5l-5 1zM294 175l0 2l12 -1l2 -2l0 -6l3 -2l7 1l3 3l-2 5l2 0l0 -5l4 -4l3 -7l5 -1l9 2l5 7l9 -3l7 6l6 -2l6 4l7 -2l12 2l4 3l1 6l6 6l5 1l3 3l-1 -7l-9 -3l-9 -11l-8 -5l-7 0l-9 -3l-7 -6l-3 -5l-4 0l-12 5l-7 0l0 -7l-4 -1l-2 4l-6 5l-1 5l-3 4l-4 1l-7 -6l-4 -1l-1 4l3 5l-6 4zM374 166l3 -1l2 3l-4 2zM7 171l0 6l3 2l12 -13l12 2l4 -5l7 -2l7 -5l4 2l9 -1l5 3l6 7l1 5l-3 4l3 1l7 11l4 2l-4 -14l-6 -5l-5 -10l-11 -10l-7 -3l-6 1l-1 7l-3 3l-12 2l-6 4l-14 -1zM560 147l0 5l2 -2l5 4l9 -5l5 4l5 0l2 -7l-4 4l-2 0l-4 -4l-5 0l-4 3zM533 146l0 2l4 2l-4 3l2 4l9 0l5 6l7 5l3 0l-12 -14l-6 -1l-4 -6zM125 145l0 3l3 0l0 -2zM805 149l-6 -4l-4 -6l-3 0l-2 2l3 5l-7 4l-10 -2l-5 7l-7 -2l-4 6l-5 2l-4 13l3 -3l2 -7l4 -2l5 -6l9 1l9 -5l16 -1l3 -3l2 5zM683 173l-2 0l-4 -6l-7 -5l-2 -5l-6 -7l-2 -10l-3 0l-3 3l-5 0l-4 -3l-8 -1l-13 6l-3 7l-13 8l-7 10l-7 2l-8 -7l-4 3l-5 8l-6 2l8 0l5 -5l3 3l7 1l11 -5l5 -8l7 0l6 -6l5 -2l-1 -2l-2 1l-2 -2l0 -4l5 -4l5 0l4 6l8 4l6 -6l3 0l3 4l8 4l5 8l10 10l3 1zM532 165l-2 -3l-11 -3l-9 -5l-7 -10l-10 -5l-6 4l1 4l-2 2l-11 -5l-4 1l-7 9l-7 2l-4 6l-9 8l0 2l6 -1l8 -12l8 0l3 -5l6 -5l4 2l1 5l5 -4l9 3l-1 -8l2 -2l6 3l13 13l12 1l5 7zM7 154l0 5l6 0l4 -2l8 2l3 -8l0 -5l3 -3l13 3l3 -2l15 0l8 7l10 14l6 0l6 18l5 2l-8 -14l1 -9l-8 -7l-6 -1l-12 -12l-6 -3l-4 2l-6 -2l-6 0l-4 3l-10 -1l-2 1l0 7l-3 5l-6 -1l-4 4l-4 0zM246 163l-4 -3l-11 -1l-3 -3l1 -7l-6 0l-5 -3l-10 1l-7 -5l0 -3l-3 -4l-4 0l-1 8l-3 3l-3 0l-4 -4l-3 0l-6 3l-4 -1l-8 5l-3 7l-4 3l-3 0l-1 6l-13 9l-5 0l-2 2l-3 0l-4 -3l-7 1l-5 -5l1 2l-2 2l0 3l3 2l9 -1l5 3l12 -2l3 -4l8 -4l1 -5l3 -3l3 0l4 3l2 -1l2 -5l-3 -4l2 -2l5 0l5 -4l4 2l6 0l5 -2l6 -6l10 5l4 4l2 5l4 0l5 -5l5 2l2 6l9 1l9 7zM305 152l2 2l8 2l11 -5l6 -7l5 -2l4 0l2 2l0 5l2 1l5 -2l5 -8l3 0l13 16l7 1l5 -2l6 3l6 0l4 4l1 7l4 6l3 -1l0 -3l3 -3l3 0l5 5l3 8l6 1l-6 -3l-1 -7l-4 -4l-8 -1l-2 2l-3 0l-3 -10l-3 -3l-7 -1l-6 -3l-8 3l-3 -1l-4 -4l1 -8l-4 -2l-1 -5l-3 -3l-3 0l-4 5l-5 -1l1 6l-3 3l-4 -5l-7 -1l-21 15l-4 0l-4 -3zM590 130l-13 3l-3 -2l-6 0l-10 5l2 6l5 0l0 -5l4 -5l9 5zM750 161l11 -12l0 -5l4 -5l7 -1l4 -3l4 5l3 0l8 -10l9 7l11 14l7 -1l9 6l8 2l0 -2l-16 -8l-6 2l-4 -6l-6 -2l-2 -8l-10 -7l-3 2l-1 4l-3 3l-3 0l-6 -8l-8 -1l-1 3l2 5l-13 12l-4 7zM7 141l0 6l5 0l7 -2l5 -9l10 1l5 -4l7 0l5 -3l5 1l19 17l4 2l6 -1l8 10l2 8l6 4l-2 6l2 2l7 -1l0 -3l-13 -11l0 -3l-7 -13l-9 0l-6 -3l-3 -4l1 -5l-6 1l-5 -8l-6 -2l-7 2l-10 -1l-5 6l-3 0l-4 -3l-3 1l-3 9l-4 3l-5 -5zM683 163l0 -3l-12 -11l-1 -6l-5 -4l-2 -4l0 -8l-4 -5l-4 1l-1 8l-2 3l-8 -2l-5 -9l-6 3l-8 1l-3 3l-3 9l-7 1l-12 12l-7 4l0 2l4 -4l6 -1l7 -4l7 0l0 -6l4 -3l1 -6l3 -4l3 0l4 5l11 -1l10 4l5 -4l1 -6l2 2l-1 3l11 21l5 5l5 1zM812 123l7 2l6 4l10 0l-2 -2l0 -3l-6 -4l-5 3zM531 158l-7 -9l0 -3l3 -2l0 -2l-5 3l-3 -2l-1 -5l-6 -1l-6 -4l-7 -12l0 -3l-7 3l0 2l4 1l2 3l-2 4l-4 1l-4 -7l-6 1l-2 2l-6 0l-7 10l-7 4l-7 -1l-4 6l-4 1l4 5l2 0l16 -11l9 -11l8 -1l2 7l10 -4l4 3l4 0l9 4l10 14zM299 144l0 5l8 -4l9 3l7 -7l0 -4l5 -2l6 -6l3 -1l2 6l3 1l4 -5l8 -4l4 0l5 2l7 9l6 2l5 5l4 0l4 -3l2 1l4 6l5 1l4 4l2 9l11 2l10 7l4 0l-3 -4l-3 0l-10 -6l-5 -11l-12 -4l-8 -8l-8 1l-11 -4l-5 -8l-14 -10l-3 0l-6 7l-10 -2l-2 6l-3 3l-7 -1l-2 2l-4 9l-14 1zM7 124l0 3l5 0l4 4l5 -9l6 -4l5 1l4 4l6 2l10 -2l7 -5l6 4l4 9l9 3l1 3l-3 5l14 0l3 9l5 5l1 7l9 1l-5 -7l-9 -8l-2 -8l-14 -10l-7 -1l-2 -2l-1 -6l-9 -6l-7 5l-7 2l-4 -1l-3 -3l0 -4l-3 0l-4 2l-10 1l-5 7l-6 -2zM131 139l8 0l7 -3l10 3l11 -10l2 -10l2 0l4 4l6 1l6 -5l8 -1l4 3l7 1l7 8l12 1l4 7l8 4l9 -2l2 2l1 7l15 9l11 13l11 0l4 3l2 -1l-4 -4l-6 -2l-3 -9l-5 4l-3 0l-7 -7l-11 -4l-3 -4l-1 -6l-10 -1l-6 -3l-3 -4l2 -5l-2 -2l-8 2l-23 -15l-4 0l-5 3l-11 0l-9 -3l-3 3l-2 11l-3 3l-8 -3l-2 1l-2 5l-8 2l-6 -1zM732 168l14 -10l2 -7l7 -12l7 -4l-1 -6l1 -3l4 -3l11 1l6 6l5 -7l9 -3l0 7l6 2l3 7l6 0l6 4l6 0l10 10l1 -3l-4 -3l0 -3l4 -5l-26 -4l-5 -5l-2 -8l-4 -5l-7 5l-7 -1l-8 3l-4 -3l-1 -5l-3 -1l-2 3l0 5l-14 15l-2 13l-4 6l-14 12zM594 138l0 4l3 5l-6 3l0 4l2 -3l6 -2l0 -8l6 0l7 -8l3 2l3 -1l1 -8l10 -11l9 0l6 5l2 5l3 -5l10 -3l8 11l1 7l15 15l4 7l0 5l11 2l3 3l-1 10l7 8l6 2l3 3l-1 -3l-7 -4l0 -3l-2 -2l-4 0l-2 -2l0 -13l-3 -2l-5 0l-9 -13l-6 -5l-2 -5l-6 -6l-1 -5l-7 -12l-13 2l-7 -5l-2 -5l-3 0l-4 4l-6 2l-7 10l-5 5l-5 2l-3 8l-3 1l-5 -4zM531 139l-5 -4l-1 -6l-4 -2l-10 0l-2 -9l-4 -7l-9 -4l-3 0l-1 7l-11 0l-7 -5l-12 3l-7 9l2 8l-4 4l-8 0l-2 2l2 7l4 -6l10 -4l6 0l7 -12l7 -1l3 2l5 0l12 -10l3 0l5 8l0 7l2 4l3 2l9 -2l5 7zM296 135l14 0l4 -2l6 -8l6 -1l-1 -9l2 -2l13 5l6 -5l4 -1l6 -8l3 2l7 11l7 2l9 11l8 -1l9 10l19 10l6 0l8 9l5 -1l-5 0l-7 -10l-17 -5l-6 -7l-1 -4l-3 -1l-4 -5l-5 -1l-6 2l-6 -8l-7 -4l-2 -6l-6 -1l-5 -5l-4 1l-1 5l-3 3l-4 -2l-2 -5l-3 0l-2 2l-2 6l-9 -3l-6 5l0 6l-7 10l-8 0zM341 105l3 4l-2 3l-3 -3zM808 106l-5 -5l-20 3l-18 -3l-5 6l1 9l-12 12l-4 10l-13 11l0 9l-8 10l-5 3l0 4l8 -3l3 -11l4 -3l1 -7l5 -2l7 -6l1 -11l14 -14l1 -9l2 -3l14 -1l4 5l4 0l6 -5l7 -1l5 4l2 10l3 2l2 -1zM823 100l2 4l3 0zM129 126l7 -1l4 5l3 0l8 -7l10 0l3 -11l-4 -4l4 -3l8 4l11 0l5 3l12 -3l4 1l4 6l9 0l7 6l8 -2l5 5l1 6l3 4l14 0l7 7l1 4l8 6l8 -1l6 -4l2 2l0 11l4 -1l-5 -12l-9 1l-5 -7l-7 3l-12 -12l-9 2l-5 -5l0 -8l-3 -4l-13 0l-8 -6l-4 -6l-5 0l-3 2l-7 -1l-7 3l-3 -2l-2 -6l-6 5l-3 0l-7 -8l-4 5l-5 2l-5 5l-1 6l-3 4l-12 0zM7 112l8 5l2 -2l-1 -8l4 -2l4 5l1 -4l3 -3l3 0l6 7l6 0l2 7l3 1l12 -7l4 5l9 5l0 4l2 2l5 0l4 4l6 2l4 4l4 10l16 17l4 -1l4 -7l3 0l10 6l6 -3l6 -7l7 1l3 -5l12 -11l16 -1l5 -5l6 -2l9 5l3 8l3 1l6 -4l6 5l10 1l5 5l1 4l9 1l2 3l1 9l6 4l2 5l3 0l4 -3l7 4l5 7l4 -1l-5 -2l-1 -3l-11 -10l-4 -7l-14 -7l-4 -6l-5 -1l-6 -4l-7 -1l-6 -7l-9 3l-4 -6l-11 -6l-3 0l-9 6l-8 -3l-16 15l-7 5l-4 0l-10 9l-9 -1l-7 -4l-7 8l-2 0l-12 -13l-10 -19l-5 1l-13 -12l-5 -1l-4 -4l4 -5l-8 -4l-10 1l-7 -2l-5 4l-3 -4l-11 -5l-9 7l-1 4l-3 3zM256 161l4 3l-1 5l-5 -5zM599 120l-4 11l8 -11l6 4l4 0l9 -12l13 -11l4 1l7 8l3 0l6 -6l4 1l8 10l0 6l10 13l2 6l6 5l3 5l4 2l2 5l5 0l5 7l0 8l6 3l6 7l0 -3l-11 -8l-1 -10l-2 -3l-6 -4l-1 -5l-8 -6l-3 -7l-10 -9l-1 -6l-4 -7l-6 -5l-3 -7l-8 -2l-6 6l-9 -11l-5 0l-4 8l-6 5l-2 5l-6 4l-3 5l-3 -4l-7 0zM442 125l5 1l9 -13l17 -13l4 1l4 5l4 0l0 -6l4 2l11 0l16 12l-2 8l7 -1l3 2l11 14l-1 4l10 6l4 0l10 13l0 -3l-5 -8l-9 -9l-5 -1l-2 -5l-7 -4l0 -4l-6 -5l-2 -6l-13 -9l-5 -5l-3 -6l-5 -2l-6 0l-9 4l-6 -4l-5 1l-2 5l-3 3l-4 1l-6 11zM824 84l4 3l-2 -3zM127 118l0 3l4 -2l0 -4l3 -6l5 -5l9 -2l2 2l7 -1l6 -5l3 -6l3 0l7 7l6 -5l9 2l4 -5l6 0l4 3l0 6l8 2l9 8l9 0l7 2l5 6l12 3l1 9l10 8l9 0l5 4l8 -1l4 2l-2 -4l-10 -3l-10 0l-7 -3l-5 -6l6 -7l-19 -3l-12 -10l0 -8l-3 -1l-6 7l-3 0l-5 -4l-5 -1l-7 -9l-8 -2l-7 -5l-4 5l-6 1l-2 2l-10 -3l-6 1l-3 3l1 5l-2 3l-4 0l-6 -3l-5 3l-6 1zM596 108l-3 12l1 2l2 -5l5 -5l0 -5l2 -2l7 2l4 -1l2 -7l2 -2l7 2l6 -11l9 2l4 -6l3 0l2 2l-3 9l1 1l8 -1l4 -6l5 1l3 3l-2 7l1 7l8 7l4 8l11 10l3 9l5 4l2 6l10 11l-2 6l1 2l8 0l1 -6l-2 -6l-6 0l-5 -6l-5 -3l0 -6l-7 -6l-2 -8l-10 -9l-2 -6l-7 -7l0 -7l-3 -8l-8 -7l-2 0l-6 7l-3 -10l-6 0l-4 5l-3 0l-4 -3l-6 0l-2 3l1 5l-2 2l-5 0l-7 10l-8 -3zM520 79l-1 4l3 0l0 -3zM7 95l0 13l3 0l0 -7l2 -2l3 1l8 -8l13 2l8 5l2 0l6 -6l11 9l8 2l3 3l0 6l6 4l5 -1l4 2l5 7l4 1l3 4l1 9l6 6l5 -3l5 1l2 -7l6 3l-4 -5l-2 0l-10 6l-3 0l-4 -6l-1 -7l-7 -4l-7 -10l-3 -2l-7 0l-5 -8l-7 -1l-5 -7l-8 -5l-3 0l-5 6l-2 0l-2 -2l1 -7l-7 -4l-3 -4l-2 0l-4 6l-5 1l-6 8zM7 81l0 4l6 1l5 -4l5 -1l5 -6l5 0l16 10l4 0l5 -5l3 0l7 9l5 2l4 9l7 2l7 5l4 11l6 3l5 5l2 8l13 -4l4 -4l-1 -3l-6 6l-4 -2l-5 2l-3 -3l-1 -5l-9 -5l-8 -15l-1 -8l-3 0l-3 4l-3 0l-4 -8l-15 -16l-7 5l-7 0l-2 -4l-16 -1l-6 6zM119 104l5 2l3 -4l0 -5l4 -3l5 2l7 0l7 -3l14 -13l15 1l4 -3l6 -1l8 2l2 2l0 4l2 2l6 1l3 5l2 0l4 -4l5 0l5 5l9 2l4 4l1 7l3 -3l6 2l1 8l16 0l4 3l1 6l3 3l9 2l4 4l2 0l3 -4l8 1l1 -3l-2 -4l7 -6l5 3l4 0l2 -6l6 -4l5 -7l3 0l3 3l6 -6l20 -1l4 3l5 1l15 18l5 -6l2 0l16 14l2 7l3 0l4 -5l2 0l4 3l3 8l6 1l1 5l6 -2l-4 -1l-15 -17l-8 2l-21 -19l-7 -3l-6 0l-16 -15l-5 5l-5 -1l-7 -5l-10 1l-6 7l-5 2l0 5l-3 3l-4 0l-3 5l-7 -1l-10 12l-3 0l-2 3l-5 -5l-9 2l-7 -11l-12 -3l-3 -3l2 -6l-7 1l-10 -3l-3 -4l-9 -5l-2 -6l-9 2l-7 -4l-5 -6l-7 0l-21 -6l-6 4l-11 3l-11 13l-7 1l-1 -6l-4 -3l-3 1l-2 4l-6 5l-2 7zM134 87l2 -1l1 2l-2 2zM817 70l4 5l2 0l-1 -3zM445 90l8 1l6 3l1 -13l5 -4l8 0l4 3l6 0l3 -2l1 -5l12 6l7 -1l3 9l6 5l7 -1l2 3l0 5l9 6l0 8l6 2l5 8l10 4l3 7l-1 -7l-11 -8l-1 -5l-8 -4l-2 -6l-7 -5l-1 -6l-4 -5l-7 -1l-4 -3l-1 -7l-4 -4l-8 2l-12 -5l-6 3l-7 -1l-6 4l-8 2l-3 3l-1 8zM819 92l-2 -2l-6 -1l-3 -3l1 -6l-6 -8l-8 -4l-7 2l-10 7l-3 0l-4 -5l-2 0l-8 8l0 6l-5 10l-8 5l-6 17l-3 3l-4 1l-3 9l-5 5l-1 5l-9 9l2 0l8 -7l7 -17l11 -5l0 -8l4 -6l0 -4l8 -6l10 -17l11 3l2 5l4 1l2 -2l0 -4l-4 -3l0 -2l3 -2l5 4l7 -8l4 3l2 6l6 8l9 6zM827 68l8 1l0 -2zM352 56l0 2l3 0l0 -2zM7 68l0 3l3 0l5 4l4 -1l3 -5l11 1l5 -4l9 1l3 6l2 0l4 -5l5 0l4 5l6 -2l2 2l0 9l17 9l2 9l5 6l3 7l5 -1l1 2l7 0l4 -3l-1 -3l-10 0l-4 -13l-2 -2l-3 0l-4 3l-2 -9l-5 0l-10 -6l-2 -9l-8 -4l-5 -6l-7 2l-9 0l-7 -2l-5 6l-4 1l-4 -4l7 -6l-2 -2l-7 -1l-5 2l-5 10zM835 53l-2 2l-5 0l0 3l5 -1zM579 52l-12 10l-3 1l-3 -2l4 3l3 -1l11 -8zM292 67l1 4l-2 2l11 1l4 -7l8 0l6 -5l7 -3l6 3l3 0l4 -3l7 3l16 0l9 3l9 10l14 1l7 11l9 -2l11 10l4 6l8 2l6 -7l-7 5l-3 0l-5 -4l-3 -7l-7 -6l-5 -1l-7 2l-4 -5l-1 -7l-2 -1l-4 2l-8 0l-7 -6l-4 -6l-5 0l-5 -7l-2 0l-1 3l-6 4l-8 -2l-2 -2l0 -3l3 -2l0 -2l-7 0l-4 4l-7 -3l-5 6l-11 5l-5 -1zM432 75l6 3l4 -3l3 0l3 -3l0 -4l7 -6l0 -2l11 -8l7 4l14 0l6 -3l8 1l13 12l7 0l2 6l20 19l2 9l6 3l9 12l5 0l2 -5l5 -4l12 2l5 -11l10 -3l2 -10l6 -2l4 5l1 -3l-2 -4l6 -1l15 -16l8 -2l5 6l3 0l5 -5l10 -1l7 7l1 12l6 3l2 3l0 8l4 4l6 12l14 15l3 9l4 6l5 3l1 5l0 -10l-11 -10l-3 -8l-12 -12l-7 -13l-1 -10l-2 -3l-8 -4l-1 -13l-11 -14l-2 2l0 4l-6 3l-6 1l-2 -2l-5 0l-7 2l-5 -4l-2 1l0 11l-10 8l-4 0l-10 6l-2 10l-2 2l-11 -1l0 9l-2 2l-5 -3l-9 1l-6 10l-3 -1l-6 -8l-8 -5l-2 -12l-19 -15l0 -6l-6 -3l-6 -7l-3 0l-3 -4l-7 1l-7 -2l-5 3l-4 0l-6 -4l-4 0l-6 -3l-8 8l-5 1l-8 8l0 4l-4 5zM116 77l2 6l6 1l3 -3l-1 -7l3 -3l8 0l8 -7l4 0l3 4l4 -1l2 -3l-1 -3l12 -8l4 0l7 5l-3 -6l2 -2l23 6l9 9l5 -6l4 0l9 4l5 4l0 4l5 8l15 -2l17 19l10 -1l7 6l2 0l-7 -9l-12 0l-2 -4l-9 -8l-1 -7l-14 0l-3 3l-3 0l-3 -3l-1 -7l-16 -10l-4 0l-5 4l-2 -2l0 -9l-3 -2l-5 1l-2 3l-4 1l-6 -1l-5 -4l-9 0l-10 8l-9 2l-5 4l-10 3l-5 -3l1 4l-3 3l-5 0l-5 9zM818 44l5 3l5 -1l-2 -2zM191 42l-5 2l4 4l3 -3zM97 42l2 5l4 1zM7 55l0 5l2 2l6 -7l4 -2l13 0l19 7l10 -8l3 0l4 11l9 8l1 5l2 2l5 -1l17 13l10 13l3 -1l1 -6l12 -8l6 -8l17 -3l6 -5l12 -2l5 -6l3 0l7 5l10 1l4 2l11 0l6 8l6 0l8 -6l5 4l1 7l3 2l1 7l6 2l15 1l4 3l-2 5l1 3l8 1l17 8l2 -1l4 -9l5 7l8 -5l4 -8l4 -2l5 -6l6 1l1 -2l-4 -5l5 -5l2 0l4 6l12 -1l5 -4l9 -1l7 11l11 8l4 1l8 -4l4 0l3 3l-3 5l3 5l6 3l3 0l2 -2l4 2l0 3l-3 3l1 2l15 -2l2 2l0 6l3 0l3 4l5 -3l-4 -1l-7 -9l-9 -1l-6 -8l-11 0l-3 -3l0 -9l-7 -3l-5 0l-3 2l-5 -1l-3 -3l2 -3l-1 -4l-3 0l-1 4l-2 1l-3 -3l-3 -9l-4 0l-5 3l-7 -1l-4 4l-7 0l-2 -11l-5 1l-13 13l-2 4l-5 -3l-5 1l-6 12l-9 7l-2 5l-11 -3l-11 -14l-10 -2l-8 -11l-9 0l-11 -16l-4 0l-2 6l-2 2l-3 0l-3 -5l-5 -2l-6 -7l-5 -1l-5 -5l-7 1l-1 8l-10 -3l-5 -5l-2 0l-7 10l-10 8l-12 1l-7 4l-8 10l-16 5l-6 -7l-2 0l-14 -13l-5 1l-3 -3l-1 -7l-5 -4l-4 -9l-4 -3l-5 0l-6 -3l-10 1l-12 -6l-6 8l-8 0l-5 4zM307 92l3 2l-1 3l-4 -2zM188 58l3 -1l2 3l-3 2zM835 40l-5 2l5 1zM285 55l3 5l11 1l13 -7l9 1l3 -3l2 -8l2 -2l7 5l5 -2l9 1l6 -2l4 4l5 2l6 8l6 -1l3 3l1 6l2 2l3 0l4 -6l3 0l10 9l2 8l3 1l10 -5l5 7l10 7l8 -4l10 0l0 -6l5 -5l10 -1l14 -8l11 2l8 -7l18 15l5 0l4 3l5 18l8 5l2 7l9 1l2 7l7 8l2 6l4 0l4 -3l5 -1l3 -6l3 0l5 5l4 -1l3 -7l-1 -11l3 -4l4 0l7 -6l7 2l2 -5l11 -14l6 -2l16 0l7 -6l5 4l5 8l8 6l1 5l5 7l1 7l6 7l1 4l9 8l3 9l6 5l2 4l5 3l2 5l6 2l3 7l3 -4l3 -1l1 -8l10 -10l6 -10l13 -15l-2 -7l6 -7l4 -8l6 1l3 6l3 1l6 -2l8 -8l14 4l4 7l8 7l5 1l-5 -6l-7 -3l1 -5l-7 -6l-7 0l-6 -3l-8 8l-3 0l-6 -5l-7 0l-5 4l-2 6l-6 5l-4 17l-6 6l-8 4l-4 13l-7 5l-2 6l-3 1l-8 -5l-2 -5l-11 -12l-2 -8l-16 -18l-3 -9l-5 -5l1 -7l-9 -6l2 -9l-6 -5l-6 -1l-7 5l-5 1l-4 -6l-3 -1l-5 8l-6 2l-12 16l-6 1l-3 -4l1 5l-8 7l-7 1l-3 10l-4 1l-13 12l-4 1l-3 -5l-5 1l-2 -2l-1 -6l-6 -7l-4 0l-4 -3l-1 -6l-6 -1l-2 -2l0 -8l-4 -3l-2 -5l-14 -9l-13 -12l-9 2l-4 5l-6 -3l-6 5l-3 0l-3 -4l-4 -1l-1 7l-3 3l-6 0l-8 9l-8 4l-4 -2l-5 1l-1 -2l2 -3l-7 2l-5 -11l-2 -1l-8 4l-6 -3l-8 -8l-5 -1l-6 2l-5 -7l-5 -1l-4 -5l-8 -2l-4 -5l-22 2l-6 -6l-2 0l-7 14l-9 -1l-17 9zM117 63l3 4l2 0l12 -12l5 0l5 3l10 -5l7 0l2 -2l0 -3l-6 -4l2 -2l14 -1l8 -3l5 -4l6 0l4 6l4 2l9 -1l7 10l8 2l6 6l10 4l4 -1l7 6l8 0l5 2l3 3l-2 6l3 -2l10 -1l8 5l3 -1l2 4l6 3l1 3l-1 3l-5 3l1 3l5 -3l0 -7l3 -5l10 0l6 -3l11 -11l8 -1l7 -4l2 2l0 6l-4 3l0 5l2 0l4 -6l8 3l5 -4l3 0l8 8l6 0l5 9l9 -2l4 4l6 2l3 9l3 0l9 -5l1 2l-3 3l0 3l9 8l9 -1l7 -5l5 0l7 3l3 -4l1 -7l7 -3l6 -9l11 -5l7 1l19 6l3 3l2 8l11 7l5 -1l1 10l4 2l4 -1l2 2l-3 7l7 6l3 0l4 -3l3 3l2 8l4 3l-5 -14l-4 -3l-7 0l-5 -10l-7 -1l-1 -4l2 -6l-2 -2l-9 0l-8 -7l-1 -5l-4 -4l-8 -2l-5 -4l-25 -1l-2 1l-2 10l-3 4l-13 1l0 9l-3 0l-3 -3l-9 4l-10 -5l-5 -7l-10 1l-3 -4l-7 -2l-3 -3l-3 -9l-6 1l2 6l-5 3l-5 -8l-4 -1l-18 -15l-8 1l-8 -3l-4 4l-13 -1l-15 15l-5 0l-8 -4l-5 2l-5 -1l-6 -5l-9 2l-4 -6l-9 -4l-4 -6l-10 -2l-6 -7l-6 2l-2 -1l-4 -9l-9 3l-5 -7l-8 3l-3 -1l-7 -8l-17 3l-7 4l-11 -1l-4 2l-8 9l-11 4l-13 10zM420 108l2 -3l4 0l3 5l-7 1zM7 40l0 6l2 0l7 -4l7 0l6 -7l15 7l5 -3l5 0l8 8l5 1l6 7l8 2l2 2l1 9l11 2l3 3l-1 6l2 3l2 0l2 -3l4 9l8 0l-5 -5l0 -7l-5 -1l-5 -6l-13 -7l-1 -9l-10 1l-5 -6l-8 -2l-4 -7l-5 -4l-4 0l-4 3l-6 0l-13 -7l-3 1l-6 8zM820 50l-7 -1l-3 -3l-2 -7l-6 -2l-3 -7l-2 -1l-18 9l-8 -2l-2 1l-3 5l-6 3l0 4l-12 20l-7 5l-2 8l-7 10l-4 0l-1 2l3 8l-4 4l-2 -2l0 4l1 1l5 -2l1 -10l10 -11l0 -8l10 -7l3 -9l7 -5l0 -10l2 -3l3 0l3 3l4 0l13 -7l11 1l6 -2l6 4l0 4l-3 4l1 1l9 0zM293 52l9 -8l4 0l4 3l7 0l10 -14l2 0l7 7l12 -3l8 1l6 -3l4 2l11 13l7 2l3 -4l4 -1l4 7l7 4l4 5l13 1l5 10l3 1l3 -2l-2 -7l4 -5l12 -2l9 -7l7 -1l1 -4l5 -4l8 0l4 3l4 0l3 -4l4 0l7 5l5 0l5 -3l10 8l4 7l7 0l2 2l1 7l2 2l4 0l8 11l5 1l3 3l0 3l-3 3l0 5l4 1l3 -2l3 5l5 -1l2 -5l9 2l8 -7l10 2l3 -9l4 -4l1 -5l4 -3l3 3l4 1l8 -6l2 -3l-2 -7l3 -3l4 -1l5 -7l4 -1l14 3l10 -2l13 14l2 4l-1 8l2 1l4 -2l9 16l-1 5l5 7l0 7l8 7l9 13l6 1l1 6l4 5l1 -6l7 -4l3 -10l7 -7l7 -14l8 -5l1 -12l9 -7l0 -6l2 -3l11 5l8 -6l11 0l8 4l6 7l9 4l-10 -8l-4 -11l-6 3l-14 -2l-8 4l-3 -1l-4 -6l-8 8l1 6l-10 9l-2 4l1 7l-3 3l-5 1l0 4l-5 9l-8 7l-3 11l-4 1l-3 3l-10 -7l-7 -9l-3 -7l-5 -6l-13 -31l-17 -22l-7 -6l-1 -6l-5 1l-5 6l-16 0l-6 9l-6 2l0 10l-3 3l-3 0l-3 -4l-4 4l-7 3l-1 4l-10 12l-10 0l-5 3l-5 -1l-3 1l-2 4l-4 -1l-18 -20l0 -5l-2 -2l-5 -1l-7 -8l-6 0l-4 -6l-14 -12l-17 0l-5 -3l-4 0l-6 5l-13 3l-6 4l-7 8l-8 0l-6 3l-7 8l-6 -4l-6 -1l-6 -5l-8 -2l-6 -10l-5 -1l-8 2l-5 -2l-7 -10l-6 -1l-6 -4l-8 3l-7 -4l-4 8l-2 0l-6 -7l-2 0l-7 9l-11 0l-9 5zM312 43l3 -1l1 2l-3 1zM82 28l2 4l4 2zM751 27l-5 7l3 -1zM814 37l-9 -7l0 -4l-4 -3l-8 3l-12 -1l-5 5l-11 -4l-9 9l-2 10l-5 11l-8 7l-5 0l-2 2l0 9l-6 5l0 6l-5 3l0 5l-3 6l2 -1l1 -6l8 -5l5 -10l1 -7l6 -3l7 -8l8 -17l7 -4l3 -7l11 2l5 -5l16 -2l4 6l10 9zM7 20l0 14l16 -9l6 1l11 7l23 -5l4 3l-4 5l0 5l2 2l3 0l3 -6l12 11l7 1l3 3l-2 6l3 4l12 5l9 1l-2 -3l-6 0l-10 -3l-4 -4l1 -7l-3 -3l-7 -1l-15 -14l-3 -5l-6 -3l-9 3l-9 -5l-12 1l-3 -3l-4 -1l-5 6l-3 0l-4 -6zM9 23l0 4l-2 -2zM769 17l-1 2l3 1l0 -3zM120 53l7 2l10 -8l12 -6l6 -6l5 -2l10 1l7 -6l7 1l12 -9l10 10l1 3l8 1l6 4l5 0l5 8l14 -1l2 8l18 4l2 2l1 6l5 6l0 -4l2 -2l4 1l6 -3l-5 -5l-5 3l-4 0l-3 -4l-6 -2l-4 -5l-2 0l-2 3l-3 0l-2 -2l-1 -9l-12 0l-5 -7l-8 0l-5 -5l-8 1l-11 -12l-4 -2l-3 0l-8 6l-12 0l-6 2l4 3l-1 3l-2 0l-2 -3l-12 6l-10 8l-4 0l-3 -4l-2 0l-5 6l-3 1l0 3l3 3l-2 2zM71 17l1 4l7 4zM579 62l6 -1l9 -11l6 -1l5 -3l4 1l4 -5l10 -5l0 -5l2 -2l7 1l2 -4l6 -5l7 0l6 4l7 -1l23 25l3 10l10 11l1 9l7 6l-1 7l5 3l4 6l8 3l0 11l2 1l0 -11l-4 -4l-3 1l-9 -11l-1 -11l-6 -2l-2 -9l-8 -11l-3 -11l-7 -4l-11 -15l-5 -4l0 -9l-2 -2l-4 1l-5 5l-11 -3l-4 1l-9 8l-4 1l-8 8l-4 0l-2 4l-11 9l-7 1l-6 3l-1 8zM660 16l1 3l-2 2l-2 -3zM375 14l1 2l2 0zM310 16l3 2l3 -1l-1 -3zM809 13l0 3l3 1zM760 13l-6 9l6 -5zM7 15l5 -1l5 5l3 -4l9 -2l4 5l11 0l4 -5l6 0l7 4l2 5l23 22l7 1l7 14l6 2l8 -1l-12 -3l-11 -16l-7 -2l-4 -3l-2 -5l-5 -1l-6 -7l-1 -10l-2 -2l-7 1l-11 -3l-6 7l-4 0l-5 -7l-3 0l-3 2l-7 -1l-6 4zM468 14l7 2l5 -3l6 1l9 -3l9 0l6 2l-6 -5l-8 0l-5 3l-3 0l-4 -3l-7 0l-8 4zM37 8l-1 2l3 1l0 -3zM114 50l4 -3l4 -7l4 0l8 -6l8 1l6 -5l8 -1l3 -3l3 -10l5 3l16 0l2 -1l4 -8l5 1l8 5l13 0l2 2l-5 5l1 2l5 0l0 -6l2 -2l3 1l12 13l5 2l4 -3l1 4l-3 1l0 2l9 -1l6 7l4 2l2 6l5 3l12 -2l-2 -3l14 -3l3 -5l8 -3l4 -4l12 -1l8 -11l2 0l6 6l5 -6l10 3l4 -6l3 0l6 9l12 3l0 7l2 2l15 0l6 4l2 6l3 2l4 0l3 -6l11 3l3 4l-9 4l7 4l4 -1l4 -6l2 0l7 -6l6 2l2 -3l-2 -7l3 -3l17 2l7 -3l6 -5l4 0l7 4l14 -2l12 10l6 -5l3 3l0 10l6 3l6 7l6 1l3 3l5 11l8 7l2 4l4 1l0 -10l3 5l4 0l4 -4l10 1l4 -6l6 -2l6 -7l4 -1l2 -4l4 -4l4 -1l3 -5l5 0l8 -11l9 -1l5 2l6 -6l9 -1l3 3l2 6l4 3l2 6l19 22l3 14l6 11l5 5l1 6l6 5l5 8l3 0l2 2l4 -4l2 -5l7 -5l2 -9l3 -3l1 -5l6 -5l1 -5l12 -12l0 -7l7 -6l3 -5l3 0l4 7l3 0l5 -5l10 3l6 -2l8 0l5 3l3 8l1 -6l-4 -4l-9 -2l-4 -3l0 -2l5 -5l-1 -2l-7 3l-6 0l-2 3l-22 2l-2 7l-7 5l-2 8l-10 9l-1 7l-10 11l-1 10l-8 6l-5 8l-7 -6l2 -8l-2 -2l-5 1l-2 -2l0 -4l-8 -6l0 -7l-6 -6l0 -9l-10 -10l-3 -7l-6 -5l-1 -5l-8 -8l-1 -4l-4 -4l-10 1l-4 -3l-6 1l-5 6l-4 1l-7 7l-6 2l-4 7l-6 3l-6 8l-10 1l-8 3l-1 7l-2 2l-7 1l-3 3l-3 -1l-1 -6l-5 -8l-2 0l-12 -13l-7 0l-2 -8l-12 -12l-7 -1l1 -6l-5 -3l-3 -5l-8 0l-5 4l-3 -6l-6 0l-10 7l-16 -3l-4 4l-8 -1l-13 10l13 -5l6 2l4 -4l8 -4l4 1l3 3l4 0l10 -8l2 0l1 3l-3 3l1 5l16 -4l7 2l4 7l6 1l11 11l-1 6l4 5l7 1l3 3l3 8l3 2l6 -2l3 3l0 5l-5 2l-4 0l-5 -5l-6 -11l-7 -2l-5 -4l-6 -8l-1 -9l-4 -3l-4 0l-4 -7l-5 4l-3 0l-3 -3l-8 3l-5 0l-5 -4l-9 0l-4 -2l-6 2l-5 7l-11 -2l-13 4l-4 8l-5 -2l2 4l0 4l-2 1l-5 -6l-6 0l-5 -4l-3 0l-5 5l-9 -9l-5 -2l-10 0l-2 -2l-1 -7l-10 0l-5 -5l-1 -4l-4 -3l-4 0l-5 4l-13 -2l-10 3l-10 12l-13 -1l0 4l-3 3l-3 0l-11 6l-16 0l0 5l-2 2l-3 -3l0 -3l-19 -17l-9 0l-13 -13l-8 -3l-13 0l-10 -6l-7 0l-4 3l2 4l-2 3l-6 -7l-16 6l-1 7l-3 4l-7 -1l-9 6l-8 2l-4 4l-4 1zM824 30l-6 -3l-4 -6l-6 -1l-6 -10l-6 -1l-4 -3l-5 6l-9 5l-3 -3l-11 -4l0 8l-10 10l-3 8l-8 7l-2 8l-7 6l-6 14l-3 3l-1 6l-7 6l-5 -3l-3 -8l-7 -6l-3 -10l-13 -18l-6 -5l0 -4l-20 -25l-3 0l-4 4l-6 0l-7 -4l-7 1l-9 9l-4 0l-4 6l-8 1l-5 5l-2 7l-5 6l-4 -3l-7 8l-5 1l0 2l9 -5l9 0l7 -7l1 -8l4 -4l10 0l16 -15l4 0l6 3l17 -3l3 3l1 8l9 10l2 7l7 2l4 4l13 29l7 3l2 9l3 3l2 10l3 -6l-1 -7l6 -5l1 -4l5 -5l3 -11l12 -9l1 -8l4 -4l4 -9l11 -12l2 -6l4 0l6 7l3 0l4 -3l6 5l2 -1l2 -6l2 -2l3 0l6 7l14 7l3 3l-1 5l3 -1zM766 6l8 3l3 -2l4 1l4 -3zM286 33l9 0l5 -9l9 1l4 -3l5 -1l4 -4l6 0l4 -4l16 1l9 -2l8 5l3 7l10 -1l5 10l2 0l4 -5l3 0l3 3l9 -1l2 3l-1 5l2 2l5 0l3 -3l-6 1l-1 -5l-7 -5l-5 0l-5 -3l-7 0l-5 -4l-8 -1l-3 -8l-33 -3l-2 -4l-5 1l-1 5l-2 2l-4 0l-5 8l-6 0l-2 -4l-14 14l-5 0z"/><path fill="#ffffff" fill-rule="evenodd" d="M792 1265l-8 0l-5 5l-4 0l15 -1zM93 1267l1 3l9 0l0 -4l-2 -2l-6 0zM815 1258l1 2l8 -1l6 3l4 0l-9 -7l-5 0zM250 1249l-2 -1l-2 3l3 1zM773 1246l0 2l4 -1zM96 1245l-2 3l1 2l4 1l2 -4l-2 -2zM816 1243l17 3l-1 -2l-8 -4l-6 1zM792 1238l-4 -1l-4 -5l-1 4l2 3l-6 7l7 -3zM814 1226l0 2l10 -1l6 4l3 0l-4 -7l-5 -4zM784 1210l-9 8l8 6l1 -2l-2 -3l3 -3l6 1zM171 1208l0 2l3 0l0 -2zM95 1206l2 4l4 -2l0 -3zM488 1202l-1 2l3 1l1 -2zM815 1199l1 2l2 0l6 -5l9 5l-1 -6l-7 -5l-6 3zM93 1187l3 4l4 0l3 -3l-2 -4l-6 0zM772 1176l2 12l3 4l3 0l3 -4l2 0l4 4l3 -1l1 -8l-9 -11l-4 1l2 12l-4 3l-3 -1l-2 -12zM816 1177l3 1l6 -3l5 3l5 0l-2 -3l-3 0l-5 -4l-2 0zM250 1170l-2 -2l-1 3zM94 1165l-1 4l2 2l6 0l2 -2l-1 -4l-2 -1zM830 1160l-3 -3l-4 -1l-8 4l-2 3l9 -3zM247 1149l-1 2l3 1l0 -2zM98 1145l-3 2l0 3l2 1l4 -2l0 -2zM831 1147l-7 -6l-9 3l0 2l9 -1zM788 1128l-5 2l-2 7l-3 3l-2 0l-4 -5l1 7l6 5l3 6l6 -2l3 -3l-7 -7l3 -3l4 0l3 3l-3 -7l0 -5zM815 1127l0 2l2 1l7 -2l6 4l3 -1l-9 -8zM815 1109l0 2l10 -2l4 3l5 0l-10 -8zM771 1109l2 5l3 2l3 0l8 5l8 -1l-11 -16l-4 1l-4 4zM94 1106l0 3l7 1l-1 -5l-4 -1zM815 1095l9 -3l8 2l1 -2l-4 -3l-6 -1l-8 5zM93 1086l2 5l7 -1l-1 -6l-6 0zM771 1085l1 4l3 1l6 7l10 1l3 -2l-1 -10l-7 -3zM833 1076l-3 -3l-7 -2l-11 9l12 -5l7 3zM245 1069l1 3l5 -1l-1 -3zM95 1064l-2 3l1 3l7 1l1 -5l-2 -2zM771 1073l2 2l7 0l0 -9l2 -2l8 5l4 -1l1 -2l-5 0l-3 -4l-12 0l-3 4zM795 1056l-2 1l1 6zM832 1059l-8 -7l-9 8l9 -2l4 2zM246 1050l1 2l3 0l-1 -3zM96 1046l-1 3l4 1l1 -3zM815 1035l2 1l7 -5l5 5l4 0l-1 -4l-8 -7zM791 1023l-5 11l-3 3l-3 -2l-2 -7l-2 -1l-5 4l3 5l2 9l10 -1l9 -6l0 -5zM814 1017l9 -3l5 2l5 -1l-4 -3l-7 -1zM771 1008l1 4l1 -3zM175 1008l-2 -1l-1 3l2 0zM94 1006l2 4l4 0l2 -3l-3 -3zM815 1001l4 1l5 -2l9 3l-2 -3l-6 -3l-8 2zM794 996l-11 6l-9 -5l-3 0l0 3l12 10l-1 3l-5 2l3 5l2 1l5 -8l3 0l4 -3zM94 985l-1 4l2 2l5 0l3 -4l-2 -3zM815 985l10 0l6 3l2 -1l-9 -6zM247 969l-1 3l3 1l1 -3zM94 965l0 4l2 2l4 0l3 -3l-2 -4zM771 969l0 4l3 4l16 4l2 -2l0 -5l3 -2l0 -5l-10 -6l-6 5zM780 973l3 -1l1 3l-2 1zM815 966l1 3l9 -3l8 4l-4 -8l-5 -4zM94 947l0 2l3 2l4 -1l0 -3l-3 -2zM795 939l-6 1l-5 3l-12 -1l-1 3l4 4l-4 5l0 3l6 1l6 -8l3 0l4 -5l4 3l-6 3l0 4l4 2l3 -7zM833 940l-5 -6l-4 -2l-8 7l-1 4l2 0l7 -6l7 5l2 0zM174 927l-2 0l-1 2l2 1zM96 927l1 3l1 -2zM488 922l-1 3l3 1l1 -3zM816 918l1 2l8 -1l9 3l-3 -4l-7 -4zM795 914l-4 0l-8 8l-12 0l0 4l4 1l-3 3l0 5l10 1l5 -3l4 -5zM171 908l1 2l3 0l-1 -3zM102 906l-3 -2l-3 1l-1 5l4 1zM815 902l9 0l4 3l4 0l-7 -6l-4 0zM796 894l-10 1l-2 6l-8 -1l-5 -5l0 20l9 1l6 -7l7 -2l1 -3l-3 -4l5 -4zM93 886l2 5l6 0l2 -3l-2 -4l-6 0zM831 889l-1 -3l-6 -3l-10 5zM815 873l2 1l8 -2l9 3l-10 -7zM246 867l0 3l3 1l1 -3zM796 866l-12 13l-2 0l-4 -4l-7 0l-1 11l2 1l3 -6l9 1l7 7l3 -4l-2 -8l4 -3zM94 866l1 5l7 -1l-1 -5l-4 -1zM770 863l1 4l6 -1l-2 -4zM815 857l4 1l6 -2l7 2l-4 -5l-3 -1l-5 1zM245 850l1 3l5 -1l0 -2l-2 -1zM398 848l1 2l2 -1zM96 848l1 2l4 -1l-1 -2zM770 838l0 18l7 1l7 7l2 0l10 -12l0 -14l-4 2l-9 11l-3 0l-3 -4l-1 -6l-3 -3zM814 837l0 2l2 1l9 -1l8 2l-5 -6l-4 -2zM171 828l0 3l4 0l0 -3zM830 819l-2 -5l-3 -2l-11 5l1 2zM785 807l-2 -1l-3 3l3 1l2 -1zM94 805l1 5l6 0l2 -3l-2 -3zM770 805l0 25l8 -3l5 5l6 2l3 -1l3 -4l-3 -7l4 -6l0 -4l-3 0l0 3l-2 2l-3 0l-2 -2l-8 0l-4 -4l0 -6l3 -2l-1 -1zM817 798l4 1l3 -3l3 3l5 1l3 -3l-11 -5zM769 785l2 11l15 1l9 4l2 -1l0 -15l-6 5l-6 -4l-3 0l-3 8l-3 0l-3 -6zM93 784l2 6l9 0l-2 -5zM39 776l5 4l4 -1zM817 779l2 1l5 -2l5 3l5 -1l-2 -3l-7 -3l-4 1zM245 770l1 3l5 0l-1 -4zM96 765l-2 5l6 1l2 -3l-1 -3zM797 762l-3 1l-2 7l-15 1l-5 -7l-3 1l0 5l3 6l3 2l6 0l3 -4l3 0l1 2l-3 3l5 4l7 -6zM817 761l1 2l7 -1l3 2l5 0l-2 -3l-6 -3l-6 1zM247 749l-1 3l3 1l1 -3zM797 747l-7 1l-6 5l-4 0l-3 -3l-8 3l0 4l9 2l8 -3l10 -1zM814 745l10 0l7 4l3 -1l-9 -6l-9 1zM50 729l-3 2l0 2l3 -2zM170 730l1 2l4 -1l-1 -3zM797 726l-3 3l-4 1l-5 6l-4 -1l-4 -5l-8 0l0 7l6 4l10 -1l7 2l5 -6zM813 728l0 2l12 -1l10 5l-1 -3l-6 -2l-4 -4zM487 723l3 1l-1 -2zM53 719l-3 1l2 1zM32 710l6 6l11 -3l-9 -1l-6 -3zM812 713l5 1l7 -2l8 5l3 0l0 -2l-2 0l-8 -9zM644 704l-2 3l3 1l1 -3zM93 706l1 3l4 2l5 -2l-3 -5l-5 0zM489 700l-3 2l2 3l3 -2l0 -2zM59 704l-2 -4l-5 3l4 2zM774 696l-5 8l0 17l2 0l1 -4l3 -3l4 0l3 4l0 3l4 2l1 -7l6 -5l1 -6l4 -3l0 -2l-4 1l-5 7l-9 1l-2 -3l2 -7l-2 -3zM30 690l6 2l3 3l6 -2zM94 685l0 6l8 -1l0 -4l-2 -2zM38 681l3 5l3 -5l4 5l9 2l2 -1l-8 -2l-6 -5zM816 686l0 2l2 0l6 -6l5 5l5 1l-1 -5l-9 -7zM776 675l-8 5l0 5l2 -1l5 8l6 1l3 3l1 4l1 -10l6 -2l2 -6l4 -3l-10 3zM777 684l3 2l-1 4l-3 -1zM656 677l-3 -2l-5 1l0 8l-2 2l-2 0l-2 -5l-3 -1l6 7l4 -3l0 -5l2 -2zM246 669l1 3l3 0l0 -3zM95 666l0 5l6 -1l0 -3l-2 -2zM831 663l-3 -3l-4 -1l-8 7l0 2l8 -5zM52 659l-3 0l-3 3l-9 0l2 3l5 0zM768 656l0 16l3 0l5 -4l10 1l12 -5l0 -6l-6 3l-5 0l-4 -5l0 7l-2 2l-6 0l-2 -2l2 -7zM655 657l-4 -2l-14 4l-1 2l6 -2l8 0l4 5zM172 648l-1 2l3 2l1 -2zM39 647l-3 0l-2 4l5 0zM832 650l-8 -4l-6 3l-2 3l1 1l6 -3zM487 640l0 3l4 -1l-1 -2zM337 639l1 3l4 -1l0 -2zM768 636l0 14l4 1l9 -2l7 -4l6 0l1 4l3 2l-1 -12l-21 4l-3 -1zM661 636l-10 1l-1 7l-3 3l-7 2l12 -1l1 -6l6 -1l2 -2zM818 638l7 -1l10 3l-11 -5zM36 638l13 0l7 -3l-6 0l-3 -7l-4 -1l-2 7zM655 627l2 2l3 0l0 -3zM95 625l1 4l5 0l-1 -4zM831 627l-7 -6l-9 3l2 2l7 -1zM492 620l-6 1l-1 3l4 2zM771 617l-4 11l7 4l1 5l16 0l7 -3l1 -10l-2 -4l-4 2l-7 0zM777 625l2 2l-4 3l-1 -3zM661 617l-8 0l-7 6l-11 -4l3 2l-2 9l5 0l3 -3l6 -2l4 -6zM300 617l0 2l3 0l0 -2zM35 619l11 2l7 -4l-3 0l-3 -4l-5 -1zM246 609l2 2l3 -1l-1 -2zM93 607l3 4l5 0l2 -2l0 -3l-2 -2l-6 0zM56 596l-6 5l-8 2l-7 0l-3 -3l-3 0l-1 2l3 3l13 0l7 2l2 -2l-1 -4zM815 604l3 2l6 -4l8 7l2 0l-3 -5l0 -5l-7 -5zM767 598l0 5l3 0l6 8l7 2l5 4l3 0l2 -3l-2 -2l-6 0l-2 -2l3 -6l9 -1l1 6l3 1l0 -7l-4 0l0 -3l4 -2l-1 -3l-4 2l-2 5l-10 0l-3 4l-2 0l-3 -4l2 -10l-6 2zM635 614l3 0l2 -2l0 -4l3 -2l9 2l2 -6l7 -2l0 -7l-4 0l-9 5l-3 0l-5 -7l-5 -1l0 14l4 3zM246 588l0 3l3 1l1 -4zM93 587l0 3l2 1l8 -1l-3 -6l-3 0zM770 583l-1 5l3 0l1 -4zM56 582l-5 -1l-7 9l-6 -7l-10 0l-1 2l6 -2l4 3l2 6l8 1l2 -2l0 -6l4 -3zM832 582l-4 -4l-5 0l-10 9l0 2l10 -7zM31 570l-1 3l1 2l2 0l1 -3zM767 570l0 5l2 -3l2 0l13 18l7 -5l5 0l3 2l0 -14l-2 -1l-2 2l-1 6l-3 3l-4 0l-4 -4l1 -6l-7 1l-6 -6zM245 569l0 2l2 1l3 -1l0 -3zM634 569l0 2l8 0l3 2l-1 6l2 3l8 1l5 -5l2 2l0 -3l-5 0l-3 3l-3 -1l2 -5l-1 -5l-10 -2zM97 564l-2 4l2 2l3 0l2 -2l0 -3zM816 569l0 2l2 0l7 -4l9 3l-10 -7zM767 551l1 11l4 0l4 -6l7 0l3 3l-9 6l3 3l10 1l5 -4l4 0l0 -7l-6 0l-10 -6l-6 2l-3 -4zM29 551l6 11l5 4l7 2l4 6l5 -6l4 -1l-3 -3l2 -3l-1 -3l-19 -2l-9 -6zM634 550l1 12l7 1l3 -2l8 2l9 -3l0 -2l-5 -4l-2 -4l-4 0l-3 6l-10 5l-2 -3l5 -3l1 -3l-2 -3zM397 550l3 1l1 -2zM830 551l-3 -4l-4 -1l-5 2l-5 5l0 2l3 0l7 -4zM777 542l-2 6l7 0l0 -3zM481 542l0 2l3 1zM488 546l5 0l6 -4l5 2l0 -2l-12 -2zM335 538l3 3l4 -1l-1 -2zM74 536l1 2l4 0l-2 -2zM634 534l0 4l5 7l6 -3l5 0l5 3l7 0l0 -3l-5 -4l-2 -4l-6 0l-4 3l-1 -4l-5 -3zM767 530l0 16l3 0l5 -8l4 0l9 4l4 7l7 -2l0 -8l-3 -4l-13 1l-6 -4l-7 1l-2 -4zM90 525l5 5l7 1l-2 -5zM816 531l5 1l3 -2l4 3l3 0l-1 -6l-6 -4zM29 522l0 12l8 -3l2 2l-2 2l0 3l3 3l12 0l2 2l6 -1l-2 -4l2 -3l-1 -7l-3 0l-4 6l-4 0l-4 -5l-8 -1l-5 -6zM72 519l1 2l8 0l-5 -3zM484 527l8 1l-1 -8l2 -2l7 1l-5 -2l-9 1l-2 -2l0 4l4 3zM634 516l0 5l9 6l6 1l13 -5l0 -3l-3 0l-4 -6l-8 -1l-5 -4l-2 0zM245 509l2 2l5 -1l-2 -2zM321 507l2 3l5 -2l-2 -2zM28 508l1 8l9 8l4 0l5 -5l4 0l4 -3l3 0l2 5l2 1l-4 -10l-14 2l-4 -5l-9 -3zM34 511l2 -1l1 2l-1 1zM101 504l-6 1l-3 6l8 0l2 -5zM766 504l1 15l11 1l4 -5l2 0l2 4l-5 3l3 5l6 -2l9 3l1 -1l0 -5l-7 -2l-3 -3l-2 -6l-12 1l-8 -9zM657 501l-1 6l3 2l2 -2l0 -5zM818 507l1 2l3 -3l4 -1l3 3l5 1l0 -2l-5 -2l-5 -5zM482 507l3 -2l3 -6l8 0l5 -2l3 1l0 -2l-12 2l-8 -3zM28 496l1 3l2 0l5 6l8 1l2 2l6 -1l7 -8l3 2l-1 -4l-7 0l-1 4l-3 2l-2 -2l1 -4l-10 -3zM36 501l3 -1l2 2l-3 2zM767 491l-1 7l10 -3l2 2l0 6l10 -1l5 3l4 6l3 0l0 -9l-7 -8l-4 -1l-4 6l-3 0l-3 -6zM660 488l-9 -1l-2 2l1 6l-3 2l-6 -5l-5 0l-2 2l0 15l6 -9l11 2l5 -4l6 -1zM828 487l-4 -3l-5 3l-2 4zM93 485l1 4l3 2l7 -2l-3 -5zM769 481l0 3l3 0l1 -3zM133 481l16 4l-3 -2zM832 476l3 3l0 -2zM476 482l8 5l6 -1l3 -5l2 0l4 4l8 0l-3 -3l-4 0l-7 -6l-5 0l-1 7zM30 474l-2 8l1 6l18 4l2 -2l-1 -7l2 -2l3 0l3 3l1 5l5 0l-1 -8l-8 -3l-4 0l-5 3l-9 -1l-3 -3l0 -3zM43 484l4 2l0 3l-2 2l-5 -3zM828 474l-5 -3l-6 3l-2 3l8 -3zM766 472l0 3l2 -2l3 0l10 12l13 4l-1 -7l4 -4l3 4l0 4l0 -10l-3 -5l-9 12l-5 -1l0 -2l4 -4l-1 -3l-2 -1l-4 4l-3 0l-5 -4zM663 473l-3 -2l-11 3l-2 3l-3 0l-3 -3l-4 0l-3 2l-1 4l7 -1l6 4l5 -2l6 -6l6 0zM645 468l-1 4l4 0l0 -3zM94 466l0 3l2 2l5 0l-1 -5zM722 463l3 1l2 -2zM507 468l-6 -7l-5 2l-3 5l-5 -5l-3 0l-4 3l-7 1l0 8l6 1l5 -7l9 1l5 -6l3 0l5 6zM28 464l0 4l3 -3l3 0l2 2l0 5l2 3l2 0l-1 -8l-3 -3l2 -2l7 3l6 8l4 0l3 -3l4 3l1 -2l-4 -7l-8 3l-12 -8l-3 0l-4 4zM820 461l15 3l-1 -3l-10 -3zM130 459l17 12l20 4l-17 -6l-18 -11zM800 463l-6 -5l-1 -4l-3 -3l-3 0l-5 4l-16 -2l0 5l3 0l3 3l-3 5l0 2l7 1l7 -4l8 1l3 -2l3 0l3 3zM661 449l-2 0l0 4l-2 2l-6 1l-8 6l-3 -3l0 -5l-4 -1l-3 10l5 5l2 0l10 -9l6 -1l7 8l0 -6l-4 -6zM245 449l3 3l3 -1l0 -2l-2 -1zM95 448l4 2l-1 -3zM141 446l13 11l9 4l4 -1l-13 -7l-4 -4zM173 446l1 2l4 -1l-2 -2zM834 446l-10 -4l-9 8l8 -4l5 3l5 0zM474 452l11 2l9 -1l6 -3l9 10l0 -3l-5 -6l-1 -9l-9 0l-1 4l-7 5zM801 445l-2 -8l-5 -1l-5 5l-4 1l-14 -5l-3 0l-3 4l0 3l4 -1l5 7l6 0l6 -5l6 0l7 8zM778 444l1 2l-2 2l-1 -2zM632 438l1 5l16 6l11 -7l4 1l-2 -3l-4 0l-5 4l-14 -3l-1 -6zM59 434l-2 0l0 8l-8 3l-4 7l-3 -1l-1 -6l-7 -2l-4 -5l-2 2l1 16l4 1l7 -2l6 2l5 -9l3 0l8 5zM353 432l6 1l-2 -2zM832 427l0 2l3 1l0 -2zM343 426l3 3l4 1l-2 -3zM320 427l2 3l6 -1l-1 -3zM94 426l0 3l2 2l6 -2l-2 -4zM664 436l-1 -7l-3 -5l-12 6l-5 0l-11 -4l1 3l6 1l6 5l2 0l5 -5l7 -1zM473 423l0 13l2 5l-2 6l4 -1l0 -7l2 -2l9 0l6 -5l7 4l7 1l-2 -3l-6 -1l-6 -8l-2 1l-2 6l-3 3l-3 0l-5 -5l0 -9l-3 -1zM801 425l-3 -6l-4 0l-4 5l-8 -2l-5 3l-4 0l-7 -5l-1 10l6 0l11 4l4 -5l15 0zM830 423l-6 -6l-8 7l0 2l8 -3l6 2zM61 413l-4 1l-1 6l-9 10l-3 0l-4 -4l-2 -5l-10 1l-1 7l4 0l4 -4l2 0l4 5l10 2l3 -4l6 -3l3 1l0 -3l-3 -3zM343 413l2 1l6 -3l4 0l-10 0zM664 415l-3 -6l-3 0l-6 7l-10 -6l-10 1l0 9l6 4l3 0l4 -7l10 1l4 -5l5 6zM319 410l3 2l7 -1l-5 -4zM95 405l0 6l5 0l2 -2l-1 -5zM473 412l0 2l10 0l-5 -8l2 -2l4 0l3 2l2 6l3 3l7 2l4 4l6 0l-5 -9l-11 -2l-5 -7l-11 1l-1 5zM831 406l-3 -3l-5 -1l-8 4l-2 3l10 -3zM765 405l1 5l4 3l7 -2l4 5l3 1l8 -5l9 4l-2 -4l-14 -10l-5 7l-8 0l-4 -4zM588 401l-4 1l-1 2l4 -1zM26 402l0 7l14 0l8 8l3 -1l5 -7l8 0l-3 -3l-14 -1l-3 -7l-1 4l-3 3l-5 -1l-5 -7zM186 396l6 4l9 1l-6 -4l-6 1zM632 397l0 10l4 -1l7 -6l4 1l1 6l4 4l7 -10l5 6l-2 -6l0 -5l2 -3l-1 -2l-5 0l-5 3l-13 -3zM472 393l7 7l6 -1l7 -4l10 1l4 3l3 6l0 -7l-2 -3l-7 0l-8 -6l-15 0zM212 389l4 2l-1 -2zM248 388l-1 3l3 0l0 -2zM384 386l2 2l9 2l7 0l5 -2zM631 383l0 4l2 0l1 -2zM596 384l-12 -1l-8 2l-4 3l7 0l12 -4zM93 383l3 7l5 0l4 -3l0 -2l-3 -2zM801 384l-5 -2l-12 0l-2 2l0 3l4 1l3 4l-2 2l-5 0l-4 -6l-3 0l-6 -5l-3 0l-1 18l4 -5l4 1l2 7l3 -1l3 -6l5 0l6 4l2 -1l1 -10l2 -2l4 5zM722 382l-11 4l6 -1zM199 382l-7 0l-8 5l5 0zM831 385l-7 -7l-11 14l5 0l5 -3l7 1zM27 379l-2 7l1 3l14 -1l6 4l5 7l2 0l0 -7l5 -4l4 4l2 8l-1 -10l-6 -7l-5 4l-16 -1l-4 -3l-1 -6zM472 380l0 3l4 2l7 0l4 -3l6 1l9 -3l3 5l5 3l-4 -10l-5 -3l-6 0l-3 3l-6 0l-8 -4zM571 372l13 -2l-8 0zM248 369l-2 1l1 2l2 0zM395 372l7 1l1 -2l-2 -3l-3 0zM667 382l-2 -1l0 -4l-4 -3l-1 -7l-8 3l-1 3l-5 4l-11 -3l-4 1l0 2l4 0l9 9l21 0l0 -3zM171 366l1 3l3 -1l-1 -2zM25 371l1 2l5 -3l8 11l8 0l5 -7l8 1l3 2l0 7l4 4l3 0l-5 -2l-1 -6l2 -4l9 4l14 2l-11 -5l-11 -2l-5 -8l-2 0l-2 4l-15 -3l-5 6l-4 -7l-4 -1zM643 364l1 2l3 0l-1 -3zM203 370l-2 -3l1 -4l-5 -1l-6 4l-9 1l-2 2l4 -1l5 3l7 -2zM472 362l1 3l8 3l19 0l10 8l-3 -6l3 -4l0 -3l-15 -2l-14 4l-4 -4zM338 363l4 -1l-3 -1zM799 359l-3 -1l-1 4l-3 3l-7 3l-5 0l-12 -6l-1 4l3 4l-5 3l0 3l11 2l7 -3l6 -7l5 -1l4 3l0 7l3 2zM281 358l4 3l8 2l12 -1l0 -2l-3 -1l-8 1zM67 358l4 5l16 7l12 2l5 -1l-4 -4l-10 1zM585 355l-19 3l17 -1zM831 357l-7 -3l-6 3l-4 5zM65 362l0 -3l-7 -2l-2 -5l-3 -2l-4 1l-5 7l-20 -6l1 6l2 -2l5 0l13 8l6 0l6 -4l5 0zM345 348l0 2l9 1l-3 -3zM764 352l1 2l5 -3l2 4l9 7l5 -1l8 -9l7 2l1 -1l-5 -4l-6 -1l-6 8l-5 1l-8 -9l-3 -1l-3 1zM210 356l-5 -4l0 -3l-2 -2l-5 2l-10 -1l-7 4l0 2l19 -2l2 -3l2 0l1 3l-3 2l0 2zM169 347l2 4l5 0l-1 -4zM548 345l-10 4l7 0l3 -2zM331 345l-4 1l-1 2l4 1zM816 348l8 -3l11 5l0 -3l-8 -1l-3 -2zM630 354l5 0l5 4l10 0l4 -6l4 -2l2 6l4 4l1 12l0 -17l-3 -3l-3 -8l-10 1l-1 6l-3 3l-4 -4l-4 0zM511 357l-4 -7l-9 -8l-4 0l-6 3l-9 -1l0 4l-2 2l-6 -1l0 7l4 -2l10 -1l5 -4l5 0l11 9zM68 342l19 13l7 0l-14 -9zM284 341l11 5l4 -2zM819 336l14 1l-1 -2l-7 -2zM585 335l-2 -2l-7 0l-6 3l-6 0l-4 3l6 -1l5 -3l7 2l5 0zM205 335l-3 -2l-8 1l-13 6l0 2l6 0l7 -7l7 1l4 5zM763 331l-9 4l-1 2l6 -1l4 -3zM66 346l0 -6l-7 -9l-13 7l-2 -1l-2 -5l-11 1l-7 8l9 9l3 1l6 -2l8 -6l3 0l4 3zM33 338l4 -1l2 4l-3 2zM802 340l-4 -11l-9 4l-4 4l-4 0l-4 -3l-13 1l1 4l10 6l3 0l3 -5l5 -1l7 -5l5 3l0 3zM95 325l0 3l2 2l5 -2l-2 -4zM630 325l0 7l6 3l1 8l3 0l4 -4l15 -4l3 3l4 12l0 -7l-3 -6l-1 -7l-8 0l-7 -3l-7 7l-6 -5l-2 -6zM359 326l-5 -2l-2 6l-6 3l-4 -4l3 -6l-3 -1l-2 2l0 7l-3 2l-6 0l-1 3l7 -2l12 0l6 -7l4 1zM473 321l-3 0l0 5zM569 321l16 0l17 3l-2 -2l-8 -2zM205 324l-7 -2l-2 -3l-3 0l0 4l3 4l-3 3l-3 0l-2 -2l0 -7l-7 0l0 5l2 -3l1 1l-1 6l3 2l10 -1l8 -5l1 1zM831 321l-8 -3l-8 6l-1 3l9 -4l8 1zM763 318l-4 0l-28 12l-1 2l23 -8zM802 320l-3 -3l-3 0l-5 5l-2 0l-5 -6l-2 0l-9 5l-5 0l-3 3l-1 4l3 -1l3 2l9 0l3 -8l2 0l4 6l3 0l5 -7l3 0l3 4zM511 332l-2 -6l-10 -12l-3 2l0 5l-9 5l-11 1l-6 7l1 4l11 0l3 -2l4 2l6 0l4 -4l8 -2l4 6zM479 330l1 -1l1 2l-1 1zM491 328l3 -1l2 4l-4 1zM629 318l1 1l5 -3l6 7l14 -5l5 5l6 3l-4 -9l-8 -5l-7 8l-3 0l-4 -4l0 -2l-5 -3zM645 309l-1 4l2 2l1 -4zM393 309l6 2l8 -3zM181 308l0 9l8 -4l7 -1l6 7l3 1l0 -2l-4 -2l0 -3l4 -4l-4 -1l-8 3l-5 0l-4 -3zM757 307l-20 4l-3 2l0 2l19 -5zM360 314l-10 -1l0 2l-4 2l-2 -4l5 -2l-1 -4l-7 1l-4 5l-10 -1l-4 -4l-3 1l2 2l3 0l3 4l5 0l2 2l14 1l6 -5zM25 309l-2 9l7 0l12 6l6 0l4 -3l9 0l3 3l2 7l0 -15l-5 3l-6 0l-4 -3l-7 5l-9 -5l2 -4l0 -3l-2 -2l-8 0zM30 308l3 2l-2 2l-3 -2zM597 305l-23 5l17 -1l5 -2zM412 306l4 1l2 -2zM469 304l0 5l3 0l1 -2zM93 306l1 4l7 1l2 -2l-3 -5l-5 0zM802 308l-4 0l-5 -4l-9 -2l0 7l-7 2l-8 -8l-4 4l-1 4l2 0l2 4l3 1l4 -3l10 -1l5 -5l2 0l5 5l4 0zM823 301l6 7l6 -1l0 -3zM805 302l6 1l7 -2l-8 -2zM629 301l0 4l3 -2l8 2l5 -5l2 0l19 13l1 -1l-5 -10l-3 -2l-17 -2l-5 2l-5 -1zM73 297l1 2l3 -1zM180 299l1 3l10 3l15 0l-5 -1l-3 -3l-1 -6l-8 0l-6 4zM469 313l8 2l5 -4l5 1l7 -4l6 2l7 -4l1 4l-2 2l0 4l3 4l3 1l-3 -5l0 -3l3 -3l0 -5l-7 -5l-5 -1l-4 -5l-3 0l-2 4l-7 6l-6 1l-3 7zM68 297l-3 -4l-7 -2l-5 5l-11 0l-6 6l-13 0l0 3l14 -1l5 -4l5 -1l11 9l-2 6l3 1l3 -6l5 1zM64 298l2 4l-3 2l-1 -4zM327 297l0 3l7 -5l4 2l4 5l14 -3l2 4l-3 5l6 -2l-2 -10l-15 2l-8 -10l-3 0l-1 4zM246 286l2 4l8 -2l-3 -2zM818 287l1 4l12 -1l-5 -5zM513 294l-10 -9l-22 0l-12 12l0 3l4 -3l10 -1l10 -7l8 0l9 7l3 0zM764 285l0 15l0 -12l2 -2l3 0l8 10l11 -1l8 2l6 4l0 -7l-6 -8l-12 4l-5 0l-9 -7zM104 285l-4 -2l-4 1l-1 6l5 0zM326 282l-2 2l2 1l1 4l1 -4zM808 281l-3 0l-2 2l0 3l2 0zM308 281l13 2l-3 -2zM629 284l0 10l9 -4l3 -5l6 0l5 5l5 -6l3 0l3 5l-1 5l5 6l-4 -14l-4 -4l-9 2l-11 -5l-5 0zM180 282l0 4l4 -1l6 5l16 2l0 -2l-5 0l-3 -2l0 -8l-2 -2l-6 0l-5 5zM327 278l3 0l4 4l5 0l4 5l12 -4l5 2l1 2l0 -4l-2 -2l-12 3l-4 -4l-5 -2l-4 -5l-2 0zM68 279l-7 -6l-3 0l-12 16l-5 -6l-7 0l-5 6l-4 1l-7 -1l-10 -5l-1 1l5 3l6 1l5 5l2 0l7 -4l1 -3l4 -3l7 7l5 0l11 -13l6 3l-1 7l2 1zM764 274l0 6l3 -3l4 0l9 7l9 -1l7 -6l6 3l0 -3l-3 -3l-12 -4l-18 0zM514 282l-7 -10l-13 -3l-11 2l-2 3l-6 1l0 5l-3 4l-4 1l0 4l5 -3l6 -8l9 -4l20 8l5 5zM242 271l3 2l9 0l-4 -4l-5 0zM536 267l4 3l10 -2zM397 268l1 4l4 -1l-3 -4zM318 269l8 3l6 -3l5 0l6 7l6 -3l13 4l-1 -12l-6 1l-7 4l-5 -5l-18 4zM564 264l-10 2l2 1zM68 270l-5 -4l0 -4l-3 -1l-8 9l-7 1l-8 -2l-6 7l-6 2l-3 3l1 2l17 -10l9 1l9 -6l3 0l6 5zM667 290l0 -17l-7 0l-2 2l-4 -2l7 -13l-2 0l-1 4l-4 3l-11 0l-6 3l-8 0l0 4l11 0l4 -4l3 0l5 8l10 0l3 3zM206 273l-1 -10l-7 -4l-18 6l-2 3l-5 -2l-7 1l6 3l9 0l7 -4l3 0l6 6l6 -1zM750 258l-3 2l2 0zM140 257l7 5l10 2l-7 -5l-6 0zM829 255l-5 -1l-6 7l-4 0l-4 3l0 2l5 -2l6 0l3 2l-2 3l-9 5l0 3l11 -5l5 1l6 -4l0 -3l-11 -2l6 -6zM763 257l0 2l7 2l14 0l18 10l3 -3l-3 -5l0 -5l-4 -4l-2 0l-5 6l-14 -6l-5 4zM467 267l0 2l5 0l6 -6l8 1l8 -5l13 7l5 5l3 0l0 -2l-13 -10l-1 -5l-5 -3l-9 1l-5 6l-10 3l-1 3zM763 250l0 3l3 -1zM536 249l0 2l3 1zM229 250l2 3l4 0l-2 -3zM397 249l0 2l7 1l-4 -4zM68 254l-2 -2l-16 -4l-6 7l-20 6l-2 2l-1 9l-9 -2l-5 -3l0 4l14 4l3 -4l4 -1l7 -10l6 -3l5 0l3 7l2 1l7 -9l10 0zM735 247l-2 0l-4 6l4 -2zM321 251l5 2l0 4l5 -1l6 4l13 -2l4 4l3 0l5 -3l-1 -7l-4 0l-2 6l-4 -2l-15 0l-4 -3l-2 -6l-2 1l-2 5l-3 -3zM567 248l-4 -3l-5 4l-6 -3l-2 1l3 5l4 -2l7 1zM807 243l1 4l4 1zM209 242l1 4l13 2l1 4l2 1l0 -3l-3 -2l1 -3l-6 0zM703 240l0 5l3 1zM628 257l5 1l2 -1l2 -5l3 0l0 10l13 0l3 -6l7 -1l3 4l-3 9l5 2l-3 -3l0 -3l3 -4l-1 -5l-15 -5l-6 -10l-2 1l-1 7l-2 2l-4 0l-5 6zM645 250l4 2l2 5l-1 2l-4 0l-3 -5zM406 238l4 3l16 4l-16 -7zM759 238l-3 -1l-9 6l-3 -2l-5 4l-1 3l4 0l3 -5l2 2l11 -4zM179 249l0 2l5 0l2 6l6 0l8 -5l6 2l2 2l0 4l13 5l-3 -4l-11 -6l0 -3l-6 -5l1 -7l-3 -3l-4 0l-4 5l-7 1zM189 250l4 2l-2 4l-4 -2zM198 241l-1 6l-2 2l-5 0l-4 -3l10 -6zM133 240l3 1l6 -2l17 10l6 6l5 0l-1 -3l-5 -2l-6 -8l-4 -1l-2 -3l-8 -1l-9 1zM708 236l0 3l6 1l0 -2zM67 237l-4 -1l-8 4l-16 0l-5 3l-1 6l-2 2l-3 -1l-3 -6l-3 0l-1 12l14 -2l2 -2l-2 -7l4 -3l15 1l10 -3l0 6l5 3zM515 257l-1 -10l-7 -1l-5 -9l-5 -2l-22 5l-8 9l0 3l5 0l4 -8l12 -3l4 5l9 -1l9 10zM305 235l-2 0l-2 3l3 1zM835 234l-5 2l-8 -1l-6 4l-2 4l9 -4l6 2l6 -3zM762 238l1 6l3 -2l6 1l11 8l6 0l5 -3l5 0l4 5l0 -8l-7 0l-7 -6l-14 2l-5 -3l-1 -4l-6 5zM622 234l-3 -1l-10 8l-9 2l-1 2l6 -3l4 0zM325 240l1 2l8 0l9 4l3 5l3 -1l-3 -3l0 -3l2 -2l11 2l3 3l1 -1l0 -9l-3 -3l-5 4l-5 -4l-6 4l-5 1l-4 -3l-1 -3l-2 0l-1 5zM79 232l6 4l6 0l-4 -3zM685 231l4 2l-1 -2zM226 228l8 3l-1 5l2 2l5 0l-7 -8zM586 227l2 4l3 -1l0 -2zM574 227l2 2l3 -1zM628 238l0 3l5 -1l2 6l2 1l3 -2l0 -6l7 -3l9 10l12 5l0 -2l-5 -5l0 -8l-4 -2l-6 -8l-2 1l-1 6l-9 4l-11 -2zM155 226l4 4l4 -1zM750 226l-7 0l-10 7l-2 -2l-3 3l-2 -2l-5 3l-4 0l2 2l7 1l6 -6l1 2l4 0l4 -3l5 -1zM693 223l-5 4l7 4l4 -6zM406 226l6 -1l4 3l-3 -5l-4 0zM381 223l-1 2l2 1zM269 224l-12 1l10 3zM763 227l0 2l14 0l5 6l3 0l4 -4l6 0l3 3l0 4l5 1l-1 -9l-11 -2l-5 -5l-8 -1l-3 5l-9 -2zM781 226l3 -1l1 2l-3 1zM760 222l-4 1l-3 5zM701 222l0 2l3 2l0 -3zM89 223l7 7l7 1l1 -2l-2 -5l-4 1l-7 -3zM832 222l-9 -1l-9 5l-7 1l-1 3l4 1l6 -4l16 -2zM468 222l-2 -1l-5 5l-3 -2l-3 6l11 -2l2 -2zM521 222l2 2l3 0l-3 -4zM516 240l0 -3l-4 -1l-7 -8l-2 -6l-7 -2l-5 3l-4 7l-9 -6l-5 0l-1 7l-6 1l1 3l4 1l3 -1l4 -5l11 2l4 -7l4 -1l9 9l3 6zM213 229l-4 -1l-1 -4l-6 -4l-7 0l-9 6l-8 2l0 5l9 -3l11 3l14 -1zM199 223l1 5l-4 3l-3 0l-2 -3l1 -3l4 -3zM528 219l4 3l4 -1zM70 232l-9 -7l-3 -6l-4 0l-5 5l-3 7l-6 -8l-8 -2l-8 7l-3 6l0 4l3 2l2 -1l2 -8l7 -5l2 0l3 3l1 4l3 2l13 -1l3 -2l6 0l4 2zM706 219l4 4l7 -1l-4 -4zM7 217l0 3l8 1l-1 -3zM691 217l-13 0l0 3l4 1l2 -2l7 0zM324 229l4 -5l8 4l4 6l3 0l5 -7l6 1l6 -6l4 0l0 -3l-4 -2l-18 0l-8 7l-2 -5l-4 -3l-3 3zM735 215l-7 4l-3 -3l-3 4l-3 -1l0 2l3 1l5 -4l2 3l4 -1l2 -2zM810 214l0 2l2 1l3 -1l0 -2zM746 214l-4 0l-1 4l2 1zM154 215l0 2l4 -1l3 3l6 -2l-7 -4zM424 210l1 2l5 1l4 3l11 -1l-11 -1zM692 209l3 5l4 0l-1 -3zM599 231l10 -2l0 3l2 -1l2 -6l13 -9l2 4l0 9l1 -5l3 -3l6 1l5 3l-5 5l1 3l3 0l4 -3l0 -6l3 -3l6 0l5 7l5 0l2 2l2 11l2 2l2 -2l0 -3l-5 -5l-1 -7l-4 -3l-3 -7l-8 1l-1 -4l-4 -2l-2 1l-1 5l-3 3l-4 0l-2 -2l-1 -9l-3 0l-4 6l-1 -1l-10 5l-5 5l-6 1zM631 211l2 1l-1 4l-2 -1zM197 209l-2 4l3 2l1 -4zM803 224l0 -7l-10 -9l-4 2l-1 7l-3 2l-4 -3l-2 -7l-6 0l-5 6l-5 1l0 2l7 1l2 -6l3 -3l3 0l3 9l8 1l3 -6l4 0l5 3zM562 208l3 3l2 -1l-2 -2zM817 213l13 -1l0 -2l-3 -3l-8 1zM410 206l1 3l8 4l-3 -5zM373 209l2 2l3 0l5 -4l-9 -1zM245 206l2 3l2 0zM138 206l1 4l3 -2l5 1zM578 206l-3 -1l-3 4l6 -1zM17 207l3 3l1 5l2 1l15 -3l5 6l3 0l7 -5l7 0l4 8l6 4l-1 -5l-4 -2l0 -9l-20 3l-3 -4l-7 -1l-10 4l0 -6l-5 -1zM91 204l0 4l3 3l6 1l1 -6l-7 0zM519 224l-3 -6l-15 -15l-6 4l-9 -2l-5 3l-6 0l-8 3l-2 3l4 1l3 3l9 0l-3 0l-3 -3l0 -3l2 -2l19 -1l4 5l8 0l7 7l1 5zM687 201l-1 5l4 0zM621 201l-5 0l-12 9l0 7l-11 10l5 -1l5 -6l3 -1l-1 -7l7 -5l8 2zM532 200l13 14l-1 -4l2 -5zM369 209l-3 -3l-1 1l-3 -2l-6 2l-8 -7l-3 1l-2 4l-5 -4l-6 0l-2 4l-7 6l0 3l4 -4l3 0l4 5l3 0l4 -3l9 0l4 -2l11 1l1 -2zM726 199l-2 3l-5 2l1 4l3 -1l1 -4l3 -3zM806 198l1 2l8 3l2 -1l-1 -4zM627 208l5 -3l4 1l3 4l4 -3l13 1l9 8l7 10l2 -1l-1 -4l-6 -4l-3 -16l-14 4l-5 -2l-4 -5l-6 0zM14 198l-4 4l-3 0l5 2l2 -2zM172 198l-2 -2l-6 6l-9 -1l-2 1l-1 4l4 -3l14 0zM804 210l-2 -7l-5 -2l-6 -7l-13 9l-9 -3l-4 -5l-2 10l-6 3l-6 7l0 2l5 -5l7 -3l4 -6l13 2l5 -4l13 1l3 3l1 5zM702 194l5 17l6 0l1 -3l-5 -1l-4 -4l0 -5zM158 195l0 2l2 1l3 -1l-2 -3zM71 195l1 4l13 10l0 -3l-5 -7l-6 -5zM567 193l0 3l3 -1zM427 195l2 4l8 3l5 0l10 -5l-2 -3l-2 0l-6 4l-10 1l-3 -6zM316 193l-10 2l-2 3l11 0zM109 193l1 2l8 4l-1 -3zM575 197l15 0l3 -3l-12 -2zM518 212l-1 -7l-11 -10l-11 -3l-6 2l-9 8l-4 -5l-4 -1l-7 8l-3 1l1 3l7 -4l3 -5l3 5l5 0l11 -9l4 0l8 3l5 7l4 1l2 6zM176 223l8 -5l5 0l2 -2l0 -5l5 -7l2 0l9 9l2 6l8 -5l6 9l0 -2l-7 -9l-7 -2l0 -4l-8 -5l-3 -4l0 -5l-2 0l1 5l-8 16l-4 3l-5 1zM622 193l-4 -3l-7 6l-5 1l-3 7l-6 -1l-4 3l-9 0l-1 3l2 2l12 -1l2 -3l6 -1l4 -8l9 -6zM366 194l-4 -4l-15 0l-10 4l-9 -2l-3 1l-5 7l3 0l5 -5l9 2l4 -3l6 -1l9 7l5 -7l5 5zM259 190l7 5l5 11l-3 -6l-1 -7zM746 188l-6 4l-4 0l-1 5l-6 7l0 2l9 -7l8 -9zM690 188l-2 3l3 2l1 7l7 3l1 -5l-7 0l3 -6l-1 -3zM369 188l3 5l14 -1l11 4l-6 -6l-8 1l-6 -3zM19 196l4 4l7 -2l10 2l11 -1l4 -4l6 -1l3 3l0 3l-3 3l-5 1l11 2l3 8l6 5l7 2l-3 -1l-4 -6l-3 0l-3 -3l0 -8l-3 -4l-1 -6l-3 -2l-21 4l-11 -7l-6 9zM627 195l7 -4l15 5l3 3l9 -4l4 0l3 3l0 9l2 4l7 2l-8 -6l-2 -12l-7 -3l-5 -5l-3 0l-5 6l-4 0l-7 -4l-5 0zM177 199l0 8l-2 2l5 0l0 -8l3 -3l6 2l2 -2l1 -7l3 -3l4 0l7 4l5 7l7 0l4 6l0 5l2 3l7 -2l8 9l2 0l-6 -6l-4 -8l-6 3l-2 -2l-1 -6l-3 -3l-9 -3l-2 -9l-16 2l-4 6l-5 1zM727 184l-3 7l-5 1l2 2l6 -6zM532 184l5 10l5 0l10 7l4 10l-1 -6l-5 -8l-14 -7zM751 202l8 -5l2 -7l4 -5l12 0l7 5l16 -3l3 7l0 -12l-4 -1l-7 6l-7 0l-5 -4l-5 0l-7 -3l-9 9l-1 8l-2 2l-4 0zM760 179l-6 5l-2 5l-7 7l-1 6l-3 4l4 -3l1 -5l8 -8l2 -6zM173 178l-8 1l-3 8l-11 0l-5 2l-7 7l2 1l4 -2l6 -7l11 0l5 -6l6 -2zM110 178l4 2l3 5l6 3l7 -1l0 -2l-2 -1l-4 1zM310 177l-2 2l-3 0l2 4l6 -1zM805 176l0 3l12 14l14 5l-1 -5l-4 -4l-9 0l0 -10l-5 1zM785 176l-2 1l0 3l2 -1zM318 183l1 3l6 -5l6 0l4 6l22 -4l10 5l0 -4l-3 -2l-1 -5l-5 0l-8 6l-6 -1l-3 -6l-6 4l-8 -1zM463 191l1 8l5 -6l3 -1l9 3l4 -4l10 -4l2 -6l3 -2l3 3l2 7l9 9l5 0l2 2l1 7l8 2l0 -2l-9 -9l-9 -5l-10 -16l-3 -2l-3 0l-2 2l0 5l-3 4l-4 0l-4 -4l-7 0l-2 2l-1 6l-7 -2zM437 175l1 4l1 -3zM626 179l3 4l15 3l2 -3l8 0l5 -2l3 2l2 6l6 6l2 9l2 2l10 0l-2 -2l-7 0l-3 -3l-7 -17l-4 -5l-9 1l-12 -7l-7 0zM177 189l0 3l3 0l11 -8l9 0l10 -4l4 4l1 5l3 3l17 6l3 3l1 4l0 -9l-10 -2l-7 -4l3 -4l0 -3l-3 -1l-4 4l-3 -6l-6 -4l-3 3l-7 2l-1 -10l-3 0l0 9l-2 2l-11 -1zM74 186l-7 -6l-1 -5l-8 -4l0 4l-2 2l-5 0l-9 5l-4 0l-5 -5l-6 -1l-10 6l-8 8l9 -1l2 2l3 0l0 -4l-5 1l-2 -3l2 -3l2 1l10 -2l13 7l2 0l1 -4l4 -4l10 1l2 4l4 2l5 -1l3 3zM688 170l-1 8l9 7l4 6l-1 -7l-4 -1l-3 -3zM570 170l1 4l6 0l-4 -1zM311 175l2 -2l3 0l2 -3l-7 -1zM561 168l2 4l-1 6l4 2l2 -2l-1 -8zM835 167l-3 3l2 3zM730 167l-1 6l-9 5l0 4l7 -5zM534 167l1 7l3 6l9 9l5 1l5 8l5 0l0 -2l-3 -1l-3 -6l-9 -3l-3 -7l-6 -5l-2 -6zM248 165l0 8l6 1l4 6l9 5l6 0l3 2l-9 -11l-8 3l-10 -10zM803 167l-12 -3l-3 5l-8 1l-7 -5l-6 0l-5 6l0 7l2 -2l0 -3l4 -2l7 8l3 0l2 -5l5 -3l5 4l1 5l6 -9l6 0zM805 163l0 3l7 6l9 2l5 8l9 2l0 -4l-8 0l-2 -2l1 -10l-4 -1l-3 2l-5 0zM622 163l-5 3l-5 -1l-6 8l-8 3l-5 4l-6 0l-4 6l-5 -5l-8 1l0 3l27 0l6 -7l8 -1l2 -5l7 -5zM455 183l16 -5l12 0l6 -8l7 -1l5 2l4 4l2 5l3 1l4 -3l2 1l2 6l10 8l-2 -6l-5 -4l-1 -8l-5 -1l-5 2l-4 -8l-6 -1l-4 -4l-3 0l-6 4l-6 9l-3 0l-5 -7l-4 5l-10 4zM293 163l3 8l7 -5l0 -3l-3 3l-2 0l-2 -3zM596 198l2 0l7 -6l6 -1l1 -3l6 -4l5 -12l7 -5l8 0l4 3l8 2l6 -6l5 -1l3 7l4 4l2 14l6 6l3 0l3 -3l0 -3l-7 0l-3 -2l0 -11l-6 -6l-4 -8l-5 -1l-5 4l-6 2l-7 -6l-3 0l-10 4l-2 4l-6 5l-1 5l-9 3l-2 4l-10 8zM318 178l5 0l5 -5l6 1l7 -4l3 2l3 7l3 0l3 -3l2 -6l7 3l7 -1l10 2l4 6l4 -4l4 -1l5 4l1 7l5 8l3 2l4 -1l4 2l-3 -5l-5 1l-3 -6l-5 -4l-1 -8l-11 -3l-12 1l-5 -3l-6 1l-4 -5l-5 0l-5 3l-8 -9l-10 -1l-7 10l0 6zM176 170l1 3l12 -10l8 3l7 -1l7 5l12 5l17 15l11 4l0 -3l-6 -3l-8 -8l-7 -1l-8 -8l-6 -3l-4 0l-8 -6l-7 1l-5 -4l-4 0zM533 158l2 3l6 3l3 7l9 0l5 3l0 -3l-13 -12zM7 180l0 3l2 1l6 -6l5 -2l1 -4l3 -3l15 7l2 -2l0 -5l3 -3l14 -1l8 -3l2 2l-5 3l1 3l4 0l1 -5l5 5l-4 4l1 4l6 5l4 8l8 5l-8 -8l-3 -7l-6 -4l3 -5l-1 -6l-10 -8l-7 2l-5 -3l-6 5l-6 1l-8 7l-10 -3l-7 11l-4 3zM802 151l-4 2l-15 0l-8 5l-11 0l-1 3l-6 4l-2 7l-5 6l1 1l5 -5l2 -6l8 -8l9 0l5 5l4 1l3 -3l-2 -6l2 -2l9 0l5 5l2 0zM730 149l-1 7l-5 4l-2 4l-3 -1l1 5l10 -10zM530 173l-4 -9l-8 0l-4 -2l-12 -12l-8 -3l2 7l-3 3l-4 -3l-6 0l-2 3l-2 0l-2 -6l-4 0l-6 9l-8 0l-3 4l1 5l-5 5l-7 2l-1 4l7 0l7 -7l7 -2l8 -10l6 4l3 0l6 -5l8 -1l4 -3l6 3l7 9l8 -1l9 12zM625 148l0 4l4 3l-3 6l6 -2l4 -4l4 0l6 7l7 -7l10 4l6 9l7 6l3 9l4 -1l0 -2l-14 -15l-3 -6l-8 -4l-4 -5l-3 0l-6 6l-8 -4l-4 -6zM7 162l0 6l1 -3l4 -3l17 1l4 -3l13 -3l2 -8l2 -2l6 0l6 3l13 12l5 9l6 5l3 8l8 10l4 -2l-1 -3l-7 -3l-4 -4l0 -4l-4 -9l-8 -5l-9 -14l-6 -5l-15 0l-2 2l-6 -2l-9 0l-2 11l-4 5l-8 -2zM244 169l-2 -1l-2 3l-2 0l-2 -2l2 -5l-3 -2l-6 0l-5 -8l-3 0l-3 4l-5 1l-4 -4l-2 -5l-11 -6l-10 8l-11 -1l-1 12l-6 0l-3 3l-4 0l-6 -3l-2 6l-13 12l-4 0l0 2l4 1l5 -2l12 -12l7 0l4 2l5 -2l2 -6l7 -8l9 -3l4 -4l8 3l8 9l8 1l6 3l7 8l6 1l3 4l0 -6zM593 143l-4 6l4 -4zM302 155l1 4l7 0l5 5l5 1l4 -8l6 -5l3 -5l5 1l0 7l12 -2l8 -4l10 10l25 6l10 14l8 1l5 4l1 7l4 -6l-8 -15l-3 0l-1 6l-2 2l-3 0l-9 -18l-5 0l-6 -3l-14 0l-12 -16l-3 0l-3 6l-6 4l-4 -2l-1 -6l-9 2l-6 7l-9 5l2 3l-1 3l-2 0l-4 -6zM834 139l-2 4l3 2zM835 159l-7 -1l-9 -6l-9 0l-8 -9l-3 -6l-6 -5l-3 0l-2 5l-5 4l-4 0l-2 -4l-12 3l-2 2l-1 8l-11 12l0 9l-5 3l-7 0l-3 8l-4 5l5 -2l15 -15l1 -8l6 -4l4 -6l2 -1l6 3l5 -7l5 2l8 -1l2 -2l-2 -5l4 -4l11 9l3 4l0 4l14 2l3 6l11 0zM580 163l0 6l4 -5l5 -1l7 7l2 0l9 -11l13 -8l0 -3l4 -5l13 -5l6 0l6 4l4 0l6 -4l3 3l2 10l7 10l5 3l4 6l3 -1l-2 -7l-5 -2l-7 -7l-6 -14l-4 -5l-5 5l-3 0l-5 -3l-14 0l-5 -5l-4 3l0 6l-7 11l-6 0l-5 3l-7 1l-5 5l-3 -1l1 -2l-3 3zM444 160l0 2l3 2l9 -9l7 -2l9 -10l14 4l0 -4l3 -3l6 -2l3 3l6 2l5 9l11 6l11 3l-10 -8l-1 -3l-5 -4l0 -3l-2 -2l-18 -7l-7 4l-3 0l-2 -7l-7 1l-15 17zM7 149l0 4l5 3l5 -6l6 3l2 -11l3 -2l10 1l4 -3l12 2l4 -2l6 3l11 11l8 2l8 7l1 13l6 10l6 2l-7 -6l1 -9l-4 -3l-1 -6l-8 -11l-9 -1l-20 -18l-5 -1l-5 3l-6 0l-6 4l-10 -1l-2 6l-4 4zM247 157l-11 -1l0 -7l-7 -4l-4 1l-7 -5l-9 3l-3 -3l-2 -7l-9 -4l-5 2l-5 5l-9 0l-9 3l-12 14l-7 -1l-11 10l-11 3l-4 -2l-6 2l-7 -3l9 8l21 0l2 -5l7 1l2 -3l0 -5l6 -2l3 -6l10 -9l15 -1l3 4l2 0l3 -3l0 -6l2 -2l6 1l3 8l3 2l13 0l5 3l6 0l1 2l-2 6l2 2l10 0l6 2zM297 154l0 2l9 -7l6 3l4 0l20 -14l7 0l5 6l2 -3l-2 -5l1 -1l6 1l4 -5l3 0l4 4l1 4l5 3l-2 7l4 4l12 -2l3 2l8 1l4 4l3 9l6 -2l5 1l6 4l1 7l2 2l6 -2l4 4l-4 -5l-6 1l-1 -8l-7 -4l-11 -1l-3 -11l-4 -3l-5 -1l-3 -5l-14 6l-1 -3l3 -2l-1 -4l-8 -3l-6 -9l-6 -2l-11 4l-4 5l-5 -3l-1 -4l-11 8l-1 5l-7 7l-3 1l-7 -3zM835 152l-11 -10l-5 0l-6 -4l-8 0l-2 -7l-4 -1l-3 -3l1 -6l-9 3l-5 7l-6 -6l-11 -1l-3 3l1 7l-9 7l-7 16l-15 12l-1 6l1 -4l4 -4l10 -3l2 -10l6 -9l12 -11l-2 -3l0 -3l2 -2l8 1l7 8l2 0l3 -6l4 -3l12 9l1 6l6 2l2 5l7 -2l15 9zM7 129l0 10l3 -2l4 5l3 0l6 -12l9 3l5 -6l21 0l5 4l1 4l9 1l-2 5l4 4l11 0l9 13l2 7l5 2l4 4l3 0l-3 -5l-8 -2l-1 -7l-5 -5l-2 -8l-3 -2l-10 2l-3 -3l3 -3l0 -3l-2 -2l-7 -1l-3 -8l-6 -5l-12 7l-9 -1l-7 -5l-7 0l-8 14l-4 -5zM594 153l6 -2l11 -12l7 -1l2 -2l1 -6l5 -5l7 0l5 -4l3 3l2 6l8 3l2 -3l0 -6l3 -3l3 0l5 6l0 8l7 8l1 6l13 11l1 5l5 1l5 5l1 7l5 3l3 7l3 0l4 4l-2 5l5 1l1 -2l-2 -6l-6 -3l-9 -9l0 -12l-9 -1l-5 -3l0 -5l-4 -8l-4 -2l-3 -6l-7 -5l-1 -7l-5 -9l-3 -2l-7 2l-5 6l-5 -8l-6 -3l-5 1l-11 12l0 6l-2 2l-6 -1l-4 6l-4 2l-3 -1l0 7zM531 149l-1 -8l-7 -6l-1 -3l-2 -1l-8 2l-5 -4l-1 -10l-4 -7l-3 0l-12 10l-6 0l-3 -2l-6 1l-6 12l-15 4l-7 8l4 0l5 -6l8 1l4 -2l9 -11l14 -3l3 6l3 1l3 -4l-5 -3l-1 -3l4 -3l5 -1l6 15l6 4l6 1l3 6l5 -3l2 1l1 3l-4 4l3 5l2 0zM827 109l0 4l2 1l1 -2zM340 107l2 4l0 -4zM131 128l1 7l3 -3l10 1l3 -1l5 -6l4 0l5 3l2 -3l1 -8l4 -6l11 3l10 0l5 -3l5 0l5 5l10 4l7 6l9 -2l2 3l-1 7l6 3l9 0l4 3l5 0l2 3l-5 4l5 4l7 2l5 5l3 1l4 -4l3 0l2 2l1 6l5 3l2 -1l1 -4l-1 -1l-3 3l-3 -2l-1 -10l-12 2l-10 -9l-1 -4l-5 -4l-14 0l-3 -3l-2 -8l-3 -4l-3 -1l-6 2l-7 -6l-7 1l-4 -3l-1 -3l-6 -2l-11 3l-6 -3l-11 0l-5 -3l-4 0l3 4l0 6l-5 8l-8 -1l-8 7l-4 0l-4 -5l-3 0zM423 106l-1 3l4 1l1 -3zM835 131l-11 -1l-7 -4l-5 1l-7 -9l0 -5l-3 -7l-8 0l-6 5l-6 0l-4 -5l-12 1l-2 2l-1 9l-13 13l-1 12l-8 7l-5 2l0 4l-4 8l12 -9l5 -9l2 -11l13 -14l1 -7l3 -3l2 0l3 3l0 4l4 2l7 -3l7 1l7 -5l4 3l3 10l5 5l8 -1l3 3l13 1zM777 114l2 -2l2 1l-1 2zM295 140l1 2l4 -2l13 0l8 -11l7 1l5 -9l10 2l6 -7l3 0l13 9l7 9l9 3l10 0l7 7l12 4l4 8l9 8l3 1l4 -3l9 -1l-8 0l-7 -10l-6 0l-15 -8l-14 -12l-7 1l-5 -5l-2 -5l-8 -3l-11 -14l-6 8l-4 1l-5 5l-14 -5l0 10l-7 2l-5 8l-7 3l-7 -1zM7 115l0 8l10 0l5 -7l9 0l6 -3l3 7l2 1l8 0l9 -6l11 8l1 6l8 1l11 7l4 5l1 7l11 9l-1 -3l-9 -9l-1 -5l-4 -6l-6 -2l-6 -5l-5 0l-2 -2l0 -5l-7 -3l-5 -6l-13 7l-3 -2l-2 -6l-5 0l-6 -7l-3 0l-4 7l-2 0l-3 -5l-2 1l1 9l-2 3zM593 134l0 3l3 -3l3 0l5 4l3 -4l0 -3l3 -3l4 -1l13 -16l6 -2l3 -3l3 0l6 9l5 1l11 -2l10 19l5 5l2 5l11 11l2 5l10 3l2 8l-1 5l2 2l3 0l2 2l0 3l7 4l-5 -8l-8 -5l0 -7l-3 -7l-6 -1l-3 -6l-3 -1l-9 -9l-2 -6l-11 -15l0 -6l-7 -9l-5 0l-5 5l-3 0l-7 -8l-3 -1l-5 5l-5 2l-13 16l-3 1l-5 -4l-3 0l-3 7zM294 131l0 2l3 0l9 -5l7 1l7 -9l0 -6l8 -7l5 4l3 0l2 -7l4 -2l3 3l1 4l3 1l5 -9l3 0l7 6l5 0l2 6l5 3l6 8l9 -2l7 6l2 0l9 13l7 3l9 1l7 9l3 0l3 -6l-2 0l-4 4l-3 -3l-1 -5l-6 -3l0 -5l-3 -4l-3 0l-4 5l-2 0l-3 -3l-1 -5l-16 -14l-5 6l-2 0l-14 -18l-5 -1l-4 -3l-20 1l-6 6l-3 -3l-3 0l-3 5l-6 4l-4 9l-9 -3l-4 3l1 7l-3 3zM347 104l1 -1l2 3l-2 1zM7 109l0 2l4 0l3 -6l9 -8l11 4l3 4l6 -3l8 2l9 -1l9 5l-4 5l8 4l12 11l7 0l3 3l6 15l12 13l3 -1l4 -7l17 6l12 -10l3 0l8 -5l14 -14l9 3l8 -6l5 0l9 5l6 7l5 -3l4 0l6 7l18 5l3 6l15 8l7 11l11 7l8 -1l-9 -2l-8 -5l-8 -11l-16 -10l-2 -7l-9 1l-7 -4l-5 -7l-12 -1l-7 -8l-10 -3l-7 0l-6 5l-8 -1l-5 -3l-1 9l-11 10l-13 -2l-3 2l-9 1l-1 9l-5 1l-3 -3l0 -5l-4 3l-5 -3l-7 5l-7 -10l0 -7l-3 -4l-5 -2l-5 -7l-8 0l-7 -5l1 -6l-2 -2l-8 -2l-11 -9l-6 6l-2 0l-9 -5l-12 -2l-6 7l-5 2l0 5l-3 3zM135 145l2 2l-1 5l-2 0l-2 -3zM146 143l3 -1l1 3l-2 1zM127 124l0 2l13 -8l10 0l3 -9l16 -12l6 8l4 -1l3 -4l3 0l4 8l7 -3l7 1l3 -2l5 0l13 12l13 0l4 5l0 7l4 -4l2 0l3 3l-1 3l4 0l13 13l7 -3l4 6l9 -2l4 4l1 4l1 -5l-4 -4l-9 0l-5 -4l-8 0l-6 -4l-7 -7l0 -6l-8 0l-8 -9l-6 -2l-7 1l-11 -9l-8 -2l-1 -7l-3 -2l-6 0l-6 6l-7 -3l-5 5l-10 -7l-2 1l-2 6l-8 5l-6 0l-3 -2l-8 3l-5 8l-1 6zM140 113l3 -1l1 2l-3 1zM830 92l-4 -1l-3 3l2 2zM831 117l-8 0l-1 -3l-5 -3l-15 -17l-11 -3l-5 6l-7 4l-3 0l-7 -8l-4 0l-4 9l-5 5l2 8l-5 4l-2 5l-5 4l-2 5l-12 14l5 -2l6 -6l4 -10l6 -8l6 -4l0 -10l7 -8l5 3l8 1l25 -3l9 10l6 3l0 3l-4 2l1 2l3 1l5 -4zM293 86l-1 5l1 2l2 0l1 -5zM558 129l1 5l2 0l8 -5l10 2l4 -2l6 0l3 -3l1 4l-3 3l-8 2l-4 4l-2 0l-6 -6l-3 3l0 6l-2 2l-6 -1l1 2l6 2l12 -3l4 4l2 0l4 -5l0 -5l7 -10l3 -8l3 -3l8 -1l1 -3l4 2l4 -1l2 -5l7 -6l5 -9l5 0l9 11l4 -5l6 -1l5 3l4 8l6 5l3 5l1 6l11 10l3 8l5 2l3 7l7 6l2 5l0 7l10 5l0 -3l-7 -1l-3 -3l1 -8l-9 -10l-2 -6l-6 -5l-3 -9l-10 -9l-5 -9l-7 -6l-1 -8l2 -2l0 -4l-4 -3l-3 0l-4 6l-9 1l-1 -2l3 -6l-1 -4l-3 0l-4 6l-10 -1l-5 10l-7 -2l-2 7l-3 3l-9 -2l-2 2l0 5l-4 3l-5 11l-1 -8l-5 7l-4 0l-6 -5l-4 6l-5 1l-3 3l-5 0zM292 117l2 6l2 0l9 -11l8 0l2 -4l5 0l2 -2l0 -5l7 -4l5 -6l10 -1l10 6l4 -1l3 -4l16 15l8 0l6 3l19 18l7 -2l3 1l15 16l3 0l0 -6l5 -5l12 -1l1 -3l-3 -5l9 -11l11 -4l6 5l13 1l-1 -5l2 -2l3 0l10 5l7 16l11 0l3 4l0 3l5 3l1 7l3 1l6 7l4 0l12 13l2 -2l3 2l4 -1l3 -6l7 0l11 -3l-6 0l-8 -3l-9 4l-3 -3l-3 11l-6 -7l-4 -8l-6 -1l-2 -3l-6 -1l-2 -2l0 -4l-8 -13l-4 -3l-5 2l-3 -2l2 -7l-16 -12l-11 0l-1 -2l-2 1l1 4l-2 2l-3 -1l-4 -5l-4 -1l-15 11l-7 9l0 4l-2 2l-7 2l-7 6l-3 0l-8 -8l1 -5l-4 -1l-10 3l-5 -4l5 -4l-1 -3l-5 3l-7 -3l-5 -5l0 -3l3 -4l-6 -2l-6 4l-7 -1l-11 -9l-6 -10l-9 1l-5 4l-8 1l-6 -1l-2 -5l-5 2l0 4l3 3l-2 3l-5 -1l-5 6l-4 2l-4 8l-4 1l-5 5l-5 -3zM561 158l3 -1l1 3l-3 1zM821 77l0 2l4 2zM7 86l0 7l9 -1l5 -7l5 -1l2 -4l4 -2l11 9l-1 7l3 1l5 -6l3 0l7 4l5 7l8 2l6 8l7 0l6 6l1 4l10 7l1 6l3 5l4 0l9 -6l6 3l0 -7l-3 3l-10 2l-5 3l-3 -4l-1 -7l-11 -8l-3 -9l-4 -4l-6 0l-6 -6l-1 -5l-5 -3l-7 -9l-3 0l-5 5l-4 0l-16 -10l-5 0l-5 6l-10 5zM442 96l0 2l2 0l3 -3l15 0l3 -12l2 -2l27 1l3 3l12 5l3 8l8 6l8 0l3 3l-2 7l1 2l8 2l2 8l10 2l8 13l-4 -12l-10 -5l-5 -8l-7 -2l0 -8l-9 -6l0 -6l-2 -2l-8 0l-5 -5l-3 -8l-6 1l-11 -5l-4 6l-7 0l-4 -3l-8 0l-4 3l0 12l-2 2l-7 -3l-7 0zM592 107l1 5l1 -4l9 -8l8 3l6 -10l6 -1l0 -6l5 -4l11 4l4 -5l6 0l3 5l0 5l6 -7l2 0l9 7l4 10l-1 4l2 4l6 6l2 6l9 8l3 9l6 4l1 8l5 1l3 6l5 -1l3 2l-7 -6l-2 -5l-5 -2l-2 -5l-6 -5l-3 -9l-8 -7l-2 -5l-6 -7l0 -5l-5 -7l-1 -6l-4 -2l-12 -14l-3 0l-5 5l-20 1l-16 21l-5 -3l-10 6zM7 72l1 8l12 -2l6 -6l17 0l3 5l6 0l7 -5l17 18l2 6l4 -1l3 -4l3 2l1 7l7 14l4 4l4 0l4 8l5 -1l3 2l2 -2l1 -9l5 4l1 -4l4 -4l6 -11l6 -1l5 -3l4 0l6 3l0 -7l6 -5l12 1l2 2l2 -2l6 -1l6 -5l6 5l9 2l5 8l6 2l5 4l3 0l4 -6l5 0l3 3l-2 5l1 2l7 3l4 5l13 1l6 3l-5 6l0 3l2 2l9 4l9 -1l6 3l6 0l0 -3l-6 0l-3 -4l-10 -3l-7 -12l-15 1l-4 -3l0 -7l-2 -1l-5 4l-3 -3l1 -4l-2 -4l-11 -3l-4 -5l-4 0l-7 4l-3 -5l-8 -2l-2 -3l1 -3l-4 -2l-10 0l-4 3l-15 -1l-4 2l-11 11l-10 4l-9 -1l-5 12l-2 2l-3 -3l-2 1l-1 8l-3 -2l-9 1l-2 -2l-4 0l-9 -13l-2 -9l-2 -2l-6 -1l-10 -8l1 -8l-2 -1l-5 2l-4 -5l-5 0l-4 5l-2 0l-2 -2l0 -3l-5 -2l-5 0l-5 4l-10 -1l-5 6zM820 83l-8 -5l-8 -9l-8 -4l-10 0l-8 6l-11 -5l-2 8l-9 8l-1 11l-9 7l-6 13l-7 7l-2 8l-7 5l-1 6l-2 2l-4 -3l0 7l4 0l2 -2l4 -9l3 -2l3 -9l8 -5l2 -9l4 -8l8 -5l5 -11l0 -5l10 -10l5 6l3 0l7 -6l11 -3l6 3l9 10l-1 7l7 1l4 -3zM702 64l2 6l3 2zM820 63l-1 5l3 1l0 -5zM289 76l7 0l5 3l6 1l16 -15l4 -1l9 2l4 -4l8 3l8 -1l17 14l6 2l4 8l4 -2l-2 -6l2 -2l5 0l4 9l3 3l5 1l5 5l9 -1l6 7l9 4l4 -3l-6 2l-5 -3l-8 -10l-4 -1l-2 -4l-8 2l-7 -6l-3 -6l-11 0l-11 -11l-10 -3l-15 0l-7 -3l-6 4l-6 -4l-8 3l-5 5l-8 0l-5 8l-8 -2zM190 58l-1 2l2 1l1 -2zM432 77l5 5l9 -4l7 -8l8 -1l3 -9l4 1l3 4l3 0l5 -5l8 2l4 -5l8 -1l13 12l11 6l11 13l-1 6l8 4l2 7l4 0l6 4l4 6l1 5l6 0l2 3l4 1l4 -6l13 -8l1 -7l3 -3l5 0l7 -5l1 -8l4 5l6 -2l7 -11l4 -4l6 -2l1 -4l4 -4l2 0l6 7l4 -1l6 -5l5 0l8 5l1 4l-2 7l9 5l-1 7l5 6l2 7l6 9l12 12l1 6l5 8l6 5l3 5l6 3l11 -11l4 -12l14 -10l0 -8l3 -8l7 -6l1 -5l5 -5l9 -1l6 5l3 0l8 -8l6 3l6 -1l10 8l0 5l7 2l-1 -4l-13 -11l-5 -7l-1 -5l-3 -2l-6 8l-8 -3l0 2l4 2l0 5l-3 3l-3 0l-5 -7l-9 -2l-10 18l-6 3l-5 12l0 7l-6 4l-5 1l-4 14l-12 12l-2 0l-4 -4l-1 -5l-9 -10l-3 -9l-13 -13l-5 -11l-5 -6l0 -8l-9 -7l0 -11l-6 -6l-9 1l-6 5l-3 0l-6 -6l-7 2l-13 15l-7 2l2 3l-2 4l-3 -4l-5 0l-2 2l0 7l-6 5l-6 0l-5 11l-11 -2l-4 2l-4 8l-5 -1l-7 -10l-9 -6l-1 -6l-5 -8l-16 -14l-2 -5l-6 0l-13 -12l-8 -1l-5 3l-15 0l-7 -4l-4 4l-5 2l-1 2l2 3l-5 1l-3 3l-1 5l-9 8zM7 61l0 6l5 0l6 -10l4 -2l6 0l5 4l-6 4l0 3l4 2l6 -7l16 2l7 -3l8 8l4 1l3 3l0 4l3 5l8 4l4 0l3 3l1 7l5 -4l4 4l5 12l7 0l2 -4l5 -4l1 -4l12 -13l4 1l5 8l6 -2l4 -7l7 -6l10 -2l5 -4l18 5l11 1l5 6l5 3l10 -2l3 6l13 10l11 3l5 -2l2 2l-2 6l2 2l10 2l4 4l3 7l5 1l5 -3l4 3l-3 -6l-6 -1l-11 -7l-6 0l-3 -3l2 -5l-1 -3l-22 -3l-4 -5l-5 -15l-4 0l-4 4l-6 2l-6 -5l-2 -4l-11 0l-14 -3l-9 -5l-4 5l-13 3l-6 5l-19 4l-2 4l-10 9l-5 9l-5 0l-9 -13l-5 -2l-4 -5l-4 -1l-4 -4l-5 0l-3 -3l-1 -5l-8 -6l-5 -12l-5 2l-6 6l-20 -7l-13 0l-5 3l-4 6l-2 0zM280 117l2 2l-3 3l-1 -3zM117 87l1 2l6 -1l10 -11l6 -3l10 0l8 -5l6 -10l4 -3l12 7l5 1l0 -7l2 -2l6 0l4 4l6 2l6 7l4 1l4 6l5 -3l1 -5l6 0l9 15l11 1l7 11l9 1l13 15l9 0l6 -7l3 0l8 -14l7 -1l4 2l1 -3l14 -13l5 -1l2 2l0 9l7 0l4 -4l7 1l7 -4l2 1l6 12l3 -5l3 0l2 2l-1 6l5 3l8 -3l10 6l1 10l10 -1l7 9l10 1l6 7l4 -1l-2 -2l2 -3l7 0l7 -3l7 -12l7 -4l5 -8l5 0l4 4l10 -4l6 0l7 3l5 9l13 8l5 10l5 3l1 5l4 2l4 6l5 1l8 8l3 6l2 -1l-1 -5l-6 -6l-1 -7l-3 -2l-5 4l-10 -9l3 -6l-6 0l-4 -5l0 -6l-4 0l-11 -7l-5 -11l-26 -7l-11 5l-6 9l-6 2l0 5l-4 7l-2 1l-5 -3l-8 1l-2 2l0 3l-3 2l-14 -6l-4 -4l-2 -6l-7 3l-3 -4l-1 -5l-5 -2l-6 -5l-8 2l-6 -9l-6 0l-7 -8l-3 0l-5 4l-8 -3l-4 6l-3 0l-1 -5l5 -4l0 -6l-3 -1l-5 4l-8 1l-11 11l-8 4l-8 0l-2 11l-8 6l-3 0l-4 -5l-4 -2l-8 2l-17 -19l-8 0l-6 2l-3 -1l-4 -6l-2 -8l-15 -6l-5 6l-2 0l-8 -9l-22 -6l-2 1l3 4l-1 3l-7 -5l-6 1l-8 5l0 5l-3 3l-5 1l-3 -4l-2 0l-7 6l-9 2l-1 7l-4 6l-6 -1zM278 106l3 -1l3 3l-5 1zM276 100l4 -2l2 3l-5 1zM577 51l-2 -1l-8 7zM835 46l-5 4l-5 0l5 2l2 -3l3 0zM288 62l0 2l10 0l9 -3l8 0l9 -4l5 -6l6 3l5 -4l7 0l2 2l-4 3l0 3l6 3l6 -1l2 -4l4 -2l5 7l7 1l6 9l4 2l12 -2l3 4l1 6l3 3l10 -2l9 7l1 4l3 3l0 -2l3 -2l2 2l-2 3l1 2l7 -4l4 -6l12 -1l3 -10l10 -3l6 -4l6 1l8 -3l11 5l9 -2l4 4l2 9l8 1l6 6l1 7l8 6l1 5l6 2l3 4l0 3l10 6l-5 -6l-3 -9l-8 -1l-2 -2l-1 -6l-8 -5l-4 -16l-5 -4l-4 0l-18 -15l-7 7l-7 0l-5 -2l-14 8l-10 1l-3 3l0 7l-2 2l-8 0l-7 4l-5 -1l-14 -14l-5 4l-6 1l-3 -3l-1 -6l-10 -9l-2 0l-5 7l-5 -4l-1 -6l-2 -2l-7 1l-3 -6l-11 -8l-5 2l-10 -1l-6 2l-4 -4l-2 0l-3 8l-4 4l-8 -1l-13 7zM520 78l3 2l0 3l-2 2l-3 -2l0 -3zM350 57l4 -3l2 2l-1 3l-3 0zM430 65l2 8l2 0l4 -4l4 1l4 -8l9 -7l5 -1l7 -8l14 4l4 3l8 -3l7 2l7 -1l3 4l4 0l5 7l3 0l4 3l0 7l10 6l10 10l1 10l6 4l6 8l5 1l2 -7l4 -3l8 -1l4 4l2 -2l0 -9l11 1l2 -2l1 -8l11 -8l6 -1l9 -8l-2 -8l3 -3l6 4l7 -2l11 1l5 -1l5 -8l12 14l1 14l10 6l1 10l7 14l13 13l3 8l7 6l2 0l-1 -6l-5 -1l-10 -15l-7 -5l-1 -10l-4 -4l-1 -11l-4 -4l-2 -5l-5 1l-2 -2l1 -8l-2 -4l-12 -13l-7 2l-11 -2l-11 1l-4 6l-5 2l-1 3l2 6l-11 9l-3 0l-3 -3l-4 1l0 4l-5 6l-3 9l-13 -1l-4 6l-10 -1l-1 3l-5 4l-5 -5l-5 1l-3 -2l-1 -5l4 -6l-3 -3l-5 -1l-8 -11l-4 0l-2 -2l-1 -7l-2 -2l-6 0l-3 -5l-11 -10l-7 4l-8 -3l-3 -3l-3 0l-3 4l-4 0l-4 -3l-7 0l-5 3l-3 6l-7 1l-3 4l-7 4l-10 0zM433 64l3 2l-2 3l-3 -3zM823 54l-17 -1l-1 -3l3 -6l-3 -3l-18 0l-14 7l-4 0l-3 -3l-3 0l-1 12l-6 4l-4 10l-4 4l-5 2l-1 9l-9 11l-1 9l-8 5l0 4l9 -7l1 -10l9 -10l2 -8l9 -8l3 -9l6 -4l4 -9l22 -2l2 -3l6 0l7 -3l2 4l-5 4l1 3l10 2l5 3l5 -2zM588 40l-6 5l3 0zM7 47l1 7l10 -6l8 0l4 -7l13 6l11 -1l6 3l4 0l5 4l4 9l6 4l0 6l2 2l6 0l12 12l4 1l4 6l8 -2l-7 -1l-5 -4l0 -2l-3 0l-5 -6l1 -6l-4 -2l-8 0l-2 -2l-1 -10l-8 -2l-6 -7l-5 -1l-8 -8l-11 3l-13 -7l-7 7l-6 0l-7 4zM829 35l2 2l2 -1zM117 70l2 5l4 0l1 -5l3 -3l7 -2l0 -6l2 0l2 3l12 -2l4 -4l10 -2l9 -8l10 0l3 3l6 2l5 -1l2 -3l7 -1l3 3l1 10l4 -4l8 1l14 9l3 10l2 0l4 -4l12 0l4 3l0 6l6 4l5 7l11 -1l6 6l-1 -10l-8 -8l-6 -1l-8 4l-2 -2l2 -5l-2 -3l-5 -2l-8 0l-6 -5l-11 -2l-10 -8l-8 -2l-7 -10l-12 0l-5 -7l-5 0l-14 7l-13 2l4 4l0 3l-3 3l-6 0l-10 5l-10 -3l-14 14l-3 -2zM186 42l5 -1l3 3l-3 5l-3 -1l-3 -3zM566 88l7 0l3 -2l13 0l2 -5l6 -5l5 -8l5 -1l4 -5l2 1l1 4l3 0l2 -2l0 -10l6 -3l7 -9l16 0l5 -6l5 -1l2 2l0 5l7 6l18 23l7 19l11 21l9 11l10 6l2 -3l3 0l2 -9l9 -8l5 -10l0 -4l7 -2l0 -9l3 -5l9 -7l-1 -6l9 -9l4 6l6 0l5 -3l13 2l8 -3l3 3l3 11l5 1l-3 -4l-2 -9l-5 -4l-14 2l-9 -3l-5 5l-3 0l-3 -6l-4 -1l-9 11l0 6l-11 11l-2 6l-6 5l-1 5l-3 4l-1 7l-8 6l-4 9l-3 2l-2 -2l-3 0l-7 -11l-4 -2l-3 -9l-4 -4l-6 -11l-4 -15l-8 -8l-2 -5l-7 -6l-11 -19l-6 0l-9 7l-5 -2l-9 1l-8 11l-4 0l-5 6l-4 1l-6 8l-4 1l-16 15l-8 -2l-4 4l-6 1zM293 57l5 0l3 -4l5 0l5 -3l9 1l3 -9l4 -5l2 0l6 6l22 -2l4 5l6 1l5 5l9 4l3 5l8 -2l14 11l11 -3l7 12l6 -3l-5 0l-3 -3l-2 -7l-15 -2l-4 -5l-7 -4l-1 -4l-3 -3l-6 5l-7 -2l-13 -14l-3 -1l-5 3l-7 -1l-13 3l-7 -7l-2 0l-9 14l-9 0l-3 -3l-3 0l-4 3zM409 33l0 4l3 0l2 -2zM249 31l17 15l1 4l1 -6l-9 -4l-5 -6zM601 30l-10 7l5 2l5 -5zM817 46l-17 -19l-16 2l-5 5l-11 -2l-2 6l-7 4l-7 16l-6 8l-8 4l-1 8l-4 8l-8 5l-1 10l-4 1l2 2l2 -3l2 3l2 -2l-2 -9l8 -4l1 -4l3 -3l1 -7l8 -6l11 -18l1 -6l3 -3l4 -1l4 -6l9 2l18 -9l3 2l2 6l5 1l3 3l3 7zM7 35l0 4l3 -2l7 2l9 -9l3 0l11 7l6 0l4 -3l4 0l6 5l3 6l8 2l5 6l11 -1l1 9l12 7l6 6l6 1l0 9l3 1l-2 -9l2 -5l-2 -2l-6 0l-13 -6l-4 -4l1 -8l-9 -2l-9 -10l-3 0l0 3l-2 2l-4 0l-2 -3l0 -5l4 -4l-3 -3l-23 5l-9 -6l-8 -2zM298 23l-4 3l-1 3zM117 60l3 1l7 -2l11 -9l9 -3l8 -9l17 -1l4 -3l18 -3l6 8l11 -2l6 7l4 -3l4 0l5 9l8 -1l6 7l10 2l5 7l7 3l5 6l9 -2l5 3l-1 -5l1 -1l1 3l3 -1l-3 -4l-10 0l-1 4l-3 1l-6 -7l0 -5l-2 -2l-16 -3l-3 -4l-1 -5l-12 2l-6 -9l-6 0l-5 -4l-8 -1l-2 -4l-10 -9l-7 7l-7 3l-4 -2l-6 6l-14 0l-12 10l-8 3l-7 7l-9 2zM283 51l2 2l3 0l10 -10l13 -7l9 1l7 -9l2 0l6 7l2 0l4 -8l8 4l7 -3l4 3l8 2l7 10l6 2l10 -2l5 4l4 7l8 2l4 4l13 5l6 -7l8 -4l6 1l7 -8l9 -5l10 -2l7 -5l4 0l6 3l16 0l13 10l5 8l4 -1l8 8l7 2l4 10l16 17l3 0l0 -2l-3 -1l-12 -12l-6 -13l-7 -2l-13 -11l0 -10l-2 -2l-6 5l-12 -10l-14 2l-5 -3l-6 -1l-9 7l-4 1l-16 -1l0 7l-4 6l-7 -2l-8 7l-1 3l-7 2l-8 -4l1 -3l7 -2l-1 -3l-5 0l-5 -3l-2 5l-7 1l-8 -11l-17 -1l-3 -3l0 -7l-11 -2l-4 -6l-5 -3l-4 6l-4 0l-5 -3l-6 6l-7 -6l-4 3l-5 8l-11 1l-11 7l-5 7zM227 19l9 9l5 0zM430 39l1 1l5 -4l11 -3l14 2l5 -7l5 -2l5 2l9 0l5 4l5 0l4 -3l4 0l3 3l3 0l5 -4l4 7l4 0l5 4l1 8l8 11l8 2l11 16l4 1l4 -2l-1 -5l-3 0l-2 2l-7 -6l-3 -8l-7 -1l-4 -3l-1 -10l-9 -9l-6 -1l-4 -7l-10 -2l-14 4l-1 -6l3 -5l-2 0l-10 8l-4 0l-3 -3l-4 -1l-13 9l-6 -2l-2 2l-14 4zM157 18l-5 5l-5 0l-12 5l-9 8l-7 2l-3 5l5 -6l5 0l6 -5l7 -1l8 -6l9 0zM660 17l-2 1l1 2zM825 39l-7 0l-2 -3l2 -6l-3 -1l-4 -5l-5 -2l-8 -8l-3 1l-1 5l-3 3l-5 -4l-9 2l-6 -7l-4 0l-2 7l-10 10l-3 8l-5 5l-1 8l-12 9l-3 11l-4 4l-2 6l-5 4l1 7l-1 -5l6 -4l1 -5l6 -5l0 -9l4 -4l5 0l7 -7l4 -9l1 -9l9 -10l5 -1l5 3l4 0l4 -4l12 1l4 -3l5 0l4 3l1 6l8 4l3 7l7 -1zM771 16l1 4l-3 2l-2 -4zM7 17l0 2l3 -1l5 7l3 0l5 -6l3 0l4 4l13 -1l5 4l12 -2l6 3l4 6l14 13l9 2l2 3l1 9l7 3l12 1l-2 -2l-8 0l-7 -3l-3 -10l-3 -3l-7 -1l-9 -10l-6 -4l-1 -3l-7 -6l-1 -4l-8 -4l-6 1l-3 4l-11 0l-4 -5l-7 1l-5 6l-5 -5zM283 41l1 1l5 -5l10 0l3 -7l12 2l11 -12l9 -3l14 2l5 -4l4 0l5 4l1 4l4 4l9 -1l3 4l1 6l11 0l8 4l4 6l6 -4l4 0l3 3l7 1l5 4l-5 -11l-6 -2l-5 4l-6 0l-2 -2l-1 -8l-7 2l-4 -4l-3 0l-4 5l-3 0l-5 -10l-9 1l-3 -3l-1 -5l-7 -4l-9 2l-16 -1l-4 4l-6 0l-5 5l-6 1l-3 3l-8 -1l-2 6l-3 3l-8 1zM67 13l1 9l5 7l6 1l4 7l8 3l12 16l8 2l5 -4l-6 1l-4 -4l-5 -1l-12 -15l-3 0l-7 -9l-4 -1l-5 -5l0 -3zM582 51l0 6l-2 2l3 0l0 -5l2 -3l6 -3l8 -1l9 -7l3 -6l6 -1l4 -5l8 -4l8 -7l4 -1l11 3l5 -5l4 -1l3 3l1 10l4 3l6 10l13 10l1 7l8 12l3 10l4 1l3 3l0 9l6 9l6 0l-5 -1l-1 -6l-4 -7l-1 -9l-7 -3l-14 -30l-10 -5l-3 -8l-8 -9l0 -5l-3 -5l-5 0l-5 3l-8 0l-9 -3l-16 15l-11 1l-3 10l-8 8l-8 0zM456 20l4 2l5 -4l16 3l10 -7l6 0l3 6l5 -4l8 0l3 5l6 3l-1 7l8 1l11 12l2 7l7 0l10 12l6 3l3 5l1 7l5 -3l7 -1l1 -7l6 -4l14 -1l16 -18l6 -2l7 -7l5 -2l4 -5l6 -1l4 3l10 -1l5 5l1 4l7 6l2 6l5 4l5 10l8 7l1 11l6 5l0 8l8 5l1 5l6 0l4 3l-3 4l0 4l3 2l-1 -13l-5 -1l-5 -7l-6 -3l0 -9l-6 -5l-1 -9l-9 -9l-3 -10l-24 -26l-6 1l-4 -3l-8 -1l-4 2l-5 7l-7 -1l-2 8l-8 3l-6 7l-5 -1l-9 3l-10 12l-6 3l-2 7l-6 0l-3 -5l4 0l1 -2l-4 0l-1 2l-7 -5l-3 -5l-5 -3l-3 -5l-24 -21l-14 -15l-17 -2l-8 3l-9 0l-2 2l-11 -2l-4 4zM594 57l5 -1l1 3l-3 2l-3 -2zM627 11l-7 5l5 -1zM121 47l13 -10l3 0l3 4l8 -3l5 -5l7 -3l6 -7l18 -1l6 -5l5 -1l4 2l11 12l9 -1l4 5l9 0l6 7l10 0l2 2l1 9l7 -4l4 6l6 2l4 4l6 -3l7 2l-4 -5l-3 -1l-5 3l-8 -2l-3 -3l-1 -4l-9 -9l-11 0l-2 -4l-3 -1l-13 -14l-3 0l0 5l-2 2l-5 0l-2 -3l4 -5l-1 -1l-12 0l-11 -6l-3 1l-1 5l-4 3l-16 0l-5 -2l-2 8l-3 4l-8 1l-6 5l-9 -1l-5 5l-6 2zM486 8l2 2l6 -1zM326 8l-9 4l0 5l-2 2l-6 -1l2 2l5 0l5 -8l5 -1zM642 7l5 3l6 0l3 -2zM194 7l8 5l14 0l-10 -5zM184 7l-9 2l4 2l0 4l2 0l-1 -5zM22 9l3 1l5 -3l7 8l3 0l6 -7l7 2l11 0l-4 -3l-21 0l1 4l-2 2l-3 -3l1 -3l-8 0zM792 5l4 3l6 1l3 3l2 6l6 2l0 -2l-2 1l-3 -2l-1 -5l-6 -6zM790 5l-4 0l-4 4l-5 -1l-2 2l-5 0l-4 -3l-3 2l-1 7l-10 10l-2 7l-6 4l-6 12l-8 10l-8 16l0 4l-6 5l-5 -7l1 4l3 3l4 -1l4 -4l1 -6l9 -16l7 -7l3 -9l8 -7l2 -6l10 -10l0 -8l3 -1l8 3l3 3l3 0l7 -4zM334 5l1 3l31 2l4 3l2 6l7 1l6 4l4 -1l9 4l-10 -6l-12 -4l-4 -5l-12 -6z"/></svg>
<div style="left:972px;top:172px;width:27px;height:1273px;background:#f0f0f0"></div>
<div style="left:972px;top:172px;width:27px;height:27px;background:#fafafa"></div>
<svg style="position:absolute;left:977px;top:181px" width="16" height="8"><path d="M0 8 L16 8 L8.0 0 Z" fill="#606060"/></svg>
<div style="left:973px;top:200px;width:25px;height:770px;background:#fbfbfb"></div>
<div style="left:973px;top:970px;width:25px;height:447px;background:#e4e4e4;border-right:2px solid #d8d8d8"></div>
<div style="left:972px;top:1419px;width:27px;height:26px;background:#fafafa"></div>
<svg style="position:absolute;left:977px;top:1428px" width="16" height="8"><path d="M0 0 L16 0 L8.0 8 Z" fill="#606060"/></svg>
<div style="left:134px;top:1449px;width:836px;height:26px;background:linear-gradient(#ffffff,#f2f2f2)"></div>
<div style="left:160px;top:1449px;width:1px;height:26px;background:#c8c8c8"></div>
<svg style="position:absolute;left:142px;top:1455px" width="8" height="15"><path d="M8 0 L0 7.5 L8 15 Z" fill="#606060"/></svg>
<div style="left:942px;top:1449px;width:1px;height:26px;background:#c8c8c8"></div>
<svg style="position:absolute;left:953px;top:1455px" width="8" height="15"><path d="M0 0 L8 7.5 L0 15 Z" fill="#606060"/></svg></body></html>
